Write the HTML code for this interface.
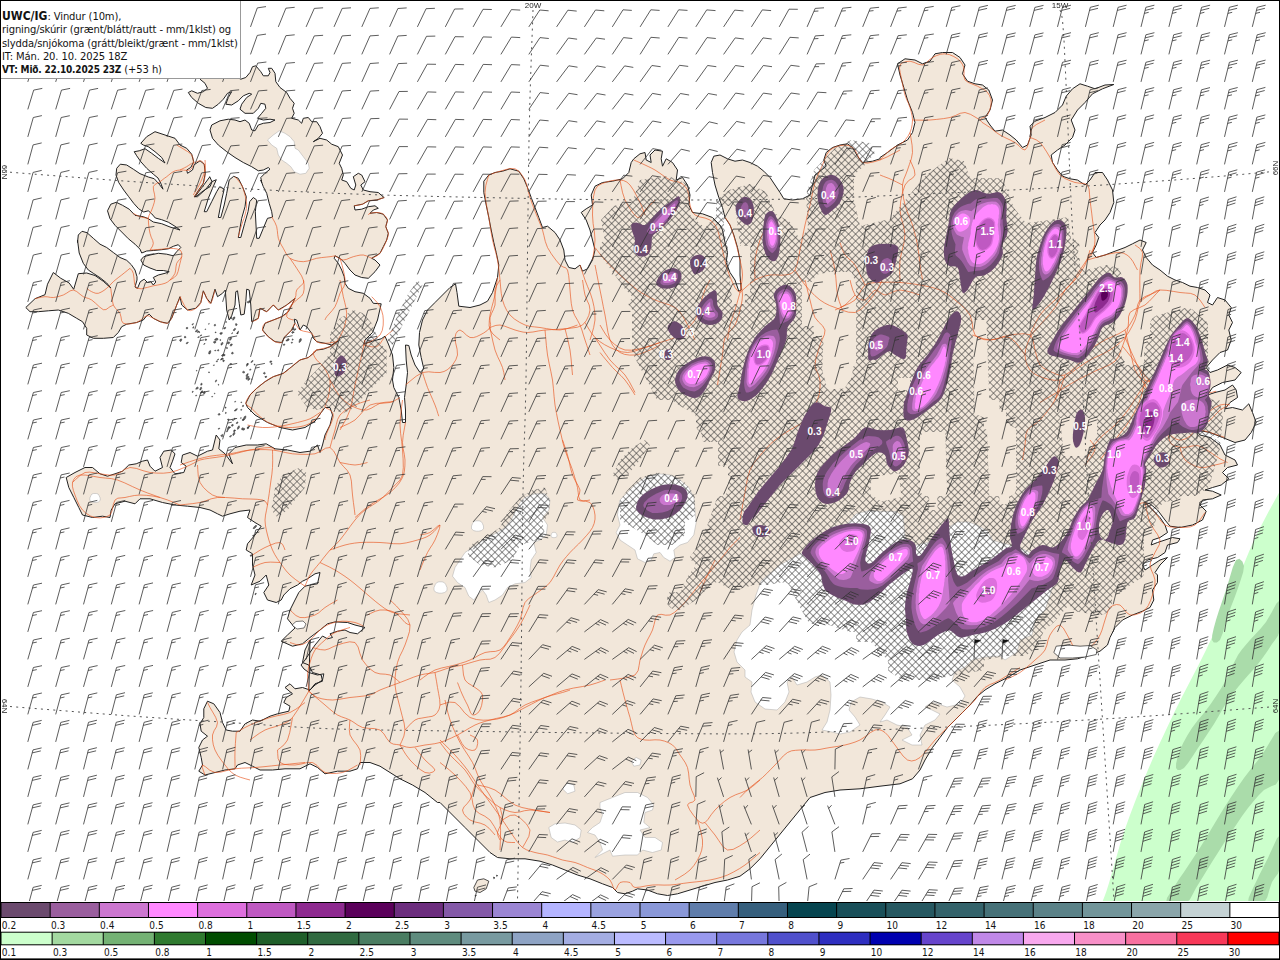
<!DOCTYPE html>
<html><head><meta charset="utf-8"><title>UWC/IG</title>
<style>
html,body{margin:0;padding:0;background:#fff;}
body{width:1280px;height:960px;position:relative;overflow:hidden;font-family:"Liberation Sans","DejaVu Sans",sans-serif;}
#lg{position:absolute;left:1px;top:1px;width:239px;height:77px;background:#fff;border-right:1px solid #999;border-bottom:1px solid #999;font-family:"DejaVu Sans","Liberation Sans",sans-serif;font-size:10px;line-height:13.25px;color:#111;padding:0;box-sizing:content-box;white-space:nowrap;letter-spacing:-0.12px}
#lg div{padding-left:1px;opacity:0.99}
#lg .l1{margin-top:9.1px}
#lg b{font-family:"DejaVu Sans Condensed","DejaVu Sans","Liberation Sans",sans-serif;font-weight:bold;letter-spacing:-0.17px}
#lg .l1 b{font-size:12px;letter-spacing:0}
</style></head><body>
<svg width="1280" height="960" viewBox="0 0 1280 960" style="position:absolute;left:0;top:0"><defs><pattern id="hx" width="5" height="5" patternUnits="userSpaceOnUse" patternTransform="rotate(45)">
<path d="M0,0.4H5M0.4,0V5" stroke="#383838" stroke-width="0.64" fill="none"/></pattern></defs><path d="M1280.0,491.0 1275.4,499.3 1268.9,511.1 1261.7,524.7 1255.0,538.0 1249.3,550.9 1243.8,564.3 1238.3,578.1 1232.5,592.0 1226.3,606.1 1219.8,620.4 1213.1,635.1 1206.0,650.0 1198.3,665.5 1190.0,681.5 1181.7,697.5 1174.0,713.0 1166.9,727.9 1160.2,742.3 1153.7,756.6 1147.5,771.0 1141.4,785.6 1135.6,800.2 1130.1,814.8 1125.0,829.0 1120.3,843.6 1116.0,858.4 1112.2,872.0 1109.0,883.0 1106.5,890.9 1104.5,896.4 1103.0,900.2 1102.0,903.0 1280.0,903.0Z" fill="#ccffcc"/>
<path d="M1280.0,600.0 1276.4,603.6 1271.3,613.0 1266.0,622.0 1260.7,628.4 1255.1,634.4 1250.0,640.0 1245.7,644.9 1241.9,649.4 1238.0,655.0 1234.1,662.6 1230.3,671.3 1226.0,680.0 1221.0,688.4 1215.6,696.8 1210.0,705.0 1203.9,712.9 1197.6,720.5 1192.0,728.0 1187.3,735.6 1183.2,743.0 1180.0,750.0 1177.6,757.0 1176.1,763.5 1176.0,768.0 1177.6,770.1 1180.4,770.1 1184.0,768.0 1188.1,763.0 1193.0,755.7 1198.0,748.0 1203.3,740.3 1208.7,732.1 1214.0,724.0 1218.7,715.9 1223.3,707.7 1228.0,700.0 1233.3,692.9 1238.7,686.2 1244.0,680.0 1248.8,674.5 1253.4,669.5 1258.0,664.0 1262.9,657.4 1267.8,650.4 1272.0,644.0 1275.4,639.5 1278.1,635.6 1280.0,630.0 1281.1,619.3 1281.3,606.7Z" fill="#aadcaa"/>
<path d="M1280.0,730.0 1275.3,733.0 1268.7,744.1 1262.0,755.0 1256.1,762.6 1250.1,769.9 1244.0,778.0 1237.4,787.5 1230.6,797.7 1224.0,808.0 1217.9,818.1 1211.9,828.1 1206.0,838.0 1199.8,847.9 1193.6,857.5 1188.0,866.0 1183.5,872.7 1179.6,878.3 1176.0,884.0 1171.4,891.0 1167.0,898.0 1166.0,903.0 1170.8,905.0 1179.0,904.8 1186.0,903.0 1189.9,899.5 1192.6,894.4 1196.0,888.0 1200.8,880.2 1206.3,871.2 1212.0,862.0 1217.9,852.7 1223.9,843.3 1230.0,834.0 1236.1,824.9 1242.1,816.0 1248.0,808.0 1253.5,801.2 1258.7,795.3 1264.0,790.0 1269.9,786.9 1275.9,784.4 1280.0,778.0 1281.9,762.0 1281.9,741.9Z" fill="#aadcaa"/>
<path d="M1280.0,835.0 1276.9,838.5 1272.4,848.2 1268.0,858.0 1263.9,866.0 1259.7,874.2 1256.0,882.0 1252.1,890.0 1248.7,897.7 1248.0,903.0 1251.9,905.3 1258.4,905.3 1264.0,903.0 1267.3,897.3 1269.6,889.3 1272.0,882.0 1275.0,877.5 1277.9,873.8 1280.0,868.0 1281.0,856.3 1281.2,842.6Z" fill="#aadcaa"/>
<path d="M1236.0,560.0 1232.8,567.3 1229.4,578.7 1226.0,590.0 1222.4,600.4 1218.9,610.7 1216.0,620.0 1213.8,628.1 1212.2,635.2 1212.0,640.0 1213.8,642.4 1216.9,642.6 1220.0,640.0 1222.6,633.6 1225.2,624.4 1228.0,615.0 1231.3,606.0 1234.9,596.7 1238.0,588.0 1240.8,579.7 1243.2,572.0 1244.0,566.0 1242.4,561.5 1239.3,558.7Z" fill="#aadcaa"/>
<path d="M25.8,307.5 35.0,298.7 45.0,294.7 47.5,284.2 53.3,272.5 60.8,278.3 69.2,283.0 73.7,289.3 78.3,273.7 86.7,273.0 95.0,275.5 103.3,281.3 110.8,288.0 106.7,283.0 100.0,277.7 93.3,273.3 88.3,270.0 83.3,263.3 79.2,253.0 77.5,240.0 77.5,242.5 78.3,235.0 82.0,231.3 87.0,232.7 93.3,238.3 100.0,244.2 106.7,247.5 113.3,252.5 120.0,257.5 126.7,260.3 131.3,264.7 135.0,270.0 137.0,276.7 137.0,280.0 135.0,287.0 137.5,288.3 140.3,281.7 144.2,279.2 147.5,282.5 150.8,281.7 153.3,285.0 155.8,282.0 153.3,277.5 158.3,275.0 165.0,273.3 169.2,271.7 163.3,270.5 156.7,270.5 150.0,268.0 143.7,265.0 140.8,260.0 143.7,256.7 150.0,255.0 158.3,253.3 166.7,254.2 173.3,255.8 176.7,251.7 180.8,247.5 178.3,244.7 173.3,246.3 168.3,248.8 161.7,249.7 153.3,250.5 146.7,251.0 141.7,253.0 140.0,249.2 135.0,244.2 128.3,238.7 121.7,232.0 115.0,225.3 110.0,218.7 107.5,210.8 110.8,204.2 116.3,202.3 122.5,205.3 129.2,209.2 135.0,215.3 143.3,216.7 148.3,218.7 153.3,222.0 161.7,223.7 170.0,227.0 180.0,230.0 175.0,226.3 168.3,222.2 161.7,219.7 155.3,218.0 151.7,213.8 148.3,210.8 143.7,212.0 138.7,208.8 133.7,203.3 128.7,196.7 123.7,190.0 118.7,182.5 116.0,175.0 116.7,168.3 120.3,164.2 126.7,165.0 133.3,169.2 140.0,173.7 148.3,177.0 154.2,178.7 159.2,184.2 163.0,189.2 160.8,183.3 158.0,178.0 153.3,174.2 146.7,168.3 140.8,161.7 136.7,155.8 134.2,151.7 139.2,150.8 145.0,148.7 151.7,153.3 158.3,158.3 165.0,163.0 161.7,157.5 155.0,151.7 148.3,146.7 143.3,145.0 140.8,143.3 146.7,136.7 155.0,131.7 165.0,135.0 175.0,138.3 180.0,145.0 186.7,148.3 191.7,154.2 193.7,161.7 190.8,167.5 186.7,170.0 187.5,173.3 192.5,170.0 194.2,164.7 200.0,160.8 204.2,164.2 205.3,173.3 203.3,183.3 198.7,190.0 194.2,197.0 197.0,195.8 203.3,190.8 210.0,186.7 212.0,181.7 209.7,176.7 209.7,177.0 202.5,186.7 195.0,196.7 197.5,196.7 205.8,189.2 211.7,181.7 216.3,179.7 212.5,188.3 208.3,198.3 204.2,211.7 206.7,211.7 211.7,201.7 216.7,191.7 219.7,186.7 224.2,189.2 221.7,200.0 218.3,217.5 220.8,217.5 224.2,205.0 226.7,193.3 229.2,180.0 233.7,176.3 238.3,178.3 242.5,186.7 246.3,196.7 245.0,206.7 241.7,218.3 238.3,237.5 240.8,237.5 244.7,223.3 248.0,211.7 249.7,201.7 253.3,197.5 256.7,200.0 255.3,211.7 256.7,238.3 259.2,238.3 263.3,228.3 267.5,218.3 271.3,217.5 272.5,217.0 271.7,211.7 269.2,203.3 266.7,193.3 263.3,186.7 260.8,180.0 261.7,182.5 260.8,177.5 265.0,173.3 270.0,169.2 268.3,167.5 263.3,170.0 258.3,170.8 251.7,166.7 243.3,162.5 235.0,157.5 226.7,151.7 218.3,145.0 212.5,138.3 210.0,130.0 211.7,125.0 220.0,120.8 228.3,119.2 235.0,120.0 240.0,121.7 245.0,120.0 249.2,123.3 251.7,130.0 255.0,130.8 258.3,125.0 263.3,123.3 270.0,122.5 275.0,120.0 270.0,119.2 263.3,120.0 257.5,118.3 261.7,113.3 265.8,108.3 265.0,104.2 260.8,103.3 258.3,108.3 253.3,113.3 245.0,113.3 240.0,109.2 241.7,104.2 246.7,97.5 251.7,94.2 249.2,93.3 243.3,95.8 238.3,100.8 231.7,105.0 225.8,104.2 228.3,97.5 231.7,91.7 227.5,93.3 223.3,99.2 218.3,104.2 212.5,108.3 205.8,107.5 198.3,103.3 191.7,97.5 188.3,92.5 191.7,90.8 197.5,93.3 203.3,91.7 207.5,88.3 205.0,83.3 200.0,79.2 211.7,73.3 225.0,71.7 240.8,79.2 245.8,77.5 250.0,72.5 252.5,66.7 255.8,65.8 260.8,71.7 263.3,75.8 268.3,75.8 270.0,72.5 268.3,68.3 271.7,68.3 275.0,73.3 275.8,81.7 280.0,87.5 286.7,92.5 290.0,98.3 294.2,103.3 292.5,108.3 294.2,113.3 291.7,118.3 298.3,120.0 301.7,123.3 303.3,118.3 308.3,117.5 311.7,121.7 316.7,121.7 320.0,126.7 322.5,133.3 318.3,138.3 313.3,141.7 320.0,138.3 326.7,140.0 331.7,144.2 338.3,146.7 342.5,155.0 339.2,163.3 341.7,168.3 343.3,175.0 341.7,180.0 346.7,181.7 350.8,188.3 354.2,190.0 355.8,185.0 353.3,176.7 358.3,173.3 361.7,175.0 365.0,181.7 360.8,185.0 363.3,190.0 370.0,191.7 378.3,192.5 383.0,196.7 384.2,197.5 376.7,200.0 368.3,200.8 362.5,204.2 354.2,205.8 355.0,210.0 361.7,209.2 368.3,206.7 375.0,205.8 378.3,208.3 373.3,210.0 370.0,213.3 376.7,212.5 383.3,214.2 387.5,220.0 385.8,226.7 388.3,233.3 386.7,240.0 383.3,246.7 380.0,253.3 371.7,258.3 375.0,260.0 380.0,265.0 375.0,271.7 368.3,278.3 361.7,277.5 355.0,275.0 350.0,270.0 345.0,263.3 340.0,258.3 335.0,255.8 334.2,258.3 338.3,263.3 341.7,270.0 344.2,276.7 345.0,283.3 348.3,288.3 355.0,291.7 363.3,293.3 370.0,298.3 373.3,303.3 381.2,303.8 377.5,320.0 372.5,332.5 365.0,340.0 363.8,343.8 372.5,341.2 381.2,338.8 385.0,336.2 388.8,345.0 392.5,355.0 393.8,367.5 392.5,380.0 393.8,387.5 398.8,397.5 401.2,410.0 402.5,422.5 405.5,422.5 405.5,410.0 404.5,397.5 406.2,385.0 407.5,372.5 406.2,360.0 405.5,345.0 408.8,345.5 411.2,355.0 415.0,365.0 420.0,372.5 423.8,368.8 421.2,357.5 418.8,345.0 419.5,332.5 422.5,320.0 427.5,310.0 435.0,302.5 442.5,295.0 450.0,287.5 455.5,283.8 457.0,292.5 458.8,306.2 470.0,307.5 480.0,305.0 487.5,301.2 492.5,292.5 497.5,277.5 498.8,265.0 496.2,252.5 493.8,242.5 491.2,230.0 488.8,217.5 486.2,205.0 483.8,192.5 483.8,181.2 488.8,175.0 495.0,172.5 502.5,171.2 510.0,168.8 518.8,171.2 523.8,178.8 527.5,187.5 531.2,197.5 535.0,207.5 538.8,217.5 542.5,227.5 547.5,226.2 555.0,232.5 560.0,240.0 563.8,250.0 565.0,260.0 568.8,267.5 575.0,268.8 580.0,265.0 582.5,271.2 587.5,268.8 592.5,260.0 595.0,250.0 592.5,240.0 590.0,230.0 586.2,220.0 581.2,212.5 586.2,208.8 592.5,205.0 591.2,195.0 595.0,186.2 602.5,182.5 612.5,181.2 622.5,178.8 628.8,172.5 631.2,162.5 633.8,158.8 640.0,153.8 645.0,152.5 646.2,160.0 651.2,162.5 650.0,155.0 655.0,150.0 662.5,151.2 661.2,158.8 662.5,166.2 666.2,158.8 672.5,162.5 677.5,170.0 676.2,180.0 682.5,177.5 687.5,185.0 690.0,195.0 688.8,205.0 692.5,212.5 702.5,213.8 712.5,217.5 720.0,225.0 722.5,230.0 725.0,242.5 727.5,252.5 726.2,262.5 730.0,272.5 735.0,280.0 738.8,291.2 741.2,290.0 740.0,275.0 740.0,260.0 737.5,247.5 733.8,235.0 730.0,225.0 725.0,217.5 722.5,207.5 718.8,197.5 715.0,185.0 712.5,172.5 711.2,162.5 713.8,156.2 720.0,155.0 727.5,158.8 735.0,161.2 742.5,160.0 750.0,162.5 757.5,166.2 763.8,171.2 770.0,177.5 775.0,185.0 780.0,192.5 783.8,198.8 792.5,200.0 802.5,198.8 810.0,195.0 812.5,185.0 815.0,175.0 820.0,171.2 826.2,166.2 823.8,160.0 826.2,152.5 832.5,147.5 840.0,145.0 847.5,143.8 852.5,147.5 857.5,156.2 862.5,162.5 872.5,161.2 880.0,158.8 880.0,157.5 887.5,152.5 897.5,145.0 907.5,140.0 912.5,132.5 915.0,122.5 912.5,112.5 907.5,100.0 903.8,87.5 900.0,75.0 897.5,63.8 905.0,58.8 915.0,60.0 922.5,63.8 930.0,61.2 935.0,53.8 942.5,52.5 952.5,52.5 960.0,57.5 965.0,65.0 962.5,73.8 967.5,81.2 975.0,83.8 982.5,85.0 988.8,90.0 992.5,100.0 990.0,110.0 985.0,117.5 990.0,125.0 995.0,131.2 1002.5,130.0 1010.0,135.0 1016.2,140.0 1022.5,147.5 1027.5,145.0 1031.2,135.0 1030.0,126.2 1035.0,121.2 1045.0,117.5 1055.0,112.5 1062.5,105.0 1066.2,96.2 1072.5,88.8 1080.0,83.8 1087.5,86.2 1095.0,88.8 1105.0,85.0 1113.8,84.5 1102.5,88.8 1092.5,93.8 1085.0,102.5 1077.5,110.0 1071.2,120.0 1075.0,130.0 1072.5,137.5 1065.0,145.0 1057.5,150.0 1051.2,155.0 1052.5,162.5 1057.5,170.0 1062.5,176.2 1070.0,178.8 1077.5,180.0 1085.0,185.0 1090.0,180.0 1095.0,172.5 1102.5,172.5 1107.5,180.0 1112.5,190.0 1113.8,202.5 1110.0,212.5 1105.0,220.0 1105.0,220.0 1100.0,225.0 1095.0,232.5 1098.8,237.5 1096.2,245.0 1092.5,252.5 1096.2,257.5 1105.0,255.0 1115.0,251.2 1125.0,247.5 1132.5,243.8 1140.0,240.0 1146.2,242.5 1142.5,250.0 1146.2,257.5 1152.5,265.0 1160.0,270.0 1167.5,276.2 1175.0,280.0 1182.5,282.5 1190.0,286.2 1197.5,287.5 1205.0,290.0 1210.0,295.0 1207.5,302.5 1212.5,305.0 1217.5,297.5 1225.0,300.0 1231.2,307.5 1228.8,315.0 1232.5,322.5 1228.8,330.0 1231.2,340.0 1227.5,350.0 1220.0,352.5 1212.5,360.0 1206.2,367.5 1210.0,372.5 1217.5,370.0 1227.5,365.0 1235.0,367.5 1241.2,372.5 1235.0,380.0 1222.5,382.5 1212.5,387.5 1207.5,395.0 1215.0,392.5 1225.0,390.0 1232.5,385.0 1236.2,390.0 1237.5,397.5 1230.0,402.5 1225.0,408.8 1232.5,407.5 1242.5,410.0 1248.8,403.8 1252.5,412.5 1256.2,422.5 1251.2,432.5 1245.0,440.0 1235.0,442.5 1222.5,437.5 1210.0,432.5 1196.2,430.0 1200.0,435.0 1210.0,437.5 1220.0,445.0 1225.0,455.0 1235.0,460.0 1237.5,465.0 1227.5,467.5 1222.5,472.5 1228.8,478.8 1221.2,485.0 1212.5,487.5 1205.0,490.0 1212.5,491.2 1221.2,495.0 1212.5,498.8 1202.5,500.0 1200.0,505.0 1206.2,511.2 1202.5,520.0 1192.5,525.0 1180.0,527.5 1170.0,526.2 1165.0,520.0 1157.5,510.0 1150.0,503.8 1145.0,502.5 1150.0,507.5 1155.0,512.5 1160.0,517.5 1165.0,525.0 1167.5,532.5 1160.0,537.5 1152.5,540.0 1151.2,545.0 1157.5,542.5 1165.0,540.0 1172.5,537.5 1180.0,538.8 1177.5,542.5 1167.5,545.0 1165.0,552.5 1157.5,557.5 1147.5,560.0 1142.5,565.0 1145.0,570.0 1152.5,565.0 1160.0,560.0 1167.5,557.5 1160.0,565.0 1155.0,572.5 1157.5,575.0 1157.5,582.5 1152.5,590.0 1153.8,600.0 1150.0,607.5 1142.5,611.2 1132.5,615.0 1122.5,620.0 1115.0,627.5 1110.0,637.5 1107.5,645.0 1100.0,651.2 1090.0,655.0 1077.5,658.8 1065.0,660.0 1050.0,660.0 1035.0,665.0 1020.0,670.0 1020.0,670.0 1007.5,677.5 995.0,683.8 985.0,690.0 977.5,696.2 970.0,705.0 962.5,712.5 955.0,720.0 947.5,727.5 940.0,737.5 932.5,747.5 925.0,760.0 920.0,770.0 912.5,778.8 900.0,783.8 880.0,786.2 860.0,788.8 840.0,790.0 825.0,792.5 810.0,797.5 760.0,858.8 750.0,868.8 740.0,876.2 727.5,880.0 715.0,882.5 702.5,886.2 690.0,890.0 677.5,893.8 667.5,895.5 657.5,893.8 647.5,890.0 637.5,888.8 632.5,891.2 625.0,893.8 617.5,892.5 612.5,887.5 602.5,883.8 590.0,878.8 577.5,875.0 565.0,870.0 552.5,865.0 540.0,861.2 525.0,858.8 510.0,858.8 497.5,857.5 490.0,852.5 477.5,840.0 465.0,827.5 452.5,815.0 440.0,802.5 437.5,802.5 425.0,792.5 412.5,785.0 400.0,778.8 390.0,772.5 380.0,766.2 370.0,762.5 360.0,762.5 357.5,768.8 350.0,771.2 337.5,771.2 325.0,773.8 317.5,767.5 310.0,763.8 300.0,768.8 285.0,768.8 272.5,770.0 260.0,770.0 252.5,766.2 245.0,762.5 237.5,765.0 235.0,768.8 225.0,770.0 215.0,772.5 205.0,775.0 198.8,771.2 202.5,765.0 201.2,757.5 198.8,747.5 202.5,740.0 207.5,736.2 201.2,731.2 200.0,723.8 203.8,717.5 203.8,708.8 207.5,701.2 213.8,703.8 220.0,712.5 222.5,722.5 226.2,730.0 232.5,731.2 240.0,731.2 245.0,723.8 252.5,720.0 260.0,721.2 270.0,716.2 277.5,713.8 288.8,711.2 290.0,706.2 283.8,702.5 286.2,697.5 292.5,693.8 285.0,687.5 290.0,683.8 295.0,688.8 302.5,687.5 310.0,690.0 315.0,683.8 322.5,681.2 321.2,675.0 312.5,672.5 308.8,665.0 302.5,662.5 305.0,650.0 310.0,640.0 308.8,691.2 315.0,685.0 322.5,680.0 323.8,673.8 317.5,675.0 308.8,672.5 304.0,669.0 301.0,665.0 305.0,660.0 310.0,652.5 315.0,645.0 322.5,636.0 327.5,638.8 332.5,637.5 330.0,633.8 337.5,631.2 345.0,630.0 350.0,632.5 357.5,633.8 365.0,627.5 355.0,625.0 347.5,622.5 335.0,621.9 327.5,623.8 320.0,630.0 310.0,637.5 302.5,643.8 292.5,646.2 281.2,641.2 287.5,635.0 295.0,628.0 287.5,618.8 290.0,610.0 295.0,600.0 298.8,592.5 305.0,586.2 310.0,585.0 317.5,583.8 320.0,572.5 315.0,573.8 307.5,578.8 302.5,581.2 297.5,585.0 290.0,588.8 283.8,595.0 281.2,600.0 276.2,602.5 267.5,600.0 263.8,592.5 268.8,585.0 266.2,575.0 260.0,581.2 251.2,585.0 255.0,575.0 252.5,565.0 252.5,553.8 246.2,550.0 247.5,543.8 255.0,535.0 261.2,526.2 255.0,522.5 247.5,517.5 250.0,510.0 240.0,511.2 230.0,513.8 222.5,516.2 217.5,513.8 210.0,510.0 200.0,507.5 187.5,506.2 175.0,505.0 162.5,502.5 150.0,498.8 140.0,498.8 135.0,503.8 125.0,501.2 115.0,503.8 111.2,510.0 110.0,517.5 102.5,516.2 92.5,517.5 82.5,515.0 78.8,507.5 73.8,497.5 68.8,487.5 66.2,477.5 75.0,472.5 85.0,467.5 92.5,467.5 100.0,473.8 107.5,476.2 115.0,473.8 122.5,471.2 128.8,465.0 136.2,463.8 142.5,461.2 147.5,460.0 150.0,466.2 155.0,471.2 162.5,467.5 160.0,457.5 163.8,451.2 171.2,450.0 175.0,453.8 172.5,461.2 170.0,467.5 175.0,473.8 183.8,472.5 186.2,466.2 181.2,462.5 182.5,455.0 190.0,452.5 197.5,456.2 207.5,451.2 212.5,450.0 216.2,435.0 220.0,440.0 218.8,448.8 225.0,453.8 232.5,463.8 228.8,453.8 235.0,447.5 246.2,445.0 257.5,445.0 266.2,443.8 275.0,448.8 287.5,450.0 300.0,452.5 310.0,451.2 317.5,445.0 320.0,452.5 322.5,445.0 325.0,435.0 330.0,425.0 332.5,415.0 330.0,407.5 325.0,407.5 321.2,412.5 315.0,421.2 305.0,427.5 292.5,430.0 280.0,427.5 267.5,422.5 255.0,415.0 247.5,407.5 245.8,403.3 250.0,395.0 256.7,388.3 265.0,381.7 273.3,376.7 283.3,373.3 291.7,366.7 300.0,360.0 308.3,357.5 313.3,353.3 316.7,350.0 323.3,349.2 330.0,346.7 338.3,340.8 336.7,341.7 331.7,345.0 325.0,343.3 316.7,341.7 313.3,338.3 311.7,333.3 306.7,326.7 303.3,325.0 300.0,330.0 296.7,320.0 294.2,319.2 295.0,323.3 291.7,330.0 285.0,336.7 281.7,342.5 275.0,341.7 268.3,336.7 262.5,330.0 265.0,323.3 273.3,320.0 281.7,316.7 288.3,311.7 295.0,298.3 286.7,305.0 278.3,310.0 273.3,305.0 266.7,311.7 260.0,308.3 258.3,318.3 251.7,321.7 250.8,305.0 249.2,290.0 246.7,289.2 245.8,301.7 244.2,314.2 240.8,315.0 239.2,303.3 237.5,290.8 235.8,291.7 235.0,305.0 231.7,315.8 229.2,320.0 226.7,310.0 225.3,290.0 222.5,293.3 217.5,296.7 215.0,289.2 210.8,303.3 206.7,298.3 203.3,290.8 200.8,302.5 195.8,308.3 187.5,310.0 181.7,305.0 180.0,296.7 176.7,305.0 174.2,311.7 171.7,318.3 167.5,323.3 160.0,321.7 153.3,318.3 149.2,314.2 146.7,315.8 143.3,320.0 136.7,322.5 126.7,324.2 121.7,326.7 118.3,332.5 113.3,337.5 103.3,338.3 93.3,338.3 86.7,335.0 86.7,328.3 82.5,321.7 76.7,318.3 68.3,313.3 58.3,310.0 48.3,310.8 38.3,311.7 30.0,311.7Z" fill="#f2e7da" stroke="#222" stroke-width="1" stroke-linejoin="round"/>
<path d="M267.5,140.0 273.3,135.0 279.2,130.8 285.0,133.3 290.0,136.7 294.2,141.7 295.0,148.3 298.3,150.0 303.3,156.7 308.3,163.3 309.2,168.3 305.8,173.3 300.0,174.2 294.2,171.7 290.8,166.7 286.7,163.3 281.7,160.0 278.3,155.0 276.7,148.3 271.7,145.0Z" fill="#fff" stroke="#aaa" stroke-width="0.5" stroke-linejoin="round"/>
<path d="M100.2,498.0 100.2,500.4 98.4,502.0 96.0,502.5 94.0,502.5 91.6,502.0 89.8,500.4 89.8,498.0 90.9,495.6 91.9,494.0 93.7,493.5 96.3,493.5 98.1,494.0 99.1,495.6Z" fill="#fff" stroke="#aaa" stroke-width="0.5" stroke-linejoin="round"/>
<path d="M525.0,497.5 535.0,493.8 545.0,493.8 550.0,500.0 548.8,510.0 542.5,517.5 547.5,525.0 546.2,535.0 540.0,540.0 533.8,542.5 536.2,552.5 531.2,560.0 530.0,570.0 531.2,577.5 525.0,582.5 515.0,583.8 507.5,587.5 502.5,595.0 495.0,600.0 488.8,602.5 486.2,595.0 482.5,590.0 477.5,595.0 473.8,600.0 468.8,596.2 465.0,587.5 457.5,582.5 452.5,576.2 455.0,567.5 460.0,560.0 465.0,552.5 472.5,547.5 480.0,542.5 487.5,537.5 497.5,532.5 505.0,527.5 511.2,520.0 516.2,510.0 520.0,502.5Z" fill="#fff" stroke="#aaa" stroke-width="0.5" stroke-linejoin="round"/>
<path d="M620.0,500.0 627.5,492.5 635.0,485.0 645.0,477.5 657.5,473.8 670.0,475.0 680.0,480.0 688.8,487.5 693.8,497.5 695.0,510.0 696.2,522.5 693.8,535.0 687.5,542.5 680.0,545.0 673.8,550.0 675.0,557.5 670.0,561.2 663.8,557.5 660.0,552.5 653.8,553.8 651.2,560.0 645.0,562.5 637.5,558.8 635.0,550.0 627.5,545.0 620.0,540.0 616.2,532.5 620.0,525.0 617.5,515.0 618.8,505.0Z" fill="#fff" stroke="#aaa" stroke-width="0.5" stroke-linejoin="round"/>
<path d="M483.5,526.0 483.5,528.8 481.4,530.6 478.7,531.2 476.3,531.2 473.6,530.6 471.5,528.8 471.5,526.0 472.7,523.2 474.0,521.4 476.0,520.8 479.0,520.8 481.0,521.4 482.3,523.2Z" fill="#fff" stroke="#aaa" stroke-width="0.5" stroke-linejoin="round"/>
<path d="M447.0,587.5 447.0,590.5 444.8,592.4 441.8,593.2 439.2,593.2 436.2,592.4 434.0,590.5 434.0,587.5 435.3,584.5 436.7,582.6 438.9,581.8 442.1,581.8 444.3,582.6 445.7,584.5Z" fill="#fff" stroke="#aaa" stroke-width="0.5" stroke-linejoin="round"/>
<path d="M557.0,535.0 557.0,536.4 556.0,537.3 554.6,537.6 553.4,537.6 552.0,537.3 551.0,536.4 551.0,535.0 551.6,533.6 552.2,532.7 553.3,532.4 554.7,532.4 555.8,532.7 556.4,533.6Z" fill="#fff" stroke="#aaa" stroke-width="0.5" stroke-linejoin="round"/>
<path d="M600.0,802.5 612.5,797.5 625.0,792.5 637.5,792.5 647.5,797.5 653.8,805.0 652.5,810.0 645.0,812.5 643.8,822.5 650.0,827.5 640.0,830.0 645.0,837.5 655.0,837.5 662.5,842.5 661.2,850.0 652.5,852.5 642.5,850.0 637.5,855.0 625.0,855.0 612.5,856.2 610.0,850.0 605.0,852.5 595.0,857.5 602.5,850.0 600.0,842.5 595.0,835.0 587.5,832.5 592.5,827.5 600.0,822.5 602.5,815.0 600.0,807.5Z" fill="#fff" stroke="#aaa" stroke-width="0.5" stroke-linejoin="round"/>
<path d="M548.8,827.5 555.0,823.8 565.0,823.0 575.0,825.0 581.2,830.0 580.0,837.5 572.5,842.5 565.0,840.0 557.5,842.0 551.2,837.5Z" fill="#fff" stroke="#aaa" stroke-width="0.5" stroke-linejoin="round"/>
<path d="M562.5,788.8 567.5,782.5 573.8,785.0 575.0,791.2 567.5,793.8Z" fill="#fff" stroke="#aaa" stroke-width="0.5" stroke-linejoin="round"/>
<path d="M631.2,761.2 636.2,757.5 641.2,760.0 640.0,765.0 633.8,766.2Z" fill="#fff" stroke="#aaa" stroke-width="0.5" stroke-linejoin="round"/>
<path d="M802.5,552.5 820.0,540.0 832.0,527.0 847.0,524.0 856.0,514.0 869.0,510.6 882.5,511.5 895.6,511.5 903.0,516.0 904.0,525.6 905.0,537.0 912.5,546.0 927.5,542.5 938.8,533.0 948.0,527.5 957.5,522.0 968.8,522.0 978.0,525.6 987.5,531.0 993.0,540.6 1010.0,545.0 1025.0,550.0 1042.0,560.0 1055.0,580.0 1050.0,595.0 1045.0,610.0 1035.0,620.0 1032.0,635.0 1020.0,640.0 1017.0,652.0 1005.0,660.0 1000.0,656.0 985.0,657.0 972.0,660.0 965.0,667.0 955.0,672.0 952.0,680.0 960.0,687.0 965.0,696.0 960.0,704.0 947.0,707.0 932.0,702.0 925.0,707.0 932.0,710.0 940.0,714.0 935.0,720.0 925.0,725.0 920.0,735.0 922.0,745.0 912.0,745.0 902.0,740.0 912.0,735.0 907.0,727.0 897.0,725.0 887.0,720.0 880.0,722.0 885.0,715.0 890.0,707.0 882.0,702.0 872.0,699.0 860.0,697.0 851.0,702.0 849.0,710.0 855.0,717.0 860.0,725.0 850.0,732.0 840.0,734.0 832.0,732.0 822.0,730.0 827.0,722.0 830.0,710.0 831.0,695.0 830.0,682.0 822.0,675.0 815.0,677.0 807.0,682.0 797.0,685.0 792.0,677.0 787.0,682.0 789.0,692.0 785.0,702.0 777.0,710.0 765.0,709.0 755.0,702.0 751.0,692.0 752.0,682.0 745.0,677.0 745.0,670.0 737.0,662.0 734.0,652.0 737.0,640.0 742.0,632.0 750.0,625.0 752.0,610.0 756.0,595.0 761.0,581.0 780.0,565.0Z" fill="#fff" stroke="#aaa" stroke-width="0.5" stroke-linejoin="round"/>
<path d="M308.8,691.2 310.8,693.0 313.8,695.5 317.5,697.5 321.9,698.8 327.1,699.7 332.5,700.0 338.1,699.5 343.9,698.5 350.0,697.5 356.9,696.8 364.0,696.0 370.0,695.0 373.7,693.6 376.3,691.9 380.0,690.0 385.9,687.7 393.0,685.1 400.0,682.5 406.9,679.8 413.7,677.1 420.0,675.0 425.4,673.9 430.2,673.3 435.0,672.5 440.1,670.9 445.2,669.1 450.0,667.5 454.2,666.6 458.1,665.9 462.5,665.0 468.1,663.4 474.2,661.6 480.0,660.0 485.3,659.4 490.3,659.2 495.0,657.5 499.4,653.5 503.4,648.1 507.5,642.5 511.8,636.9 516.0,631.1 520.0,625.0 523.9,617.8 527.5,610.3 530.0,605.0M308.8,691.2 313.1,695.0 319.3,700.2 325.0,705.0 329.4,708.8 333.5,712.2 337.5,715.0 341.7,716.9 345.8,718.3 350.0,720.0 354.0,722.5 358.0,725.3 362.5,727.5 368.2,728.3 374.5,728.6 380.0,730.0 383.9,733.8 386.9,738.7 390.0,742.5 393.3,744.1 396.7,744.5 400.0,745.0 403.1,746.0 406.3,747.0 410.0,747.5 414.6,747.0 419.8,746.0 425.0,745.0 429.9,744.4 434.8,743.7 440.0,742.5 445.6,740.5 451.6,737.9 457.5,735.0 463.4,731.7 469.4,728.1 475.0,725.0 480.0,723.0 484.7,721.5 490.0,720.0 496.5,718.4 503.5,716.9 510.0,715.0 515.2,712.8 519.8,710.3 525.0,707.5 531.4,704.2 538.3,700.6 545.0,697.5 551.4,695.4 557.5,693.8 562.5,692.5 566.0,691.4 568.4,690.6 570.0,690.0M350.0,720.0 349.6,723.9 349.3,729.4 350.0,735.0 353.0,740.0 357.0,745.0 360.0,750.0 360.7,755.6 360.4,761.1 360.0,765.0M400.0,745.0 401.7,741.4 403.9,736.1 405.0,730.0 404.1,723.1 402.0,715.3 400.0,707.5 398.1,700.0 396.1,692.5 395.0,685.0 395.1,677.3 396.0,669.6 397.5,662.5 399.7,656.4 402.5,650.8 405.0,645.0 407.4,638.3 409.5,631.4 410.0,625.0 407.8,619.4 403.9,614.4 400.0,610.0 396.3,605.9 392.6,602.4 390.0,600.0M400.0,745.0 402.4,749.0 405.9,754.6 410.0,760.0 414.8,764.9 420.2,769.5 425.0,772.5 429.4,773.1 433.3,771.9 435.0,770.0 433.1,767.3 429.1,763.8 425.0,760.0 421.3,755.6 417.6,750.8 415.0,747.5M440.0,742.5 442.4,745.6 445.9,750.2 450.0,755.0 454.8,759.8 460.2,764.9 465.0,770.0 468.6,775.1 471.7,780.2 475.0,785.0 479.0,789.4 483.2,793.6 487.5,797.5 491.6,801.2 495.6,804.6 500.0,807.5 504.8,809.8 509.9,811.6 515.0,812.5 519.8,812.0 524.6,810.7 530.0,810.0 537.0,810.6 544.6,811.7 550.0,812.5M475.0,785.0 473.8,789.1 472.0,794.8 470.0,800.0 467.1,803.7 464.0,806.9 462.5,810.0 463.6,813.5 466.4,817.0 470.0,820.0 474.6,821.9 480.1,823.1 485.0,825.0 489.1,828.3 492.6,832.2 495.0,835.0M435.0,672.5 435.6,676.3 436.6,681.8 437.5,687.5 438.6,693.4 439.7,699.6 440.0,705.0 439.1,709.2 437.3,712.5 435.0,715.0 432.0,716.4 428.5,716.9 425.0,717.5 421.7,718.1 418.3,718.6 415.0,720.0 411.3,723.1 407.6,727.1 405.0,730.0M462.5,665.0 462.9,669.2 463.5,675.0 465.0,680.0 467.9,683.1 471.6,685.3 475.0,687.5 478.1,689.7 480.8,691.9 482.5,695.0 482.6,699.8 481.6,705.5 480.0,710.0 477.8,713.0 475.0,714.8 472.5,715.0 470.6,712.8 469.1,708.9 467.5,705.0 465.8,701.8 464.2,698.5 462.5,695.0 460.6,690.6 458.8,685.8 457.5,682.5M277.5,750.0 277.7,753.6 278.1,758.6 280.0,762.5 284.0,764.3 289.4,764.9 295.0,765.0 300.8,764.1 306.9,762.6 312.5,762.5 316.9,765.3 320.6,769.4 325.0,772.5 330.6,773.5 336.7,773.4 342.5,772.5 348.2,770.3 353.7,767.2 357.5,765.0M250.0,740.0 253.9,737.2 259.4,733.3 265.0,730.0 270.1,728.1 275.2,726.7 280.0,725.0 284.2,723.4 288.1,721.5 292.5,717.5 298.2,709.2 304.4,698.8 308.8,691.2M292.5,717.5 291.4,723.8 289.7,732.6 287.5,740.0 284.2,744.6 280.3,747.9 277.5,750.0M308.8,691.2 308.3,686.9 307.7,680.7 307.5,675.0 308.0,670.6 308.8,666.5 310.0,662.5 311.3,658.2 312.9,654.0 315.0,650.0 318.0,646.4 321.5,643.1 325.0,640.0 328.1,637.2 331.3,634.7 335.0,632.5 340.2,630.5 345.9,628.7 350.0,627.5M363.8,626.2 361.6,625.2 358.5,623.7 355.0,622.5 351.1,621.8 346.8,621.3 342.5,621.2 338.2,621.7 334.0,622.5 330.0,623.8 326.5,625.4 323.2,627.5 320.0,630.0 316.7,633.2 313.3,636.9 310.0,640.0 306.7,642.3 303.3,644.1 300.0,645.0 296.3,644.6 292.6,643.4 290.0,642.5M312.5,647.5 315.7,648.4 320.4,649.6 325.0,650.0 329.0,648.8 333.0,646.8 337.5,645.0 343.3,643.2 349.7,641.8 355.0,642.5 358.1,647.0 360.0,653.8 362.5,660.0 366.2,664.9 370.5,669.3 375.0,672.5 380.0,673.9 385.3,674.2 390.0,675.0 394.1,677.4 397.6,680.4 400.0,682.5M290.0,610.0 292.4,612.3 295.9,615.5 300.0,617.5 304.8,617.6 310.2,616.6 315.0,615.0 318.6,612.9 321.7,610.2 325.0,607.5 329.4,604.7 334.2,601.9 337.5,600.0M367.5,615.0 370.6,613.4 375.2,611.3 380.0,610.0 385.0,610.0 390.3,610.8 395.0,612.5 398.9,615.6 402.2,619.4 405.0,622.5 407.2,624.0 408.9,624.6 410.0,625.0M500.0,807.5 500.9,810.7 502.1,815.4 502.5,820.0 501.1,824.4 498.9,828.7 497.5,832.5 497.9,835.6 499.1,838.2 500.0,840.0M457.5,735.0 459.4,738.6 462.0,743.6 465.0,747.5 468.4,749.5 472.1,750.5 475.0,750.0 476.8,747.4 477.7,743.4 477.5,740.0 475.5,737.8 472.3,736.1 470.0,735.0M250.0,780.0 245.9,778.9 240.2,777.2 235.0,775.0 231.3,772.2 228.1,768.9 225.0,765.0 221.4,760.4 217.8,755.2 215.0,750.0 213.3,744.9 212.5,739.8 212.5,735.0 214.1,730.7 216.5,726.8 217.5,722.5 215.7,717.3 212.6,711.9 210.0,707.5 208.7,704.9 208.0,703.4 207.5,702.5M235.0,768.8 235.0,763.8 234.9,756.9 235.0,750.0 235.4,743.4 235.9,737.0 236.2,732.5M236.2,732.5 239.6,730.6 244.4,727.8 250.0,725.0 256.2,722.4 263.1,719.8 270.0,717.5 276.9,715.8 283.7,714.4 290.0,712.5 295.9,709.2 301.3,705.3 305.0,702.5M205.0,775.0 203.8,771.8 202.3,767.4 202.5,765.0 205.3,766.6 209.7,770.2 215.0,772.5 221.1,772.0 228.1,770.2 235.0,768.8 241.5,768.2 248.0,767.9 255.0,767.5 263.0,766.8 271.5,765.9 280.0,765.0 289.3,764.1 298.5,763.1 305.0,762.5M305.0,586.2 306.1,583.4 307.8,579.3 310.0,575.0 313.0,570.9 316.5,566.7 320.0,562.5 323.3,558.2 326.7,554.0 330.0,550.0 333.1,546.9 336.3,544.0 340.0,540.0 344.8,533.7 350.2,526.3 355.0,520.0 358.5,515.9 361.5,513.0 365.0,510.0 369.7,506.8 375.0,503.5 380.0,500.0 384.4,496.0 388.6,491.8 392.5,487.5 396.4,483.8 400.0,480.1 402.5,475.0 403.3,467.6 403.1,458.8 402.5,450.0 401.7,441.7 400.6,433.3 400.0,425.0 400.6,415.7 401.7,406.5 402.5,400.0M330.0,550.0 333.9,548.6 339.4,546.7 345.0,545.0 349.8,543.9 354.6,543.1 360.0,542.5 366.3,542.3 373.1,542.3 380.0,542.5 386.8,543.0 393.5,543.7 400.0,543.8 406.2,542.9 412.1,541.5 417.5,540.0 422.1,538.6 426.2,537.1 430.0,535.0 433.9,531.7 437.5,527.8 440.0,525.0M320.0,562.5 323.9,564.4 329.4,567.0 335.0,570.0 340.0,573.1 345.0,576.4 350.0,580.0 355.0,584.0 360.0,588.2 365.0,592.5 370.1,596.9 375.2,601.2 380.0,605.0 384.2,608.1 388.1,610.6 392.5,612.5 398.6,613.8 405.3,614.5 410.0,615.0M305.0,586.2 300.9,583.4 295.2,579.3 290.0,575.0 286.2,570.9 283.0,566.7 280.0,562.5 277.2,558.4 274.7,554.4 272.5,550.0 270.6,545.2 268.9,540.1 267.5,535.0 266.3,530.0 265.4,525.0 265.0,520.0 265.5,515.1 266.5,510.2 267.5,505.0 268.3,499.4 269.2,493.6 270.0,487.5 270.9,480.9 271.9,474.1 272.5,467.5 272.7,460.8 272.6,454.4 272.5,450.0M180.0,465.0 183.9,463.7 189.4,461.8 195.0,460.0 199.8,458.6 204.6,457.4 210.0,456.2 216.3,455.4 223.1,454.6 230.0,453.8 236.6,452.5 243.1,451.0 250.0,450.0 257.4,449.6 265.1,449.6 272.5,450.0 279.3,451.1 285.7,452.6 292.5,453.8 300.1,454.3 308.0,454.4 315.0,453.8 320.7,451.3 325.6,448.2 330.0,447.5 333.7,451.0 336.9,456.9 340.0,462.5 343.6,466.6 347.2,470.4 350.0,475.0 351.4,481.1 351.9,488.1 352.5,495.0 353.4,502.4 354.4,509.8 355.0,515.0M180.0,505.0 185.3,504.4 192.8,503.6 200.0,502.5 205.7,500.8 211.2,498.8 217.5,497.5 225.5,497.5 234.3,498.1 242.5,498.8 250.1,499.0 257.1,499.3 262.5,500.0 265.5,501.6 266.8,503.6 267.5,505.0M330.0,447.5 331.3,442.9 333.1,436.3 335.0,430.0 336.3,424.6 337.6,419.5 340.0,415.0 344.3,411.1 349.6,407.8 355.0,405.0 360.6,402.8 366.1,401.1 370.0,400.0M340.0,462.5 344.0,463.3 349.6,464.4 355.0,465.0 359.8,464.4 364.4,463.3 367.5,462.5M252.5,555.0 255.6,553.0 260.2,550.1 265.0,547.5 270.2,545.2 275.6,543.1 280.0,542.5 282.6,544.4 284.1,547.6 285.0,550.0M252.5,567.5 255.6,566.0 260.2,564.0 265.0,562.5 270.4,562.1 276.0,562.3 280.0,562.5M247.5,425.0 251.3,425.8 256.8,426.9 262.5,427.5 268.1,427.5 274.1,427.0 280.0,426.2 286.0,425.2 292.0,423.8 297.5,422.5 302.1,421.3 306.2,420.2 310.0,418.8 313.9,416.6 317.5,414.2 320.0,412.5M180.0,505.0 174.8,502.9 167.4,499.9 160.0,497.5 153.1,496.1 146.3,495.3 140.0,495.0 134.4,495.5 129.4,496.5 125.0,497.5 121.1,497.9 117.8,498.2 115.0,500.0 113.3,504.5 112.2,510.5 110.0,515.0 105.6,517.1 100.2,517.9 95.0,517.5 90.5,516.0 86.2,513.4 82.5,510.0 79.4,505.5 76.9,500.1 75.0,495.0 73.4,490.5 72.4,486.2 72.5,482.5 73.8,479.3 76.2,476.6 80.0,475.0 85.8,475.1 93.1,476.3 100.0,477.5 105.8,478.1 111.4,478.6 117.5,480.0 124.7,482.9 132.5,486.6 140.0,490.0 147.6,493.0 154.9,495.6 160.0,497.5M72.5,482.5 75.6,479.5 80.2,475.4 85.0,472.5 89.8,472.1 94.9,472.9 100.0,473.8 105.0,474.5 110.0,475.2 115.0,475.0 119.8,472.7 124.6,469.4 130.0,467.5 136.3,468.4 143.1,470.7 150.0,472.5 156.7,473.1 163.3,473.2 170.0,472.5 177.0,470.5 184.1,467.6 190.0,465.0 193.9,463.1 196.7,461.4 200.0,460.0 204.6,459.0 209.8,458.2 215.0,457.5 219.8,456.8 224.6,456.0 230.0,455.0 236.3,453.4 243.1,451.6 250.0,450.0 257.2,448.8 264.4,447.9 270.0,447.5 273.0,448.1 274.3,449.2 275.0,450.0M197.5,465.0 197.8,469.7 198.3,476.4 200.0,482.5 203.4,487.4 208.0,491.8 212.5,495.0 217.1,496.7 221.8,497.2 225.0,497.5M405.5,422.5 404.5,427.8 403.2,435.3 402.5,442.5 403.1,448.5 404.3,454.3 405.0,460.0 404.9,465.9 404.3,471.9 402.5,477.5 399.4,482.8 395.1,487.8 390.0,492.5 383.7,496.9 376.6,500.9 370.0,505.0 364.1,509.6 358.7,514.3 355.0,517.5M405.5,385.0 409.9,381.3 416.2,376.2 422.5,372.5 428.6,371.8 434.7,372.4 440.0,372.5 444.0,371.5 447.1,369.9 450.0,367.5 453.1,364.1 455.8,359.8 457.5,355.0 457.1,349.2 455.6,342.8 455.0,337.5 455.9,333.7 457.7,331.0 460.0,330.0 463.0,331.8 466.5,335.2 470.0,337.5 473.3,337.6 476.7,336.6 480.0,335.0 483.7,333.0 487.4,330.4 490.0,327.5 490.6,324.4 490.0,321.1 490.0,317.5 491.5,313.6 493.5,309.4 495.0,305.0 495.2,300.0 494.8,294.7 495.0,290.0 496.5,285.9 498.5,282.4 500.0,280.0M490.0,327.5 492.4,326.6 495.9,325.4 500.0,325.0 504.7,326.2 510.0,328.2 515.0,330.0 519.2,331.2 523.1,332.1 527.5,332.5 532.9,332.0 538.8,330.9 545.0,330.0 551.6,329.6 558.4,329.3 565.0,328.8 571.4,328.1 577.5,327.2 582.5,325.0 586.2,320.8 588.8,315.4 590.0,310.0 589.2,305.0 586.9,300.0 585.0,295.0 583.9,289.4 583.1,283.9 582.5,280.0M545.0,330.0 545.6,336.5 546.4,345.7 547.5,355.0 549.1,363.3 550.9,371.7 552.5,380.0 553.4,388.3 554.1,396.7 555.0,405.0 556.5,413.5 558.2,422.0 560.0,430.0 561.6,437.0 563.1,443.5 565.0,450.0 567.4,456.8 570.1,463.5 572.5,470.0 574.4,476.2 576.1,482.1 577.5,487.5 578.2,492.5 578.7,496.9 580.0,500.0 583.1,500.9 587.1,500.5 590.0,500.0M490.0,327.5 491.2,333.5 493.0,342.0 495.0,350.0 497.5,356.4 500.3,362.2 502.5,367.5 503.8,372.5 504.5,376.9 505.0,380.0M585.0,322.5 587.4,326.6 590.9,332.3 595.0,337.5 599.5,341.4 604.6,344.7 610.0,347.5 615.6,349.9 621.6,351.8 627.5,352.5 633.4,351.6 639.4,349.5 645.0,347.5 650.7,345.6 656.2,343.8 660.0,342.5M565.0,328.8 566.4,334.1 568.3,341.9 570.0,350.0 571.1,359.0 571.9,368.4 572.5,375.0M595.0,337.5 598.9,343.6 604.4,352.2 610.0,360.0 615.2,365.5 620.4,370.1 625.0,375.0 629.1,381.3 632.6,387.9 635.0,392.5M422.5,372.5 423.7,376.3 425.5,381.8 427.5,387.5 430.0,393.4 432.7,399.5 435.0,405.0 436.7,409.6 437.9,413.6 438.8,416.2M340.0,427.5 343.9,425.8 349.4,423.3 355.0,420.0 359.8,415.1 364.6,409.4 370.0,405.0 376.7,403.3 383.9,403.1 390.0,402.5 394.4,400.8 397.8,398.9 400.0,397.5M365.0,340.0 363.7,345.8 361.9,354.2 360.0,362.5 358.3,369.9 356.7,377.3 355.0,385.0 353.5,393.3 352.0,401.9 350.0,410.0 346.7,417.8 342.8,425.0 340.0,430.0M497.5,277.5 496.9,281.9 496.1,288.3 495.0,295.0 493.3,301.7 491.4,308.6 490.0,315.0 489.3,320.6 489.1,325.6 490.0,330.0 493.0,334.1 497.0,337.6 500.0,340.0M488.8,175.0 491.5,174.0 495.6,172.5 500.0,171.2 504.9,169.8 510.2,168.5 515.0,168.8 518.9,171.2 522.2,175.3 525.0,180.0 526.9,185.3 528.3,191.3 530.0,197.5 532.4,204.3 535.1,211.3 537.5,217.5 539.4,222.0 540.9,225.7 542.5,230.0 543.9,235.5 545.3,241.5 547.5,247.5 551.3,253.8 555.9,260.1 560.0,265.0 563.1,267.0 565.6,267.7 567.5,270.0 568.7,275.6 569.4,282.8 570.0,290.0 570.6,296.9 571.3,303.7 572.5,310.0 574.7,315.4 577.5,320.2 580.0,325.0 581.9,330.0 583.4,335.0 585.0,340.0 586.9,345.6 588.7,351.1 590.0,355.0M488.8,175.0 487.5,179.3 485.8,185.5 485.0,192.5 485.7,200.4 487.2,209.1 488.8,217.5 490.0,225.3 491.2,232.8 492.5,240.0 494.2,246.9 496.0,253.4 497.5,260.0 498.5,266.7 499.3,273.3 500.0,280.0 500.6,286.9 501.3,293.7 502.5,300.0 504.4,305.6 506.8,310.6 510.0,315.0 514.4,319.0 519.7,322.4 525.0,325.0 529.8,326.4 534.6,326.9 540.0,327.5 546.4,328.6 553.3,329.7 560.0,330.0 566.7,328.7 573.1,326.6 577.5,325.0M580.0,265.0 581.2,268.7 583.0,274.1 585.0,280.0 587.5,286.3 590.3,293.1 592.5,300.0 594.0,306.7 594.9,313.3 595.0,320.0 593.7,327.4 591.6,334.8 590.0,340.0M592.5,260.0 593.3,255.0 594.4,247.8 595.0,240.0 594.4,232.0 593.1,223.5 592.5,215.0 592.7,206.0 593.4,197.0 595.0,190.0 597.6,186.0 601.0,184.0 605.0,182.5 609.8,181.0 615.2,180.1 620.0,180.0 623.7,180.6 626.9,182.1 630.0,185.0 633.5,190.1 637.0,196.6 640.0,202.5 642.2,207.5 643.9,211.9 645.0,215.0M595.0,265.0 596.3,271.5 598.1,280.7 600.0,290.0 601.7,298.3 603.3,306.7 605.0,315.0 606.5,323.8 608.0,332.6 610.0,340.0 612.8,345.5 616.1,349.5 620.0,352.5 624.6,354.4 629.8,355.1 635.0,355.0 640.2,353.9 645.4,351.9 650.0,350.0 654.1,348.1 657.6,346.3 660.0,345.0M633.8,160.0 636.7,161.3 640.9,163.1 645.0,165.0 648.2,166.5 651.3,168.0 655.0,170.0 659.8,173.2 665.2,177.0 670.0,180.0 673.8,181.2 677.0,181.6 680.0,182.5 682.9,184.4 685.5,186.8 687.5,190.0 688.6,194.6 689.2,200.1 690.0,205.0 691.1,208.9 692.5,212.2 695.0,215.0 699.5,216.9 705.2,218.1 710.0,220.0 713.1,222.6 715.5,225.7 717.5,230.0 719.4,235.9 720.9,243.0 722.5,250.0 724.1,256.8 725.6,263.5 727.5,270.0 729.9,276.5 732.6,282.7 735.0,287.5 737.0,290.3 738.8,291.7 740.0,292.5M740.0,292.5 740.8,287.9 741.9,281.3 742.5,275.0 742.1,270.0 741.2,265.3 740.0,260.0 738.5,253.5 736.8,246.5 735.0,240.0 733.3,234.4 731.7,229.3 730.0,225.0 728.1,221.7 726.3,219.2 725.0,217.5M740.0,292.5 738.7,297.1 736.9,303.7 735.0,310.0 733.2,315.2 731.5,320.1 730.0,325.0 728.9,330.6 728.1,336.1 727.5,340.0M740.0,292.5 743.9,289.0 749.4,284.1 755.0,280.0 760.0,277.6 765.0,276.0 770.0,275.0 775.2,274.8 780.4,275.2 785.0,275.0 788.9,274.3 792.2,273.0 795.0,270.0 797.0,264.6 798.5,257.6 800.0,250.0 801.7,241.9 803.3,233.1 805.0,225.0 806.7,218.1 808.3,211.7 810.0,205.0 811.6,197.5 813.1,189.7 815.0,182.5 817.3,176.2 819.9,170.5 822.5,165.0 824.7,159.4 826.9,154.2 830.0,150.0 834.6,147.2 840.1,145.6 845.0,145.0 848.8,145.6 852.0,147.4 855.0,150.0 857.3,154.2 859.4,159.2 862.5,162.5 867.5,163.1 873.6,161.9 880.0,160.0 887.2,156.9 894.7,152.9 900.0,150.0M795.0,270.0 797.4,273.9 800.9,279.4 805.0,285.0 809.6,290.3 814.8,295.6 820.0,300.0 824.8,303.1 829.6,305.5 835.0,307.5 841.5,310.0 848.5,312.2 855.0,312.5 860.6,309.7 865.6,305.0 870.0,300.0 873.9,295.2 877.2,290.1 880.0,285.0 882.2,279.4 883.9,273.9 885.0,270.0M755.0,280.0 754.8,274.8 754.6,267.4 755.0,260.0 756.3,253.0 758.1,245.9 760.0,240.0 761.9,235.6 763.7,232.2 765.0,230.0M620.0,180.0 621.0,185.3 622.6,192.8 625.0,200.0 628.8,206.9 633.4,213.6 637.5,217.5 640.3,216.9 642.5,213.6 645.0,210.0 648.5,206.5 652.3,202.7 655.0,200.0M595.0,247.5 597.4,250.6 600.9,255.2 605.0,260.0 609.5,264.8 614.6,269.9 620.0,275.0 625.6,280.2 631.6,285.4 637.5,290.0 643.2,293.8 649.0,297.0 655.0,300.0 661.9,302.5 669.0,304.7 675.0,307.5 679.1,311.0 682.0,315.1 685.0,320.0 688.7,326.9 692.4,334.5 695.0,340.0M830.0,250.0 831.4,255.0 833.3,262.2 835.0,270.0 835.9,278.3 836.6,287.2 837.5,295.0 839.2,301.3 841.1,306.5 842.5,310.0M880.0,160.0 882.5,157.3 886.1,153.5 890.0,150.0 894.2,147.4 898.6,145.1 902.5,142.5 905.6,139.4 908.1,136.1 910.0,132.5 911.4,128.5 912.2,124.3 912.5,120.0 912.1,115.8 911.2,111.7 910.0,107.5 908.5,103.5 906.7,99.5 905.0,95.0 903.6,89.4 902.3,83.1 901.2,77.5 900.2,72.6 899.5,68.3 900.0,65.0 902.4,62.8 906.1,61.6 910.0,61.2 914.1,62.4 918.4,64.3 922.5,65.0 925.9,63.2 929.1,60.1 932.5,57.5 936.5,55.6 940.7,54.2 945.0,53.8 949.4,54.6 953.8,56.5 957.5,58.8 960.2,61.2 962.3,64.2 963.8,67.5 964.1,71.6 963.9,76.2 965.0,80.0 968.4,82.5 973.1,84.4 977.5,86.2 981.2,88.2 984.7,90.1 987.5,92.5 989.5,95.5 990.8,98.8 991.2,102.5 990.7,106.8 989.3,111.3 987.5,115.0 984.6,117.1 981.3,118.4 980.0,120.0 982.0,122.3 986.0,124.9 990.0,127.5 993.1,130.0 996.3,132.5 1000.0,135.0 1004.8,137.5 1010.2,140.0 1015.0,142.5 1018.9,145.7 1022.2,149.0 1025.0,150.0 1027.1,147.2 1028.7,142.2 1030.0,137.5 1030.6,133.9 1031.0,130.6 1032.5,127.5 1036.4,124.5 1041.4,121.9 1045.0,120.0M912.5,120.0 916.9,120.1 923.3,120.2 930.0,120.0 936.7,119.4 943.6,118.6 950.0,117.5 955.4,115.6 960.2,113.3 965.0,112.5 970.6,114.4 976.1,117.6 980.0,120.0M1030.0,137.5 1032.6,138.4 1036.3,139.9 1040.0,142.5 1043.3,146.7 1046.7,151.9 1050.0,157.5 1053.1,163.5 1056.3,169.8 1060.0,175.0 1064.7,178.4 1070.0,180.7 1075.0,182.5 1079.7,183.2 1084.2,183.4 1087.5,185.0 1089.1,188.9 1089.5,194.2 1090.0,200.0 1090.8,206.3 1091.7,213.1 1092.5,220.0 1093.5,226.9 1094.5,233.9 1095.0,240.0 1094.6,244.9 1093.7,249.0 1092.5,252.5 1090.8,255.6 1088.9,258.2 1087.5,260.0M910.0,132.5 910.9,137.8 912.1,145.3 912.5,152.5 911.4,158.6 909.4,164.4 907.5,170.0 905.6,175.0 903.6,179.7 902.5,185.0 902.6,191.3 903.5,198.1 905.0,205.0 907.2,211.7 910.0,218.3 912.5,225.0 914.4,231.7 916.1,238.3 917.5,245.0 918.5,251.9 919.3,258.7 920.0,265.0 920.9,270.9 921.9,276.3 922.5,280.0M880.0,175.0 883.3,176.3 888.1,178.1 892.5,180.0 896.4,181.9 900.0,183.7 902.5,185.0M1087.5,260.0 1092.1,258.6 1098.7,256.7 1105.0,255.0 1110.4,253.7 1115.5,252.7 1120.0,252.5 1123.8,253.3 1127.0,255.0 1130.0,257.5 1133.0,261.6 1135.6,266.5 1137.5,270.0M1090.0,250.0 1088.9,253.9 1087.2,259.4 1085.0,265.0 1082.0,270.2 1078.5,275.4 1075.0,280.0 1071.7,283.4 1068.3,286.3 1065.0,290.0 1061.9,295.3 1058.7,301.4 1055.0,307.5 1050.2,313.5 1044.8,319.5 1040.0,325.0 1036.1,329.4 1032.8,333.1 1030.0,337.5 1027.6,343.1 1025.7,349.2 1025.0,355.0 1025.6,360.5 1027.4,365.6 1030.0,370.0 1033.4,373.2 1037.7,375.6 1042.5,377.5 1048.1,379.2 1054.2,380.3 1060.0,380.0 1065.2,377.6 1070.1,373.8 1075.0,370.0 1079.8,366.7 1084.6,363.3 1090.0,360.0 1096.5,356.8 1103.5,353.5 1110.0,350.0 1115.6,346.2 1120.6,342.1 1125.0,337.5 1128.9,332.0 1132.2,326.0 1135.0,320.0 1136.9,313.8 1138.1,307.6 1140.0,302.5 1143.0,299.2 1146.5,296.9 1150.0,295.0 1153.0,292.9 1155.9,291.0 1160.0,290.0 1166.1,290.3 1173.3,291.4 1180.0,292.5 1185.6,293.0 1190.6,293.4 1195.0,295.0 1199.1,298.9 1202.6,303.9 1205.0,307.5M972.5,335.0 976.9,336.6 983.3,338.7 990.0,340.0 996.7,339.0 1003.6,337.1 1010.0,337.5 1015.9,342.5 1021.3,349.7 1025.0,355.0M1060.0,380.0 1059.1,385.2 1057.6,392.6 1055.0,400.0 1050.6,407.0 1045.2,414.1 1040.0,420.0 1035.3,423.9 1030.8,426.7 1027.5,430.0 1025.9,434.6 1025.5,439.8 1025.0,445.0 1024.1,450.6 1023.1,456.1 1022.5,460.0M1125.0,337.5 1127.6,343.4 1131.3,351.9 1135.0,360.0 1138.3,367.6 1141.7,374.9 1145.0,380.0 1148.1,381.4 1151.3,380.6 1155.0,380.0 1159.6,380.6 1164.8,381.6 1170.0,382.5 1175.2,383.6 1180.4,384.7 1185.0,385.0 1189.1,383.7 1192.6,381.6 1195.0,380.0M1145.0,380.0 1143.9,385.2 1142.2,392.6 1140.0,400.0 1137.2,406.7 1133.9,413.3 1130.0,420.0 1125.4,426.7 1120.2,433.3 1115.0,440.0 1109.4,447.4 1103.9,454.8 1100.0,460.0M1155.0,380.0 1156.1,384.1 1157.8,389.8 1160.0,395.0 1162.8,398.7 1166.1,401.9 1170.0,405.0 1174.8,408.2 1180.2,411.5 1185.0,415.0 1188.5,419.3 1191.5,423.8 1195.0,427.5 1199.6,429.7 1204.8,431.1 1210.0,432.5 1215.6,434.4 1221.1,436.2 1225.0,437.5M1195.0,427.5 1197.4,424.2 1200.9,419.4 1205.0,415.0 1209.8,411.1 1215.2,407.5 1220.0,405.0 1224.1,404.3 1227.6,404.6 1230.0,405.0M1140.0,302.5 1139.9,293.5 1139.8,280.9 1140.0,270.0 1141.0,262.7 1142.3,257.0 1142.5,252.5 1140.5,249.0 1137.3,246.6 1135.0,245.0M1135.0,440.0 1136.3,445.2 1138.1,452.6 1140.0,460.0 1142.2,467.0 1144.4,474.1 1145.0,480.0 1142.4,483.9 1138.1,486.7 1135.0,490.0 1133.9,495.3 1133.9,501.1 1135.0,505.0 1137.6,505.0 1141.3,503.1 1145.0,502.5 1148.3,504.8 1151.7,508.5 1155.0,512.5 1158.1,516.9 1161.3,521.5 1165.0,525.0 1169.6,526.8 1174.8,527.4 1180.0,527.5 1185.2,527.4 1190.4,526.8 1195.0,525.0 1199.1,521.1 1202.6,516.1 1205.0,512.5M1145.0,502.5 1146.1,507.8 1147.8,515.3 1150.0,522.5 1153.5,528.7 1157.6,534.6 1160.0,540.0 1159.4,544.5 1157.2,548.5 1155.0,552.5 1153.0,556.6 1150.9,560.6 1150.0,565.0 1151.2,569.8 1153.5,574.9 1155.0,580.0 1154.9,585.0 1154.0,590.0 1152.5,595.0 1150.6,600.4 1148.2,605.7 1145.0,610.0 1140.4,613.0 1134.9,614.8 1130.0,615.0 1126.3,612.3 1123.1,608.0 1120.0,605.0 1116.5,604.5 1113.0,605.5 1110.0,607.5 1108.0,610.8 1106.5,615.3 1105.0,620.0 1103.5,624.9 1102.0,630.1 1100.0,635.0 1097.1,639.6 1093.7,644.0 1090.0,647.5 1085.8,650.4 1081.4,652.4 1077.5,652.5 1074.7,649.7 1072.5,645.0 1070.0,640.0 1066.9,634.3 1063.4,628.2 1060.0,625.0 1056.5,626.3 1053.0,630.4 1050.0,635.0 1048.1,639.8 1046.9,645.2 1045.0,650.0 1042.2,653.6 1038.9,656.7 1035.0,660.0 1030.4,664.2 1025.2,668.6 1020.0,672.5 1014.4,675.6 1008.9,678.2 1005.0,680.0M1180.0,447.5 1180.9,450.9 1182.4,455.7 1185.0,460.0 1189.3,463.2 1194.6,465.9 1200.0,467.5 1205.2,467.4 1210.4,466.2 1215.0,465.0 1219.1,464.1 1222.6,463.1 1225.0,462.5M1090.0,440.0 1091.9,442.4 1094.3,445.9 1095.0,450.0 1092.4,455.2 1088.1,460.9 1085.0,465.0M1020.0,667.5 1014.6,670.9 1007.0,675.7 1000.0,680.0 994.4,682.7 989.4,684.8 985.0,687.5 981.3,691.4 978.1,695.8 975.0,700.0 971.9,703.3 968.7,706.4 965.0,710.0 960.4,714.6 955.2,719.8 950.0,725.0 945.0,729.9 940.0,734.8 935.0,740.0 929.9,746.2 924.8,752.7 920.0,757.5 915.6,760.1 911.6,761.0 907.5,760.0 903.2,756.2 899.0,750.5 895.0,745.0 891.5,740.3 888.2,735.8 885.0,732.5 881.9,730.5 878.7,729.5 875.0,730.0 870.4,732.6 865.2,736.6 860.0,740.0 855.0,742.1 850.0,743.7 845.0,745.0 840.0,746.0 835.0,746.8 830.0,747.5 825.0,748.4 820.0,749.4 815.0,750.0 809.9,750.1 804.8,749.9 800.0,750.0 795.6,750.3 791.6,750.8 787.5,752.5 783.3,755.9 779.2,760.5 775.0,765.0 770.8,769.3 766.7,773.5 762.5,777.5 758.2,781.0 754.0,784.3 750.0,787.5 746.1,791.2 742.5,794.9 740.0,797.5M700.0,592.5 701.9,587.9 704.7,581.3 707.5,575.0 710.3,569.3 713.1,563.8 715.0,560.0M760.0,852.5 756.2,855.8 750.7,860.6 745.0,865.0 739.4,868.7 733.4,872.1 727.5,875.0 721.8,877.1 716.0,878.7 710.0,880.0 703.5,881.0 696.8,881.8 690.0,882.5 683.2,883.4 676.5,884.4 670.0,885.0 664.0,885.1 658.2,884.9 652.5,885.0 646.2,885.9 639.9,887.1 635.0,887.5 632.6,886.2 631.6,884.1 630.0,882.5 626.9,881.9 623.1,881.8 620.0,882.5 618.0,885.1 616.5,888.5 615.0,890.0 613.5,887.9 612.0,883.8 610.0,880.0 607.1,877.2 603.7,874.7 600.0,872.5 596.0,870.6 591.8,869.1 587.5,867.5 583.3,865.7 579.2,864.0 575.0,862.5 570.9,861.6 566.9,860.9 562.5,860.0 557.6,858.4 552.4,856.6 547.5,855.0 543.1,854.1 539.1,853.4 535.0,852.5 530.7,851.3 526.5,849.8 522.5,847.5 519.0,844.0 515.7,839.6 512.5,835.0 509.3,830.3 506.0,825.3 502.5,820.0 498.5,814.4 494.3,808.4 490.0,802.5 485.7,796.6 481.5,790.6 477.5,785.0 474.1,779.8 470.9,774.9 467.5,770.0 463.6,765.0 459.4,760.0 455.0,755.0 449.6,749.4 444.0,743.9 440.0,740.0M620.0,680.0 621.3,685.3 623.1,692.8 625.0,700.0 626.7,706.0 628.3,711.8 630.0,717.5 631.5,723.8 633.0,730.1 635.0,735.0 637.8,737.8 641.1,739.2 645.0,740.0 649.7,740.2 655.0,739.8 660.0,740.0 664.5,741.1 668.8,742.8 672.5,745.0 675.4,747.9 677.7,751.3 680.0,755.0 682.7,758.8 685.4,762.9 687.5,767.5 688.6,773.1 689.2,779.2 690.0,785.0 691.9,790.6 694.2,795.8 695.0,800.0 692.8,802.0 689.2,803.0 687.5,805.0 689.6,809.7 693.7,815.6 697.5,820.0 700.1,822.3 702.4,823.2 705.0,822.5 708.0,819.4 711.2,814.7 715.0,810.0 719.5,805.6 724.6,801.3 730.0,797.5 735.8,794.7 741.9,792.5 747.5,790.0 752.5,786.5 756.9,782.7 760.0,780.0M697.5,820.0 699.1,825.4 701.2,833.0 702.5,840.0 702.5,845.4 701.7,850.2 700.0,855.0 697.4,860.2 694.0,865.4 690.0,870.0 684.8,874.1 679.1,877.6 675.0,880.0M705.0,822.5 707.5,825.6 711.1,830.2 715.0,835.0 718.8,840.6 722.9,846.6 727.5,850.0 733.1,849.4 739.2,846.2 745.0,842.5 750.7,838.2 756.2,833.4 760.0,830.0M440.0,705.0 443.9,703.7 449.4,702.1 455.0,702.5 459.8,706.7 464.6,712.8 470.0,717.5 476.3,719.5 483.1,720.2 490.0,720.0 496.9,719.1 503.7,717.3 510.0,715.0 515.2,711.9 519.8,708.3 525.0,705.0 531.3,702.3 538.1,699.9 545.0,697.5 551.5,694.9 558.0,692.3 565.0,690.0 573.3,688.1 582.2,686.6 590.0,685.0 596.3,683.1 601.5,681.3 605.0,680.0M477.5,785.0 481.9,785.9 488.3,787.4 495.0,790.0 501.5,794.6 508.2,800.4 515.0,805.0 521.9,807.5 528.7,808.9 535.0,810.0 540.9,811.1 546.3,811.9 550.0,812.5M502.5,820.0 505.6,818.0 510.2,815.4 515.0,815.0 520.6,818.4 526.6,824.1 530.0,830.0 528.9,836.3 525.3,842.9 522.5,847.5M445.0,700.0 446.1,705.1 447.8,712.4 450.0,720.0 452.9,727.4 456.3,735.1 460.0,742.5 464.2,749.4 468.6,756.1 472.5,762.5 475.2,768.4 477.3,774.1 480.0,780.0 484.0,786.5 488.5,793.2 492.5,800.0 495.6,806.3 498.2,812.6 500.0,820.0 500.6,830.4 500.3,841.9 500.0,850.0M440.0,762.5 443.9,765.6 449.4,770.0 455.0,775.0 460.4,780.5 465.7,786.5 470.0,792.5 472.0,798.6 473.0,804.7 475.0,810.0 479.4,813.5 484.8,816.2 490.0,820.0 494.4,826.6 498.4,834.3 502.5,840.0 507.1,842.2 511.8,842.5 515.0,842.5M562.5,440.0 563.8,443.7 565.6,449.1 567.5,455.0 569.1,461.5 570.6,468.5 572.5,475.0 575.2,480.6 578.1,485.6 580.0,490.0 579.4,494.0 577.6,497.4 577.5,500.0 580.8,501.0 585.8,501.2 590.0,502.5 592.5,505.9 594.2,510.5 595.0,515.0 595.0,519.2 594.2,523.3 592.5,527.5 589.8,531.7 586.3,535.8 582.5,540.0 578.4,544.2 574.1,548.3 570.0,552.5 566.5,556.5 563.2,560.5 560.0,565.0 556.8,570.7 553.5,577.0 550.0,582.5 546.0,586.4 541.8,589.4 537.5,592.5 533.1,595.6 528.6,598.6 525.0,602.5 523.0,607.8 521.8,613.9 520.0,620.0 517.0,626.0 513.5,632.0 510.0,637.5 506.9,642.4 503.7,646.8 500.0,650.0 495.4,651.4 490.2,651.7 485.0,652.5 480.0,654.7 475.0,657.5 470.0,660.0 465.2,661.9 460.4,663.4 455.0,665.0 448.5,666.5 441.5,668.0 435.0,670.0 429.1,673.3 423.7,677.2 420.0,680.0M420.0,535.0 422.6,534.5 426.3,533.8 430.0,532.5 433.9,529.5 437.8,526.0 440.0,525.0 439.5,528.4 437.4,534.4 435.0,540.0 432.7,544.2 430.1,548.1 427.5,552.5 424.7,558.6 421.9,565.3 420.0,570.0M740.0,537.5 737.4,540.0 733.7,543.6 730.0,547.5 726.8,551.4 723.5,555.6 720.0,560.0 716.0,564.8 711.8,569.9 707.5,575.0 703.3,580.0 699.2,585.0 695.0,590.0 690.8,595.2 686.7,600.4 682.5,605.0 678.3,609.1 674.2,612.6 670.0,615.0 665.6,615.2 661.1,614.3 657.5,615.0 655.4,618.9 654.1,624.4 652.5,630.0 650.1,635.0 647.4,640.0 645.0,645.0 643.1,650.0 641.6,655.0 640.0,660.0 639.1,665.4 638.1,670.7 635.0,675.0 627.2,677.6 617.2,679.1 610.0,680.0M740.0,280.0 740.8,283.9 741.9,289.4 742.5,295.0 742.1,300.0 741.2,305.0 740.0,310.0 738.7,315.1 737.1,320.2 735.0,325.0 731.8,329.2 728.0,333.1 725.0,337.5 723.6,343.1 723.1,349.2 722.5,355.0 721.7,360.2 720.8,365.1 720.0,370.0 719.1,375.6 718.1,381.1 717.5,385.0M600.0,325.0 602.4,329.1 605.9,334.8 610.0,340.0 614.4,344.2 619.4,347.8 625.0,350.0 631.5,350.2 638.5,349.0 645.0,347.5 650.4,346.0 655.2,344.3 660.0,342.5 665.2,340.9 670.4,339.4 675.0,337.5 678.7,335.3 681.9,332.8 685.0,330.0 688.5,327.0 692.0,323.8 695.0,320.0 697.0,315.4 698.5,310.2 700.0,305.0 701.7,299.8 703.3,294.6 705.0,290.0 706.9,285.9 708.7,282.4 710.0,280.0M600.0,352.5 603.2,356.5 607.9,362.1 612.5,367.5 616.8,371.8 621.0,375.7 625.0,380.0 628.9,385.4 632.5,391.0 635.0,395.0M805.0,280.0 806.3,285.3 808.1,292.8 810.0,300.0 811.5,306.2 813.0,312.1 815.0,317.5 818.5,321.9 822.6,325.8 825.0,330.0 824.4,334.6 822.2,339.5 820.0,345.0 818.0,351.5 815.9,358.5 815.0,365.0 816.2,370.2 818.5,374.8 820.0,380.0 820.1,386.3 819.4,393.1 817.5,400.0 814.2,407.0 809.7,414.1 805.0,420.0 800.2,424.1 795.1,427.0 790.0,430.0 784.9,433.2 779.8,436.5 775.0,440.0 770.6,443.8 766.6,447.9 762.5,452.5 758.1,457.8 753.6,463.6 750.0,470.0 747.8,476.9 746.4,484.4 745.0,492.5 743.1,502.3 741.3,512.7 740.0,520.0M850.0,280.0 851.1,284.3 852.8,290.2 855.0,295.0 858.0,298.0 861.5,299.8 865.0,300.0 868.3,297.2 871.7,292.8 875.0,290.0 878.1,290.9 881.3,293.5 885.0,295.0 889.4,293.7 894.4,291.3 900.0,290.0 907.0,291.1 914.6,293.3 920.0,295.0M835.0,310.0 837.6,308.9 841.3,307.2 845.0,305.0 848.7,301.7 852.4,297.8 855.0,295.0M840.0,307.5 844.1,305.8 849.8,303.3 855.0,300.0 858.5,295.1 861.5,289.4 865.0,285.0 869.4,283.1 874.4,282.7 880.0,282.5 886.3,282.2 893.1,282.2 900.0,282.5 906.7,283.1 913.3,283.9 920.0,285.0 926.9,286.3 933.7,287.9 940.0,290.0 945.4,292.8 950.2,296.1 955.0,300.0 960.4,304.4 965.7,309.4 970.0,315.0 972.0,321.9 973.0,329.3 975.0,335.0 979.1,338.1 984.3,339.6 990.0,340.0 996.3,338.9 1003.1,336.7 1010.0,335.0 1017.2,334.1 1024.4,333.7 1030.0,335.0 1032.8,338.9 1033.9,344.4 1035.0,350.0 1036.4,355.3 1037.8,360.6 1040.0,365.0 1043.6,368.2 1048.1,370.6 1052.5,372.5 1056.6,374.3 1060.6,375.5 1065.0,375.0 1070.0,371.9 1075.3,367.2 1080.0,362.5 1083.5,358.2 1086.5,354.0 1090.0,350.0 1094.4,346.5 1099.4,343.2 1105.0,340.0 1111.7,336.9 1118.9,333.7 1125.0,330.0 1129.3,325.4 1132.4,320.2 1135.0,315.0 1136.7,309.7 1137.8,304.4 1140.0,300.0 1144.6,296.8 1150.4,294.4 1155.0,292.5 1157.6,291.2 1159.1,290.5 1160.0,290.0M900.0,282.5 899.8,276.8 899.6,268.5 900.0,260.0 901.7,251.9 903.9,243.4 905.0,235.0 903.7,226.7 901.3,218.3 900.0,210.0 900.7,201.1 902.6,192.2 905.0,185.0 908.5,180.7 912.6,178.1 915.0,175.0 914.3,169.8 911.9,164.1 910.0,160.0M865.0,285.0 862.4,279.4 858.7,271.7 855.0,265.0 851.5,261.0 848.0,258.1 845.0,255.0 842.8,250.6 841.1,245.8 840.0,242.5M1030.0,335.0 1032.4,329.6 1035.9,322.0 1040.0,315.0 1044.6,309.6 1049.8,304.8 1055.0,300.0 1060.2,295.0 1065.4,290.0 1070.0,285.0 1073.7,280.0 1076.9,275.0 1080.0,270.0 1083.5,264.8 1087.0,259.6 1090.0,255.0 1092.2,250.9 1093.9,247.4 1095.0,245.0M1065.0,375.0 1063.7,379.1 1061.9,384.8 1060.0,390.0 1058.1,394.1 1056.3,397.6 1055.0,400.0M1125.0,330.0 1126.3,335.2 1128.1,342.6 1130.0,350.0 1131.5,356.9 1133.0,363.7 1135.0,370.0 1138.1,375.4 1141.9,380.2 1145.0,385.0 1147.2,390.6 1148.9,396.1 1150.0,400.0M1040.0,402.5 1044.9,399.6 1051.8,395.4 1058.8,391.2 1065.0,387.4 1071.2,383.6 1077.5,380.0 1083.8,376.7 1090.0,373.7 1096.2,370.6 1102.9,367.7 1109.6,364.8 1115.0,361.2 1118.4,356.8 1120.6,351.7 1122.5,346.2 1124.7,340.1 1126.6,333.6 1128.1,327.5 1128.5,321.9 1128.5,316.8 1130.0,312.5 1134.2,309.6 1139.8,307.5 1145.0,305.0 1149.3,301.2 1153.2,297.1 1156.2,293.8 1158.2,291.8 1159.3,290.7 1160.0,290.0M1122.5,346.2 1126.5,351.2 1132.2,358.3 1137.5,365.0 1141.7,371.0 1145.4,376.5 1148.8,380.0 1151.4,379.9 1153.6,377.8 1156.2,376.2 1159.6,376.3 1163.3,377.0 1167.5,378.1 1172.4,380.1 1177.6,382.6 1182.5,383.8 1186.9,382.5 1191.0,380.0 1193.8,378.1M1148.8,380.0 1150.8,384.2 1153.8,390.0 1156.2,395.0 1157.5,398.3 1158.3,400.7 1160.0,402.5 1163.1,403.8 1166.9,404.4 1171.2,404.4 1176.0,403.6 1181.1,402.2 1186.2,400.6 1191.2,398.8 1196.2,396.8 1201.2,395.0 1206.8,393.5 1212.4,392.2 1216.2,391.2M1148.8,380.0 1145.8,383.9 1141.5,389.4 1137.5,395.0 1134.4,400.0 1131.5,405.0 1128.1,410.0 1124.0,415.1 1119.5,420.3 1115.0,425.0 1110.5,429.0 1106.0,432.6 1101.9,436.2 1098.3,440.0 1095.2,443.8 1092.5,447.5 1090.1,451.7 1088.2,455.8 1086.9,458.8M1160.0,402.5 1161.0,407.6 1162.4,414.9 1163.8,421.2 1164.7,425.7 1165.7,429.3 1167.5,432.5 1170.7,435.7 1174.7,438.5 1178.8,440.0 1182.7,439.8 1186.7,438.3 1190.0,436.2 1192.5,433.2 1194.4,429.5 1195.6,426.9M1195.6,426.9 1199.1,425.6 1204.0,423.8 1208.8,421.2 1212.8,417.6 1216.6,413.4 1220.0,410.0 1223.1,408.1 1225.7,406.9 1227.5,406.2M1167.5,432.5 1168.2,435.7 1169.3,440.1 1171.2,443.8 1174.3,445.8 1178.2,446.9 1182.5,447.5 1187.4,447.0 1192.6,445.9 1197.5,445.6 1201.5,446.9 1205.1,449.0 1208.8,451.2 1212.6,453.8 1216.5,456.5 1220.0,458.8 1223.1,460.4 1225.7,461.7 1227.5,462.5M1128.1,440.0 1128.5,442.6 1129.2,446.5 1130.0,451.2 1131.2,457.6 1132.7,464.9 1133.8,470.0M180.0,296.7 181.9,300.7 184.7,306.2 187.5,310.0 190.3,310.7 193.3,309.8 195.8,308.3 197.8,306.9 199.5,305.0 200.8,302.5 201.8,298.6 202.5,294.2 203.3,291.7 204.4,292.7 205.5,295.6 206.7,298.3 208.0,300.8 209.4,303.1 210.8,303.3 212.4,299.8 213.9,294.1 215.0,290.0M251.7,321.7 253.6,321.0 256.2,320.1 258.3,318.3 259.1,315.0 259.3,310.9 260.0,308.3 261.9,308.8 264.3,310.8 266.7,311.7 269.0,309.8 271.2,306.7 273.3,305.0 275.0,306.2 276.5,308.6 278.3,310.0 280.9,309.1 283.8,307.2 286.7,305.0 289.7,303.0 292.7,300.7 295.0,298.3 295.9,295.6 296.0,292.7 296.7,290.0 298.8,287.5 301.4,285.2 303.3,283.3 303.8,281.9 303.6,280.7 303.3,280.0M295.0,298.3 293.3,302.1 290.8,307.3 288.3,311.7 286.2,314.0 284.0,315.4 281.7,316.7 279.0,317.9 276.2,319.0 273.3,320.0 270.3,321.0 267.3,322.0 265.0,323.3 263.4,325.3 262.5,327.7 262.5,330.0 263.8,332.3 266.0,334.6 268.3,336.7 270.5,338.6 272.7,340.4 275.0,341.7 277.3,342.5 279.7,342.9 281.7,342.5 282.9,341.1 283.8,338.9 285.0,336.7 287.1,334.5 289.6,332.3 291.7,330.0 293.0,327.3 293.9,324.6 295.0,323.3 296.3,324.7 297.8,327.5 300.0,330.0 303.6,331.2 308.0,332.0 311.7,333.3 313.7,336.0 315.0,339.2 316.7,341.7 319.1,342.8 321.9,343.3 325.0,343.3 329.1,343.0 333.5,342.2 336.7,341.7M336.7,341.7 335.2,343.0 333.0,344.9 330.0,346.7 325.7,347.9 320.6,349.0 316.7,350.0 314.6,351.0 313.6,352.0 313.3,353.3 313.8,355.3 315.1,357.7 316.7,360.0 318.6,362.0 321.0,364.0 323.3,366.7 325.9,370.5 328.4,375.1 330.0,380.0 330.1,385.6 329.3,391.5 328.3,396.7 327.0,400.7 325.6,404.1 325.0,406.7 326.1,408.1 328.1,408.9 330.0,410.0 331.6,411.6 333.0,413.6 333.3,416.7 331.7,421.9 328.9,428.1 326.7,433.3 325.7,436.5 325.2,438.6 325.0,440.0M316.7,350.0 314.5,352.1 311.4,355.1 308.3,357.5 305.6,358.5 302.8,359.0 300.0,360.0 297.2,361.9 294.4,364.3 291.7,366.7 289.0,369.0 286.2,371.4 283.3,373.3 280.1,374.6 276.6,375.6 273.3,376.7 270.4,378.1 267.7,379.8 265.0,381.7 262.2,383.8 259.3,386.0 256.7,388.3 254.2,390.5 252.0,392.7 250.0,395.0 248.1,397.8 246.4,400.7 245.8,403.3 247.0,405.2 249.3,406.7 251.7,408.3 253.8,410.4 256.0,412.7 258.3,415.0 260.9,417.3 263.7,419.6 266.7,421.7 269.8,423.3 273.1,424.7 276.7,425.8 280.4,426.7 284.4,427.2 288.3,427.5 292.3,427.5 296.2,427.2 300.0,426.7 303.5,425.9 306.9,424.8 310.0,423.3 313.0,421.4 315.9,419.1 318.3,416.7 320.4,413.7 322.2,410.6 323.3,408.3M336.7,341.7 338.5,338.8 341.1,334.7 343.3,330.0 344.9,324.8 346.2,319.1 346.7,313.3 346.0,307.8 344.7,302.2 343.3,296.7 342.1,290.5 340.9,284.3 340.0,280.0M330.0,380.0 332.5,384.6 336.0,391.0 340.0,396.7 344.2,400.7 348.8,404.1 353.3,406.7 357.8,408.6 362.2,409.9 366.7,410.0 371.1,408.3 375.6,405.6 380.0,403.3 384.9,402.3 389.9,401.9 393.3,401.7M393.3,330.0 391.2,331.6 388.1,334.0 385.0,336.7 382.4,340.2 379.8,344.1 376.7,346.7 372.1,346.9 367.0,345.9 363.3,345.0M371.7,296.7 374.0,299.1 377.3,302.7 380.0,306.7 381.7,310.8 382.9,315.3 383.3,320.0 383.2,325.1 382.3,330.3 380.0,335.0 374.8,339.1 368.1,342.6 363.3,345.0M271.7,216.7 273.1,219.2 275.1,222.8 276.7,226.7 277.3,230.5 277.7,234.5 278.3,238.3 279.7,241.8 281.4,245.1 283.3,248.3 285.2,251.9 287.2,255.5 290.0,258.3 294.0,260.2 298.6,261.3 303.3,261.7 307.8,261.0 312.2,259.6 316.7,258.3 321.4,257.6 326.2,257.1 330.0,256.7 332.5,256.3 334.0,256.0 335.0,255.8M290.0,258.3 291.7,260.9 294.2,264.5 296.7,268.3 299.1,272.0 301.6,275.9 303.3,280.0 304.1,284.6 304.1,289.3 303.3,293.3 301.6,296.0 299.1,298.0 296.7,300.0 294.3,302.1 292.0,304.2 290.0,306.7 288.3,310.0 286.9,313.7 286.7,316.7 288.4,318.4 291.2,319.4 293.3,320.0M335.0,255.8 337.1,257.2 340.1,259.0 343.3,260.0 346.5,259.4 349.9,257.9 353.3,256.7 356.7,255.8 360.1,255.1 363.3,255.0 366.5,255.9 369.6,257.3 371.7,258.3M340.0,258.3 340.9,261.3 342.2,265.6 343.3,270.0 344.3,274.4 345.0,279.1 345.0,283.3 343.8,286.8 341.9,289.9 340.0,293.3 338.5,297.7 336.9,302.3 335.0,306.7 332.2,310.5 329.1,314.0 326.7,316.7 325.6,318.4 325.2,319.4 325.0,320.0M371.7,258.3 373.9,257.3 377.0,255.8 380.0,253.3 382.5,249.3 384.9,244.3 386.7,240.0 387.7,237.3 388.3,235.3 388.3,233.3 387.7,231.1 386.5,228.9 385.8,226.7 386.3,224.4 387.2,222.2 387.5,220.0 386.6,217.8 385.1,215.8 383.3,214.2 381.3,213.2 379.0,212.7 376.7,212.5 374.3,212.6 371.9,212.9 370.0,213.3 369.0,213.9 368.6,214.5 368.3,215.0M384.2,197.5 382.3,198.2 379.5,199.2 376.7,200.0 373.9,200.3 371.0,200.4 368.3,200.8 366.3,201.8 364.5,203.1 362.5,204.2 359.6,204.9 356.4,205.5 354.2,205.8M235.0,176.7 236.9,178.8 239.4,181.8 241.7,185.0 243.1,188.2 244.1,191.6 245.0,195.0 245.8,198.3 246.4,201.7 246.7,205.0 246.4,208.3 245.8,211.7 245.0,215.0 244.0,218.3 242.8,221.5 241.7,225.0 240.4,229.2 239.2,233.6 238.3,236.7M205.0,160.0 205.2,162.5 205.4,166.0 205.0,170.0 203.8,174.3 202.0,178.9 200.0,183.3 197.7,187.8 195.1,192.0 193.3,195.0M180.0,170.0 181.8,169.1 184.3,167.9 186.7,166.7 188.6,165.4 190.4,164.2 191.7,163.3M176.7,145.0 178.9,146.3 182.0,148.1 185.0,150.0 187.5,151.5 189.9,153.1 191.7,155.0 192.8,157.6 193.3,160.6 193.3,163.3 192.8,165.9 191.8,168.3 190.0,170.0 187.0,170.4 183.3,170.1 180.0,170.0 177.5,170.3 175.4,170.8 173.3,171.7 171.1,173.1 168.9,174.9 166.7,176.7 164.4,178.3 162.2,180.0 160.0,181.7 157.5,183.1 154.9,184.5 153.3,186.7 153.5,190.1 154.5,194.2 155.0,198.3 154.3,202.3 153.0,206.4 151.7,210.0 150.4,212.8 149.1,215.2 148.3,218.3 148.5,223.0 149.1,228.5 150.0,233.3 151.2,237.2 152.7,240.4 153.3,243.3 152.6,246.0 151.1,248.4 150.0,250.0M193.3,163.3 195.2,162.5 197.7,161.3 200.0,160.8 201.7,161.3 203.1,162.4 204.2,164.2 204.8,166.8 205.0,170.0 205.0,173.3 204.9,176.5 204.5,179.7 203.3,183.3 200.5,188.0 196.8,193.1 194.2,196.7M148.3,218.3 146.1,218.0 143.0,217.4 140.0,216.7 137.4,215.6 135.0,214.3 133.3,213.3M150.0,250.0 153.1,249.8 157.6,249.5 161.7,249.2 164.6,248.8 167.2,248.4 170.0,248.3 173.5,248.5 177.2,249.0 180.0,250.0 181.4,251.9 181.9,254.3 181.7,256.7 180.4,258.8 178.3,260.9 176.7,263.3 176.0,266.5 175.7,270.1 175.0,273.3 173.4,276.0 171.4,278.4 170.0,280.0M170.0,280.0 171.9,279.0 174.4,277.3 176.7,275.0 178.1,271.4 179.1,267.1 180.0,263.3 180.7,260.5 181.3,258.2 181.7,256.7M170.0,280.0 169.0,280.9 167.3,282.2 165.0,283.3 161.8,284.2 157.8,285.0 153.3,285.8 147.7,287.3 141.4,288.8 136.7,288.3 134.6,284.3 134.0,278.2 133.3,273.3 132.1,270.7 130.9,269.3 130.0,268.3M130.0,268.3 127.8,270.1 124.8,272.5 121.7,275.0 118.8,277.2 116.0,279.4 113.3,281.7 111.0,284.0 109.0,286.2 106.7,288.3 104.0,290.4 101.0,292.2 98.3,293.3 95.9,293.3 93.7,292.6 91.7,291.7 89.7,290.6 87.9,289.3 86.7,288.3M110.8,288.3 111.3,293.0 112.1,299.4 113.3,305.0 115.4,308.3 117.9,310.7 120.0,313.3 121.0,316.9 121.6,320.7 123.3,323.3 127.2,324.1 132.1,323.6 136.7,322.5 140.4,320.4 143.7,317.6 146.7,315.8 148.9,315.9 150.7,317.0 153.3,318.3 157.8,320.4 163.1,322.8 167.5,323.3 170.4,320.5 172.5,315.8 174.2,311.7 175.2,309.1 175.9,307.2 176.7,305.0 178.1,302.0 179.7,298.9 180.8,296.7M35.0,298.7 37.7,298.0 41.4,297.2 45.0,296.7 47.8,296.9 50.5,297.4 53.3,297.5 56.5,297.0 59.9,296.1 63.3,295.0 66.7,293.1 70.0,290.9 73.3,290.0 76.7,291.5 80.1,294.3 83.3,296.7 86.1,297.8 88.7,298.5 91.7,300.0 95.5,303.2 99.7,307.1 103.3,309.7 106.0,309.6 108.2,308.0 110.0,306.7 111.5,306.0 112.6,305.4 113.3,305.0" fill="none" stroke="#e8541e" stroke-width="0.65" stroke-linejoin="round"/>
<path d="M218.8,349.9 218.9,350.5 218.2,351.1 217.7,350.9 217.4,350.3 218.0,349.6ZM238.5,331.1 238.4,332.3 238.1,333.5 237.3,333.8 237.1,333.2 237.7,331.8ZM232.1,343.9 232.3,345.0 231.3,345.9 230.5,346.1 230.2,345.1 230.9,344.0ZM233.1,352.6 233.5,353.3 232.5,354.0 231.6,353.9 231.6,353.0 232.3,352.0ZM205.1,343.4 204.8,344.0 204.1,344.4 203.7,344.4 203.9,343.9 204.5,343.5ZM223.0,358.0 223.3,359.0 222.4,359.6 221.5,359.5 221.3,358.8 222.0,357.9ZM224.0,359.9 224.5,360.6 224.0,361.5 223.2,361.8 222.7,360.9 223.1,359.9ZM226.5,321.7 226.6,322.2 226.1,322.6 225.7,322.4 225.6,321.8 225.9,321.4ZM216.0,331.9 216.2,332.3 215.6,332.9 215.2,332.9 215.0,332.3 215.6,332.0ZM237.5,332.7 237.8,333.1 237.4,333.8 237.0,334.0 236.7,333.6 237.1,332.9ZM234.9,316.9 234.8,318.2 234.0,319.5 232.8,320.2 232.6,318.7 233.7,317.0ZM215.5,350.0 215.7,350.5 215.4,351.1 214.9,351.0 214.6,350.7 215.0,350.1ZM231.6,363.6 231.4,364.3 230.1,364.5 229.6,364.3 229.7,363.9 231.0,363.2ZM215.2,324.2 215.7,325.1 215.4,325.8 214.5,326.1 214.2,325.3 214.4,324.6ZM221.8,358.7 221.8,359.2 221.1,360.1 220.5,360.1 220.7,359.4 221.2,358.9ZM225.7,327.3 225.7,328.2 224.8,328.9 223.9,328.9 223.8,328.2 224.9,327.2ZM235.6,328.6 235.4,329.6 234.4,330.7 233.3,330.6 233.6,329.4 234.6,328.4ZM227.3,347.5 227.8,348.0 227.4,348.5 226.6,348.6 226.2,347.9 226.6,347.3ZM210.7,350.6 210.8,352.0 210.0,353.9 208.8,354.0 208.6,353.1 209.3,351.1ZM218.1,338.9 217.5,340.1 215.8,340.4 214.5,340.1 215.0,339.1 216.9,338.1ZM205.7,329.0 205.8,329.4 205.3,329.6 204.9,329.5 205.0,329.1 205.3,328.8ZM232.5,332.6 232.6,333.0 232.3,333.6 231.7,333.8 231.7,333.2 232.2,332.7ZM222.8,342.4 223.0,343.6 222.2,344.7 221.1,345.2 220.9,343.9 221.9,342.6ZM231.7,317.3 232.0,318.2 231.2,318.8 230.5,318.8 230.1,318.2 231.0,317.3ZM218.5,358.9 218.5,359.5 218.0,360.2 217.6,360.1 217.5,359.7 218.0,359.1ZM220.7,339.6 220.9,340.0 220.6,340.5 220.0,340.4 219.8,339.8 220.3,339.5ZM231.2,337.1 231.6,338.4 230.6,340.0 229.8,340.4 229.3,339.4 230.1,337.7ZM236.6,323.7 237.2,324.5 236.7,325.4 235.8,325.6 235.5,324.8 235.7,323.6ZM206.6,339.2 206.6,340.1 206.0,340.5 205.0,340.2 205.2,339.2 205.9,338.7ZM209.2,323.4 209.3,323.8 209.1,324.2 208.6,324.3 208.5,323.9 208.8,323.5ZM216.0,341.7 215.5,342.9 214.1,343.2 213.6,342.5 213.6,341.7 215.0,341.3ZM201.6,334.8 201.4,335.7 200.6,336.1 200.3,336.0 200.2,335.6 200.8,335.1ZM214.4,364.9 214.4,365.3 213.7,365.5 213.3,365.4 213.4,365.1 214.1,364.8ZM229.8,342.5 229.5,343.3 228.5,344.0 227.2,343.4 227.7,342.2 229.2,341.8ZM222.4,332.7 222.0,334.0 220.9,334.4 220.0,334.1 219.9,333.0 221.2,332.5ZM217.2,360.7 217.4,361.2 217.2,362.0 216.5,361.9 216.3,361.3 216.7,360.8ZM224.1,354.4 223.8,355.3 222.4,356.0 221.5,355.9 221.9,355.0 223.1,354.1ZM225.1,354.6 225.0,355.2 224.6,355.8 223.8,356.0 223.9,355.3 224.3,354.6ZM241.2,417.7 241.3,418.2 240.9,418.5 240.5,418.4 240.4,418.1 240.8,417.6ZM230.5,427.0 230.5,427.5 229.7,428.0 229.0,428.0 229.3,427.3 230.1,426.7ZM241.9,409.6 241.6,410.2 241.0,410.4 240.7,410.1 240.7,409.7 241.4,409.4ZM219.8,428.2 219.7,428.7 218.6,429.3 218.2,429.1 218.3,428.5 219.2,428.2ZM234.8,432.5 235.0,433.3 234.1,434.9 233.1,435.6 232.7,434.6 233.8,432.6ZM229.2,426.3 229.4,427.8 228.6,429.4 227.6,430.0 227.2,429.2 228.1,426.9ZM222.5,434.3 222.8,435.1 222.5,436.6 221.4,436.6 220.7,436.0 221.5,434.9ZM248.8,427.7 248.7,428.3 247.7,428.7 247.1,428.4 247.4,427.8 248.4,427.4ZM235.6,418.5 235.1,419.1 234.4,419.4 234.0,419.0 234.0,418.5 234.9,418.2ZM227.7,430.0 227.8,430.7 227.5,431.6 226.7,432.0 226.3,431.4 227.1,430.3ZM243.2,427.8 243.5,428.7 242.7,430.0 241.8,429.8 241.5,428.9 242.1,427.9ZM235.4,430.1 235.3,430.8 234.7,430.9 234.2,430.7 234.3,430.2 234.9,429.8ZM241.5,401.9 241.7,402.2 241.5,402.7 241.0,402.7 240.8,402.4 241.1,401.9ZM226.2,412.4 226.4,412.9 226.1,413.4 225.5,413.6 225.3,413.0 225.6,412.3ZM238.0,422.2 238.1,422.8 237.2,423.4 236.2,423.5 236.5,422.6 237.3,421.9ZM243.2,419.1 243.5,419.6 243.0,420.4 242.4,420.5 242.3,419.8 242.7,419.0ZM244.5,428.4 244.7,428.9 244.3,429.9 243.4,430.3 243.3,429.3 243.9,428.4ZM249.7,426.0 249.3,426.9 248.2,427.9 247.1,427.9 247.6,426.9 248.6,426.2ZM239.2,425.8 239.5,427.3 238.8,428.6 237.6,429.4 237.4,428.1 238.2,426.4ZM226.0,407.2 226.2,407.9 225.5,408.2 225.0,408.0 224.9,407.4 225.4,407.1ZM229.2,419.2 229.0,420.1 228.5,420.6 227.8,420.1 227.5,419.3 228.5,419.0ZM245.9,415.9 245.7,417.9 244.5,419.7 243.2,420.7 243.3,419.0 244.2,416.7ZM234.7,430.1 235.2,430.6 234.6,431.6 233.9,432.0 233.6,431.1 233.9,430.2ZM220.2,414.0 219.9,414.8 218.7,415.3 218.1,414.6 218.4,413.8 219.5,413.5ZM237.4,408.7 236.7,409.9 235.7,411.0 234.4,411.1 234.6,410.2 236.0,408.9ZM233.3,419.7 233.5,420.2 233.1,420.8 232.6,420.6 232.4,420.1 232.7,419.6ZM243.3,405.1 243.7,405.8 243.4,406.6 242.6,406.8 242.4,406.3 242.7,405.3ZM233.2,424.6 233.2,425.7 232.5,426.2 231.5,426.0 231.6,425.0 232.0,424.4ZM235.8,401.4 235.6,401.8 235.0,402.2 234.7,402.1 234.6,401.7 235.3,401.3ZM231.5,435.5 231.6,436.1 230.3,437.1 229.8,437.1 229.6,436.3 230.9,435.4ZM296.0,328.8 295.8,329.4 294.8,330.3 293.9,330.3 294.2,329.5 295.2,328.9ZM294.2,332.0 294.1,332.3 293.8,332.6 293.4,332.3 293.6,331.9 293.9,331.8ZM301.1,338.5 301.5,339.9 300.4,341.8 299.0,342.6 299.2,340.9 299.8,339.0ZM292.2,342.1 292.5,342.6 292.1,343.2 291.5,343.2 291.3,342.5 291.6,342.0ZM284.9,344.3 284.8,344.9 284.2,345.5 283.2,345.1 283.6,344.3 284.5,344.0ZM293.8,327.5 294.1,328.8 293.6,329.8 292.2,330.1 291.9,329.0 292.7,327.8ZM293.2,331.6 293.6,332.4 293.0,333.3 292.2,333.2 291.6,332.4 292.4,331.5ZM289.1,339.1 289.1,340.1 287.6,340.9 285.9,341.0 286.8,339.6 288.2,338.6ZM293.1,339.2 293.3,339.8 292.6,340.1 292.0,340.2 292.0,339.4 292.7,338.9ZM185.6,336.4 186.0,337.2 185.4,337.9 184.6,337.9 184.3,337.0 184.7,336.3ZM197.5,329.7 197.7,330.5 196.6,331.8 195.5,331.9 195.7,330.8 196.8,329.8ZM181.6,338.9 181.8,339.8 181.0,341.4 180.0,341.2 179.6,340.5 180.4,339.0ZM199.5,336.8 199.2,337.3 198.2,337.6 197.6,337.4 198.0,336.9 199.0,336.6ZM187.9,327.8 187.6,328.7 186.8,328.9 186.1,328.4 186.3,327.6 187.1,327.2ZM198.7,331.1 198.9,331.7 198.0,332.5 197.4,332.6 197.4,332.0 198.1,331.0ZM193.8,326.5 193.9,327.2 193.5,328.1 192.9,328.3 192.7,327.6 193.2,326.9ZM188.3,342.2 188.2,342.8 187.1,343.8 186.2,343.7 186.4,342.8 187.5,342.3ZM199.5,331.7 199.7,332.0 199.6,332.7 199.0,332.5 198.7,332.1 199.0,331.6ZM193.4,323.6 193.3,324.3 192.5,324.9 192.0,324.8 192.1,324.3 192.6,323.8ZM244.5,371.7 244.5,372.8 243.6,373.0 242.6,372.6 242.8,371.5 243.6,371.2ZM253.1,360.5 252.8,361.5 251.9,362.3 250.9,362.5 251.3,361.5 252.4,360.6ZM248.2,373.6 248.0,374.8 247.2,376.2 246.1,376.5 246.2,375.3 247.0,374.1ZM248.0,363.7 247.7,364.1 247.2,364.5 246.6,364.3 246.8,363.9 247.6,363.6ZM248.3,363.5 248.3,364.4 247.5,365.6 246.5,366.3 246.5,365.2 247.2,363.7ZM250.8,369.0 250.9,369.5 250.3,370.3 249.8,370.2 249.5,369.7 250.2,369.1ZM249.0,376.4 248.8,377.6 247.2,379.2 246.1,379.2 246.0,377.9 247.3,376.6ZM265.1,372.7 265.3,373.5 264.1,374.2 263.5,373.6 263.4,372.9 264.6,372.3ZM283.0,369.5 283.0,369.9 282.7,370.1 282.4,369.9 282.3,369.6 282.6,369.4ZM249.8,378.2 249.9,379.2 248.9,380.1 247.9,380.5 247.9,379.4 248.7,378.2ZM272.2,363.6 272.1,364.2 271.2,364.5 270.9,364.1 270.9,363.6 271.7,363.2ZM271.9,361.2 271.6,361.9 270.7,362.4 269.7,362.2 270.0,361.2 270.9,360.9ZM255.2,364.3 255.0,364.9 254.4,365.1 253.9,365.0 254.0,364.5 254.6,364.1ZM266.7,376.2 266.6,376.7 266.3,377.5 265.5,377.5 265.4,377.0 266.0,376.3ZM252.3,379.0 252.1,379.3 251.8,379.5 251.5,379.3 251.6,378.9 252.0,378.9ZM265.6,376.5 265.7,377.0 265.3,377.2 264.9,377.1 264.8,376.8 265.2,376.4ZM216.6,379.9 216.6,380.8 216.2,381.6 215.4,382.1 215.4,381.3 215.8,380.2ZM197.1,370.5 196.9,371.0 196.5,371.1 196.2,371.0 196.3,370.6 196.6,370.4ZM212.4,396.2 212.6,396.5 212.3,397.1 211.9,397.1 211.7,396.6 212.1,396.1ZM198.2,387.4 198.2,388.5 197.0,389.1 195.7,389.2 196.2,388.0 197.2,386.9ZM202.8,391.1 202.7,391.9 201.8,392.0 201.2,391.7 201.5,391.1 202.2,390.5ZM218.9,384.6 218.9,385.1 218.4,385.2 218.0,385.0 218.1,384.5 218.6,384.4ZM193.1,391.2 193.3,391.5 192.9,392.3 192.3,392.6 192.2,392.0 192.5,391.2ZM209.5,372.0 209.5,372.6 209.1,372.8 208.5,372.6 208.6,371.9 209.0,371.7ZM205.0,391.6 205.3,392.7 204.7,393.7 203.8,393.7 203.1,393.0 203.9,391.7ZM196.9,395.3 196.6,395.8 195.9,396.1 195.4,395.8 195.7,395.4 196.5,395.2ZM215.0,393.3 215.0,393.7 214.7,394.1 214.3,393.8 214.2,393.4 214.6,393.2ZM201.5,387.2 201.7,388.5 200.7,389.9 199.9,390.1 199.8,389.2 200.5,387.5ZM202.4,392.2 202.1,392.9 201.2,393.1 200.3,392.8 200.8,392.2 201.7,391.9ZM201.7,383.3 202.3,383.8 201.8,384.9 200.9,385.3 200.7,384.2 201.0,383.4ZM254.4,535.2 254.3,536.0 253.4,536.5 252.8,536.2 252.7,535.4 253.5,535.0ZM256.1,593.0 256.3,593.5 255.8,594.5 255.1,594.9 255.0,593.9 255.7,593.1ZM256.6,525.5 256.3,526.8 254.6,528.4 253.0,528.6 253.6,527.4 255.2,525.6ZM252.3,554.9 251.9,555.8 250.9,556.4 250.2,556.0 250.3,555.3 251.2,554.6ZM250.1,301.6 249.6,302.5 248.1,303.1 247.2,302.5 247.5,301.6 248.9,301.2ZM250.3,300.7 250.0,301.3 249.4,301.5 248.8,301.2 249.2,300.8 249.7,300.5Z" fill="#666" stroke="#222" stroke-width="0.45"/>
<path d="M1053.8,652.5 1056.2,646.2 1067.5,645.0 1080.0,646.2 1090.0,645.5 1097.0,650.0 1096.2,654.5 1085.0,657.0 1072.5,658.0 1060.0,658.0Z" fill="#fff" stroke="#222" stroke-width="0.7"/>
<path d="M292.0,625.0 296.0,621.5 303.0,621.0 306.0,624.0 304.0,628.0 297.0,629.0Z" fill="#fff" stroke="#222" stroke-width="0.6"/>
<path d="M473.8,887.5 477.5,880.0 483.8,878.8 488.8,881.2 486.2,888.8 480.0,892.5 475.0,891.2Z" fill="#f2e7da" stroke="#222" stroke-width="0.8"/>
<path d="M493.5,877l1.5,0.8l-1.2,1zM496.5,875l1.2,0.6l-1,0.9zM475,895l1.4,0.5l-1,1z" fill="#333" stroke="#222" stroke-width="0.5"/>
<path d="M387.5,340.0 392.5,345.0 405.0,320.0 415.0,300.0 422.5,285.0 417.5,280.0 407.5,295.0 397.5,315.0ZM326.7,406.7 328.3,406.7 332.5,407.5 340.0,412.5 341.6,411.6 343.3,413.3 356.7,406.7 363.3,396.7 371.7,388.3 386.7,373.3 386.7,350.0 380.0,343.3 371.7,323.3 363.3,313.3 353.3,310.0 340.0,318.3 330.0,333.3 330.0,353.3 320.0,366.7 306.7,380.0 296.7,393.3 306.7,406.7 316.7,410.0ZM1014.0,208.0 1002.0,178.0 970.0,178.0 964.0,161.0 949.0,158.0 925.0,176.0 890.0,219.0 860.0,226.0 854.0,200.0 854.0,175.0 864.0,166.0 875.0,153.0 870.0,143.0 851.0,140.0 835.0,148.0 814.0,170.0 806.0,195.0 808.0,228.0 800.0,240.0 790.0,222.0 776.0,214.0 766.0,192.0 750.0,184.0 729.0,190.0 716.0,200.0 716.0,215.0 705.0,228.0 690.0,215.0 690.0,185.0 668.0,176.0 640.0,180.0 633.0,200.0 614.0,206.0 601.0,220.0 604.8,240.0 604.9,240.3 604.3,240.5 603.7,240.8 603.1,241.2 602.6,241.6 602.1,242.1 601.6,242.6 601.2,243.1 600.8,243.7 600.5,244.3 600.3,245.0 600.1,245.6 600.0,246.3 600.0,247.0 600.0,254.7 611.9,270.9 624.9,288.9 625.4,289.5 625.9,290.1 632.1,296.2 628.3,304.8 628.3,304.8 628.9,305.2 629.4,305.6 629.9,306.1 630.4,306.6 630.8,307.1 631.2,307.7 631.5,308.3 631.7,309.0 631.9,309.6 632.0,310.3 632.0,311.2 632.0,351.2 632.3,352.4 632.7,353.6 633.2,354.7 649.1,384.6 656.8,400.0 671.6,400.0 680.0,406.0 695.0,414.0 696.0,417.2 696.0,425.0 696.0,425.7 696.1,426.4 696.3,427.0 696.5,427.7 696.8,428.3 697.2,428.9 697.6,429.4 698.1,429.9 698.6,430.4 699.1,430.8 699.7,431.2 700.3,431.5 700.5,431.5 701.0,433.0 703.1,442.0 718.0,442.0 718.0,466.0 725.0,465.0 728.0,465.3 728.0,475.4 730.4,475.7 728.8,481.8 728.0,482.9 728.0,488.8 728.0,489.7 727.9,490.4 727.7,491.0 727.5,491.7 727.2,492.3 726.8,492.9 726.4,493.4 725.9,493.9 725.4,494.4 724.9,494.8 724.3,495.2 723.7,495.5 723.0,495.7 722.4,495.9 721.7,496.0 720.8,496.0 719.0,496.0 716.7,499.4 716.3,500.1 715.9,500.9 715.6,501.7 707.7,524.3 697.4,546.9 687.5,560.0 688.8,560.0 689.7,560.0 690.4,560.1 691.0,560.3 691.7,560.5 692.3,560.8 692.9,561.2 693.4,561.6 693.9,562.1 694.4,562.6 694.8,563.1 695.2,563.7 695.5,564.3 695.7,565.0 695.8,565.6 688.0,576.0 686.0,580.4 686.0,582.0 685.2,582.0 680.7,592.0 671.0,592.0 670.3,592.0 669.6,592.1 669.6,592.1 667.9,595.8 667.5,596.7 667.3,597.7 667.1,598.7 667.0,599.6 667.0,600.6 667.1,601.6 667.3,602.5 667.6,603.5 668.0,604.4 668.5,605.2 669.0,606.1 669.7,606.8 670.4,607.5 671.1,608.1 672.0,608.6 672.8,609.1 673.7,609.5 674.7,609.7 675.6,609.9 676.6,610.0 677.6,610.0 678.6,609.9 679.5,609.7 680.5,609.4 681.4,609.0 682.2,608.5 695.2,600.5 696.2,599.8 697.1,599.1 711.8,584.4 716.8,582.1 730.5,588.9 731.4,589.3 732.3,589.6 733.2,589.8 734.1,590.0 735.0,590.0 736.0,590.0 736.9,589.8 737.8,589.6 753.4,585.0 767.0,585.0 768.0,585.0 769.0,584.8 781.8,582.2 788.2,583.7 801.1,609.5 801.4,610.1 809.6,624.0 826.0,624.0 835.0,627.0 850.0,632.0 856.0,632.0 856.0,642.0 870.9,642.0 876.1,647.2 878.5,656.0 880.8,656.0 881.7,656.0 882.4,656.1 883.0,656.3 883.7,656.5 884.3,656.8 884.9,657.2 885.4,657.6 885.9,658.1 886.4,658.6 886.8,659.1 887.2,659.7 887.5,660.3 887.7,661.0 887.9,661.6 888.0,662.3 888.0,663.2 888.0,670.7 899.5,678.3 900.3,678.8 901.2,679.2 902.1,679.6 903.1,679.8 904.0,680.0 905.0,680.0 925.0,680.0 925.7,680.0 926.5,679.9 946.5,676.9 947.0,676.8 961.8,673.8 984.0,670.3 984.0,663.2 984.0,662.3 984.1,661.6 984.3,661.0 984.5,660.3 984.7,660.1 985.0,660.0 1005.0,656.0 1025.3,656.0 1036.0,648.0 1036.8,647.4 1037.5,646.6 1038.1,645.8 1038.7,645.0 1039.1,644.1 1039.5,643.2 1043.6,630.9 1053.4,622.7 1054.0,622.1 1054.6,621.5 1067.3,606.8 1069.3,604.8 1072.3,608.4 1073.0,609.2 1073.8,609.8 1074.7,610.4 1075.6,611.0 1076.5,611.4 1077.5,611.7 1078.5,611.9 1098.5,614.9 1099.4,615.0 1100.4,615.0 1101.3,614.9 1102.2,614.7 1103.1,614.5 1104.0,614.2 1104.8,613.8 1105.6,613.3 1106.4,612.7 1107.1,612.1 1112.0,607.1 1112.0,599.2 1112.0,598.3 1112.1,597.6 1112.3,597.0 1112.5,596.3 1112.8,595.7 1113.2,595.1 1113.6,594.6 1114.1,594.1 1114.6,593.6 1115.1,593.2 1115.7,592.8 1116.3,592.5 1117.0,592.3 1117.6,592.1 1118.3,592.0 1119.2,592.0 1124.0,592.0 1127.2,587.2 1140.5,578.3 1141.4,577.7 1142.2,576.9 1142.9,576.1 1144.0,574.7 1144.0,558.3 1145.0,557.0 1144.0,553.6 1144.0,535.2 1144.0,534.3 1144.1,533.6 1144.3,533.0 1144.5,532.3 1144.8,531.7 1145.2,531.1 1145.6,530.6 1146.1,530.1 1146.6,529.6 1147.1,529.2 1147.7,528.8 1148.3,528.5 1149.0,528.3 1149.6,528.1 1150.3,528.0 1151.2,528.0 1153.7,528.0 1154.6,524.7 1154.7,524.4 1159.0,507.1 1164.5,501.7 1176.4,500.7 1176.5,500.3 1176.8,499.7 1177.2,499.1 1177.6,498.6 1178.1,498.1 1178.6,497.6 1179.1,497.2 1179.7,496.8 1180.3,496.5 1181.0,496.3 1181.6,496.1 1182.3,496.0 1183.2,496.0 1195.0,496.0 1204.7,490.8 1205.6,490.3 1206.4,489.7 1207.1,489.1 1207.8,488.3 1208.3,487.5 1208.8,486.7 1209.3,485.8 1209.6,484.8 1214.6,467.8 1214.6,467.7 1219.6,449.7 1219.8,448.8 1220.0,448.0 1220.4,442.8 1211.2,435.9 1211.1,435.8 1211.2,435.1 1220.8,439.0 1223.0,417.0 1223.0,415.8 1222.9,414.7 1222.7,413.6 1219.3,400.0 1215.2,400.0 1214.3,400.0 1213.6,399.9 1213.0,399.7 1212.3,399.5 1211.7,399.2 1211.1,398.8 1210.6,398.4 1210.1,397.9 1209.6,397.4 1209.2,396.9 1208.8,396.3 1208.5,395.7 1208.3,395.0 1208.1,394.4 1208.0,393.7 1208.0,392.8 1208.0,385.3 1210.0,372.0 1208.0,356.0 1208.0,322.9 1207.5,322.4 1193.5,310.4 1192.8,309.8 1192.0,309.3 1191.1,308.9 1190.2,308.5 1189.3,308.3 1188.4,308.1 1187.4,308.0 1186.5,308.0 1185.5,308.1 1184.6,308.3 1160.6,314.3 1159.8,314.5 1156.8,315.5 1155.9,315.9 1155.1,316.3 1154.3,316.8 1153.5,317.4 1152.8,318.0 1152.2,318.8 1151.6,319.5 1151.1,320.4 1150.7,321.3 1150.4,322.2 1150.2,323.1 1150.0,324.0 1150.0,325.0 1150.0,333.4 1144.0,351.4 1144.0,360.8 1144.0,361.7 1143.9,362.4 1143.7,363.0 1143.5,363.7 1143.2,364.3 1142.8,364.9 1142.7,365.0 1125.0,365.0 1123.0,358.0 1122.0,358.0 1122.0,354.5 1115.0,330.0 1118.0,290.0 1122.0,290.0 1122.0,279.0 1122.0,278.5 1122.0,277.8 1121.9,276.8 1121.8,276.2 1121.6,275.2 1121.4,274.5 1121.1,273.6 1120.9,273.0 1120.5,272.0 1120.2,271.4 1119.8,270.6 1119.4,270.0 1118.9,269.2 1118.4,268.6 1117.8,267.8 1117.8,267.8 1106.0,265.0 1086.0,270.0 1081.2,268.8 1080.8,268.3 1080.5,267.7 1080.3,267.0 1080.1,266.4 1080.0,265.7 1080.0,264.8 1080.0,258.3 1076.9,257.6 1079.7,245.0 1079.5,244.3 1079.2,243.7 1078.8,243.1 1078.4,242.6 1077.9,242.1 1077.4,241.6 1076.9,241.2 1076.3,240.8 1075.7,240.5 1075.0,240.3 1074.4,240.1 1073.7,240.0 1073.0,240.0 1070.6,240.0 1071.0,238.0 1068.0,217.0 1050.0,220.0 1026.0,223.0ZM740.2,246.0 750.0,246.0 750.0,246.5 750.0,247.0 750.0,294.0 744.5,294.0 745.0,300.0 744.7,304.0 735.2,304.0 734.3,304.0 733.6,303.9 733.0,303.7 732.3,303.5 731.8,303.2 732.0,300.0 728.0,260.0 728.0,247.0 728.0,246.3 727.9,245.8 727.6,244.8 727.5,244.3 727.2,243.7 726.8,243.1 726.4,242.6 726.0,242.1 726.0,242.1 725.9,241.4 725.8,240.0 722.0,206.0 735.0,206.0ZM695.2,588.3 694.8,588.9 694.4,589.4 693.9,589.9 693.4,590.4 692.9,590.8 692.3,591.2 691.7,591.5 691.0,591.7 690.4,591.9 690.1,591.9 695.9,586.1 695.9,586.4 695.7,587.0 695.5,587.7ZM815.0,275.0 830.0,272.0 848.8,272.0 849.7,272.0 850.4,272.1 851.0,272.3 851.7,272.5 851.7,272.6 856.0,284.0 856.0,360.8 856.0,361.7 855.9,362.4 855.7,363.0 855.5,363.7 855.2,364.3 854.8,364.9 854.4,365.4 853.9,365.9 853.4,366.4 853.0,366.8 852.2,376.6 844.4,388.4 827.5,389.5 822.1,368.9 823.5,340.4 823.5,340.3 823.2,339.7 822.8,339.1 822.4,338.6 821.9,338.1 821.4,337.6 820.9,337.2 820.3,336.8 819.7,336.5 819.0,336.3 818.4,336.1 817.7,336.0 817.0,336.0 813.7,336.0 814.0,330.0 813.5,326.0 802.0,326.0 802.0,282.0 813.6,282.0ZM1016.0,488.8 1016.0,489.7 1015.9,490.4 1015.7,491.0 1015.5,491.7 1015.2,492.3 1014.8,492.9 1014.4,493.4 1013.9,493.9 1013.4,494.4 1012.9,494.8 1012.3,495.2 1011.7,495.5 1011.0,495.7 1010.4,495.9 1009.7,496.0 1009.0,496.0 1009.0,504.0 999.6,504.0 999.4,496.0 991.2,496.0 990.3,496.0 989.6,495.9 989.3,495.8 987.0,430.0 984.0,428.6 984.0,417.7 974.8,413.5 972.3,320.0 986.4,320.0 989.3,400.2 989.6,400.1 990.3,400.0 991.2,400.0 999.3,400.0 999.6,410.0 1006.0,410.0 1006.0,423.2 1016.0,428.4ZM944.8,496.0 937.2,496.0 937.7,510.0 929.6,510.0 929.0,496.0 927.2,496.0 926.3,496.0 925.6,495.9 925.0,495.7 924.3,495.5 923.7,495.2 923.1,494.8 922.6,494.4 922.1,493.9 921.6,493.4 921.2,492.9 920.8,492.3 920.5,491.7 920.3,491.0 920.1,490.4 920.0,489.7 920.0,488.8 920.0,439.2 920.0,438.3 920.1,437.6 920.3,437.0 920.5,436.3 920.8,435.7 921.2,435.1 921.6,434.6 922.1,434.1 922.6,433.6 923.1,433.2 923.7,432.8 924.3,432.5 925.0,432.3 925.6,432.1 926.3,432.0 927.2,432.0 944.8,432.0 945.2,432.0 947.2,495.6 947.0,495.7 946.4,495.9 945.7,496.0ZM910.0,390.0 898.0,390.0 898.0,378.0 910.0,378.0ZM1060.1,418.0 1097.0,418.0 1097.0,437.0 1084.6,456.0 1064.0,456.0ZM881.7,501.4 870.4,494.6 871.5,476.8 899.0,473.3 901.2,497.1ZM640.0,460.0 650.0,445.0 645.0,440.0 632.5,447.5 620.0,460.0 612.5,475.0 617.5,480.0 627.5,475.0ZM295.0,500.0 305.0,487.5 306.2,472.5 300.0,467.5 282.5,475.0 275.0,487.5 271.2,510.0 277.5,517.5 287.5,510.0ZM645.0,535.0 657.5,545.0 672.5,545.0 685.0,535.0 685.0,522.5 695.0,515.0 695.0,495.0 685.0,482.5 672.5,475.0 657.5,472.5 640.0,477.5 627.5,490.0 620.0,500.0 620.0,520.0 632.5,527.5ZM470.0,545.0 467.5,555.0 480.0,565.0 495.0,567.5 512.5,560.0 520.0,545.0 537.5,540.0 545.0,535.0 542.5,522.5 548.8,515.0 550.0,500.0 545.0,487.5 532.5,490.0 520.0,497.5 507.5,512.5 500.0,527.5 485.0,537.5Z" fill="url(#hx)" fill-rule="evenodd"/>
<path d="M700.0,302.5 702.1,299.8 704.8,297.0 710.0,292.5 713.7,290.4 715.1,290.3 716.2,291.2 716.8,293.8 717.0,301.7 717.5,305.0 718.7,307.3 721.7,310.7 722.5,312.5 722.6,314.7 722.2,317.1 721.3,319.4 720.0,321.2 718.0,322.7 715.5,323.9 712.7,324.7 710.0,325.0 707.4,324.7 704.6,323.9 702.1,322.7 700.0,321.2 698.4,319.4 697.3,317.3 696.5,314.9 696.2,312.5 696.5,310.1 697.3,307.6 698.4,305.0Z" fill="#6b4a6e" fill-rule="evenodd"/>
<path d="M712.0,320.5 715.0,319.5 716.9,318.1 717.9,316.6 718.2,314.1 717.7,312.6 715.5,310.1 713.7,306.6 713.1,304.6 713.0,301.6 712.5,300.0 711.5,298.6 710.5,298.5 709.5,298.7 708.0,299.7 705.7,302.1 703.5,304.8 701.6,308.1 700.5,311.6 700.4,313.1 701.5,316.3 702.5,317.6 704.2,319.1 705.5,319.7 708.0,320.5Z" fill="#9a5e9e" fill-rule="evenodd"/>
<path d="M711.0,317.8 713.0,317.3 714.5,316.4 715.2,315.6 715.3,314.6 715.0,313.7 713.0,311.6 711.0,307.6 710.3,305.6 710.3,302.6 710.0,302.0 708.2,303.6 705.8,306.6 704.3,309.1 703.2,312.6 704.0,314.9 706.0,316.8 709.0,317.8Z" fill="#cc77d0" fill-rule="evenodd"/>
<path d="M667.5,327.5 668.2,325.5 669.8,323.6 671.8,322.1 673.8,321.2 675.6,321.4 677.6,322.2 679.5,323.5 681.2,325.0 684.6,329.2 685.8,331.6 686.2,333.8 685.5,335.7 683.9,337.7 681.9,339.2 680.0,340.0 678.2,339.9 676.2,339.1 674.2,337.8 670.8,334.4 669.1,332.0 667.9,329.6Z" fill="#6b4a6e" fill-rule="evenodd"/>
<path d="M663.8,354.5 664.0,353.2 665.4,350.8 666.2,350.0 667.2,349.6 668.4,349.4 669.6,349.5 670.5,350.0 671.3,350.9 672.4,353.7 672.5,355.0 672.2,356.3 670.9,358.7 670.0,359.5 669.0,359.9 667.7,360.1 666.5,360.0 665.5,359.5 664.8,358.6 663.8,355.8Z" fill="#6b4a6e" fill-rule="evenodd"/>
<path d="M675.0,380.0 675.5,377.2 676.5,374.3 678.0,371.4 680.0,368.8 682.6,366.3 685.8,363.9 692.5,360.0 699.0,357.3 702.1,356.5 705.0,356.2 707.6,356.5 710.1,357.3 712.2,358.4 713.8,360.0 714.7,362.1 715.2,364.6 715.3,367.4 715.0,370.0 714.2,372.5 710.0,380.0 706.4,387.7 705.0,390.0 701.6,394.5 699.6,396.3 697.5,397.5 695.1,397.9 692.6,397.7 690.0,397.1 685.1,395.1 682.7,393.7 680.6,391.9 678.8,390.0 677.3,387.8 676.0,385.3 675.2,382.7Z" fill="#6b4a6e" fill-rule="evenodd"/>
<path d="M695.2,391.3 698.2,389.7 701.2,387.3 704.2,384.0 708.1,378.5 710.1,375.0 711.5,372.0 712.3,369.0 712.5,366.5 712.1,364.5 711.7,363.5 710.8,362.0 709.7,361.0 708.8,360.4 705.8,359.4 703.8,359.5 697.8,360.9 691.8,363.6 688.8,365.5 684.7,369.0 682.0,372.0 680.3,375.0 679.6,378.0 679.4,380.0 679.6,381.0 681.2,384.8 683.2,387.4 685.8,389.1 687.8,390.1 689.8,390.8 694.2,391.4Z" fill="#9a5e9e" fill-rule="evenodd"/>
<path d="M693.8,387.2 697.8,385.8 700.2,384.3 702.8,382.2 706.8,377.6 708.6,374.5 710.3,370.0 710.5,366.5 709.8,364.4 707.8,362.3 705.8,361.6 704.8,361.5 700.8,362.2 698.2,362.8 692.8,365.3 690.2,367.0 685.4,371.5 683.9,373.5 682.8,375.5 682.3,378.5 682.6,380.5 683.8,383.0 684.8,384.2 686.8,385.7 689.2,386.8Z" fill="#cc77d0" fill-rule="evenodd"/>
<path d="M695.2,383.4 696.8,383.2 699.2,382.1 701.8,380.5 705.3,377.0 706.8,374.8 708.8,369.9 708.8,367.5 708.8,366.5 708.3,365.5 706.8,364.0 704.8,363.4 702.8,363.8 701.2,363.9 698.8,364.5 695.2,366.0 693.2,367.0 691.2,368.4 687.1,372.5 685.7,374.5 684.7,376.5 684.5,378.0 685.1,380.0 686.4,382.0 688.2,383.2 690.2,383.9 693.8,383.9Z" fill="#ff88ff" fill-rule="evenodd"/>
<path d="M773.8,295.0 774.4,292.8 775.5,290.8 777.1,289.0 778.8,287.5 780.7,286.3 783.0,285.3 785.3,284.8 787.5,285.0 789.6,286.1 791.7,287.8 793.6,290.0 795.0,292.5 795.8,295.3 796.2,298.4 796.2,311.4 795.8,314.6 795.0,317.5 793.4,320.1 789.1,324.9 787.5,327.5 786.9,330.4 786.8,336.6 786.2,340.0 785.1,343.5 772.5,372.5 768.9,379.1 767.1,382.1 762.7,388.0 760.2,391.1 757.6,393.9 755.0,396.2 752.4,398.1 749.8,399.7 747.3,400.8 745.0,401.2 742.7,401.1 740.5,400.5 738.6,399.3 737.5,397.5 737.4,395.0 740.0,385.0 741.7,374.0 743.5,365.7 746.0,356.8 749.1,348.5 752.9,340.9 755.0,337.5 757.3,334.4 765.0,326.2 773.1,319.9 775.0,317.5 776.0,314.6 776.4,311.3 776.2,305.0 775.7,302.3 773.9,297.3Z" fill="#6b4a6e" fill-rule="evenodd"/>
<path d="M748.2,392.5 751.7,391.2 753.7,389.9 755.7,388.2 759.9,383.6 764.0,378.6 768.1,372.6 771.7,365.6 774.2,359.6 776.4,353.6 778.1,348.1 779.7,341.1 779.8,338.1 779.2,334.6 777.7,330.6 776.9,329.6 772.2,330.1 769.2,331.0 765.7,332.6 761.2,335.6 757.5,339.1 755.1,342.1 752.5,346.1 750.0,351.1 748.3,355.6 746.4,363.1 745.2,370.6 744.1,382.6 744.3,386.1 744.7,388.6 745.7,391.7 746.2,392.6ZM780.7,324.0 787.7,321.1 791.2,318.2 793.5,314.1 794.4,309.1 794.4,305.1 794.1,300.1 793.4,296.6 792.6,294.6 791.9,293.1 790.2,290.8 788.2,289.4 786.2,288.8 785.2,288.8 782.7,289.6 779.7,291.3 777.6,293.6 776.7,296.1 776.7,298.1 777.9,304.6 779.4,316.6 779.9,323.1 780.2,323.9Z" fill="#9a5e9e" fill-rule="evenodd"/>
<path d="M750.7,387.3 754.7,384.4 762.7,375.6 766.2,370.7 770.5,362.6 773.9,353.1 775.3,347.6 775.8,343.1 775.8,341.6 775.4,339.1 774.2,336.8 773.2,335.9 769.2,335.4 766.7,335.8 763.7,337.0 760.7,338.9 758.7,340.6 755.3,344.6 753.6,347.1 751.2,351.6 749.5,356.1 747.9,363.6 747.6,367.1 747.1,369.1 746.5,382.1 747.0,384.6 748.2,386.6 749.7,387.5ZM787.1,318.6 788.7,317.8 789.7,317.0 792.0,313.1 793.0,308.6 793.0,305.1 792.6,303.6 792.5,300.6 791.6,297.1 790.7,294.8 788.7,292.4 787.2,291.5 785.7,291.3 782.7,292.2 780.0,294.1 778.9,295.6 778.3,297.6 778.3,298.6 778.6,302.1 779.6,308.1 780.7,312.6 781.8,315.6 782.9,317.6 783.7,318.3 784.7,318.6Z" fill="#cc77d0" fill-rule="evenodd"/>
<path d="M749.7,384.1 752.7,382.4 760.7,374.3 764.3,369.6 766.5,365.6 767.3,364.6 768.7,361.6 770.2,357.6 771.0,354.6 771.8,352.6 771.9,351.1 772.4,349.6 772.4,348.1 772.9,346.6 773.0,343.1 772.4,341.1 771.2,339.6 770.3,339.1 768.2,338.4 766.7,338.4 764.7,339.0 760.2,341.5 756.3,345.6 754.7,347.8 752.7,351.4 751.2,355.0 750.2,358.5 750.1,360.1 749.7,361.1 749.5,363.1 749.1,364.1 749.1,367.6 748.6,369.1 748.5,381.6 749.2,383.7ZM788.2,316.1 790.7,312.3 791.2,310.7 791.3,309.1 791.7,308.1 791.7,305.6 791.2,304.1 791.2,301.3 790.1,297.6 788.7,295.0 787.7,294.0 786.2,293.4 783.7,294.0 780.7,296.0 779.7,298.4 779.7,301.6 780.1,302.6 780.7,307.1 782.7,313.1 783.7,314.6 784.7,315.7 785.7,316.2 787.2,316.4Z" fill="#ff88ff" fill-rule="evenodd"/>
<path d="M753.5,357.2 753.6,360.1 754.2,362.5 755.5,364.8 757.3,365.6 759.3,365.4 761.4,364.7 763.3,363.5 765.1,361.9 766.8,359.9 768.2,357.7 769.2,355.4 769.8,352.8 769.9,350.0 769.5,347.5 768.5,345.5 768.1,345.1 766.2,344.4 763.9,344.6 761.4,345.3 759.3,346.4 757.4,348.1 755.9,350.1 754.6,352.2 753.7,354.7Z" fill="#dd6fdd" fill-rule="evenodd"/>
<path d="M754.8,357.3 754.9,359.9 755.4,362.2 756.2,363.8 757.5,364.3 759.1,364.1 760.9,363.5 762.5,362.5 764.1,361.1 765.7,359.2 767.1,357.1 768.0,355.0 768.5,352.7 768.6,350.1 768.3,347.8 767.5,346.2 766.1,345.7 764.0,345.9 761.9,346.5 760.0,347.5 758.4,348.9 757.0,350.8 755.8,352.9 755.0,355.0Z" fill="#bf59c2" fill-rule="evenodd"/>
<path d="M815.0,402.5 817.6,402.3 820.2,403.4 825.0,406.2 829.0,406.9 830.5,407.4 831.2,408.8 831.0,411.4 830.1,414.8 824.0,433.9 822.5,437.5 819.1,444.1 815.0,450.0 812.7,452.6 805.0,460.0 780.0,485.0 760.0,510.0 752.5,520.0 752.1,520.0 752.7,517.7 752.5,517.5 748.9,523.6 747.5,525.0 746.1,525.3 744.6,524.8 743.3,523.9 742.5,522.5 742.3,520.4 743.1,514.8 744.4,511.1 747.5,507.5 757.5,492.5 763.6,485.0 779.6,466.2 785.3,458.8 790.4,451.2 792.5,447.5 794.0,443.8 797.5,432.5 802.9,419.1 805.0,415.0 809.8,407.4 812.4,404.4Z" fill="#6b4a6e" fill-rule="evenodd"/>
<path d="M752.5,527.5 753.6,526.4 755.5,525.6 757.8,525.2 760.0,525.0 764.8,525.7 767.1,526.5 768.8,527.5 769.8,528.9 770.4,530.6 770.5,532.3 770.0,533.8 768.7,534.9 766.8,535.9 764.6,536.6 762.5,537.0 760.5,537.0 758.4,536.7 756.5,536.0 755.0,535.0 753.8,533.4 752.8,531.3 752.3,529.2Z" fill="#6b4a6e" fill-rule="evenodd"/>
<path d="M868.8,342.5 869.7,339.8 871.1,337.2 872.9,334.8 875.0,332.5 877.7,330.2 881.0,328.0 884.4,326.1 887.5,325.0 890.2,324.8 892.7,325.3 897.5,327.5 902.5,330.6 904.7,332.7 906.2,335.0 906.9,337.8 906.9,341.1 906.2,347.5 906.1,353.4 905.8,355.9 905.0,357.5 903.6,357.8 901.6,357.1 897.5,355.0 891.9,351.7 890.0,351.2 888.1,351.6 886.2,352.6 882.5,355.0 876.8,359.4 875.0,360.0 873.2,359.6 871.4,358.6 869.8,357.0 868.8,355.0 868.2,352.3 868.0,349.1 868.2,345.6Z" fill="#6b4a6e" fill-rule="evenodd"/>
<path d="M875.7,354.4 878.7,353.3 881.1,351.6 884.2,348.1 887.6,341.6 888.2,339.6 888.1,338.6 886.2,337.6 883.2,336.9 877.2,337.0 874.8,338.1 872.7,340.3 871.1,343.6 870.6,345.1 870.1,348.1 870.6,351.1 871.7,352.9 873.2,353.9Z" fill="#9a5e9e" fill-rule="evenodd"/>
<path d="M878.7,349.8 880.2,348.3 881.0,347.1 881.2,343.6 880.4,342.1 879.2,341.2 876.2,341.4 875.0,342.1 874.2,342.9 873.2,345.1 873.2,346.1 873.6,347.6 875.4,350.1 876.2,350.4 877.7,350.3Z" fill="#cc77d0" fill-rule="evenodd"/>
<path d="M865.0,427.5 867.9,427.3 874.3,429.3 877.5,430.0 883.8,430.3 890.0,430.0 893.3,429.3 900.0,427.3 902.5,427.5 904.1,429.0 905.0,431.4 908.0,444.8 908.7,448.8 908.8,452.5 908.1,455.9 907.0,459.3 905.4,462.4 903.8,465.0 901.8,467.3 899.5,469.3 897.2,470.7 895.0,471.2 892.9,470.7 890.9,469.1 889.0,467.1 887.5,465.0 886.6,462.6 885.9,457.1 885.0,455.0 883.5,453.7 881.6,452.8 879.5,452.4 877.5,452.5 875.6,453.2 873.8,454.4 868.1,459.2 862.5,465.0 856.7,470.4 855.0,472.5 852.2,477.3 850.0,482.5 849.4,485.0 848.6,490.1 847.5,492.5 845.6,494.9 843.1,497.3 840.4,499.5 837.5,501.2 834.4,502.5 831.1,503.4 827.8,503.9 825.0,503.8 822.7,502.9 820.6,501.6 818.9,499.7 817.5,497.5 816.4,494.8 815.6,491.6 815.2,488.3 815.0,485.0 815.2,481.8 815.6,478.6 816.4,475.4 817.5,472.5 819.0,469.8 820.8,467.3 825.0,462.5 832.4,454.8 837.5,450.4 850.0,441.4 855.0,437.5 862.3,429.2Z" fill="#6b4a6e" fill-rule="evenodd"/>
<path d="M831.8,498.0 835.2,496.8 837.2,495.6 841.2,491.2 842.9,488.6 845.0,483.1 848.3,476.6 851.8,470.6 855.8,465.1 866.2,454.8 873.2,449.7 879.2,446.4 882.0,444.1 882.4,442.1 881.8,440.3 878.8,437.6 877.2,436.9 875.2,436.4 868.2,436.1 865.2,436.8 862.8,437.9 858.8,440.4 851.8,445.9 849.0,448.6 847.8,449.4 839.3,457.1 833.3,463.1 827.0,471.6 824.8,475.6 823.4,479.1 822.7,484.1 823.0,490.1 823.8,493.1 824.6,494.6 825.8,496.1 827.9,497.6 829.2,498.1ZM897.4,466.1 900.2,464.0 903.0,460.1 904.5,457.1 905.5,453.6 905.6,452.6 905.5,449.6 905.0,446.6 904.0,443.1 903.1,441.1 902.2,439.1 900.8,437.3 898.8,436.0 897.8,435.7 895.8,435.8 893.2,437.0 887.5,440.6 886.2,441.6 886.0,442.1 886.5,444.6 889.0,451.1 890.2,456.6 890.4,458.1 891.8,462.6 893.3,465.1 894.2,466.0 895.8,466.5Z" fill="#9a5e9e" fill-rule="evenodd"/>
<path d="M834.8,493.4 837.1,490.6 839.6,486.6 841.3,482.6 844.8,475.6 846.7,472.1 850.7,466.1 853.2,463.1 868.8,447.5 870.3,444.6 869.9,443.6 869.4,443.1 868.2,442.5 866.2,442.0 863.8,442.7 860.8,444.2 853.8,449.1 851.7,451.1 850.2,452.1 840.8,461.4 840.0,462.6 836.1,467.1 833.2,471.0 831.2,474.1 828.2,480.1 828.1,481.6 827.6,483.1 827.6,488.6 828.2,491.1 829.8,493.2 831.8,494.0 833.8,493.8ZM897.8,460.4 899.5,459.6 900.8,458.3 902.3,455.6 902.9,453.6 902.9,450.6 902.4,448.1 900.9,444.1 899.6,442.1 898.2,441.2 897.2,441.1 896.8,441.1 894.8,442.3 893.1,444.6 892.7,446.6 892.9,452.1 893.3,453.6 893.4,455.1 894.0,457.6 894.8,459.5 895.8,460.4 896.2,460.5Z" fill="#cc77d0" fill-rule="evenodd"/>
<path d="M636.2,506.2 637.4,502.0 638.5,499.7 640.0,497.5 642.0,495.5 644.5,493.5 650.0,490.0 656.1,487.1 659.3,485.9 662.5,485.0 665.7,484.4 672.1,484.2 675.0,484.5 677.9,485.2 680.6,486.1 683.1,487.3 685.0,488.8 686.3,490.4 687.1,492.2 687.5,494.2 687.5,496.2 687.1,498.4 685.0,502.9 681.0,509.0 679.4,510.8 675.3,514.1 670.3,517.0 667.5,518.0 661.3,519.3 658.1,519.6 655.0,519.5 652.0,519.1 646.2,517.3 641.7,515.1 638.6,512.5 636.7,510.1 636.2,509.0 636.1,507.8Z" fill="#6b4a6e" fill-rule="evenodd"/>
<path d="M657.3,513.1 662.3,512.6 667.7,510.9 675.8,506.6 678.8,504.0 681.0,501.4 682.1,498.4 682.0,495.4 681.5,493.9 680.8,492.9 677.8,491.0 674.8,490.1 668.8,489.8 664.8,490.1 656.6,493.4 652.1,495.9 648.3,498.6 644.3,502.6 643.3,504.9 643.6,506.4 644.2,507.4 647.4,510.4 649.3,511.6 652.3,513.0Z" fill="#9a5e9e" fill-rule="evenodd"/>
<path d="M669.8,504.9 671.8,504.3 675.3,502.7 677.2,501.4 678.3,500.2 679.0,498.4 678.6,496.9 677.8,495.4 675.8,494.1 673.3,493.5 666.3,493.5 663.8,494.5 661.8,495.8 660.7,496.9 659.8,498.4 659.7,500.4 660.5,502.4 661.3,503.5 663.8,505.0Z" fill="#cc77d0" fill-rule="evenodd"/>
<path d="M866.2,260.0 867.3,253.0 868.3,250.0 870.0,247.5 872.5,245.8 875.5,244.7 879.0,244.0 886.5,243.7 890.9,243.9 894.8,244.7 897.5,246.2 898.4,248.9 898.0,252.5 894.9,266.6 893.9,269.8 892.5,272.5 890.4,274.8 887.7,276.9 878.6,282.2 876.8,282.7 875.0,282.5 873.0,281.5 870.9,279.8 868.9,277.6 867.5,275.0 866.6,271.7 866.2,267.8Z" fill="#6b4a6e" fill-rule="evenodd"/>
<path d="M886.8,273.4 889.8,271.6 890.9,270.4 892.4,266.9 892.6,262.9 891.9,260.9 890.8,259.7 887.8,258.0 886.8,257.9 884.0,258.9 882.3,260.4 880.4,263.9 879.9,266.4 880.3,269.9 881.2,271.9 883.8,273.8 885.8,273.8Z" fill="#9a5e9e" fill-rule="evenodd"/>
<path d="M951.2,210.0 953.4,206.8 956.2,203.4 962.5,197.5 968.7,192.7 971.8,191.0 975.0,190.0 978.1,190.3 984.4,192.9 987.5,193.8 990.8,193.5 997.3,192.1 1000.0,192.5 1002.1,194.1 1003.9,196.5 1005.3,199.4 1006.2,202.5 1006.7,205.9 1006.2,217.5 1007.6,228.9 1007.5,232.5 1006.6,235.9 1003.5,242.1 1002.5,245.0 1002.3,247.6 1002.9,252.4 1002.5,255.0 1001.2,258.1 999.4,261.4 997.2,264.7 995.0,267.5 992.7,269.8 990.2,271.9 985.0,275.0 982.4,275.7 977.3,276.3 975.0,277.5 972.9,280.2 969.1,287.3 967.5,290.0 964.7,292.8 963.5,293.2 962.5,292.5 961.7,290.4 958.7,269.9 957.5,267.5 955.4,266.4 949.7,266.1 947.5,265.0 946.0,262.7 944.8,259.7 944.1,256.2 943.8,252.5 943.9,248.4 944.6,243.8 948.8,222.5 950.0,213.1Z" fill="#6b4a6e" fill-rule="evenodd"/>
<path d="M968.5,271.9 976.5,270.7 980.0,270.6 981.5,270.3 984.0,269.4 986.5,268.0 990.7,264.8 993.4,261.8 996.5,257.8 999.0,253.2 1000.5,244.8 1001.9,240.2 1003.3,234.2 1003.6,230.8 1002.8,224.8 1002.7,220.2 1003.2,208.8 1002.9,206.2 1001.8,203.2 999.6,199.8 997.5,198.1 993.5,198.1 988.0,198.7 978.0,199.0 976.0,199.3 973.5,201.0 970.5,203.5 967.5,204.1 963.0,205.7 961.0,206.7 958.5,208.5 954.8,212.2 952.3,217.2 951.3,221.8 951.0,225.2 951.1,227.8 951.6,232.8 952.3,235.8 953.4,239.2 955.5,244.2 954.9,251.2 955.5,255.0 956.0,255.7 959.0,258.2 961.5,261.0 963.5,263.9 968.0,271.8Z" fill="#9a5e9e" fill-rule="evenodd"/>
<path d="M981.5,266.6 985.0,264.9 988.6,262.2 994.5,255.8 996.9,251.8 998.7,246.2 1000.3,240.2 1000.9,235.2 1000.9,231.8 1000.4,226.8 1000.0,224.8 1000.3,222.8 1000.3,219.8 1001.0,214.2 1000.9,209.8 1000.5,207.2 999.9,205.8 998.0,203.2 996.0,201.7 992.0,201.4 987.5,201.9 981.0,204.0 976.5,206.5 971.5,211.3 967.5,210.2 965.5,209.9 961.0,210.9 958.5,212.6 956.3,214.8 954.1,218.2 953.1,220.8 952.9,224.8 953.2,226.8 954.4,230.8 956.0,233.4 957.0,234.7 958.0,235.3 961.5,236.7 963.5,237.0 963.8,237.2 963.7,238.8 962.3,245.8 962.2,249.8 963.9,254.2 967.5,261.9 970.0,265.4 971.3,266.2 975.0,267.1 980.0,267.0Z" fill="#cc77d0" fill-rule="evenodd"/>
<path d="M981.5,263.5 983.5,262.5 987.3,259.8 992.5,254.5 995.1,250.8 997.4,245.8 998.5,242.3 998.6,240.8 999.0,239.8 999.1,235.8 998.7,234.2 998.6,231.8 998.3,230.8 998.2,227.8 997.8,226.2 997.7,224.2 998.2,222.2 998.2,219.2 998.7,217.8 998.7,215.2 999.1,213.8 999.1,210.8 998.6,208.2 998.0,207.1 996.3,205.2 995.0,204.5 993.5,204.4 992.0,204.0 990.5,204.4 988.0,204.6 985.0,206.0 983.0,207.2 977.5,212.4 975.5,214.9 973.8,217.8 972.8,220.2 972.7,221.2 971.8,223.8 971.7,225.2 971.3,226.2 971.2,228.8 970.8,229.8 970.7,233.8 968.3,243.2 968.2,245.8 967.8,246.8 967.8,248.8 968.3,250.2 968.5,253.2 970.1,258.8 971.9,261.8 973.0,262.8 976.0,264.1 979.5,264.1ZM962.5,231.2 964.5,230.2 966.5,229.0 968.3,227.2 969.6,224.2 969.7,222.8 970.2,221.2 970.1,219.8 969.6,217.8 968.2,215.8 965.5,213.9 964.0,213.4 962.0,213.5 960.0,214.6 958.0,216.2 957.3,217.2 955.5,219.2 954.4,221.8 954.5,224.7 955.0,226.3 956.8,229.8 958.5,231.5 960.5,231.7Z" fill="#ff88ff" fill-rule="evenodd"/>
<path d="M974.8,237.6 975.1,240.6 975.5,243.1 976.3,245.5 977.3,247.5 978.6,249.2 980.3,250.7 982.4,251.3 984.7,250.8 987.1,249.5 989.3,247.8 991.1,245.7 992.3,243.2 992.9,240.7 995.0,228.6 995.3,225.1 995.0,222.2 993.7,219.8 991.6,218.2 989.6,217.5 987.5,217.5 985.0,218.4 982.7,220.1 980.7,222.0 979.0,224.2 977.5,226.7 976.3,229.4 975.5,232.2 975.0,234.8Z" fill="#dd6fdd" fill-rule="evenodd"/>
<path d="M976.1,237.6 976.3,240.3 976.8,242.9 977.5,245.0 978.4,246.8 979.6,248.4 981.0,249.6 982.5,250.0 984.3,249.6 986.4,248.4 988.4,246.8 990.0,245.0 991.0,242.9 991.6,240.5 993.7,228.4 994.0,225.1 993.8,222.5 992.7,220.7 991.2,219.5 989.3,218.8 987.5,218.8 985.6,219.5 983.6,221.0 981.6,222.9 980.0,225.0 978.7,227.2 977.6,229.8 976.7,232.4 976.2,235.0Z" fill="#bf59c2" fill-rule="evenodd"/>
<path d="M1052.5,222.5 1054.4,221.1 1056.3,220.2 1058.2,219.7 1060.0,220.0 1061.8,220.9 1063.7,222.5 1065.2,224.7 1066.2,227.5 1066.5,231.2 1065.7,240.6 1064.3,248.9 1062.4,256.3 1059.9,263.8 1055.0,275.0 1049.4,286.4 1043.8,296.7 1040.0,302.5 1035.7,308.0 1033.8,309.8 1032.5,310.0 1032.2,307.9 1033.8,295.0 1035.8,264.2 1037.0,256.0 1040.0,245.0 1043.5,235.4 1045.0,232.5 1048.6,226.9 1050.6,224.4Z" fill="#6b4a6e" fill-rule="evenodd"/>
<path d="M1043.9,280.3 1048.4,277.3 1050.4,275.3 1052.1,273.0 1054.7,268.5 1057.4,263.0 1061.6,251.5 1062.6,247.0 1062.8,245.0 1063.2,243.5 1063.7,236.5 1063.6,231.5 1062.9,228.5 1062.1,227.0 1060.4,225.0 1058.9,224.1 1056.9,224.0 1054.4,224.8 1050.9,227.5 1049.7,229.0 1047.6,232.0 1045.2,236.5 1042.9,243.0 1041.0,249.5 1040.2,253.0 1039.1,260.5 1038.9,265.0 1039.4,271.0 1040.3,275.0 1042.4,279.9 1042.9,280.6Z" fill="#9a5e9e" fill-rule="evenodd"/>
<path d="M1047.9,273.8 1049.4,272.6 1050.9,270.7 1053.3,267.0 1055.7,262.5 1059.7,252.5 1061.2,246.5 1061.3,244.5 1061.7,243.0 1062.0,236.0 1062.0,234.0 1061.6,231.5 1060.9,229.8 1059.9,228.4 1058.9,227.2 1057.9,226.7 1055.4,226.7 1053.4,227.6 1050.9,229.7 1047.9,234.0 1046.4,237.0 1044.3,243.0 1042.0,252.5 1041.8,255.5 1041.3,257.5 1041.0,264.5 1041.9,269.5 1042.9,272.5 1044.4,274.2 1045.9,274.4Z" fill="#cc77d0" fill-rule="evenodd"/>
<path d="M1047.4,271.3 1049.1,270.0 1050.9,267.5 1053.1,263.5 1053.9,262.4 1055.9,257.8 1056.6,255.5 1058.4,251.7 1059.4,248.6 1059.6,247.0 1059.9,246.1 1060.1,243.5 1060.5,242.5 1060.5,240.5 1060.2,239.5 1060.5,238.5 1060.4,234.1 1060.1,233.5 1060.0,232.0 1059.4,231.0 1057.6,229.0 1055.9,228.5 1054.9,228.5 1052.0,230.5 1048.9,234.8 1047.4,237.9 1045.4,243.9 1045.3,245.0 1044.4,247.8 1044.3,249.5 1043.9,250.2 1043.8,252.0 1043.4,252.7 1043.3,256.0 1042.9,257.5 1042.8,261.0 1042.8,264.0 1043.3,265.5 1043.4,267.0 1044.9,270.7 1046.4,271.6Z" fill="#ff88ff" fill-rule="evenodd"/>
<path d="M1047.7,244.6 1047.3,250.4 1047.5,252.7 1048.0,254.8 1048.9,256.7 1050.1,258.2 1051.7,258.8 1052.4,258.7 1054.1,257.7 1055.6,256.2 1057.0,254.2 1058.2,251.7 1059.1,248.9 1060.1,242.6 1060.0,239.8 1059.3,237.5 1058.0,235.4 1056.4,234.1 1054.6,233.7 1053.8,233.9 1052.3,235.0 1050.7,237.0 1049.3,239.7 1048.3,242.1Z" fill="#dd6fdd" fill-rule="evenodd"/>
<path d="M1048.9,244.9 1048.6,247.7 1048.8,252.5 1049.2,254.4 1050.0,256.0 1051.0,257.2 1052.0,257.5 1053.2,256.8 1054.6,255.4 1055.9,253.4 1057.0,251.2 1058.5,245.5 1058.8,242.5 1058.8,240.0 1058.1,238.0 1057.0,236.3 1055.8,235.2 1054.5,235.0 1053.2,235.9 1051.8,237.8 1050.5,240.2 1049.5,242.5Z" fill="#bf59c2" fill-rule="evenodd"/>
<path d="M1100.0,277.5 1102.3,275.5 1104.6,273.9 1106.8,272.9 1108.8,272.5 1110.5,273.2 1113.4,276.4 1115.0,277.5 1116.8,277.7 1120.8,277.1 1122.5,277.5 1124.1,278.7 1125.5,280.3 1126.7,282.4 1127.5,285.0 1127.7,288.2 1127.6,292.0 1127.1,296.1 1126.2,300.0 1125.1,303.9 1123.5,308.0 1120.0,315.0 1118.3,317.5 1116.5,319.4 1112.5,322.5 1110.1,323.8 1104.7,325.8 1102.5,327.5 1101.0,330.1 1097.5,340.0 1094.1,346.4 1092.1,349.6 1090.0,352.5 1085.2,358.4 1082.6,360.9 1080.0,362.5 1077.5,362.8 1075.0,362.0 1070.0,360.0 1060.0,357.5 1052.0,355.8 1050.0,355.0 1048.7,354.0 1047.8,353.0 1047.4,351.7 1047.5,350.0 1048.2,347.9 1057.9,330.7 1062.3,324.4 1090.0,290.0 1097.6,280.1Z" fill="#6b4a6e" fill-rule="evenodd"/>
<path d="M1078.7,358.1 1081.7,356.2 1084.7,353.2 1087.2,350.5 1090.3,346.2 1095.5,337.2 1099.2,328.4 1100.5,326.2 1102.1,324.2 1104.9,322.2 1109.2,320.4 1113.2,318.1 1116.1,315.2 1118.5,312.2 1120.0,309.8 1122.1,305.2 1123.9,299.2 1124.5,296.2 1124.9,288.8 1124.2,285.8 1123.7,284.6 1122.2,282.4 1120.7,281.3 1114.2,279.5 1110.7,277.6 1108.2,276.6 1106.2,277.1 1103.2,279.0 1100.2,282.0 1094.3,288.8 1090.2,294.7 1079.3,308.2 1066.7,324.5 1062.2,330.8 1058.4,337.2 1056.0,341.8 1054.5,345.8 1053.5,349.8 1054.1,350.8 1055.7,351.9 1058.2,353.1 1062.7,354.7 1067.7,356.1 1077.7,358.2Z" fill="#9a5e9e" fill-rule="evenodd"/>
<path d="M1077.7,355.2 1079.7,354.3 1082.3,352.2 1085.6,348.8 1088.3,345.2 1093.7,336.6 1098.8,325.8 1101.7,321.9 1104.2,320.2 1108.2,318.5 1112.2,316.3 1117.0,311.2 1118.6,308.8 1120.5,304.8 1121.5,301.8 1122.7,296.2 1122.8,288.2 1122.0,286.2 1120.7,284.6 1119.7,283.8 1111.2,279.8 1108.2,279.2 1107.1,279.2 1104.2,281.0 1095.5,290.2 1091.7,296.1 1079.1,311.8 1067.2,327.8 1062.8,334.2 1058.6,342.2 1057.8,344.2 1057.3,348.2 1057.7,349.2 1058.7,350.2 1060.3,351.2 1063.2,352.5 1068.2,354.1 1071.2,354.7Z" fill="#cc77d0" fill-rule="evenodd"/>
<path d="M1076.7,353.0 1079.2,351.9 1081.2,350.4 1083.8,347.8 1084.8,346.2 1086.7,344.3 1092.2,335.8 1093.8,332.2 1094.6,331.2 1094.8,330.2 1097.8,324.2 1100.3,320.8 1103.2,318.5 1106.2,317.0 1107.2,316.8 1111.2,314.8 1115.7,310.2 1117.2,308.1 1119.2,304.1 1120.7,299.1 1120.8,297.2 1121.2,296.2 1121.3,289.2 1120.7,287.7 1119.2,286.1 1114.0,282.8 1110.5,281.2 1107.7,281.2 1105.2,282.6 1097.1,290.8 1095.7,292.8 1093.5,296.8 1091.7,298.7 1091.1,299.8 1089.7,301.2 1089.1,302.2 1087.7,303.7 1087.2,304.6 1085.7,306.2 1085.2,307.1 1083.7,308.7 1080.7,312.7 1079.4,314.8 1076.7,318.2 1072.9,323.8 1068.7,329.1 1064.6,335.2 1060.6,343.2 1060.1,344.8 1059.9,347.8 1060.2,348.4 1061.2,349.3 1064.2,350.8 1068.7,352.3 1070.7,352.5 1071.7,352.9Z" fill="#ff88ff" fill-rule="evenodd"/>
<path d="M1096.0,293.0 1085.1,314.4 1079.8,323.2 1078.8,325.8 1078.6,328.5 1079.3,330.9 1080.5,332.7 1082.1,333.7 1082.7,333.8 1084.5,333.3 1086.3,332.0 1088.1,330.2 1089.8,328.2 1091.3,326.0 1094.4,320.6 1096.0,318.3 1097.9,316.5 1104.6,311.0 1108.9,306.8 1110.9,304.4 1112.5,301.7 1113.5,298.7 1114.0,295.5 1114.1,292.1 1113.6,289.3 1112.5,287.5 1110.5,285.9 1108.4,285.1 1106.4,285.0 1103.8,285.6 1101.8,286.7 1099.6,288.5 1097.7,290.4Z" fill="#dd6fdd" fill-rule="evenodd"/>
<path d="M1097.1,293.6 1086.2,315.0 1080.9,323.8 1080.0,326.2 1079.9,328.4 1080.5,330.4 1081.4,331.8 1082.5,332.5 1083.8,332.2 1085.4,331.0 1088.8,327.5 1090.3,325.3 1093.3,319.9 1095.0,317.5 1097.0,315.5 1103.8,310.0 1108.0,305.9 1109.8,303.6 1111.2,301.2 1112.2,298.4 1112.7,295.3 1112.9,292.3 1112.5,290.0 1111.5,288.3 1109.9,287.1 1108.1,286.4 1106.2,286.2 1104.4,286.7 1102.5,287.8 1100.6,289.4 1098.8,291.2Z" fill="#bf59c2" fill-rule="evenodd"/>
<path d="M1103.6,289.2 1100.8,291.8 1098.1,296.2 1095.4,302.3 1094.5,305.0 1094.1,307.4 1094.0,309.7 1094.3,311.5 1095.0,312.5 1096.1,312.4 1097.7,311.6 1103.0,307.2 1106.6,303.3 1108.0,301.2 1109.0,299.0 1109.7,296.6 1110.1,294.4 1110.0,292.5 1109.3,291.0 1108.0,289.8 1106.4,289.0 1105.0,288.8Z" fill="#8e2a90" fill-rule="evenodd"/>
<path d="M1101.0,295.4 1101.5,299.3 1102.0,300.5 1102.9,300.7 1104.1,300.4 1106.2,298.8 1107.6,296.3 1108.0,293.8 1107.6,292.7 1106.8,291.6 1105.9,290.8 1105.0,290.5 1104.0,290.8 1102.9,291.5 1101.9,292.5 1101.2,293.8Z" fill="#5a005a" fill-rule="evenodd"/>
<path d="M868.8,350.0 868.9,343.7 869.2,340.4 870.0,337.5 871.3,334.9 873.0,332.6 875.1,330.5 877.5,328.8 880.3,327.3 883.6,326.0 886.9,325.2 890.0,325.0 892.7,325.6 895.3,327.0 900.0,330.0 904.5,332.0 906.3,333.2 907.5,335.0 907.8,337.6 906.2,347.5 905.9,357.0 905.0,358.8 903.1,358.9 900.4,357.9 895.0,355.0 893.0,353.5 889.5,350.4 887.5,350.0 885.1,351.1 880.0,355.7 877.5,357.5 872.5,359.8 870.3,360.4 868.8,360.0 868.1,358.4 868.1,355.9Z" fill="#6b4a6e" fill-rule="evenodd"/>
<path d="M872.4,356.5 874.9,355.9 877.9,354.3 880.9,352.3 882.9,350.8 886.6,347.2 887.9,344.8 888.2,342.8 888.7,341.8 888.6,340.8 889.6,338.2 889.4,337.8 888.6,336.8 885.4,335.4 881.9,334.5 879.9,334.6 876.4,336.3 873.9,338.3 872.2,341.2 871.3,343.8 870.7,346.2 870.7,348.2 870.3,349.2 870.3,350.8 870.3,353.8 871.2,356.2Z" fill="#9a5e9e" fill-rule="evenodd"/>
<path d="M877.4,350.5 879.0,349.8 881.4,347.4 882.1,345.8 882.3,341.8 881.9,340.7 881.4,340.2 880.4,339.8 878.9,339.9 876.1,341.2 874.4,343.6 873.3,345.8 873.3,347.2 873.9,348.4 874.6,349.2 876.4,350.4Z" fill="#cc77d0" fill-rule="evenodd"/>
<path d="M951.2,315.0 954.5,312.0 956.1,311.2 957.5,311.2 958.8,312.1 960.0,313.8 960.9,316.0 961.2,318.8 960.9,322.1 959.9,326.1 954.9,344.9 952.5,355.0 950.7,368.2 948.9,377.1 946.3,386.2 943.1,395.3 942.0,397.5 940.0,400.0 936.9,403.0 928.8,409.2 918.1,416.9 914.9,418.8 912.0,420.0 909.5,420.5 907.2,420.5 905.3,419.7 904.0,418.0 903.4,414.7 903.4,410.0 904.1,400.8 904.4,401.1 905.0,400.0 910.0,385.0 915.4,371.6 917.5,367.5 919.8,364.1 927.5,355.0 935.2,343.8 939.6,336.1 943.3,328.4 946.7,322.0 949.7,316.9Z" fill="#6b4a6e" fill-rule="evenodd"/>
<path d="M915.2,413.9 919.7,412.3 924.2,409.5 926.2,408.0 933.2,401.8 935.9,400.0 938.7,397.6 940.8,394.5 941.7,392.5 944.3,383.5 944.5,382.0 946.4,375.0 946.6,373.0 947.9,367.5 949.4,358.5 950.0,352.5 950.5,351.0 950.5,349.0 951.0,347.5 951.1,345.0 951.5,343.5 951.6,340.5 951.2,337.4 949.7,334.0 947.9,332.5 946.2,332.6 944.9,333.5 943.9,335.0 941.7,339.5 938.2,345.0 935.2,348.8 930.8,355.0 928.0,358.5 921.9,367.5 917.4,375.0 912.6,385.5 910.1,392.5 908.0,400.5 907.8,402.5 907.3,404.0 907.3,410.5 907.8,412.0 908.2,412.5 909.2,412.9 910.2,414.1 912.7,414.3Z" fill="#9a5e9e" fill-rule="evenodd"/>
<path d="M915.2,411.2 918.7,410.6 923.2,408.1 925.3,406.5 929.6,402.5 933.7,397.5 936.4,393.5 940.1,385.5 942.2,380.0 944.9,371.0 946.3,365.5 947.7,357.5 948.1,349.5 947.2,346.0 946.2,344.2 945.7,343.8 944.7,343.7 943.7,343.9 942.7,344.4 942.0,345.0 936.8,355.0 931.9,361.5 928.5,365.5 926.3,368.5 924.5,371.5 921.7,377.0 916.7,388.0 914.4,394.0 913.1,398.5 912.3,403.5 912.1,408.0 912.4,409.5 913.7,410.7Z" fill="#cc77d0" fill-rule="evenodd"/>
<path d="M917.7,409.1 922.1,407.0 923.7,405.9 928.2,401.5 931.8,396.5 934.3,392.5 938.2,384.5 939.5,381.0 940.2,379.5 943.2,370.5 943.4,369.0 944.7,365.0 944.9,363.0 945.7,360.4 945.8,358.0 946.2,357.0 946.2,350.0 945.5,348.5 945.3,347.5 944.2,346.4 943.6,346.5 943.1,347.5 942.1,349.5 940.8,353.0 939.2,356.0 937.9,358.0 936.2,359.8 933.9,363.0 932.2,364.8 930.7,366.8 927.0,372.5 922.0,382.5 921.7,383.5 917.5,392.5 916.5,395.0 915.4,399.5 915.4,402.0 914.9,403.5 914.9,407.5 915.7,409.0Z" fill="#ff88ff" fill-rule="evenodd"/>
<path d="M631.2,225.0 632.0,223.9 633.1,223.1 634.6,222.7 636.2,222.5 638.2,223.0 642.8,225.0 645.0,225.0 646.9,223.9 652.5,217.5 657.3,212.5 662.5,207.5 665.1,205.4 677.6,196.4 678.8,196.2 679.6,197.0 680.1,198.5 680.2,200.4 680.0,202.5 679.2,204.7 676.6,209.9 673.3,215.1 669.4,220.2 665.6,224.6 660.0,230.0 653.9,234.4 652.5,236.2 651.8,238.8 651.6,244.8 651.2,247.5 649.8,251.9 648.8,253.7 647.5,255.0 645.6,255.9 643.2,256.5 640.8,256.6 638.8,256.2 637.1,255.3 635.6,253.8 634.5,252.0 633.8,250.0 633.7,247.7 634.8,242.4 635.0,240.0 634.6,237.9 632.5,232.5 631.4,228.4 631.1,226.5Z" fill="#6b4a6e" fill-rule="evenodd"/>
<path d="M651.8,234.1 656.3,231.3 659.4,228.5 660.5,227.0 665.2,222.5 671.5,215.0 674.6,210.5 677.3,205.0 677.9,203.0 678.0,201.5 677.8,200.9 677.3,200.3 676.3,200.3 674.8,201.0 671.6,203.5 666.8,207.9 665.2,209.0 660.8,213.2 659.4,215.0 656.4,218.0 650.3,225.5 647.2,230.5 647.1,232.0 648.0,233.0 649.3,233.8Z" fill="#9a5e9e" fill-rule="evenodd"/>
<path d="M653.3,228.1 655.8,227.5 658.8,226.0 660.3,224.9 664.2,221.5 664.8,220.5 668.3,216.9 673.3,210.1 674.8,207.1 675.0,206.0 675.4,205.0 675.3,203.7 674.8,203.5 673.8,204.0 667.8,209.8 666.3,210.9 662.7,214.5 661.6,216.0 658.3,219.4 657.6,220.5 655.8,222.3 654.3,224.3 652.7,227.0 652.7,227.5Z" fill="#cc77d0" fill-rule="evenodd"/>
<path d="M690.0,262.5 690.3,260.5 691.2,258.8 692.4,257.3 693.8,256.2 695.4,255.4 697.4,254.9 699.5,254.8 701.2,255.0 702.8,255.8 704.3,257.0 705.5,258.4 706.2,260.0 706.5,261.8 706.2,263.8 705.7,265.7 705.0,267.5 704.0,269.0 702.8,270.4 700.0,272.5 696.8,274.1 695.2,274.4 693.8,273.8 692.5,271.7 691.2,268.6 690.4,265.3Z" fill="#6b4a6e" fill-rule="evenodd"/>
<path d="M656.2,282.5 657.0,280.2 658.5,277.5 660.4,274.7 662.5,272.5 664.8,270.8 667.4,269.4 670.1,268.5 672.5,268.0 674.7,268.2 676.8,268.9 678.6,270.0 680.0,271.2 680.9,272.8 681.4,274.7 681.5,276.8 681.2,278.8 680.5,280.7 679.4,282.8 677.9,284.7 676.2,286.2 674.3,287.3 672.0,288.0 667.5,288.8 663.4,288.6 661.6,288.2 658.6,286.6 657.3,285.5 656.4,284.2Z" fill="#6b4a6e" fill-rule="evenodd"/>
<path d="M668.5,285.2 671.5,284.5 674.0,283.6 675.0,282.8 676.3,281.2 677.9,277.8 678.0,275.2 677.5,273.8 676.0,272.4 674.5,271.8 673.0,271.6 671.0,271.8 668.0,272.9 666.5,273.8 664.0,275.8 661.2,279.8 660.5,281.2 660.3,282.8 660.9,283.8 661.5,284.2 663.5,285.2Z" fill="#9a5e9e" fill-rule="evenodd"/>
<path d="M668.0,282.9 672.0,281.9 673.2,281.2 674.0,280.4 675.6,277.2 675.7,275.8 675.2,274.8 674.0,274.1 672.0,274.0 670.0,274.6 668.0,275.6 665.5,277.6 662.9,281.8 663.0,282.3 664.5,282.9Z" fill="#cc77d0" fill-rule="evenodd"/>
<path d="M736.2,205.0 737.3,202.9 738.9,200.7 740.7,198.8 742.5,197.5 744.4,197.0 746.4,197.1 748.4,197.7 750.0,198.8 751.3,200.3 752.4,202.4 753.3,204.9 753.8,207.5 753.9,210.5 753.7,214.0 753.2,217.3 752.5,220.0 751.6,222.0 750.4,223.6 749.0,224.6 747.5,225.0 745.7,224.5 743.7,223.3 740.0,220.0 738.7,218.3 736.8,214.4 735.8,210.6 735.6,208.8 735.7,206.9Z" fill="#6b4a6e" fill-rule="evenodd"/>
<path d="M747.4,218.8 747.8,217.8 748.4,214.8 748.4,206.4 747.9,204.8 747.0,203.3 745.9,202.3 745.0,202.3 743.4,203.1 741.9,205.3 740.9,207.3 740.9,210.1 741.9,213.3 744.2,217.3 746.4,218.9 746.9,219.1Z" fill="#9a5e9e" fill-rule="evenodd"/>
<path d="M763.8,222.5 764.7,217.2 765.3,215.3 766.2,213.8 767.6,212.4 769.2,211.4 770.9,210.9 772.5,211.2 773.9,212.6 775.2,214.7 777.5,220.0 779.1,225.9 779.6,229.1 780.3,236.1 780.3,243.9 779.4,251.1 778.5,254.7 777.5,257.8 776.2,260.0 774.8,261.1 773.2,261.2 771.5,260.8 770.0,260.0 768.6,258.8 767.3,257.0 766.0,254.9 764.1,249.8 762.8,243.6 762.5,240.0 762.8,231.0Z" fill="#6b4a6e" fill-rule="evenodd"/>
<path d="M773.2,252.6 775.6,249.7 776.8,247.5 778.1,242.7 778.5,238.7 778.2,231.7 777.2,225.7 775.7,221.7 773.8,218.3 772.2,216.8 770.8,215.9 769.2,216.6 768.1,218.2 766.9,220.7 766.0,223.7 765.5,228.2 765.4,231.7 765.2,233.7 765.4,239.7 766.2,244.7 767.9,248.7 768.9,250.2 771.2,252.6 772.2,253.1Z" fill="#9a5e9e" fill-rule="evenodd"/>
<path d="M772.8,248.2 773.8,247.6 774.9,246.2 776.6,241.7 777.1,238.7 776.9,231.7 775.9,226.2 774.5,222.7 772.8,220.0 771.8,219.3 770.8,219.2 770.0,219.7 768.8,221.2 767.7,224.2 767.2,228.2 767.1,235.7 767.9,241.7 768.4,244.2 769.0,245.7 769.8,246.8 771.2,248.1 771.8,248.3Z" fill="#cc77d0" fill-rule="evenodd"/>
<path d="M772.8,245.7 773.8,244.7 774.8,242.6 775.8,238.8 775.7,231.2 775.3,230.2 775.3,228.7 774.8,227.7 774.8,226.7 774.2,225.5 773.1,223.2 771.8,221.4 771.2,221.2 770.2,222.2 769.2,224.3 769.1,225.7 768.8,226.4 768.7,235.2 769.0,236.2 769.1,238.7 770.2,243.8 771.1,245.2 772.1,245.7Z" fill="#ff88ff" fill-rule="evenodd"/>
<path d="M818.8,185.0 819.6,182.7 820.8,180.6 822.1,178.9 823.8,177.5 825.7,176.3 828.0,175.5 830.3,175.0 832.5,175.0 834.6,175.6 836.6,176.7 838.4,178.2 840.0,180.0 841.4,182.1 842.6,184.5 843.4,187.2 843.8,190.0 843.4,193.1 842.6,196.4 841.4,199.7 840.0,202.5 838.4,204.8 836.5,206.7 828.6,213.4 826.7,214.7 825.0,215.0 823.5,214.1 822.2,212.2 820.0,207.5 818.4,202.8 817.5,197.5 817.5,194.4 818.1,187.8Z" fill="#6b4a6e" fill-rule="evenodd"/>
<path d="M828.2,207.2 829.9,206.2 833.2,203.5 834.9,201.7 837.2,197.7 838.6,193.2 838.6,187.7 838.4,186.7 837.2,184.2 835.4,181.7 833.2,180.2 831.7,179.8 829.7,179.9 827.7,180.5 826.5,181.2 825.2,182.5 824.1,184.2 823.1,186.7 822.4,190.7 822.2,192.7 822.2,197.7 822.9,201.7 823.5,203.7 824.4,205.7 825.7,207.2 826.7,207.7Z" fill="#9a5e9e" fill-rule="evenodd"/>
<path d="M827.7,204.0 829.7,202.1 831.2,201.1 832.5,199.7 834.5,196.2 835.5,192.7 835.5,187.7 833.4,184.2 831.7,183.0 831.2,182.9 828.7,183.5 827.4,184.7 826.0,188.2 825.8,190.2 825.4,191.7 825.4,198.2 825.8,199.7 826.0,201.2 827.0,203.7Z" fill="#cc77d0" fill-rule="evenodd"/>
<path d="M335.0,363.3 335.6,361.4 337.4,358.5 339.3,356.6 340.4,355.9 341.4,355.6 342.5,355.8 343.7,356.7 344.9,358.1 346.0,359.9 346.7,361.7 346.9,363.6 346.9,365.8 346.5,368.0 345.8,370.0 344.7,371.8 343.2,373.5 341.5,374.9 340.0,375.8 338.6,376.3 337.1,376.5 335.9,376.1 335.0,375.0 334.6,372.7 334.5,369.5Z" fill="#6b4a6e" fill-rule="evenodd"/>
<path d="M1074.7,421.2 1075.9,415.6 1076.6,413.5 1077.5,411.9 1078.6,410.7 1079.8,409.9 1081.1,409.6 1082.2,410.0 1083.1,411.1 1083.9,412.8 1084.6,415.0 1085.0,417.5 1085.1,420.4 1084.6,427.2 1083.3,434.1 1081.4,441.1 1080.3,443.8 1079.2,445.7 1077.9,447.0 1076.7,447.7 1075.6,447.5 1074.7,446.3 1073.8,444.1 1073.1,441.3 1072.8,438.1 1072.9,434.3 1073.4,429.7Z" fill="#6b4a6e" fill-rule="evenodd"/>
<path d="M1153.8,458.8 1154.2,457.3 1155.0,455.9 1156.2,454.7 1157.5,453.8 1161.2,452.5 1163.2,452.3 1165.0,452.5 1166.6,453.3 1168.0,454.5 1169.2,456.0 1170.0,457.5 1170.2,459.0 1170.1,460.7 1169.6,462.3 1168.8,463.8 1167.5,465.0 1165.9,466.2 1164.2,467.1 1162.5,467.5 1160.8,467.4 1159.1,466.9 1157.5,466.0 1156.2,465.0 1155.2,463.7 1154.4,462.0 1153.8,460.3Z" fill="#6b4a6e" fill-rule="evenodd"/>
<path d="M802.1,554.2 811.2,562.9 817.2,569.6 819.1,572.0 820.6,574.4 821.4,576.8 822.0,581.5 823.2,585.8 824.9,589.6 826.2,591.2 828.2,592.8 830.6,594.3 838.0,597.9 845.0,600.6 852.0,603.7 854.4,604.4 856.8,604.7 861.5,604.7 863.8,604.4 865.7,603.8 869.3,601.9 873.5,599.0 878.4,595.1 882.6,591.2 888.1,585.6 901.4,575.1 909.3,569.6 911.3,568.6 912.5,568.8 912.7,570.5 912.3,573.3 909.8,583.1 907.7,589.8 906.2,596.4 905.2,603.0 905.0,609.5 905.9,619.4 906.3,629.4 906.9,632.5 909.2,638.8 910.7,641.6 912.5,643.8 914.6,645.1 917.0,645.7 919.4,645.9 921.9,645.6 924.2,644.8 926.6,643.3 938.3,634.8 943.0,632.2 945.3,631.2 947.6,630.6 950.0,630.6 952.4,631.9 957.3,636.2 960.0,637.5 962.9,637.5 972.5,635.0 981.9,633.3 988.1,631.5 994.4,629.0 1003.8,624.1 1010.0,620.0 1013.1,617.7 1047.5,590.0 1055.6,584.7 1057.5,582.5 1058.6,579.7 1059.4,573.1 1060.0,570.0 1062.2,563.8 1063.5,561.2 1065.0,560.0 1066.7,560.7 1072.5,567.5 1076.4,570.9 1078.3,572.2 1080.0,572.5 1081.4,571.7 1082.5,570.0 1090.6,553.6 1096.1,543.9 1097.9,541.5 1100.0,540.0 1102.3,539.7 1104.8,540.5 1110.0,542.5 1117.9,544.9 1120.0,545.0 1121.7,544.6 1123.0,543.8 1124.0,542.3 1125.0,540.0 1125.7,536.2 1126.6,526.3 1127.5,522.5 1129.1,520.6 1133.2,519.2 1135.0,517.5 1136.4,514.5 1137.7,510.8 1144.0,489.4 1145.0,485.0 1145.6,480.3 1146.2,470.9 1146.2,467.5 1146.0,465.9 1144.9,465.3 1145.0,464.4 1145.9,462.5 1150.6,455.0 1154.7,447.8 1156.2,445.6 1159.9,441.5 1163.8,438.1 1167.4,435.8 1169.2,435.0 1173.5,433.9 1187.7,432.7 1190.0,432.5 1197.2,433.0 1199.4,432.5 1201.5,431.2 1203.5,429.5 1205.4,427.3 1206.9,425.0 1207.9,422.5 1208.6,419.6 1211.4,405.0 1211.6,402.5 1211.1,400.4 1209.2,397.1 1208.8,395.0 1209.0,392.5 1210.3,386.7 1210.6,383.8 1210.5,380.8 1210.0,377.7 1208.8,372.5 1207.8,371.1 1205.5,369.8 1205.0,368.8 1205.4,367.2 1207.4,363.3 1207.8,361.2 1207.5,359.1 1205.0,351.9 1202.3,342.1 1200.0,335.3 1197.3,328.5 1195.6,325.6 1191.6,320.6 1189.4,318.8 1187.2,318.1 1185.1,318.9 1182.9,320.8 1176.8,327.8 1173.0,332.5 1171.2,335.0 1168.3,340.4 1165.6,346.2 1154.4,372.5 1148.8,383.8 1143.1,396.9 1137.5,408.1 1129.3,427.3 1127.9,430.1 1126.2,432.5 1124.1,434.4 1121.6,435.9 1116.9,438.1 1114.9,438.5 1111.5,438.7 1110.0,440.0 1108.6,442.8 1107.2,446.7 1105.0,455.0 1104.3,458.8 1103.4,466.2 1102.5,470.0 1101.0,473.8 1095.0,485.0 1089.4,496.8 1087.5,500.0 1085.6,502.3 1081.9,505.4 1080.0,507.5 1076.1,513.4 1072.5,520.0 1068.9,529.6 1067.5,532.5 1065.8,535.3 1063.9,538.0 1060.0,542.5 1056.4,545.8 1054.6,546.9 1052.5,547.5 1050.2,547.2 1045.1,545.3 1042.5,545.0 1039.9,545.7 1037.2,547.0 1032.5,550.0 1031.0,551.5 1028.8,554.6 1027.5,555.0 1025.5,554.1 1023.1,552.3 1021.1,550.0 1020.0,547.5 1020.3,544.8 1021.6,541.7 1030.4,523.8 1032.5,520.0 1040.1,508.8 1044.6,501.2 1050.0,490.0 1053.9,480.7 1057.4,469.6 1058.4,465.7 1058.8,462.5 1058.4,460.1 1057.4,458.2 1056.2,456.9 1055.0,456.2 1053.8,456.4 1052.6,457.3 1050.0,460.0 1045.0,467.5 1037.6,476.9 1035.0,480.0 1027.3,487.4 1025.0,490.0 1020.9,495.9 1017.5,502.5 1016.0,506.0 1013.5,513.5 1011.6,521.8 1010.8,526.5 1010.0,535.0 1010.3,538.5 1011.8,544.2 1011.9,546.2 1011.0,547.3 1008.0,547.6 1006.2,548.1 991.2,559.4 972.5,570.6 965.2,575.4 963.1,576.2 961.4,576.5 959.9,576.2 958.6,575.5 957.5,574.4 956.6,572.6 955.9,570.4 953.2,558.7 951.3,548.5 949.7,535.8 948.7,519.4 948.1,518.1 947.0,518.4 945.6,519.9 941.1,525.5 931.2,538.8 927.0,545.9 922.7,552.6 921.3,554.5 920.0,555.6 918.9,556.0 917.8,555.7 916.9,555.0 916.2,553.8 915.9,551.8 915.9,546.6 915.3,544.4 914.1,542.7 912.6,541.4 910.7,540.4 908.8,539.7 906.6,539.4 904.2,539.5 899.4,540.6 894.7,543.0 887.7,547.9 883.0,551.7 878.2,556.2 873.3,561.5 871.2,563.1 869.4,563.6 867.8,563.4 866.5,562.5 865.6,561.2 865.3,559.5 865.5,557.3 866.6,551.9 869.1,542.0 870.3,535.6 870.8,532.5 870.9,529.7 870.3,527.5 869.0,525.9 867.1,524.9 864.7,524.2 858.6,523.4 854.8,523.3 846.9,523.8 839.3,525.2 831.9,527.5 825.1,530.9 815.7,537.2 809.9,542.1 807.5,544.4 803.8,548.9 802.5,551.0 801.9,552.8ZM1100.7,517.9 1102.7,514.0 1103.8,512.5 1106.0,510.5 1107.1,510.0 1108.1,510.0 1109.0,510.7 1110.6,513.4 1112.2,518.6 1112.5,522.5 1112.1,524.4 1110.0,530.0 1108.2,536.0 1107.5,537.5 1106.7,538.6 1105.7,539.5 1104.7,539.9 1103.8,540.0 1102.8,539.6 1100.8,537.6 1100.0,536.2 1099.1,532.8 1098.8,528.8 1099.1,524.4 1100.0,520.0Z" fill="#6b4a6e" fill-rule="evenodd"/>
<path d="M1079.1,563.4 1081.6,560.7 1084.3,556.9 1094.7,537.4 1094.9,533.4 1096.0,523.9 1097.2,516.9 1099.1,509.1 1101.1,503.4 1102.5,500.4 1103.6,500.4 1106.1,501.4 1110.1,503.9 1112.1,505.7 1115.0,509.9 1119.4,520.4 1120.1,521.2 1126.4,518.4 1131.6,516.5 1133.1,515.1 1134.4,513.4 1136.0,509.9 1140.4,496.9 1142.7,488.4 1143.7,483.4 1144.5,477.9 1144.6,472.9 1144.8,470.9 1144.8,468.4 1143.8,464.9 1144.1,461.9 1154.1,443.8 1158.1,437.9 1161.5,433.9 1169.6,426.4 1175.6,421.9 1176.1,421.8 1176.6,422.1 1183.1,426.9 1188.1,429.2 1191.1,430.0 1193.6,430.1 1196.6,429.6 1200.6,428.1 1202.3,426.9 1204.8,424.4 1206.6,421.4 1207.6,417.6 1207.8,414.9 1208.2,413.9 1208.3,410.4 1207.9,408.9 1207.9,406.4 1207.5,404.9 1206.7,402.4 1205.0,399.9 1205.0,399.4 1206.6,397.7 1207.8,395.9 1207.7,393.9 1209.3,387.9 1209.7,384.9 1209.6,381.4 1209.3,380.4 1209.1,377.9 1208.5,376.4 1206.6,374.2 1199.9,370.9 1199.4,370.4 1200.1,367.9 1202.8,362.4 1203.2,360.9 1203.3,359.4 1201.6,350.4 1197.4,335.9 1195.3,330.4 1193.4,326.9 1192.1,325.0 1190.1,322.7 1188.1,321.5 1187.1,321.3 1186.1,321.5 1183.6,323.3 1180.5,326.9 1176.4,330.4 1174.1,332.7 1171.8,335.9 1170.4,338.4 1169.1,341.4 1166.9,347.4 1166.2,350.4 1163.6,356.7 1156.1,374.4 1150.2,386.9 1145.6,397.9 1140.7,404.4 1138.3,408.4 1137.4,410.4 1135.9,414.9 1134.2,421.4 1133.9,423.9 1130.6,431.4 1129.2,433.9 1127.6,435.8 1126.6,436.4 1122.1,438.1 1120.1,438.5 1113.1,441.2 1111.8,442.4 1110.2,444.9 1107.3,451.9 1105.7,458.9 1104.9,465.9 1104.6,470.9 1102.0,488.4 1101.4,496.9 1101.1,497.8 1093.1,500.4 1090.6,501.6 1086.6,503.8 1083.1,507.0 1082.0,508.4 1078.7,513.4 1074.8,520.9 1069.6,534.5 1063.1,548.4 1061.9,551.9 1062.1,552.6 1067.1,555.5 1072.6,561.0 1074.6,562.5 1077.6,563.9 1078.1,564.0ZM920.6,632.6 926.1,630.9 929.1,629.6 944.1,620.1 948.1,618.2 949.1,618.4 951.6,620.0 961.6,628.7 963.1,629.2 967.1,629.4 971.1,629.2 979.1,628.3 984.1,626.8 987.1,625.6 993.1,622.5 995.6,621.0 1001.6,616.7 1007.6,611.7 1017.9,602.4 1031.6,588.5 1038.1,586.6 1043.6,584.4 1049.6,581.2 1052.1,579.4 1053.4,577.4 1054.8,573.9 1057.3,565.9 1058.4,560.9 1059.2,554.4 1059.0,553.9 1053.1,552.9 1045.1,550.7 1043.1,550.4 1039.6,551.3 1036.1,553.1 1034.1,554.6 1031.1,557.7 1030.1,558.3 1029.6,558.3 1027.1,557.3 1021.6,553.2 1016.1,549.5 1015.6,549.3 1015.1,549.5 1011.1,551.9 1008.1,552.8 1005.6,554.4 1002.7,556.9 998.9,560.9 988.1,566.8 982.6,570.3 975.6,575.4 967.2,582.4 962.1,585.3 959.1,586.4 957.1,586.8 955.6,585.0 953.6,581.5 951.8,575.9 949.0,554.9 948.1,550.9 947.9,548.9 946.9,545.4 945.3,541.9 942.6,538.0 942.1,537.6 941.6,537.7 940.1,538.4 937.1,540.6 934.6,543.1 931.1,547.6 922.8,559.4 920.6,561.4 917.6,563.3 917.4,563.9 917.8,566.4 917.8,569.4 914.5,583.4 912.6,592.4 911.5,601.9 911.4,607.9 912.2,613.4 913.8,620.9 914.5,623.4 916.4,627.9 918.1,630.6 919.6,632.3ZM872.6,589.2 877.1,588.2 882.6,585.5 890.6,578.9 900.6,570.1 906.1,565.7 909.6,563.1 913.2,561.4 912.6,556.9 912.1,548.4 911.5,546.9 910.4,545.4 909.1,544.5 907.6,544.0 903.6,544.0 900.1,545.0 895.6,547.3 889.1,551.6 882.6,556.7 874.6,564.8 871.6,567.2 867.1,569.7 862.1,571.6 861.6,571.5 861.3,570.9 860.6,567.9 860.2,562.4 861.4,556.4 866.1,540.4 866.7,537.4 867.0,534.9 867.0,531.4 866.5,529.9 865.1,528.7 863.1,527.7 860.6,527.0 856.1,526.5 853.1,526.5 847.6,527.1 844.6,527.7 836.6,530.1 832.1,532.0 828.6,533.9 823.1,537.6 816.1,543.2 812.7,546.9 811.8,548.4 810.5,551.9 810.6,552.9 811.9,555.4 816.1,561.4 825.1,571.5 827.1,574.4 830.2,579.9 832.6,583.1 833.6,584.1 835.1,585.0 838.6,586.3 844.1,587.6 850.1,588.0 857.1,587.9 860.1,589.3 862.6,589.6 867.6,589.7ZM1019.1,533.3 1022.6,531.4 1024.8,529.4 1029.1,522.4 1037.1,507.9 1040.3,500.4 1042.1,493.4 1042.5,489.4 1042.4,486.4 1042.1,485.5 1041.6,485.4 1038.6,485.8 1033.6,486.9 1031.1,488.1 1028.6,490.0 1027.3,491.4 1023.6,496.1 1021.4,499.9 1019.8,503.4 1017.5,509.9 1016.1,514.9 1015.4,520.4 1015.3,523.4 1015.5,526.4 1016.1,530.5 1017.3,533.4 1017.6,533.7Z" fill="#9a5e9e" fill-rule="evenodd"/>
<path d="M1129.1,515.5 1130.6,514.8 1132.1,513.5 1133.1,512.4 1134.2,510.4 1138.0,500.9 1139.5,496.4 1141.6,488.4 1142.5,483.9 1143.6,476.9 1143.7,468.9 1143.2,467.4 1142.7,463.4 1143.0,460.9 1156.6,435.4 1162.2,427.9 1164.9,423.4 1168.2,417.4 1170.1,412.4 1178.0,401.9 1179.5,396.4 1181.5,387.4 1182.4,384.9 1187.6,378.1 1191.7,372.4 1197.6,365.8 1200.2,360.9 1200.5,358.9 1199.8,351.4 1195.6,336.4 1193.8,331.4 1192.0,327.9 1190.7,325.9 1189.3,324.4 1187.6,323.3 1186.6,323.3 1185.1,324.1 1180.6,328.9 1177.1,331.1 1175.1,332.9 1172.6,336.1 1170.9,339.4 1169.4,343.4 1169.1,344.9 1168.1,347.9 1167.8,350.4 1167.1,352.4 1157.6,374.9 1151.7,387.9 1146.8,399.4 1143.7,402.4 1141.6,404.7 1139.1,408.6 1138.0,410.9 1136.9,414.4 1136.5,418.4 1135.9,420.4 1135.8,424.4 1132.6,431.9 1130.7,435.4 1129.1,437.5 1128.1,438.4 1120.6,439.7 1117.1,441.0 1113.9,442.9 1111.6,445.5 1110.6,447.4 1108.3,452.4 1106.7,459.4 1106.0,468.9 1106.2,470.4 1106.1,472.9 1106.2,475.9 1106.8,483.4 1108.4,493.9 1112.1,498.9 1115.1,503.4 1117.8,507.9 1120.2,512.9 1121.5,514.9 1124.1,516.1ZM977.1,625.1 983.1,623.3 986.1,622.0 989.6,619.9 993.1,617.4 1002.1,609.9 1009.5,602.9 1016.1,595.9 1021.3,589.9 1029.6,579.4 1034.1,580.8 1038.1,580.9 1042.6,580.1 1047.6,577.7 1049.1,576.6 1051.9,572.9 1053.7,568.9 1054.8,565.4 1055.1,561.6 1054.1,557.9 1052.1,556.4 1048.6,554.8 1045.6,554.0 1043.1,553.9 1039.6,554.8 1036.1,556.6 1031.6,560.9 1029.6,563.2 1029.1,563.0 1025.9,558.4 1023.6,556.1 1021.1,554.4 1019.1,553.5 1016.1,552.9 1015.1,553.0 1013.6,553.8 1011.6,555.3 1009.6,555.7 1007.1,557.1 1004.7,559.4 1001.3,563.9 995.6,566.4 987.1,571.0 982.1,574.7 979.1,577.3 972.2,583.9 970.9,585.4 957.5,597.4 954.0,601.4 953.3,602.4 953.0,603.4 956.0,612.4 959.3,618.4 961.6,621.4 963.1,622.8 965.6,624.2 968.1,624.9 971.1,625.3ZM926.1,624.0 928.1,623.2 931.1,621.3 934.0,619.4 938.1,615.9 941.1,613.0 945.9,607.9 949.3,603.4 949.8,602.4 948.1,579.9 948.2,578.4 947.9,574.9 948.0,572.4 947.3,560.4 946.9,558.9 946.7,555.4 945.6,549.9 944.4,546.4 943.6,545.3 942.1,544.0 940.6,543.4 939.6,543.8 937.8,544.9 936.1,546.4 933.0,549.9 927.7,557.4 925.1,561.6 922.1,565.9 918.6,578.9 916.8,587.4 916.5,591.4 916.0,593.4 915.5,602.9 915.8,604.9 915.8,608.4 916.7,612.9 918.2,617.9 919.3,620.4 920.7,622.4 921.6,623.3 923.1,624.3 924.1,624.3ZM846.6,579.4 850.1,578.0 851.3,575.9 855.0,566.4 860.5,550.9 864.0,539.9 864.6,536.9 864.7,534.4 864.2,531.9 864.0,531.4 862.8,530.4 860.6,529.4 858.1,528.9 855.1,528.8 851.6,528.9 848.1,529.4 842.6,530.7 837.1,532.7 833.1,534.6 830.1,536.3 824.9,539.9 821.6,542.5 817.6,546.2 816.4,547.9 815.8,549.4 815.3,551.9 815.8,554.4 816.9,556.9 818.8,559.9 823.2,564.9 833.2,574.9 837.6,578.6 839.1,579.4 843.6,579.9ZM1079.4,558.4 1081.7,555.9 1083.1,553.7 1087.8,544.9 1091.3,536.9 1092.8,530.4 1094.5,521.4 1095.3,512.4 1095.2,508.9 1095.0,506.9 1094.7,506.4 1092.6,504.9 1091.1,504.2 1090.1,504.2 1088.1,504.6 1087.1,505.2 1083.6,508.6 1079.9,514.4 1077.8,518.4 1075.2,524.4 1070.3,537.9 1068.6,543.4 1067.6,549.4 1068.5,551.4 1071.6,556.2 1073.6,558.2 1075.1,559.0 1077.6,559.5ZM877.1,583.9 881.1,583.2 882.6,582.4 888.1,577.9 908.0,559.4 909.3,556.4 909.9,553.9 909.8,549.9 909.4,548.9 908.3,547.4 906.6,546.8 903.1,546.9 901.1,547.6 896.6,549.8 894.1,551.3 887.6,555.8 883.6,558.9 872.8,569.9 871.0,572.4 869.5,576.4 869.2,578.4 869.5,580.4 871.1,581.8 874.6,583.4ZM1196.1,426.5 1200.6,424.1 1202.6,422.0 1204.6,418.4 1205.2,415.9 1205.3,413.4 1205.7,412.4 1205.7,410.9 1205.3,409.9 1205.2,406.9 1203.6,403.5 1202.1,401.9 1200.6,401.0 1197.6,399.8 1191.1,399.5 1187.6,400.5 1185.6,401.3 1182.6,403.5 1181.3,406.4 1181.6,412.4 1182.9,416.9 1184.0,419.9 1186.7,424.4 1188.3,425.9 1190.1,427.0 1194.1,427.1ZM1023.1,528.4 1025.4,525.9 1027.6,522.4 1032.1,513.9 1034.7,508.4 1036.7,502.9 1037.6,499.4 1038.3,492.9 1038.1,491.9 1037.6,491.1 1035.6,490.1 1033.1,489.8 1031.6,490.3 1029.6,491.6 1026.6,494.9 1024.8,497.4 1022.8,500.9 1021.2,504.4 1019.2,510.4 1017.9,515.9 1017.7,518.9 1017.9,522.9 1018.3,524.9 1019.1,527.3 1019.6,527.9 1021.1,528.6 1022.1,528.7ZM1199.6,397.3 1202.1,396.6 1204.1,395.4 1206.1,393.3 1207.9,389.4 1208.4,387.4 1208.5,384.4 1207.6,380.3 1206.6,378.0 1205.6,376.9 1204.1,375.8 1201.6,374.7 1196.6,374.5 1193.6,375.5 1191.6,377.3 1191.3,377.9 1190.8,379.4 1190.6,381.9 1190.1,383.9 1190.2,385.4 1190.6,386.9 1190.7,389.9 1192.0,393.4 1193.7,395.4 1195.3,396.4 1197.6,397.4Z" fill="#cc77d0" fill-rule="evenodd"/>
<path d="M1128.6,513.9 1131.1,512.3 1132.0,511.4 1133.1,509.6 1135.1,505.4 1138.5,495.9 1141.0,485.9 1142.5,476.4 1142.6,469.4 1142.2,468.4 1142.0,464.9 1141.6,463.4 1141.7,460.4 1142.6,459.1 1150.6,443.4 1150.8,442.4 1152.7,438.9 1152.9,437.9 1154.2,435.4 1154.5,434.4 1156.3,431.9 1157.6,429.4 1158.3,428.4 1160.5,423.9 1162.7,416.4 1163.0,411.4 1165.1,405.5 1170.4,392.9 1173.6,381.9 1174.6,379.9 1177.6,376.9 1181.1,374.9 1184.1,372.8 1189.1,368.6 1193.6,365.6 1195.6,364.0 1197.3,361.4 1198.2,358.9 1198.1,351.4 1196.8,347.4 1196.6,345.9 1195.3,342.4 1194.1,336.9 1192.6,332.5 1190.6,328.5 1189.1,326.4 1188.1,325.4 1187.1,324.9 1186.6,325.0 1185.2,325.9 1183.6,327.9 1181.6,329.9 1178.0,331.9 1175.5,333.9 1173.5,336.4 1171.6,340.0 1170.3,343.9 1170.1,345.4 1169.1,348.4 1169.1,350.9 1168.5,352.9 1165.1,360.6 1165.0,361.4 1163.6,364.1 1163.5,364.9 1162.1,367.6 1162.0,368.4 1160.6,371.1 1160.5,371.9 1159.1,374.6 1159.0,375.4 1153.1,388.5 1152.9,389.4 1151.6,392.0 1151.4,392.9 1150.1,395.5 1149.9,396.4 1148.6,399.0 1148.4,399.9 1147.6,400.8 1144.6,403.1 1142.6,405.1 1140.0,408.9 1139.1,410.6 1137.8,414.9 1137.6,418.9 1137.1,420.4 1137.5,422.4 1137.4,425.4 1134.6,431.4 1134.4,432.4 1132.4,436.4 1129.6,440.1 1128.6,440.5 1127.6,440.3 1124.6,440.3 1123.6,440.7 1121.1,440.9 1117.6,442.1 1115.7,443.4 1112.8,446.4 1111.6,448.2 1109.2,453.4 1107.7,459.9 1107.6,463.4 1107.2,465.4 1107.2,468.4 1107.5,469.4 1107.6,472.4 1107.9,473.4 1108.5,477.4 1111.2,486.9 1111.9,488.4 1112.6,490.9 1116.3,498.9 1119.4,504.9 1120.1,505.9 1122.9,511.4 1124.1,513.1 1125.1,513.9 1127.6,514.0ZM976.6,622.2 981.6,620.6 983.6,619.7 987.6,617.2 990.6,614.9 994.3,611.4 995.7,610.4 1006.1,600.1 1007.1,598.7 1009.9,595.9 1017.0,586.9 1021.1,580.9 1026.2,572.4 1026.6,571.4 1027.1,568.9 1026.9,565.4 1025.1,560.0 1023.4,557.4 1021.3,555.9 1018.6,554.8 1016.6,554.9 1015.0,555.9 1012.6,557.9 1010.6,558.2 1008.6,559.2 1006.9,560.9 1003.6,566.3 996.1,569.2 991.1,571.7 986.3,574.9 983.6,577.0 980.7,579.9 979.7,581.4 975.1,585.8 974.1,587.3 971.5,589.9 967.9,594.4 963.6,600.4 962.5,602.4 961.8,604.4 961.9,610.4 963.5,615.9 965.4,618.9 967.6,620.8 969.6,621.7 971.6,622.2ZM925.8,618.9 930.6,615.7 934.0,612.4 934.6,611.4 936.1,609.9 938.7,605.9 941.1,600.4 942.8,592.4 943.3,588.4 944.1,584.7 944.2,582.4 944.5,581.4 944.6,578.9 945.0,577.4 945.0,573.9 945.4,572.4 945.3,560.9 944.8,559.4 944.8,555.9 943.8,551.9 943.7,550.4 942.6,547.7 942.1,547.2 941.1,546.8 939.6,547.2 938.1,548.2 935.1,551.1 929.5,558.9 925.1,567.3 922.9,572.9 921.5,577.4 920.3,583.4 920.0,584.4 919.8,586.9 919.3,588.4 919.3,592.4 918.8,593.9 918.8,597.4 918.7,602.4 919.2,603.9 919.2,607.4 919.6,608.9 919.8,610.4 921.2,614.9 923.1,618.1 924.1,618.9 925.1,619.0ZM844.1,573.3 845.6,572.3 846.5,571.4 852.0,563.9 857.1,553.6 857.5,552.4 858.7,549.9 862.2,539.4 862.4,537.4 862.8,536.4 862.8,534.4 862.2,532.9 861.2,531.9 860.1,531.3 857.6,530.7 852.1,530.7 850.6,531.2 848.6,531.3 844.6,532.3 841.6,533.5 839.1,534.3 834.1,536.7 831.6,538.2 826.4,541.9 824.6,543.6 823.1,544.6 819.8,547.9 818.9,549.4 818.8,553.4 819.4,555.4 820.9,558.4 822.6,560.6 826.1,564.2 827.6,565.2 829.6,567.2 832.2,569.4 835.6,571.8 838.6,573.4 839.6,573.9 842.1,574.1ZM1078.6,555.6 1080.1,554.1 1082.2,550.9 1085.7,543.9 1088.8,535.9 1091.7,526.4 1091.9,524.4 1092.1,523.9 1092.4,521.9 1092.7,520.9 1092.8,512.9 1091.7,507.9 1090.6,506.3 1090.0,505.9 1088.6,505.8 1088.1,506.1 1085.1,509.0 1081.1,515.1 1079.2,518.9 1079.0,519.9 1076.6,525.0 1072.1,538.4 1071.9,539.9 1070.9,543.9 1070.8,547.9 1071.9,551.9 1073.5,554.9 1075.1,556.5 1077.1,556.6ZM881.8,580.4 887.3,575.9 903.0,560.4 904.0,558.9 906.1,556.7 907.3,554.9 907.8,553.4 907.7,550.4 906.8,549.4 906.1,549.1 903.6,549.2 897.6,551.8 895.1,553.3 889.0,557.4 885.0,560.4 876.1,569.3 875.0,570.9 873.8,573.4 873.8,576.4 874.6,578.2 876.7,580.4 878.1,581.1 880.1,581.1ZM1038.1,576.8 1041.6,576.7 1043.1,576.2 1046.1,574.7 1048.0,573.4 1049.6,571.6 1051.7,567.9 1052.8,564.4 1052.8,562.4 1051.8,560.4 1051.1,559.5 1050.5,558.9 1047.6,557.2 1045.1,556.6 1044.1,556.6 1042.6,557.0 1040.6,557.2 1039.1,557.7 1036.6,559.2 1033.6,562.2 1032.4,564.4 1031.9,565.9 1031.7,567.4 1032.1,568.9 1032.2,570.4 1033.3,573.4 1034.3,574.9 1035.5,575.9ZM1022.6,526.6 1024.5,524.9 1026.6,521.6 1031.0,512.9 1033.6,506.4 1035.4,498.9 1035.4,494.4 1034.8,492.9 1034.1,492.3 1032.6,492.0 1030.6,492.9 1028.1,495.4 1026.2,497.9 1024.6,500.5 1022.6,505.0 1020.6,511.0 1020.0,513.4 1019.9,515.4 1019.5,516.4 1019.5,518.9 1019.9,520.4 1020.0,521.9 1020.5,523.9 1021.6,525.9Z" fill="#ff88ff" fill-rule="evenodd"/>
<path d="M1169.3,359.2 1170.1,362.5 1171.2,365.0 1172.9,366.6 1175.0,367.6 1177.3,367.9 1179.7,367.8 1182.3,367.2 1185.1,365.9 1187.8,364.3 1190.0,362.2 1191.8,359.6 1193.2,356.6 1194.2,353.3 1194.7,350.0 1194.5,346.6 1193.6,343.1 1192.4,339.7 1190.9,336.9 1189.2,334.5 1187.1,332.4 1184.8,330.9 1182.5,330.3 1180.1,330.8 1177.5,332.2 1175.1,334.3 1173.1,336.9 1171.6,340.1 1170.3,344.0 1169.5,348.1 1169.0,351.9 1169.0,355.5ZM1138.7,431.5 1139.8,434.4 1141.2,436.8 1143.0,438.8 1145.0,440.3 1146.9,440.9 1148.6,440.5 1150.2,439.3 1153.4,435.3 1157.0,429.7 1158.7,426.4 1160.0,423.1 1161.8,416.4 1162.1,413.1 1161.9,410.0 1160.9,406.9 1159.2,403.9 1157.3,401.3 1155.3,399.7 1153.3,399.1 1151.2,399.5 1149.0,400.3 1146.9,401.6 1144.8,403.1 1142.7,405.2 1140.8,407.5 1139.5,409.8 1138.4,412.6 1137.8,415.3 1137.5,418.2 1137.7,424.6 1138.1,428.1ZM1129.9,495.9 1131.2,497.5 1132.7,498.0 1134.4,497.7 1136.1,496.6 1137.5,495.0 1138.7,492.6 1139.8,489.5 1140.7,486.0 1141.2,482.5 1141.4,478.6 1141.3,474.4 1140.9,470.4 1140.0,467.5 1138.5,465.7 1136.5,464.7 1134.3,464.5 1132.5,465.0 1131.0,466.6 1129.6,469.1 1127.5,475.0 1126.9,478.0 1126.7,481.2 1126.7,484.5 1127.0,487.5 1127.7,490.5 1128.7,493.4ZM1085.2,537.3 1087.5,532.5 1089.3,526.1 1089.9,522.7 1090.0,520.0 1089.5,517.9 1088.6,516.2 1087.4,515.2 1086.2,515.0 1085.1,515.9 1083.8,517.7 1081.2,522.5 1078.8,528.9 1077.8,532.3 1077.5,535.0 1078.1,537.1 1079.5,538.8 1081.0,539.8 1082.5,540.0 1083.8,539.1ZM846.9,551.9 850.7,551.6 852.7,551.0 854.4,550.0 855.7,548.3 856.8,546.1 857.7,543.7 858.1,541.6 858.2,539.6 858.0,537.8 857.4,536.1 856.2,535.0 854.4,534.4 851.9,534.1 849.3,534.3 846.9,535.0 844.6,536.4 842.4,538.3 840.5,540.5 839.4,542.5 839.1,544.3 839.5,546.1 841.2,549.1 842.3,550.1 843.7,551.0 845.2,551.6ZM985.6,602.5 989.6,601.3 991.5,600.2 993.1,598.8 994.4,596.8 995.5,594.4 996.4,591.9 997.1,586.9 997.1,584.2 996.7,581.8 995.9,580.0 994.7,578.8 993.1,578.1 991.2,577.9 989.4,578.1 987.5,578.9 985.6,580.1 983.6,581.8 981.9,583.8 980.1,586.3 978.4,589.3 977.0,592.4 976.2,595.0 976.3,597.1 976.9,598.9 977.9,600.4 979.1,601.6 980.4,602.3 982.1,602.7Z" fill="#dd6fdd" fill-rule="evenodd"/>
<path d="M1171.2,350.0 1171.2,353.0 1171.6,356.1 1172.3,359.0 1173.1,361.2 1174.2,362.9 1175.5,364.2 1177.0,364.9 1178.8,365.0 1180.9,364.3 1183.5,363.0 1186.0,361.3 1188.1,359.4 1189.8,357.3 1191.2,355.0 1192.3,352.6 1192.8,350.0 1192.7,347.2 1192.2,344.1 1191.2,341.2 1190.0,338.8 1188.5,336.7 1186.5,334.9 1184.5,333.6 1182.5,333.1 1180.5,333.6 1178.5,334.9 1176.6,336.7 1175.0,338.8 1173.7,341.2 1172.5,344.0 1171.7,347.1ZM1139.5,424.1 1140.4,430.0 1141.2,432.5 1142.4,434.6 1143.8,436.4 1145.4,437.6 1146.9,438.1 1148.3,437.6 1149.7,436.4 1151.1,434.6 1154.0,430.1 1155.5,427.2 1158.1,421.2 1159.8,415.4 1160.1,412.5 1160.0,410.0 1159.2,407.6 1157.8,405.4 1156.1,403.6 1154.4,402.5 1152.6,402.2 1150.6,402.5 1148.7,403.3 1146.9,404.4 1145.2,405.8 1143.7,407.7 1142.3,409.7 1140.4,414.0 1139.5,418.7ZM1131.6,490.5 1132.7,491.8 1133.9,492.5 1135.0,492.5 1136.1,491.5 1137.1,489.7 1138.1,487.4 1138.8,485.0 1139.3,479.1 1139.2,476.0 1138.8,473.8 1137.8,472.3 1136.5,471.4 1135.0,471.1 1133.8,471.2 1132.6,472.1 1131.5,473.5 1130.6,475.4 1130.0,477.5 1129.8,480.1 1130.2,486.3 1130.8,488.8Z" fill="#bf59c2" fill-rule="evenodd"/>
<path d="M1144.6,421.7 1144.6,426.8 1145.0,428.8 1145.7,430.3 1146.6,431.7 1147.7,432.5 1148.8,432.5 1149.9,431.5 1151.3,429.7 1152.5,427.4 1153.4,425.0 1154.1,422.2 1154.6,419.0 1154.7,416.0 1154.4,413.8 1153.4,412.4 1151.9,411.6 1150.2,411.5 1148.8,411.9 1147.6,413.0 1146.5,414.9 1145.6,417.1Z" fill="#8e2a90" fill-rule="evenodd"/>
<path d="M10.0,172.2 36.2,174.3 73.8,177.2 116.9,180.5 160.0,183.5 202.7,186.2 247.5,188.9 293.6,191.4 340.0,193.5 388.2,195.2 438.1,196.5 486.5,197.6 530.0,198.5 566.5,199.2 598.1,199.6 628.2,199.9 660.0,200.0 695.7,200.0 733.1,199.8 769.0,199.4 800.0,199.0 821.6,198.5 836.9,198.0 853.7,197.2 880.0,196.0 921.2,194.2 971.9,191.9 1024.1,189.4 1070.0,187.0 1108.1,184.7 1142.5,182.3 1173.1,180.1 1200.0,178.0 1223.4,176.1 1243.1,174.3 1258.8,172.8 1270.0,171.8" fill="none" stroke="#555" stroke-width="1" stroke-dasharray="2,4.2"/>
<path d="M10.0,706.5 32.0,708.3 63.8,710.8 98.6,713.6 130.0,716.0 156.4,717.8 181.2,719.5 205.5,721.0 230.0,722.5 254.5,724.2 278.8,725.9 303.6,727.5 330.0,728.8 357.9,729.6 386.9,730.1 417.4,730.5 450.0,731.0 485.2,731.5 522.5,732.1 561.1,732.6 600.0,733.0 640.4,733.4 682.2,733.7 722.9,733.9 760.0,733.8 791.2,733.2 818.4,732.3 845.2,731.2 875.0,730.0 909.5,728.6 946.6,727.1 984.1,725.5 1020.0,723.8 1053.8,721.9 1086.6,720.0 1118.6,718.1 1150.0,716.0 1183.5,713.6 1218.1,711.0 1248.7,708.6 1270.0,707.0" fill="none" stroke="#555" stroke-width="1" stroke-dasharray="2,4.2"/>
<path d="M533.0,10.0 532.3,30.8 531.2,60.0 530.0,96.7 529.0,140.0 528.2,195.3 527.4,261.1 526.7,326.4 526.0,380.0 525.2,415.2 524.4,439.2 523.7,461.7 523.0,492.0 522.5,532.9 522.0,579.2 521.6,628.9 521.0,680.0 520.1,738.1 519.1,802.2 518.2,860.5 517.5,901.0" fill="none" stroke="#555" stroke-width="1" stroke-dasharray="2,4.2"/>
<path d="M1060.0,10.0 1060.6,11.9 1061.5,13.8 1062.6,21.2 1064.0,40.0 1065.7,76.0 1067.8,124.7 1069.9,176.1 1072.0,220.0 1074.0,253.2 1076.1,281.2 1078.1,307.4 1080.0,335.0 1081.5,362.2 1082.6,388.1 1084.0,417.5 1086.0,455.0 1088.9,504.0 1092.5,561.2 1096.3,621.6 1100.0,680.0 1103.8,740.7 1107.9,804.6 1111.5,861.4 1114.0,901.0" fill="none" stroke="#555" stroke-width="1" stroke-dasharray="2,4.2"/>
<path d="M27.8,26.9L33.7,7.6M33.7,7.6l8.6,-1.7M27.8,54.4L33.7,35.1M33.7,35.1l8.6,-1.7M27.8,81.9L33.7,62.6M33.7,62.6l8.6,-1.7M27.8,109.4L33.7,90.1M33.7,90.1l8.6,-1.7M27.8,136.9L33.3,117.5M33.3,117.5l8.6,-1.9M27.8,164.4L33.1,144.9M33.1,144.9l8.6,-2.0M27.8,191.9L33.1,172.4M33.1,172.4l8.6,-2.0M27.8,219.4L33.1,199.9M33.1,199.9l8.6,-2.0M27.8,246.9L33.1,227.4M33.1,227.4l8.6,-1.9M27.8,274.4L33.3,255.0M33.3,255.0l8.6,-1.9M27.8,301.9L33.4,282.5M33.4,282.5l8.6,-1.8M32.6,285.5l4.3,-0.9M27.8,329.4L33.4,310.0M33.4,310.0l8.6,-1.8M32.6,313.0l4.3,-0.9M27.8,356.9L33.4,337.5M33.4,337.5l8.6,-1.8M32.5,340.5l4.3,-0.9M27.8,384.4L33.4,365.0M33.4,365.0l8.6,-1.8M32.5,368.0l4.3,-0.9M27.8,411.9L33.4,392.5M33.4,392.5l8.6,-1.8M32.5,395.5l4.3,-0.9M27.8,439.4L33.4,420.0M33.4,420.0l8.6,-1.8M32.5,423.0l4.3,-0.9M27.8,466.9L33.4,447.5M33.4,447.5l8.6,-1.8M32.5,450.5l4.3,-0.9M27.8,494.4L33.3,475.0M33.3,475.0l8.6,-1.9M32.4,478.0l4.3,-0.9M27.8,521.9L33.2,502.4M33.2,502.4l8.6,-1.9M32.4,505.5l4.3,-1.0M27.8,549.4L33.2,529.9M33.2,529.9l8.6,-1.9M32.3,533.0l4.3,-1.0M27.8,576.9L33.2,557.4M33.2,557.4l8.6,-1.9M32.4,560.5l4.3,-1.0M27.8,604.4L33.4,585.0M33.4,585.0l8.6,-1.8M32.5,588.0l4.3,-0.9M27.8,631.9L33.4,612.5M33.4,612.5l8.6,-1.8M32.5,615.5l4.3,-0.9M27.8,659.4L33.4,640.0M33.4,640.0l8.6,-1.8M32.5,643.0l4.3,-0.9M27.8,686.9L33.4,667.5M33.4,667.5l8.6,-1.8M32.5,670.5l4.3,-0.9M27.8,714.4L33.3,694.9M33.3,694.9l8.6,-1.9M32.4,698.0l4.3,-0.9M27.8,741.9L33.1,722.4M33.1,722.4l8.6,-2.0M32.3,725.4l8.6,-2.0M27.8,769.4L33.0,749.9M33.0,749.9l8.6,-2.0M32.2,752.9l8.6,-2.0M27.8,796.9L33.0,777.4M33.0,777.4l8.6,-2.0M32.2,780.4l8.6,-2.0M27.8,824.4L33.1,804.9M33.1,804.9l8.6,-2.0M32.2,807.9l8.6,-2.0M27.8,851.9L33.1,832.4M33.1,832.4l8.6,-2.0M32.2,835.4l8.6,-2.0M27.8,879.4L33.1,859.9M33.1,859.9l8.6,-2.0M32.2,862.9l8.6,-2.0M27.8,906.9L33.1,887.4M33.1,887.4l8.6,-2.0M32.2,890.4l8.6,-2.0M55.7,26.9L61.6,7.6M61.6,7.6l8.6,-1.7M55.7,54.4L61.6,35.1M61.6,35.1l8.6,-1.7M55.7,81.9L61.6,62.6M61.6,62.6l8.6,-1.7M55.7,109.4L61.5,90.1M61.5,90.1l8.6,-1.7M55.7,136.9L61.2,117.5M61.2,117.5l8.6,-1.8M55.7,164.4L60.9,144.9M60.9,144.9l8.6,-2.0M55.7,191.9L60.9,172.4M60.9,172.4l8.6,-2.0M55.7,219.4L60.9,199.9M60.9,199.9l8.6,-2.0M55.7,246.9L61.0,227.4M61.0,227.4l8.6,-1.9M55.7,274.4L61.2,255.0M61.2,255.0l8.6,-1.8M55.7,301.9L61.3,282.5M61.3,282.5l8.6,-1.8M60.4,285.5l4.3,-0.9M55.7,329.4L61.3,310.0M61.3,310.0l8.6,-1.8M60.4,313.0l4.3,-0.9M55.7,356.9L61.2,337.5M61.2,337.5l8.6,-1.8M60.4,340.5l4.3,-0.9M55.7,384.4L61.2,365.0M61.2,365.0l8.6,-1.8M60.4,368.0l4.3,-0.9M55.7,411.9L61.2,392.5M61.2,392.5l8.6,-1.8M60.4,395.5l4.3,-0.9M55.7,439.4L61.2,420.0M61.2,420.0l8.6,-1.8M60.4,423.0l4.3,-0.9M55.7,466.9L61.2,447.5M61.2,447.5l8.6,-1.8M60.3,450.5l4.3,-0.9M55.7,494.4L61.1,474.9M61.1,474.9l8.6,-1.9M60.2,478.0l4.3,-1.0M55.7,521.9L60.9,502.4M60.9,502.4l8.6,-2.0M60.1,505.4l4.3,-1.0M55.7,549.4L60.9,529.9M60.9,529.9l8.6,-2.0M60.1,532.9l4.3,-1.0M55.7,576.9L61.0,557.4M61.0,557.4l8.6,-1.9M60.1,560.4l4.3,-1.0M55.7,604.4L61.1,585.0M61.1,585.0l8.6,-1.9M60.3,588.0l4.3,-0.9M55.7,631.9L61.2,612.5M61.2,612.5l8.6,-1.8M60.4,615.5l4.3,-0.9M55.7,659.4L61.2,640.0M61.2,640.0l8.6,-1.8M60.4,643.0l4.3,-0.9M55.7,686.9L61.2,667.5M61.2,667.5l8.6,-1.8M60.3,670.5l4.3,-0.9M55.7,714.4L61.0,694.9M61.0,694.9l8.6,-1.9M60.2,698.0l4.3,-1.0M55.7,741.9L60.8,722.4M60.8,722.4l8.6,-2.0M60.0,725.4l8.6,-2.0M55.7,769.4L60.7,749.8M60.7,749.8l8.6,-2.1M59.9,752.9l8.6,-2.1M55.7,796.9L60.8,777.4M60.8,777.4l8.6,-2.0M60.0,780.4l8.6,-2.0M55.7,824.4L60.9,804.9M60.9,804.9l8.6,-2.0M60.1,807.9l8.6,-2.0M55.7,851.9L60.9,832.4M60.9,832.4l8.6,-2.0M60.1,835.4l8.6,-2.0M55.7,879.4L60.9,859.9M60.9,859.9l8.6,-2.0M60.1,862.9l8.6,-2.0M55.7,906.9L60.9,887.4M60.9,887.4l8.6,-2.0M60.1,890.4l8.6,-2.0M83.5,26.9L89.4,7.6M89.4,7.6l8.6,-1.7M83.5,54.4L89.4,35.1M89.4,35.1l8.6,-1.7M83.5,81.9L89.4,62.6M89.4,62.6l8.6,-1.7M83.5,109.4L89.5,90.1M89.5,90.1l8.6,-1.7M83.5,136.9L89.3,117.5M89.3,117.5l8.6,-1.7M83.5,164.4L89.0,145.0M89.0,145.0l8.6,-1.8M83.5,191.9L88.9,172.4M88.9,172.4l8.6,-1.9M83.5,219.4L88.9,199.9M88.9,199.9l8.6,-1.9M83.5,246.9L89.1,227.5M89.1,227.5l8.6,-1.8M83.5,274.4L89.3,255.0M89.3,255.0l8.6,-1.7M83.5,301.9L89.3,282.6M89.3,282.6l8.6,-1.7M88.4,285.6l4.3,-0.9M83.5,329.4L89.2,310.0M89.2,310.0l8.6,-1.8M88.3,313.0l4.3,-0.9M83.5,356.9L89.1,337.5M89.1,337.5l8.6,-1.8M88.2,340.5l4.3,-0.9M83.5,384.4L89.1,365.0M89.1,365.0l8.6,-1.8M88.2,368.0l4.3,-0.9M83.5,411.9L89.1,392.5M89.1,392.5l8.6,-1.8M88.2,395.5l4.3,-0.9M83.5,439.4L89.1,420.0M89.1,420.0l8.6,-1.8M88.2,423.0l4.3,-0.9M83.5,466.9L89.0,447.5M89.0,447.5l8.6,-1.9M88.1,450.5l4.3,-0.9M83.5,494.4L88.8,474.9M88.8,474.9l8.6,-1.9M88.0,478.0l4.3,-1.0M83.5,521.9L88.7,502.4M88.7,502.4l8.6,-2.0M87.9,505.4l4.3,-1.0M83.5,549.4L88.7,529.9M88.7,529.9l8.6,-2.0M87.9,532.9l4.3,-1.0M83.5,576.9L88.7,557.4M88.7,557.4l8.6,-2.0M87.9,560.4l4.3,-1.0M83.5,604.4L88.8,584.9M88.8,584.9l8.6,-1.9M88.0,588.0l4.3,-1.0M83.5,631.9L89.0,612.5M89.0,612.5l8.6,-1.8M88.2,615.5l4.3,-0.9M83.5,659.4L89.0,640.0M89.0,640.0l8.6,-1.8M88.2,643.0l4.3,-0.9M83.5,686.9L89.0,667.5M89.0,667.5l8.6,-1.9M88.1,670.5l4.3,-0.9M83.5,714.4L88.7,694.9M88.7,694.9l8.6,-2.0M87.9,697.9l4.3,-1.0M83.5,741.9L88.5,722.3M88.5,722.3l8.5,-2.1M87.7,725.4l8.5,-2.1M83.5,769.4L88.4,749.8M88.4,749.8l8.5,-2.1M87.6,752.9l8.5,-2.1M83.5,796.9L88.4,777.3M88.4,777.3l8.5,-2.1M87.7,780.4l8.5,-2.1M83.5,824.4L88.6,804.9M88.6,804.9l8.6,-2.0M87.8,807.9l8.6,-2.0M83.5,851.9L88.7,832.4M88.7,832.4l8.6,-2.0M87.9,835.4l8.6,-2.0M83.5,879.4L88.7,859.9M88.7,859.9l8.6,-2.0M87.9,862.9l8.6,-2.0M83.5,906.9L88.7,887.4M88.7,887.4l8.6,-2.0M87.9,890.4l8.6,-2.0M111.3,26.9L117.4,7.6M117.4,7.6l8.7,-1.6M111.3,54.4L117.4,35.1M117.4,35.1l8.7,-1.6M111.3,81.9L117.5,62.7M117.5,62.7l8.7,-1.6M111.3,109.4L117.6,90.2M117.6,90.2l8.7,-1.5M111.3,136.9L117.6,117.7M117.6,117.7l8.7,-1.5M111.3,164.4L117.6,145.2M117.6,145.2l8.7,-1.5M111.3,191.9L117.7,172.7M117.7,172.7l8.7,-1.5M111.3,219.4L117.7,200.2M117.7,200.2l8.7,-1.5M111.3,246.9L117.6,227.7M117.6,227.7l8.7,-1.5M111.3,274.4L117.5,255.2M117.5,255.2l8.7,-1.6M111.3,301.9L117.3,282.6M117.3,282.6l8.6,-1.6M111.3,329.4L117.1,310.1M117.1,310.1l8.6,-1.7M116.2,313.1l4.3,-0.9M111.3,356.9L117.0,337.5M117.0,337.5l8.6,-1.8M116.1,340.5l4.3,-0.9M111.3,384.4L116.9,365.0M116.9,365.0l8.6,-1.8M116.1,368.0l4.3,-0.9M111.3,411.9L116.9,392.5M116.9,392.5l8.6,-1.8M116.1,395.5l4.3,-0.9M111.3,439.4L116.9,420.0M116.9,420.0l8.6,-1.8M116.0,423.0l4.3,-0.9M111.3,466.9L116.8,447.5M116.8,447.5l8.6,-1.9M116.0,450.5l4.3,-0.9M111.3,494.4L116.7,474.9M116.7,474.9l8.6,-1.9M115.8,478.0l4.3,-1.0M111.3,521.9L116.6,502.4M116.6,502.4l8.6,-2.0M115.7,505.4l4.3,-1.0M111.3,549.4L116.6,529.9M116.6,529.9l8.6,-2.0M115.7,532.9l4.3,-1.0M111.3,576.9L116.6,557.4M116.6,557.4l8.6,-2.0M115.7,560.4l4.3,-1.0M111.3,604.4L116.6,584.9M116.6,584.9l8.6,-2.0M115.8,587.9l4.3,-1.0M111.3,631.9L116.7,612.4M116.7,612.4l8.6,-1.9M115.9,615.5l4.3,-0.9M111.3,659.4L116.8,639.9M116.8,639.9l8.6,-1.9M115.9,643.0l4.3,-0.9M111.3,686.9L116.6,667.4M116.6,667.4l8.6,-1.9M115.8,670.5l4.3,-1.0M111.3,714.4L116.4,694.8M116.4,694.8l8.6,-2.1M115.6,697.9l8.6,-2.1M111.3,741.9L116.2,722.3M116.2,722.3l8.5,-2.1M115.5,725.4l8.5,-2.1M111.3,769.4L116.2,749.8M116.2,749.8l8.5,-2.1M115.4,752.9l8.5,-2.1M111.3,796.9L116.2,777.3M116.2,777.3l8.5,-2.1M115.4,780.4l8.5,-2.1M111.3,824.4L116.3,804.8M116.3,804.8l8.5,-2.1M115.5,807.9l8.5,-2.1M111.3,851.9L116.4,832.4M116.4,832.4l8.6,-2.0M115.6,835.4l8.6,-2.0M111.3,879.4L116.4,859.9M116.4,859.9l8.6,-2.0M115.6,862.9l8.6,-2.0M111.3,906.9L116.4,887.4M116.4,887.4l8.6,-2.0M115.6,890.4l8.6,-2.0M139.1,26.9L145.6,7.8M145.6,7.8l8.7,-1.4M139.1,54.4L145.7,35.3M145.7,35.3l8.7,-1.4M139.1,81.9L145.7,62.8M145.7,62.8l8.7,-1.4M139.1,109.4L145.7,90.3M145.7,90.3l8.7,-1.4M139.1,136.9L145.7,117.8M145.7,117.8l8.7,-1.4M139.1,164.4L145.7,145.3M145.7,145.3l8.7,-1.4M139.1,191.9L145.7,172.8M145.7,172.8l8.7,-1.4M139.1,219.4L145.7,200.3M145.7,200.3l8.7,-1.4M139.1,246.9L145.7,227.8M145.7,227.8l8.7,-1.4M139.1,274.4L145.6,255.2M145.6,255.2l8.7,-1.5M139.1,301.9L145.4,282.7M145.4,282.7l8.7,-1.5M139.1,329.4L145.2,310.1M145.2,310.1l8.6,-1.6M144.2,313.1l4.3,-0.8M139.1,356.9L145.0,337.6M145.0,337.6l8.6,-1.7M144.1,340.6l4.3,-0.9M139.1,384.4L144.9,365.0M144.9,365.0l8.6,-1.7M144.0,368.1l4.3,-0.9M139.1,411.9L144.9,392.5M144.9,392.5l8.6,-1.8M144.0,395.5l4.3,-0.9M139.1,439.4L144.8,420.0M144.8,420.0l8.6,-1.8M143.9,423.0l4.3,-0.9M139.1,466.9L144.7,447.5M144.7,447.5l8.6,-1.8M143.8,450.5l4.3,-0.9M139.1,494.4L144.5,474.9M144.5,474.9l8.6,-1.9M143.7,478.0l4.3,-1.0M139.1,521.9L144.4,502.4M144.4,502.4l8.6,-2.0M143.6,505.4l4.3,-1.0M139.1,549.4L144.4,529.9M144.4,529.9l8.6,-2.0M143.6,532.9l4.3,-1.0M139.1,576.9L144.4,557.4M144.4,557.4l8.6,-2.0M143.6,560.4l4.3,-1.0M139.1,604.4L144.4,584.9M144.4,584.9l8.6,-2.0M143.6,587.9l4.3,-1.0M139.1,631.9L144.5,612.4M144.5,612.4l8.6,-1.9M143.7,615.5l4.3,-1.0M139.1,659.4L144.4,639.9M144.4,639.9l8.6,-2.0M143.6,642.9l4.3,-1.0M139.1,686.9L144.4,667.4M144.4,667.4l8.6,-2.0M143.5,670.4l4.3,-1.0M139.1,714.4L144.2,694.8M144.2,694.8l8.6,-2.0M143.4,697.9l8.6,-2.0M139.1,741.9L144.1,722.3M144.1,722.3l8.5,-2.1M143.3,725.4l8.5,-2.1M139.1,769.4L144.0,749.8M144.0,749.8l8.5,-2.1M143.3,752.9l8.5,-2.1M139.1,796.9L144.0,777.3M144.0,777.3l8.5,-2.1M143.3,780.4l8.5,-2.1M139.1,824.4L144.0,804.8M144.0,804.8l8.5,-2.1M143.3,807.9l8.5,-2.1M139.1,851.9L144.1,832.3M144.1,832.3l8.5,-2.1M143.3,835.4l8.5,-2.1M139.1,879.4L144.1,859.8M144.1,859.8l8.5,-2.1M143.3,862.9l8.5,-2.1M139.1,906.9L144.1,887.3M144.1,887.3l8.5,-2.1M143.3,890.4l8.5,-2.1M167.0,26.9L173.6,7.8M173.6,7.8l8.7,-1.4M167.0,54.4L173.6,35.3M173.6,35.3l8.7,-1.4M167.0,81.9L173.6,62.8M173.6,62.8l8.7,-1.4M167.0,109.4L173.8,90.4M173.8,90.4l8.7,-1.3M167.0,136.9L173.8,117.9M173.8,117.9l8.7,-1.2M167.0,164.4L173.6,145.3M173.6,145.3l8.7,-1.3M167.0,191.9L173.6,172.8M173.6,172.8l8.7,-1.4M167.0,219.4L173.6,200.3M173.6,200.3l8.7,-1.4M167.0,246.9L173.6,227.8M173.6,227.8l8.7,-1.4M167.0,274.4L173.5,255.3M173.5,255.3l8.7,-1.4M167.0,301.9L173.3,282.7M173.3,282.7l8.7,-1.5M167.0,329.4L173.2,310.2M173.2,310.2l8.7,-1.6M172.2,313.2l4.3,-0.8M167.0,356.9L173.0,337.6M173.0,337.6l8.6,-1.6M172.1,340.6l4.3,-0.8M167.0,384.4L172.9,365.1M172.9,365.1l8.6,-1.7M172.0,368.1l4.3,-0.8M167.0,411.9L172.9,392.6M172.9,392.6l8.6,-1.7M171.9,395.6l4.3,-0.8M167.0,439.4L172.8,420.0M172.8,420.0l8.6,-1.7M171.9,423.1l4.3,-0.9M167.0,466.9L172.6,447.5M172.6,447.5l8.6,-1.8M171.8,450.5l4.3,-0.9M167.0,494.4L172.5,475.0M172.5,475.0l8.6,-1.9M171.6,478.0l4.3,-0.9M167.0,521.9L172.4,502.4M172.4,502.4l8.6,-1.9M171.5,505.5l4.3,-1.0M167.0,549.4L172.3,529.9M172.3,529.9l8.6,-1.9M171.5,533.0l4.3,-1.0M167.0,576.9L172.3,557.4M172.3,557.4l8.6,-1.9M171.5,560.5l4.3,-1.0M167.0,604.4L172.3,584.9M172.3,584.9l8.6,-1.9M171.5,588.0l4.3,-1.0M167.0,631.9L172.3,612.4M172.3,612.4l8.6,-2.0M171.4,615.4l4.3,-1.0M167.0,659.4L172.2,639.9M172.2,639.9l8.6,-2.0M171.4,642.9l4.3,-1.0M167.0,686.9L172.2,667.4M172.2,667.4l8.6,-2.0M171.4,670.4l4.3,-1.0M167.0,714.4L172.2,694.9M172.2,694.9l8.6,-2.0M171.4,697.9l4.3,-1.0M167.0,741.9L172.0,722.3M172.0,722.3l8.6,-2.1M171.2,725.4l8.6,-2.1M167.0,769.4L171.8,749.8M171.8,749.8l8.5,-2.1M171.1,752.9l8.5,-2.1M167.0,796.9L171.8,777.3M171.8,777.3l8.5,-2.2M171.0,780.3l8.5,-2.2M167.0,824.4L171.7,804.8M171.7,804.8l8.5,-2.2M171.0,807.8l8.5,-2.2M167.0,851.9L171.6,832.2M171.6,832.2l8.5,-2.2M170.9,835.3l8.5,-2.2M167.0,879.4L171.6,859.7M171.6,859.7l8.5,-2.2M170.9,862.8l8.5,-2.2M167.0,906.9L171.7,887.2M171.7,887.2l8.5,-2.2M170.9,890.3l8.5,-2.2M194.8,26.9L201.4,7.8M201.4,7.8l8.7,-1.4M194.8,54.4L201.4,35.3M201.4,35.3l8.7,-1.4M194.8,81.9L201.4,62.8M201.4,62.8l8.7,-1.4M194.8,109.4L201.9,90.5M201.9,90.5l8.7,-1.1M194.8,136.9L202.4,118.2M202.4,118.2l8.8,-0.9M194.8,164.4L202.1,145.6M202.1,145.6l8.7,-1.1M194.8,191.9L201.6,172.9M201.6,172.9l8.7,-1.3M194.8,219.4L201.5,200.3M201.5,200.3l8.7,-1.3M194.8,246.9L201.5,227.8M201.5,227.8l8.7,-1.3M194.8,274.4L201.3,255.3M201.3,255.3l8.7,-1.4M194.8,301.9L201.1,282.7M201.1,282.7l8.7,-1.5M194.8,329.4L200.9,310.2M200.9,310.2l8.7,-1.6M200.0,313.2l4.3,-0.8M194.8,356.9L200.9,337.6M200.9,337.6l8.7,-1.6M199.9,340.6l4.3,-0.8M194.8,384.4L200.8,365.1M200.8,365.1l8.6,-1.6M199.9,368.1l4.3,-0.8M194.8,411.9L200.8,392.6M200.8,392.6l8.6,-1.6M199.9,395.6l4.3,-0.8M194.8,439.4L200.7,420.1M200.7,420.1l8.6,-1.7M199.8,423.1l4.3,-0.8M194.8,466.9L200.5,447.5M200.5,447.5l8.6,-1.8M199.6,450.6l4.3,-0.9M194.8,494.4L200.4,475.0M200.4,475.0l8.6,-1.8M199.5,478.0l4.3,-0.9M194.8,521.9L200.3,502.5M200.3,502.5l8.6,-1.8M199.5,505.5l4.3,-0.9M194.8,549.4L200.3,530.0M200.3,530.0l8.6,-1.9M199.4,533.0l4.3,-0.9M194.8,576.9L200.2,557.4M200.2,557.4l8.6,-1.9M199.4,560.5l4.3,-1.0M194.8,604.4L200.1,584.9M200.1,584.9l8.6,-1.9M199.3,588.0l4.3,-1.0M194.8,631.9L200.1,612.4M200.1,612.4l8.6,-2.0M199.2,615.4l4.3,-1.0M194.8,659.4L200.0,639.9M200.0,639.9l8.6,-2.0M199.2,642.9l4.3,-1.0M194.8,686.9L200.0,667.4M200.0,667.4l8.6,-2.0M199.2,670.4l4.3,-1.0M194.8,714.4L200.0,694.9M200.0,694.9l8.6,-2.0M199.2,697.9l4.3,-1.0M194.8,741.9L199.8,722.3M199.8,722.3l8.6,-2.1M199.0,725.4l4.3,-1.0M194.8,769.4L199.4,749.7M199.4,749.7l8.5,-2.3M198.7,752.8l8.5,-2.3M194.8,796.9L199.3,777.2M199.3,777.2l8.5,-2.3M198.6,780.3l8.5,-2.3M194.8,824.4L199.2,804.7M199.2,804.7l8.5,-2.3M198.5,807.8l8.5,-2.3M194.8,851.9L199.1,832.2M199.1,832.2l8.5,-2.4M198.5,835.2l8.5,-2.4M194.8,879.4L199.2,859.7M199.2,859.7l8.5,-2.4M198.5,862.7l8.5,-2.4M194.8,906.9L199.2,887.2M199.2,887.2l8.5,-2.3M198.6,890.3l8.5,-2.3M222.6,26.9L229.2,7.8M229.2,7.8l8.7,-1.4M222.6,54.4L229.2,35.3M229.2,35.3l8.7,-1.4M222.6,81.9L229.4,62.9M229.4,62.9l8.7,-1.3M222.6,109.4L230.3,90.7M230.3,90.7l8.8,-0.9M222.6,136.9L230.8,118.4M230.8,118.4l8.8,-0.7M222.6,164.4L230.8,145.9M230.8,145.9l8.8,-0.7M222.6,191.9L230.4,173.3M230.4,173.3l8.8,-0.8M222.6,219.4L229.9,200.5M229.9,200.5l8.7,-1.1M222.6,246.9L229.5,227.9M229.5,227.9l8.7,-1.3M222.6,274.4L229.0,255.2M229.0,255.2l8.7,-1.5M222.6,301.9L228.7,282.6M228.7,282.6l8.6,-1.6M222.6,329.4L228.5,310.1M228.5,310.1l8.6,-1.7M222.6,356.9L228.5,337.6M228.5,337.6l8.6,-1.7M222.6,384.4L228.6,365.1M228.6,365.1l8.6,-1.7M227.7,368.1l4.3,-0.8M222.6,411.9L228.6,392.6M228.6,392.6l8.6,-1.7M227.7,395.6l4.3,-0.8M222.6,439.4L228.5,420.1M228.5,420.1l8.6,-1.7M227.5,423.1l4.3,-0.9M222.6,466.9L228.3,447.5M228.3,447.5l8.6,-1.8M227.4,450.5l4.3,-0.9M222.6,494.4L228.2,475.0M228.2,475.0l8.6,-1.8M227.3,478.0l4.3,-0.9M222.6,521.9L228.1,502.5M228.1,502.5l8.6,-1.9M227.3,505.5l4.3,-0.9M222.6,549.4L228.1,530.0M228.1,530.0l8.6,-1.9M227.3,533.0l4.3,-0.9M222.6,576.9L228.0,557.4M228.0,557.4l8.6,-1.9M227.2,560.5l4.3,-1.0M222.6,604.4L227.9,584.9M227.9,584.9l8.6,-2.0M227.1,587.9l4.3,-1.0M222.6,631.9L227.8,612.4M227.8,612.4l8.6,-2.0M227.0,615.4l4.3,-1.0M222.6,659.4L227.8,639.9M227.8,639.9l8.6,-2.0M227.0,642.9l4.3,-1.0M222.6,686.9L227.9,667.4M227.9,667.4l8.6,-2.0M227.0,670.4l4.3,-1.0M222.6,714.4L227.8,694.9M227.8,694.9l8.6,-2.0M227.0,697.9l4.3,-1.0M222.6,741.9L227.3,722.2M227.3,722.2l8.5,-2.2M226.6,725.3l8.5,-2.2M222.6,769.4L226.9,749.7M226.9,749.7l8.5,-2.4M226.2,752.7l8.5,-2.4M222.6,796.9L226.9,777.1M226.9,777.1l8.5,-2.4M226.2,780.2l8.5,-2.4M222.6,824.4L226.9,804.6M226.9,804.6l8.5,-2.4M226.2,807.7l8.5,-2.4M222.6,851.9L226.9,832.1M226.9,832.1l8.5,-2.4M226.2,835.2l8.5,-2.4M222.6,879.4L226.9,859.6M226.9,859.6l8.5,-2.4M226.2,862.7l8.5,-2.4M222.6,906.9L227.0,887.2M227.0,887.2l8.5,-2.4M226.3,890.2l8.5,-2.4M250.5,26.9L257.3,7.9M257.3,7.9l8.7,-1.3M250.5,54.4L257.3,35.4M257.3,35.4l8.7,-1.3M250.5,81.9L257.7,63.1M257.7,63.1l8.7,-1.1M250.5,109.4L258.5,90.9M258.5,90.9l8.8,-0.7M250.5,136.9L258.7,118.4M258.7,118.4l8.8,-0.6M250.5,164.4L258.7,145.9M258.7,145.9l8.8,-0.6M250.5,191.9L258.6,173.4M258.6,173.4l8.8,-0.7M250.5,219.4L258.1,200.7M258.1,200.7l8.8,-0.9M250.5,246.9L257.3,227.9M257.3,227.9l8.7,-1.3M250.5,274.4L256.6,255.1M256.6,255.1l8.7,-1.6M250.5,301.9L256.2,282.5M256.2,282.5l8.6,-1.8M250.5,329.4L256.1,310.0M256.1,310.0l8.6,-1.8M250.5,356.9L256.2,337.5M256.2,337.5l8.6,-1.8M250.5,384.4L256.3,365.1M256.3,365.1l8.6,-1.7M255.4,368.1l4.3,-0.9M250.5,411.9L256.4,392.6M256.4,392.6l8.6,-1.7M255.5,395.6l4.3,-0.8M250.5,439.4L256.2,420.0M256.2,420.0l8.6,-1.8M255.3,423.0l4.3,-0.9M250.5,466.9L255.9,447.4M255.9,447.4l8.6,-1.9M255.1,450.5l4.3,-0.9M250.5,494.4L255.8,474.9M255.8,474.9l8.6,-1.9M255.0,478.0l4.3,-1.0M250.5,521.9L255.8,502.4M255.8,502.4l8.6,-1.9M255.0,505.5l4.3,-1.0M250.5,549.4L255.8,529.9M255.8,529.9l8.6,-1.9M255.0,533.0l4.3,-1.0M250.5,576.9L255.7,557.4M255.7,557.4l8.6,-2.0M254.9,560.4l4.3,-1.0M250.5,604.4L255.5,584.8M255.5,584.8l8.6,-2.1M254.7,587.9l4.3,-1.0M250.5,631.9L255.5,612.3M255.5,612.3l8.6,-2.1M254.7,615.4l4.3,-1.0M250.5,659.4L255.6,639.8M255.6,639.8l8.6,-2.0M254.8,642.9l4.3,-1.0M250.5,686.9L255.6,667.4M255.6,667.4l8.6,-2.0M254.8,670.4l4.3,-1.0M250.5,714.4L255.4,694.8M255.4,694.8l8.5,-2.1M254.6,697.9l4.3,-1.1M250.5,741.9L254.8,722.2M254.8,722.2l8.5,-2.4M254.1,725.3l8.5,-2.4M250.5,769.4L254.7,749.6M254.7,749.6l8.5,-2.4M254.0,752.7l8.5,-2.4M250.5,796.9L254.7,777.1M254.7,777.1l8.5,-2.4M254.0,780.2l8.5,-2.4M250.5,824.4L254.7,804.6M254.7,804.6l8.5,-2.4M254.0,807.7l8.5,-2.4M250.5,851.9L254.7,832.1M254.7,832.1l8.5,-2.4M254.0,835.2l8.5,-2.4M250.5,879.4L254.7,859.6M254.7,859.6l8.5,-2.4M254.0,862.7l8.5,-2.4M250.5,906.9L254.8,887.2M254.8,887.2l8.5,-2.4M254.1,890.2l8.5,-2.4M278.3,26.9L285.9,8.2M285.9,8.2l8.8,-0.9M278.3,54.4L285.9,35.7M285.9,35.7l8.8,-0.9M278.3,81.9L286.1,63.3M286.1,63.3l8.8,-0.8M278.3,109.4L286.4,90.9M286.4,90.9l8.8,-0.7M278.3,136.9L286.5,118.4M286.5,118.4l8.8,-0.6M278.3,164.4L286.5,145.9M286.5,145.9l8.8,-0.6M278.3,191.9L286.4,173.4M286.4,173.4l8.8,-0.7M278.3,219.4L285.9,200.7M285.9,200.7l8.8,-0.9M278.3,246.9L284.9,227.8M284.9,227.8l8.7,-1.4M278.3,274.4L284.1,255.1M284.1,255.1l8.6,-1.7M278.3,301.9L283.9,282.5M283.9,282.5l8.6,-1.8M278.3,329.4L283.9,310.0M283.9,310.0l8.6,-1.8M278.3,356.9L283.9,337.5M283.9,337.5l8.6,-1.8M278.3,384.4L284.1,365.0M284.1,365.0l8.6,-1.7M278.3,411.9L284.2,392.6M284.2,392.6l8.6,-1.7M283.3,395.6l4.3,-0.8M278.3,439.4L283.9,420.0M283.9,420.0l8.6,-1.8M283.1,423.0l4.3,-0.9M278.3,466.9L283.6,447.4M283.6,447.4l8.6,-1.9M282.8,450.5l4.3,-1.0M278.3,494.4L283.5,474.9M283.5,474.9l8.6,-2.0M282.7,477.9l4.3,-1.0M278.3,521.9L283.6,502.4M283.6,502.4l8.6,-2.0M282.7,505.4l4.3,-1.0M278.3,549.4L283.6,529.9M283.6,529.9l8.6,-1.9M282.8,532.9l4.3,-1.0M278.3,576.9L283.3,557.3M283.3,557.3l8.5,-2.1M282.5,560.4l4.3,-1.0M278.3,604.4L282.9,584.7M282.9,584.7l8.5,-2.3M282.2,587.8l4.3,-1.1M278.3,631.9L282.9,612.2M282.9,612.2l8.5,-2.3M282.2,615.3l4.3,-1.1M278.3,659.4L283.1,639.8M283.1,639.8l8.5,-2.2M282.3,642.8l4.3,-1.1M278.3,686.9L283.2,667.3M283.2,667.3l8.5,-2.1M282.4,670.4l4.3,-1.1M278.3,714.4L283.1,694.8M283.1,694.8l8.5,-2.2M282.3,697.8l4.3,-1.1M278.3,741.9L282.7,722.2M282.7,722.2l8.5,-2.3M282.0,725.3l8.5,-2.3M278.3,769.4L282.5,749.7M282.5,749.7l8.5,-2.4M281.9,752.7l8.5,-2.4M278.3,796.9L282.5,777.1M282.5,777.1l8.5,-2.4M281.9,780.2l8.5,-2.4M278.3,824.4L282.5,804.6M282.5,804.6l8.5,-2.4M281.9,807.7l8.5,-2.4M278.3,851.9L282.5,832.1M282.5,832.1l8.5,-2.4M281.9,835.2l8.5,-2.4M278.3,879.4L282.5,859.6M282.5,859.6l8.5,-2.4M281.9,862.7l8.5,-2.4M278.3,906.9L282.6,887.2M282.6,887.2l8.5,-2.4M282.0,890.2l8.5,-2.4M306.1,26.9L314.3,8.4M314.3,8.4l8.8,-0.6M306.1,54.4L314.3,35.9M314.3,35.9l8.8,-0.6M306.1,81.9L314.3,63.4M314.3,63.4l8.8,-0.6M306.1,109.4L314.3,90.9M314.3,90.9l8.8,-0.7M306.1,136.9L314.3,118.4M314.3,118.4l8.8,-0.6M306.1,164.4L314.3,145.9M314.3,145.9l8.8,-0.7M306.1,191.9L314.1,173.3M314.1,173.3l8.8,-0.7M306.1,219.4L313.6,200.6M313.6,200.6l8.7,-1.0M306.1,246.9L312.6,227.8M312.6,227.8l8.7,-1.4M306.1,274.4L311.9,255.1M311.9,255.1l8.6,-1.7M306.1,301.9L311.7,282.5M311.7,282.5l8.6,-1.8M306.1,329.4L311.7,310.0M311.7,310.0l8.6,-1.8M306.1,356.9L311.7,337.5M311.7,337.5l8.6,-1.8M306.1,384.4L312.0,365.1M312.0,365.1l8.6,-1.7M306.1,411.9L312.3,392.7M312.3,392.7l8.7,-1.6M311.3,395.7l4.3,-0.8M306.1,439.4L311.9,420.0M311.9,420.0l8.6,-1.7M311.0,423.1l4.3,-0.9M306.1,466.9L311.5,447.4M311.5,447.4l8.6,-1.9M310.6,450.5l4.3,-1.0M306.1,494.4L311.4,474.9M311.4,474.9l8.6,-2.0M310.6,477.9l4.3,-1.0M306.1,521.9L311.4,502.4M311.4,502.4l8.6,-2.0M310.6,505.4l4.3,-1.0M306.1,549.4L311.4,529.9M311.4,529.9l8.6,-1.9M310.6,532.9l4.3,-1.0M306.1,576.9L310.8,557.3M310.8,557.3l8.5,-2.2M310.1,560.3l4.3,-1.1M306.1,604.4L310.4,584.7M310.4,584.7l8.5,-2.4M309.8,587.7l4.2,-1.2M306.1,631.9L310.4,612.2M310.4,612.2l8.5,-2.4M309.7,615.2l4.2,-1.2M306.1,659.4L310.7,639.7M310.7,639.7l8.5,-2.3M310.0,642.8l4.3,-1.1M306.1,686.9L311.0,667.3M311.0,667.3l8.5,-2.1M310.2,670.4l4.3,-1.1M306.1,714.4L311.0,694.8M311.0,694.8l8.5,-2.1M310.2,697.9l4.3,-1.1M306.1,741.9L310.9,722.3M310.9,722.3l8.5,-2.2M310.1,725.3l8.5,-2.2M306.1,769.4L310.6,749.7M310.6,749.7l8.5,-2.3M309.9,752.8l8.5,-2.3M306.1,796.9L310.5,777.2M310.5,777.2l8.5,-2.3M309.8,780.3l8.5,-2.3M306.1,824.4L310.5,804.7M310.5,804.7l8.5,-2.4M309.8,807.8l8.5,-2.4M306.1,851.9L310.5,832.2M310.5,832.2l8.5,-2.4M309.8,835.2l8.5,-2.4M306.1,879.4L310.5,859.7M310.5,859.7l8.5,-2.4M309.8,862.8l8.5,-2.4M306.1,906.9L310.6,887.2M310.6,887.2l8.5,-2.3M309.9,890.3l8.5,-2.3M334.0,26.9L342.2,8.4M342.2,8.4l8.8,-0.6M334.0,54.4L342.2,35.9M342.2,35.9l8.8,-0.6M334.0,81.9L342.2,63.4M342.2,63.4l8.8,-0.6M334.0,109.4L342.2,91.0M342.2,91.0l8.8,-0.6M334.0,136.9L342.3,118.5M342.3,118.5l8.8,-0.6M334.0,164.4L342.2,146.0M342.2,146.0l8.8,-0.6M334.0,191.9L342.0,173.4M342.0,173.4l8.8,-0.7M334.0,219.4L341.4,200.6M341.4,200.6l8.7,-1.0M334.0,246.9L340.6,227.8M340.6,227.8l8.7,-1.3M334.0,274.4L339.9,255.1M339.9,255.1l8.6,-1.6M334.0,301.9L339.7,282.5M339.7,282.5l8.6,-1.8M334.0,329.4L339.6,310.0M339.6,310.0l8.6,-1.8M334.0,356.9L339.8,337.6M339.8,337.6l8.6,-1.7M334.0,384.4L340.3,365.2M340.3,365.2l8.7,-1.5M339.3,368.2l4.3,-0.7M334.0,411.9L340.6,392.8M340.6,392.8l8.7,-1.4M339.5,395.8l4.3,-0.7M334.0,439.4L340.3,420.2M340.3,420.2l8.7,-1.5M339.3,423.2l4.3,-0.7M334.0,466.9L339.8,447.5M339.8,447.5l8.6,-1.7M338.9,450.6l4.3,-0.9M334.0,494.4L339.5,475.0M339.5,475.0l8.6,-1.9M338.6,478.0l4.3,-0.9M334.0,521.9L339.5,502.5M339.5,502.5l8.6,-1.8M338.7,505.5l4.3,-0.9M334.0,549.4L339.5,530.0M339.5,530.0l8.6,-1.9M338.6,533.0l4.3,-0.9M334.0,576.9L338.7,557.3M338.7,557.3l8.5,-2.2M338.0,560.3l4.3,-1.1M334.0,604.4L338.2,584.7M338.2,584.7l8.5,-2.4M337.5,587.7l4.2,-1.2M334.0,631.9L338.2,612.1M338.2,612.1l8.5,-2.4M337.5,615.2l4.2,-1.2M334.0,659.4L338.6,639.7M338.6,639.7l8.5,-2.3M337.8,642.8l4.3,-1.1M334.0,686.9L338.8,667.3M338.8,667.3l8.5,-2.1M338.1,670.4l4.3,-1.1M334.0,714.4L338.9,694.8M338.9,694.8l8.5,-2.1M338.1,697.9l4.3,-1.1M334.0,741.9L338.9,722.3M338.9,722.3l8.5,-2.1M338.1,725.4l4.3,-1.1M334.0,769.4L338.8,749.8M338.8,749.8l8.5,-2.1M338.1,752.8l8.5,-2.1M334.0,796.9L338.7,777.3M338.7,777.3l8.5,-2.2M338.0,780.3l8.5,-2.2M334.0,824.4L338.6,804.7M338.6,804.7l8.5,-2.2M337.9,807.8l8.5,-2.2M334.0,851.9L338.5,832.2M338.5,832.2l8.5,-2.3M337.8,835.3l8.5,-2.3M334.0,879.4L338.5,859.7M338.5,859.7l8.5,-2.3M337.8,862.8l8.5,-2.3M334.0,906.9L338.7,887.3M338.7,887.3l8.5,-2.2M337.9,890.3l8.5,-2.2M361.8,26.9L370.0,8.4M370.0,8.4l8.8,-0.6M361.8,54.4L370.0,35.9M370.0,35.9l8.8,-0.6M361.8,81.9L370.1,63.5M370.1,63.5l8.8,-0.6M361.8,109.4L370.3,91.1M370.3,91.1l8.8,-0.5M361.8,136.9L370.6,118.7M370.6,118.7l8.8,-0.3M361.8,164.4L370.6,146.2M370.6,146.2l8.8,-0.4M361.8,191.9L370.2,173.5M370.2,173.5l8.8,-0.5M361.8,219.4L369.6,200.8M369.6,200.8l8.8,-0.8M361.8,246.9L368.9,228.0M368.9,228.0l8.7,-1.1M361.8,274.4L368.3,255.3M368.3,255.3l8.7,-1.4M361.8,301.9L368.0,282.7M368.0,282.7l8.7,-1.6M361.8,329.4L368.0,310.2M368.0,310.2l8.7,-1.5M361.8,356.9L368.4,337.8M368.4,337.8l8.7,-1.4M367.4,340.8l4.3,-0.7M361.8,384.4L368.6,365.4M368.6,365.4l8.7,-1.2M367.6,368.4l4.4,-0.6M361.8,411.9L368.7,392.9M368.7,392.9l8.7,-1.2M367.6,395.9l4.4,-0.6M361.8,439.4L368.7,420.4M368.7,420.4l8.7,-1.2M367.6,423.4l4.4,-0.6M361.8,466.9L368.6,447.9M368.6,447.9l8.7,-1.3M367.5,450.8l4.4,-0.6M361.8,494.4L368.5,475.3M368.5,475.3l8.7,-1.3M367.4,478.3l4.3,-0.7M361.8,521.9L368.2,502.7M368.2,502.7l8.7,-1.5M367.2,505.7l4.3,-0.7M361.8,549.4L367.4,530.0M367.4,530.0l8.6,-1.8M366.6,533.0l4.3,-0.9M361.8,576.9L367.1,557.4M367.1,557.4l8.6,-2.0M366.2,560.4l4.3,-1.0M361.8,604.4L366.4,584.7M366.4,584.7l8.5,-2.2M365.7,587.8l4.3,-1.1M361.8,631.9L366.3,612.2M366.3,612.2l8.5,-2.3M365.6,615.3l4.2,-1.2M361.8,659.4L366.6,639.8M366.6,639.8l8.5,-2.2M365.8,642.8l4.3,-1.1M361.8,686.9L366.7,667.3M366.7,667.3l8.5,-2.1M365.9,670.4l4.3,-1.1M361.8,714.4L366.7,694.8M366.7,694.8l8.5,-2.1M365.9,697.9l4.3,-1.1M361.8,741.9L366.7,722.3M366.7,722.3l8.5,-2.1M365.9,725.4l4.3,-1.1M361.8,769.4L366.8,749.8M366.8,749.8l8.6,-2.1M366.0,752.9l4.3,-1.0M361.8,796.9L366.7,777.3M366.7,777.3l8.5,-2.1M366.0,780.4l8.5,-2.1M361.8,824.4L366.5,804.8M366.5,804.8l8.5,-2.2M365.8,807.8l8.5,-2.2M361.8,851.9L366.3,832.2M366.3,832.2l8.5,-2.3M365.6,835.3l8.5,-2.3M361.8,879.4L366.3,859.7M366.3,859.7l8.5,-2.3M365.6,862.8l8.5,-2.3M361.8,906.9L366.4,887.2M366.4,887.2l8.5,-2.2M365.7,890.3l8.5,-2.2M389.6,26.9L397.9,8.5M397.9,8.5l8.8,-0.6M389.6,54.4L397.9,36.0M397.9,36.0l8.8,-0.6M389.6,81.9L398.3,63.6M398.3,63.6l8.8,-0.4M389.6,109.4L399.0,91.5M399.0,91.5l8.8,-0.1M389.6,136.9L399.2,119.1M399.2,119.1l8.8,0.1M389.6,164.4L399.1,146.6M399.1,146.6l8.8,-0.0M389.6,191.9L398.6,173.8M398.6,173.8l8.8,-0.2M389.6,219.4L398.0,201.0M398.0,201.0l8.8,-0.6M389.6,246.9L397.3,228.2M397.3,228.2l8.8,-0.8M389.6,274.4L396.9,255.6M396.9,255.6l8.7,-1.1M389.6,301.9L396.6,283.0M396.6,283.0l8.7,-1.2M395.5,285.9l4.4,-0.6M389.6,329.4L396.5,310.4M396.5,310.4l8.7,-1.2M395.5,313.4l4.4,-0.6M389.6,356.9L396.5,337.9M396.5,337.9l8.7,-1.2M395.5,340.9l4.4,-0.6M389.6,384.4L396.5,365.4M396.5,365.4l8.7,-1.2M395.5,368.4l4.4,-0.6M389.6,411.9L396.5,392.9M396.5,392.9l8.7,-1.2M395.5,395.9l4.4,-0.6M389.6,439.4L396.7,420.5M396.7,420.5l8.7,-1.1M395.6,423.4l4.4,-0.6M389.6,466.9L396.7,448.0M396.7,448.0l8.7,-1.2M395.6,450.9l4.4,-0.6M389.6,494.4L396.5,475.4M396.5,475.4l8.7,-1.2M395.5,478.4l4.4,-0.6M389.6,521.9L396.3,502.8M396.3,502.8l8.7,-1.3M395.2,505.8l4.3,-0.7M389.6,549.4L395.0,529.9M395.0,529.9l8.6,-1.9M394.2,533.0l4.3,-1.0M389.6,576.9L395.0,557.4M395.0,557.4l8.6,-1.9M394.1,560.5l4.3,-1.0M389.6,604.4L395.2,585.0M395.2,585.0l8.6,-1.8M394.3,588.0l4.3,-0.9M389.6,631.9L395.0,612.4M395.0,612.4l8.6,-1.9M394.2,615.5l4.3,-1.0M389.6,659.4L394.5,639.8M394.5,639.8l8.5,-2.1M393.8,642.9l4.3,-1.1M389.6,686.9L394.2,667.2M394.2,667.2l8.5,-2.3M393.5,670.3l4.3,-1.1M389.6,714.4L394.2,694.7M394.2,694.7l8.5,-2.3M393.5,697.8l4.3,-1.1M389.6,741.9L394.4,722.3M394.4,722.3l8.5,-2.2M393.7,725.3l4.3,-1.1M389.6,769.4L394.7,749.9M394.7,749.9l8.6,-2.0M393.9,752.9l4.3,-1.0M389.6,796.9L394.4,777.3M394.4,777.3l8.5,-2.2M393.7,780.3l8.5,-2.2M389.6,824.4L393.9,804.7M393.9,804.7l8.5,-2.4M393.2,807.7l8.5,-2.4M389.6,851.9L393.6,832.1M393.6,832.1l8.4,-2.5M393.0,835.2l8.4,-2.5M389.6,879.4L393.6,859.6M393.6,859.6l8.4,-2.5M393.0,862.7l8.4,-2.5M389.6,906.9L393.9,887.2M393.9,887.2l8.5,-2.4M393.2,890.2l8.5,-2.4M417.4,26.9L426.1,8.7M426.1,8.7l8.8,-0.4M417.4,54.4L426.5,36.3M426.5,36.3l8.8,-0.2M417.4,81.9L427.2,64.2M427.2,64.2l8.8,0.1M417.4,109.4L427.5,91.9M427.5,91.9l8.8,0.3M417.4,136.9L427.5,119.4M427.5,119.4l8.8,0.3M417.4,164.4L427.4,146.8M427.4,146.8l8.8,0.2M417.4,191.9L426.9,174.1M426.9,174.1l8.8,-0.0M417.4,219.4L426.2,201.2M426.2,201.2l8.8,-0.4M417.4,246.9L425.6,228.4M425.6,228.4l8.8,-0.6M417.4,274.4L425.4,255.8M425.4,255.8l8.8,-0.8M417.4,301.9L425.1,283.2M425.1,283.2l8.8,-0.9M423.9,286.1l4.4,-0.4M417.4,329.4L424.8,310.6M424.8,310.6l8.7,-1.0M423.7,313.5l4.4,-0.5M417.4,356.9L424.5,338.0M424.5,338.0l8.7,-1.2M423.4,340.9l4.4,-0.6M417.4,384.4L424.4,365.4M424.4,365.4l8.7,-1.2M423.3,368.4l4.4,-0.6M417.4,411.9L424.4,392.9M424.4,392.9l8.7,-1.2M423.3,395.9l4.4,-0.6M417.4,439.4L424.8,420.6M424.8,420.6l8.7,-1.0M423.6,423.5l4.4,-0.5M417.4,466.9L424.9,448.1M424.9,448.1l8.7,-1.0M423.7,451.1l4.4,-0.5M417.4,494.4L424.5,475.5M424.5,475.5l8.7,-1.1M423.4,478.4l4.4,-0.6M417.4,521.9L424.4,502.9M424.4,502.9l8.7,-1.2M423.3,505.9l4.4,-0.6M417.4,549.4L423.1,530.0M423.1,530.0l8.6,-1.8M422.2,533.0l4.3,-0.9M417.4,576.9L423.1,557.5M423.1,557.5l8.6,-1.8M422.2,560.5l4.3,-0.9M417.4,604.4L424.1,585.3M424.1,585.3l8.7,-1.4M423.0,588.3l4.3,-0.7M417.4,631.9L423.9,612.8M423.9,612.8l8.7,-1.4M422.9,615.8l4.3,-0.7M417.4,659.4L422.4,639.8M422.4,639.8l8.5,-2.1M421.6,642.9l4.3,-1.1M417.4,686.9L421.7,667.2M421.7,667.2l8.5,-2.4M421.0,670.2l4.2,-1.2M417.4,714.4L421.7,694.7M421.7,694.7l8.5,-2.4M421.0,697.7l4.2,-1.2M417.4,741.9L422.2,722.3M422.2,722.3l8.5,-2.2M421.5,725.3l4.3,-1.1M417.4,769.4L422.7,749.9M422.7,749.9l8.6,-2.0M421.9,752.9l8.6,-2.0M417.4,796.9L421.9,777.2M421.9,777.2l8.5,-2.3M421.2,780.3l8.5,-2.3M417.4,824.4L421.3,804.6M421.3,804.6l8.4,-2.6M420.7,807.7l8.4,-2.6M417.4,851.9L421.1,832.0M421.1,832.0l8.4,-2.7M420.5,835.1l8.4,-2.7M417.4,879.4L421.1,859.5M421.1,859.5l8.4,-2.7M420.5,862.6l8.4,-2.7M417.4,906.9L421.4,887.1M421.4,887.1l8.4,-2.5M420.8,890.2l8.4,-2.5M445.3,26.9L454.6,9.0M454.6,9.0l8.8,-0.1M445.3,54.4L455.0,36.7M455.0,36.7l8.8,0.1M445.3,81.9L455.3,64.4M455.3,64.4l8.8,0.3M445.3,109.4L455.4,91.9M455.4,91.9l8.8,0.3M445.3,136.9L455.4,119.4M455.4,119.4l8.8,0.3M445.3,164.4L455.3,146.9M455.3,146.9l8.8,0.3M445.3,191.9L454.9,174.2M454.9,174.2l8.8,0.1M445.3,219.4L454.1,201.3M454.1,201.3l8.8,-0.3M445.3,246.9L453.6,228.5M453.6,228.5l8.8,-0.6M445.3,274.4L453.5,255.9M453.5,255.9l8.8,-0.6M445.3,301.9L453.4,283.4M453.4,283.4l8.8,-0.7M445.3,329.4L453.2,310.8M453.2,310.8l8.8,-0.8M451.9,313.7l4.4,-0.4M445.3,356.9L452.7,338.1M452.7,338.1l8.7,-1.0M451.5,341.0l4.4,-0.5M445.3,384.4L452.5,365.5M452.5,365.5l8.7,-1.1M451.3,368.5l4.4,-0.6M445.3,411.9L452.6,393.1M452.6,393.1l8.7,-1.0M451.4,396.0l4.4,-0.5M445.3,439.4L452.9,420.7M452.9,420.7l8.8,-0.9M451.7,423.6l4.4,-0.5M445.3,466.9L452.9,448.2M452.9,448.2l8.8,-0.9M451.7,451.1l4.4,-0.5M445.3,494.4L453.1,475.8M453.1,475.8l8.8,-0.8M451.8,478.7l4.4,-0.4M445.3,521.9L454.8,504.1M454.8,504.1l8.8,0.0M453.3,506.9l4.4,0.0M445.3,549.4L455.7,532.1M455.7,532.1l8.8,0.5M454.1,534.8l8.8,0.5M445.3,576.9L454.9,559.1M454.9,559.1l8.8,0.0M453.4,561.9l8.8,0.0M445.3,604.4L454.2,586.3M454.2,586.3l8.8,-0.3M452.8,589.1l8.8,-0.3M445.3,631.9L453.4,613.4M453.4,613.4l8.8,-0.6M452.2,616.3l8.8,-0.6M445.3,659.4L451.3,640.1M451.3,640.1l8.6,-1.6M450.3,643.1l4.3,-0.8M445.3,686.9L449.9,667.2M449.9,667.2l8.5,-2.2M449.2,670.3l4.3,-1.1M445.3,714.4L449.9,694.7M449.9,694.7l8.5,-2.2M449.2,697.8l4.3,-1.1M445.3,741.9L451.0,722.5M451.0,722.5l8.6,-1.7M450.1,725.6l4.3,-0.9M445.3,769.4L451.2,750.1M451.2,750.1l8.6,-1.7M450.3,753.1l8.6,-1.7M445.3,796.9L449.5,777.1M449.5,777.1l8.5,-2.4M448.8,780.2l8.5,-2.4M445.3,824.4L448.9,804.5M448.9,804.5l8.4,-2.7M448.3,807.6l8.4,-2.7M445.3,851.9L448.8,832.0M448.8,832.0l8.4,-2.7M448.3,835.1l8.4,-2.7M445.3,879.4L448.8,859.5M448.8,859.5l8.4,-2.7M448.3,862.6l8.4,-2.7M445.3,906.9L449.2,887.1M449.2,887.1l8.4,-2.6M448.6,890.2l8.4,-2.6M473.1,26.9L483.0,9.3M483.0,9.3l8.8,0.2M473.1,54.4L483.1,36.9M483.1,36.9l8.8,0.3M473.1,81.9L483.2,64.4M483.2,64.4l8.8,0.3M473.1,109.4L483.2,91.9M483.2,91.9l8.8,0.3M473.1,136.9L483.2,119.4M483.2,119.4l8.8,0.3M473.1,164.4L483.1,146.9M483.1,146.9l8.8,0.3M473.1,191.9L482.8,174.2M482.8,174.2l8.8,0.1M473.1,219.4L481.9,201.2M481.9,201.2l8.8,-0.3M473.1,246.9L481.4,228.5M481.4,228.5l8.8,-0.6M473.1,274.4L481.3,256.0M481.3,256.0l8.8,-0.6M473.1,301.9L481.3,283.4M481.3,283.4l8.8,-0.6M473.1,329.4L481.3,310.9M481.3,310.9l8.8,-0.6M473.1,356.9L481.1,338.3M481.1,338.3l8.8,-0.7M479.8,341.2l4.4,-0.4M473.1,384.4L480.8,365.7M480.8,365.7l8.8,-0.8M479.6,368.6l4.4,-0.4M473.1,411.9L480.9,393.3M480.9,393.3l8.8,-0.8M479.7,396.2l4.4,-0.4M473.1,439.4L481.0,420.8M481.0,420.8l8.8,-0.8M479.7,423.7l4.4,-0.4M473.1,466.9L481.1,448.3M481.1,448.3l8.8,-0.7M479.8,451.2l4.4,-0.4M473.1,494.4L482.7,476.6M482.7,476.6l8.8,0.1M481.2,479.4l4.4,0.0M473.1,521.9L486.4,506.7M486.4,506.7l8.6,2.0M484.3,509.1l8.6,2.0M482.3,511.4l4.3,1.0M473.1,549.4L487.1,534.8M487.1,534.8l8.5,2.4M484.9,537.1l8.5,2.4M482.7,539.3l4.2,1.2M473.1,576.9L484.9,560.5M484.9,560.5l8.7,1.2M483.0,563.0l8.7,1.2M473.1,604.4L482.2,586.4M482.2,586.4l8.8,-0.2M480.8,589.2l8.8,-0.2M473.1,631.9L482.1,613.8M482.1,613.8l8.8,-0.2M480.7,616.6l8.8,-0.2M473.1,659.4L481.9,641.2M481.9,641.2l8.8,-0.3M480.5,644.0l8.8,-0.3M473.1,686.9L481.0,668.3M481.0,668.3l8.8,-0.8M479.8,671.2l8.8,-0.8M473.1,714.4L481.3,695.9M481.3,695.9l8.8,-0.6M480.0,698.8l8.8,-0.6M473.1,741.9L482.4,724.0M482.4,724.0l8.8,-0.1M480.9,726.7l8.8,-0.1M473.1,769.4L481.2,750.9M481.2,750.9l8.8,-0.7M480.0,753.8l8.8,-0.7M473.1,796.9L477.5,777.2M477.5,777.2l8.5,-2.3M476.8,780.3l8.5,-2.3M473.1,824.4L476.7,804.5M476.7,804.5l8.4,-2.7M476.1,807.6l8.4,-2.7M473.1,851.9L476.7,832.0M476.7,832.0l8.4,-2.7M476.1,835.1l8.4,-2.7M473.1,879.4L476.8,859.5M476.8,859.5l8.4,-2.6M476.3,862.6l8.4,-2.6M473.1,906.9L477.5,887.2M477.5,887.2l8.5,-2.3M476.8,890.3l8.5,-2.3M500.9,26.9L511.4,9.6M511.4,9.6l8.8,0.5M500.9,54.4L511.4,37.1M511.4,37.1l8.8,0.5M500.9,81.9L511.3,64.6M511.3,64.6l8.8,0.4M500.9,109.4L511.2,92.0M511.2,92.0l8.8,0.4M500.9,136.9L511.1,119.5M511.1,119.5l8.8,0.4M500.9,164.4L511.0,146.9M511.0,146.9l8.8,0.3M500.9,191.9L510.6,174.1M510.6,174.1l8.8,0.1M500.9,219.4L509.8,201.2M509.8,201.2l8.8,-0.3M500.9,246.9L509.3,228.5M509.3,228.5l8.8,-0.6M500.9,274.4L509.2,256.0M509.2,256.0l8.8,-0.6M500.9,301.9L509.2,283.4M509.2,283.4l8.8,-0.6M500.9,329.4L509.2,310.9M509.2,310.9l8.8,-0.6M500.9,356.9L509.1,338.4M509.1,338.4l8.8,-0.6M507.9,341.3l4.4,-0.3M500.9,384.4L509.1,365.9M509.1,365.9l8.8,-0.6M507.8,368.8l4.4,-0.3M500.9,411.9L509.2,393.5M509.2,393.5l8.8,-0.6M507.9,396.3l4.4,-0.3M500.9,439.4L509.4,421.1M509.4,421.1l8.8,-0.5M508.1,423.9l4.4,-0.3M500.9,466.9L510.0,448.8M510.0,448.8l8.8,-0.2M508.6,451.7l4.4,-0.1M500.9,494.4L512.0,477.5M512.0,477.5l8.8,0.8M510.3,480.2l8.8,0.8M500.9,521.9L514.7,507.1M514.7,507.1l8.5,2.2M512.5,509.4l8.5,2.2M510.4,511.7l4.3,1.1M500.9,549.4L515.1,535.0M515.1,535.0l8.4,2.5M512.9,537.2l8.4,2.5M510.7,539.5l4.2,1.2M500.9,576.9L511.8,559.9M511.8,559.9l8.8,0.7M510.1,562.5l8.8,0.7M500.9,604.4L509.6,586.1M509.6,586.1l8.8,-0.4M508.2,589.0l8.8,-0.4M500.9,631.9L510.0,613.9M510.0,613.9l8.8,-0.2M508.6,616.7l8.8,-0.2M500.9,659.4L512.1,642.6M512.1,642.6l8.8,0.8M510.4,645.2l8.8,0.8M500.9,686.9L513.6,671.1M513.6,671.1l8.6,1.6M511.6,673.6l8.6,1.6M500.9,714.4L513.2,698.4M513.2,698.4l8.7,1.5M511.3,700.9l8.7,1.5M500.9,741.9L512.5,725.3M512.5,725.3l8.7,1.1M510.7,727.9l8.7,1.1M500.9,769.4L512.1,752.5M512.1,752.5l8.8,0.8M510.3,755.2l8.8,0.8M500.9,796.9L508.6,778.2M508.6,778.2l8.8,-0.9M507.4,781.1l8.8,-0.9M500.9,824.4L505.3,804.7M505.3,804.7l8.5,-2.3M504.6,807.8l8.5,-2.3M500.9,851.9L505.4,832.2M505.4,832.2l8.5,-2.3M504.7,835.3l8.5,-2.3M500.9,879.4L506.4,860.0M506.4,860.0l8.6,-1.9M505.6,863.0l8.6,-1.9M500.9,906.9L508.1,888.0M508.1,888.0l8.7,-1.1M506.9,890.9l8.7,-1.1M528.8,26.9L539.8,10.0M539.8,10.0l8.8,0.8M528.8,54.4L540.0,37.6M540.0,37.6l8.8,0.9M528.8,81.9L540.2,65.2M540.2,65.2l8.7,1.0M528.8,109.4L540.1,92.6M540.1,92.6l8.8,0.9M528.8,136.9L539.8,120.0M539.8,120.0l8.8,0.8M528.8,164.4L539.4,147.2M539.4,147.2l8.8,0.6M528.8,191.9L538.7,174.3M538.7,174.3l8.8,0.2M528.8,219.4L537.8,201.3M537.8,201.3l8.8,-0.2M528.8,246.9L537.2,228.6M537.2,228.6l8.8,-0.5M528.8,274.4L537.0,256.0M537.0,256.0l8.8,-0.6M528.8,301.9L537.0,283.5M537.0,283.5l8.8,-0.6M528.8,329.4L537.0,311.0M537.0,311.0l8.8,-0.6M528.8,356.9L537.1,338.5M537.1,338.5l8.8,-0.6M535.8,341.4l4.4,-0.3M528.8,384.4L537.2,366.0M537.2,366.0l8.8,-0.5M535.9,368.9l4.4,-0.3M528.8,411.9L537.2,393.6M537.2,393.6l8.8,-0.5M535.9,396.4l4.4,-0.2M528.8,439.4L537.2,421.1M537.2,421.1l8.8,-0.5M535.9,423.9l4.4,-0.2M528.8,466.9L537.1,448.5M537.1,448.5l8.8,-0.6M535.8,451.4l4.4,-0.3M528.8,494.4L537.2,476.0M537.2,476.0l8.8,-0.5M535.9,478.9l8.8,-0.5M528.8,521.9L539.4,504.8M539.4,504.8l8.8,0.6M537.8,507.4l8.8,0.6M528.8,549.4L541.6,533.8M541.6,533.8l8.6,1.7M539.6,536.2l8.6,1.7M537.6,538.7l4.3,0.9M528.8,576.9L539.5,559.8M539.5,559.8l8.8,0.6M537.8,562.5l8.8,0.6M528.8,604.4L538.0,586.4M538.0,586.4l8.8,-0.1M536.6,589.2l8.8,-0.1M528.8,631.9L539.4,614.7M539.4,614.7l8.8,0.6M537.7,617.4l8.8,0.6M528.8,659.4L542.6,644.7M542.6,644.7l8.5,2.3M540.5,647.0l8.5,2.3M528.8,686.9L543.7,673.3M543.7,673.3l8.3,3.0M541.4,675.4l8.3,3.0M528.8,714.4L543.1,700.2M543.1,700.2l8.4,2.6M540.9,702.4l8.4,2.6M528.8,741.9L540.6,725.5M540.6,725.5l8.7,1.2M538.7,728.1l8.7,1.2M528.8,769.4L540.4,752.9M540.4,752.9l8.7,1.1M538.6,755.4l8.7,1.1M528.8,796.9L539.7,779.9M539.7,779.9l8.8,0.8M538.0,782.6l8.8,0.8M528.8,824.4L537.6,806.3M537.6,806.3l8.8,-0.3M536.3,809.1l8.8,-0.3M528.8,851.9L539.0,834.5M539.0,834.5l8.8,0.4M537.4,837.2l8.8,0.4M528.8,879.4L541.7,863.9M541.7,863.9l8.6,1.8M539.7,866.3l8.6,1.8M528.8,906.9L542.1,891.7M542.1,891.7l8.6,2.0M540.0,894.1l8.6,2.0M556.6,26.9L567.9,10.2M567.9,10.2l8.8,0.9M556.6,54.4L568.4,38.0M568.4,38.0l8.7,1.2M556.6,81.9L568.8,65.8M568.8,65.8l8.7,1.4M556.6,109.4L568.8,93.3M568.8,93.3l8.7,1.4M556.6,136.9L568.6,120.7M568.6,120.7l8.7,1.3M556.6,164.4L568.0,147.7M568.0,147.7l8.7,1.0M556.6,191.9L567.1,174.6M567.1,174.6l8.8,0.5M556.6,219.4L566.1,201.6M566.1,201.6l8.8,0.0M556.6,246.9L565.5,228.7M565.5,228.7l8.8,-0.3M556.6,274.4L565.2,256.1M565.2,256.1l8.8,-0.5M556.6,301.9L565.1,283.6M565.1,283.6l8.8,-0.5M556.6,329.4L565.1,311.1M565.1,311.1l8.8,-0.5M556.6,356.9L565.1,338.6M565.1,338.6l8.8,-0.5M563.8,341.4l4.4,-0.2M556.6,384.4L565.1,366.1M565.1,366.1l8.8,-0.5M563.8,368.9l4.4,-0.2M556.6,411.9L565.1,393.6M565.1,393.6l8.8,-0.5M563.7,396.4l4.4,-0.3M556.6,439.4L564.8,420.9M564.8,420.9l8.8,-0.6M563.5,423.8l4.4,-0.3M556.6,466.9L564.4,448.3M564.4,448.3l8.8,-0.8M563.2,451.2l4.4,-0.4M556.6,494.4L564.2,475.7M564.2,475.7l8.8,-0.9M563.0,478.6l4.4,-0.4M556.6,521.9L564.5,503.3M564.5,503.3l8.8,-0.8M563.3,506.2l4.4,-0.4M556.6,549.4L566.6,531.8M566.6,531.8l8.8,0.2M565.0,534.6l8.8,0.2M556.6,576.9L567.5,559.9M567.5,559.9l8.8,0.7M565.8,562.6l8.8,0.7M556.6,604.4L568.4,588.0M568.4,588.0l8.7,1.2M566.6,590.6l8.7,1.2M556.6,631.9L571.0,617.7M571.0,617.7l8.4,2.6M568.7,619.9l8.4,2.6M566.5,622.1l4.2,1.3M556.6,659.4L572.1,646.4M572.1,646.4l8.2,3.3M569.7,648.4l8.2,3.3M567.2,650.5l4.1,1.6M556.6,686.9L572.0,673.9M572.0,673.9l8.2,3.3M569.6,675.9l8.2,3.3M556.6,714.4L571.9,701.2M571.9,701.2l8.2,3.2M569.5,703.3l8.2,3.2M556.6,741.9L569.7,726.5M569.7,726.5l8.6,1.9M567.6,728.9l8.6,1.9M556.6,769.4L568.6,753.2M568.6,753.2l8.7,1.3M566.8,755.7l8.7,1.3M556.6,796.9L568.6,780.6M568.6,780.6l8.7,1.3M566.7,783.2l8.7,1.3M556.6,824.4L569.2,808.6M569.2,808.6l8.7,1.6M567.2,811.1l8.7,1.6M556.6,851.9L572.0,838.8M572.0,838.8l8.2,3.3M569.6,840.9l8.2,3.3M556.6,879.4L572.9,867.4M572.9,867.4l7.9,3.8M570.3,869.3l7.9,3.8M556.6,906.9L572.6,894.6M572.6,894.6l8.0,3.6M570.1,896.5l8.0,3.6M584.4,26.9L595.5,10.0M595.5,10.0l8.8,0.8M584.4,54.4L596.3,38.0M596.3,38.0l8.7,1.2M584.4,81.9L596.8,65.9M596.8,65.9l8.7,1.5M584.4,109.4L596.8,93.5M596.8,93.5l8.7,1.5M584.4,136.9L596.7,120.9M596.7,120.9l8.7,1.5M584.4,164.4L596.3,148.1M596.3,148.1l8.7,1.2M584.4,191.9L595.4,175.0M595.4,175.0l8.8,0.8M584.4,219.4L594.5,201.9M594.5,201.9l8.8,0.3M584.4,246.9L593.8,229.0M593.8,229.0l8.8,-0.0M584.4,274.4L593.6,256.4M593.6,256.4l8.8,-0.1M584.4,301.9L593.6,283.9M593.6,283.9l8.8,-0.2M584.4,329.4L593.4,311.3M593.4,311.3l8.8,-0.2M592.0,314.1l4.4,-0.1M584.4,356.9L593.2,338.7M593.2,338.7l8.8,-0.3M591.8,341.5l4.4,-0.2M584.4,384.4L593.0,366.1M593.0,366.1l8.8,-0.5M591.6,368.9l4.4,-0.2M584.4,411.9L592.8,393.5M592.8,393.5l8.8,-0.5M591.5,396.4l4.4,-0.3M584.4,439.4L592.6,420.9M592.6,420.9l8.8,-0.6M591.3,423.8l4.4,-0.3M584.4,466.9L592.3,448.3M592.3,448.3l8.8,-0.8M591.1,451.2l4.4,-0.4M584.4,494.4L592.1,475.7M592.1,475.7l8.8,-0.9M590.9,478.6l4.4,-0.4M584.4,521.9L592.3,503.3M592.3,503.3l8.8,-0.8M591.1,506.2l4.4,-0.4M584.4,549.4L593.4,531.3M593.4,531.3l8.8,-0.2M592.0,534.1l8.8,-0.2M584.4,576.9L595.3,559.9M595.3,559.9l8.8,0.7M593.6,562.5l8.8,0.7M584.4,604.4L598.2,589.6M598.2,589.6l8.5,2.3M596.1,591.9l8.5,2.3M593.9,594.2l4.2,1.1M584.4,631.9L600.5,619.6M600.5,619.6l8.0,3.6M598.0,621.5l8.0,3.6M595.5,623.4l4.0,1.8M584.4,659.4L600.8,647.6M600.8,647.6l7.9,3.9M598.3,649.5l7.9,3.9M595.7,651.3l3.9,2.0M584.4,686.9L600.2,674.3M600.2,674.3l8.1,3.5M597.7,676.3l8.1,3.5M595.3,678.2l4.0,1.7M584.4,714.4L599.7,701.2M599.7,701.2l8.2,3.2M597.3,703.2l8.2,3.2M584.4,741.9L599.4,728.3M599.4,728.3l8.3,3.0M597.0,730.4l8.3,3.0M584.4,769.4L599.3,755.7M599.3,755.7l8.3,2.9M596.9,757.8l8.3,2.9M584.4,796.9L597.9,781.8M597.9,781.8l8.5,2.1M595.8,784.2l8.5,2.1M584.4,824.4L597.5,809.0M597.5,809.0l8.6,1.9M595.4,811.4l8.6,1.9M584.4,851.9L600.2,839.3M600.2,839.3l8.1,3.5M597.8,841.3l8.1,3.5M584.4,879.4L600.9,867.7M600.9,867.7l7.9,3.9M598.3,869.5l7.9,3.9M584.4,906.9L600.6,894.9M600.6,894.9l8.0,3.8M598.1,896.7l8.0,3.8M612.3,26.9L623.0,9.8M623.0,9.8l8.8,0.6M612.3,54.4L623.5,37.6M623.5,37.6l8.8,0.9M612.3,81.9L624.6,65.9M624.6,65.9l8.7,1.5M612.3,109.4L624.7,93.5M624.7,93.5l8.7,1.5M612.3,136.9L624.6,120.9M624.6,120.9l8.7,1.5M612.3,164.4L624.4,148.2M624.4,148.2l8.7,1.3M612.3,191.9L623.7,175.2M623.7,175.2l8.7,1.0M612.3,219.4L622.6,202.1M622.6,202.1l8.8,0.4M612.3,246.9L621.9,229.2M621.9,229.2l8.8,0.1M612.3,274.4L621.7,256.6M621.7,256.6l8.8,-0.0M612.3,301.9L621.7,284.0M621.7,284.0l8.8,-0.0M612.3,329.4L621.6,311.5M621.6,311.5l8.8,-0.1M612.3,356.9L621.2,338.8M621.2,338.8l8.8,-0.3M619.8,341.6l4.4,-0.1M612.3,384.4L620.7,366.0M620.7,366.0l8.8,-0.5M619.4,368.9l4.4,-0.3M612.3,411.9L620.5,393.5M620.5,393.5l8.8,-0.6M612.3,439.4L620.5,421.0M620.5,421.0l8.8,-0.6M619.2,423.8l4.4,-0.3M612.3,466.9L620.3,448.4M620.3,448.4l8.8,-0.7M619.0,451.3l4.4,-0.3M612.3,494.4L620.1,475.8M620.1,475.8l8.8,-0.8M618.9,478.7l8.8,-0.8M612.3,521.9L620.1,503.3M620.1,503.3l8.8,-0.8M618.9,506.2l8.8,-0.8M612.3,549.4L620.5,531.0M620.5,531.0l8.8,-0.6M619.2,533.8l8.8,-0.6M612.3,576.9L621.9,559.2M621.9,559.2l8.8,0.1M620.4,561.9l8.8,0.1M612.3,604.4L625.1,588.8M625.1,588.8l8.6,1.7M623.1,591.2l8.6,1.7M621.1,593.6l4.3,0.9M612.3,631.9L628.2,619.4M628.2,619.4l8.0,3.6M625.7,621.4l8.0,3.6M623.2,623.3l4.0,1.8M612.3,659.4L628.7,647.7M628.7,647.7l7.9,3.9M626.1,649.5l7.9,3.9M623.6,651.3l3.9,2.0M612.3,686.9L628.1,674.4M628.1,674.4l8.0,3.6M625.7,676.4l8.0,3.6M623.2,678.3l4.0,1.8M612.3,714.4L627.0,700.6M627.0,700.6l8.3,2.8M624.7,702.7l8.3,2.8M622.4,704.9l4.2,1.4M612.3,741.9L628.0,729.3M628.0,729.3l8.1,3.5M625.6,731.3l8.1,3.5M612.3,769.4L628.3,757.1M628.3,757.1l8.0,3.6M625.8,759.0l8.0,3.6M612.3,796.9L625.4,781.5M625.4,781.5l8.6,1.9M623.3,783.9l8.6,1.9M612.3,824.4L622.2,806.8M622.2,806.8l8.8,0.2M620.7,809.6l8.8,0.2M612.3,851.9L623.3,835.0M623.3,835.0l8.8,0.8M621.6,837.6l8.8,0.8M612.3,879.4L626.4,865.0M626.4,865.0l8.4,2.5M624.2,867.2l8.4,2.5M612.3,906.9L626.5,892.6M626.5,892.6l8.4,2.6M624.3,894.8l8.4,2.6M640.1,26.9L650.8,9.8M650.8,9.8l8.8,0.6M640.1,54.4L650.9,37.3M650.9,37.3l8.8,0.7M640.1,81.9L651.9,65.5M651.9,65.5l8.7,1.2M640.1,109.4L652.4,93.4M652.4,93.4l8.7,1.5M640.1,136.9L652.6,121.0M652.6,121.0l8.7,1.6M640.1,164.4L652.7,148.6M652.7,148.6l8.6,1.6M640.1,191.9L652.2,175.7M652.2,175.7l8.7,1.4M640.1,219.4L650.9,202.3M650.9,202.3l8.8,0.7M640.1,246.9L649.8,229.2M649.8,229.2l8.8,0.1M640.1,274.4L649.6,256.6M649.6,256.6l8.8,0.0M640.1,301.9L649.6,284.1M649.6,284.1l8.8,-0.0M640.1,329.4L649.5,311.5M649.5,311.5l8.8,-0.0M640.1,356.9L649.0,338.8M649.0,338.8l8.8,-0.3M640.1,384.4L648.4,366.0M648.4,366.0l8.8,-0.6M640.1,411.9L648.3,393.4M648.3,393.4l8.8,-0.6M640.1,439.4L648.3,420.9M648.3,420.9l8.8,-0.6M640.1,466.9L648.1,448.4M648.1,448.4l8.8,-0.7M646.9,451.3l4.4,-0.4M640.1,494.4L647.7,475.7M647.7,475.7l8.8,-0.9M646.5,478.6l8.8,-0.9M640.1,521.9L647.7,503.2M647.7,503.2l8.8,-0.9M646.5,506.1l8.8,-0.9M640.1,549.4L647.8,530.7M647.8,530.7l8.8,-0.9M646.6,533.6l8.8,-0.9M640.1,576.9L648.0,558.3M648.0,558.3l8.8,-0.8M646.8,561.2l8.8,-0.8M640.1,604.4L648.7,586.1M648.7,586.1l8.8,-0.4M647.4,589.0l8.8,-0.4M640.1,631.9L652.4,615.9M652.4,615.9l8.7,1.4M650.5,618.4l8.7,1.4M648.5,620.9l4.3,0.7M640.1,659.4L654.4,645.2M654.4,645.2l8.4,2.6M652.2,647.4l8.4,2.6M649.9,649.6l4.2,1.3M640.1,686.9L652.7,671.1M652.7,671.1l8.7,1.6M650.7,673.6l8.7,1.6M648.7,676.0l4.3,0.8M640.1,714.4L653.1,698.9M653.1,698.9l8.6,1.8M651.0,701.3l8.6,1.8M649.0,703.7l4.3,0.9M640.1,741.9L654.3,727.5M654.3,727.5l8.4,2.5M652.1,729.8l8.4,2.5M649.9,732.0l4.2,1.3M640.1,769.4L652.1,753.1M652.1,753.1l8.7,1.3M650.2,755.7l8.7,1.3M648.3,758.2l4.4,0.6M640.1,796.9L647.2,778.0M647.2,778.0l8.7,-1.1M646.1,780.9l8.7,-1.1M645.0,783.9l4.4,-0.6M640.1,824.4L645.7,805.0M645.7,805.0l8.6,-1.8M644.9,808.0l8.6,-1.8M640.1,851.9L643.5,832.0M643.5,832.0l8.4,-2.8M643.0,835.1l8.4,-2.8M640.1,879.4L644.0,859.6M644.0,859.6l8.4,-2.5M643.4,862.7l8.4,-2.5M640.1,906.9L646.8,887.8M646.8,887.8l8.7,-1.3M645.7,890.8l8.7,-1.3M667.9,26.9L678.7,9.8M678.7,9.8l8.8,0.6M667.9,54.4L678.8,37.4M678.8,37.4l8.8,0.7M667.9,81.9L679.5,65.3M679.5,65.3l8.7,1.1M667.9,109.4L680.4,93.5M680.4,93.5l8.7,1.5M667.9,136.9L681.1,121.6M681.1,121.6l8.6,1.9M667.9,164.4L681.2,149.2M681.2,149.2l8.6,2.0M667.9,191.9L680.8,176.4M680.8,176.4l8.6,1.8M667.9,219.4L679.2,202.7M679.2,202.7l8.8,0.9M667.9,246.9L677.7,229.3M677.7,229.3l8.8,0.2M667.9,274.4L677.4,256.6M677.4,256.6l8.8,0.0M667.9,301.9L677.4,284.1M677.4,284.1l8.8,-0.0M667.9,329.4L677.3,311.5M677.3,311.5l8.8,-0.0M667.9,356.9L676.8,338.8M676.8,338.8l8.8,-0.3M667.9,384.4L676.3,366.0M676.3,366.0l8.8,-0.6M667.9,411.9L676.1,393.5M676.1,393.5l8.8,-0.6M667.9,439.4L676.1,421.0M676.1,421.0l8.8,-0.6M667.9,466.9L676.0,448.4M676.0,448.4l8.8,-0.7M674.7,451.3l4.4,-0.3M667.9,494.4L675.6,475.7M675.6,475.7l8.8,-0.9M674.4,478.6l8.8,-0.9M667.9,521.9L675.5,503.2M675.5,503.2l8.8,-0.9M674.3,506.1l8.8,-0.9M667.9,549.4L675.3,530.6M675.3,530.6l8.7,-1.0M674.1,533.5l8.7,-1.0M667.9,576.9L675.0,558.0M675.0,558.0l8.7,-1.1M673.9,560.9l8.7,-1.1M667.9,604.4L674.9,585.5M674.9,585.5l8.7,-1.2M673.8,588.4l8.7,-1.2M667.9,631.9L675.9,613.3M675.9,613.3l8.8,-0.7M674.6,616.2l8.8,-0.7M667.9,659.4L676.5,641.1M676.5,641.1l8.8,-0.4M675.2,644.0l8.8,-0.4M673.8,646.8l4.4,-0.2M667.9,686.9L674.3,667.7M674.3,667.7l8.7,-1.5M673.3,670.7l8.7,-1.5M672.3,673.7l4.3,-0.7M667.9,714.4L675.8,695.8M675.8,695.8l8.8,-0.8M674.6,698.7l8.8,-0.8M673.4,701.6l4.4,-0.4M667.9,741.9L680.6,726.2M680.6,726.2l8.6,1.7M678.6,728.6l8.6,1.7M676.6,731.1l4.3,0.8M667.9,769.4L674.2,750.2M674.2,750.2l8.7,-1.5M673.2,753.2l8.7,-1.5M672.3,756.2l4.3,-0.8M667.9,796.9L672.4,777.2M672.4,777.2l8.5,-2.3M671.7,780.3l8.5,-2.3M671.0,783.3l4.2,-1.2M667.9,824.4L672.0,804.6M672.0,804.6l8.4,-2.5M671.3,807.7l8.4,-2.5M667.9,851.9L670.8,831.9M670.8,831.9l8.3,-3.0M670.4,835.0l8.3,-3.0M667.9,879.4L670.9,859.4M670.9,859.4l8.3,-2.9M670.4,862.5l8.3,-2.9M667.9,906.9L672.0,887.1M672.0,887.1l8.4,-2.5M671.3,890.2l8.4,-2.5M695.8,26.9L706.7,9.9M706.7,9.9l8.8,0.7M695.8,54.4L707.0,37.6M707.0,37.6l8.8,0.9M695.8,81.9L707.6,65.5M707.6,65.5l8.7,1.2M695.8,109.4L708.3,93.5M708.3,93.5l8.7,1.6M695.8,136.9L709.1,121.8M709.1,121.8l8.6,2.0M695.8,164.4L709.2,149.4M709.2,149.4l8.5,2.1M695.8,191.9L708.9,176.6M708.9,176.6l8.6,1.9M695.8,219.4L707.0,202.6M707.0,202.6l8.8,0.9M695.8,246.9L705.6,229.3M705.6,229.3l8.8,0.2M695.8,274.4L705.3,256.6M705.3,256.6l8.8,0.0M695.8,301.9L705.1,284.0M705.1,284.0l8.8,-0.1M695.8,329.4L704.9,311.4M704.9,311.4l8.8,-0.2M695.8,356.9L704.6,338.7M704.6,338.7l8.8,-0.3M695.8,384.4L704.3,366.1M704.3,366.1l8.8,-0.5M703.0,368.9l4.4,-0.2M695.8,411.9L704.1,393.5M704.1,393.5l8.8,-0.6M702.8,396.4l4.4,-0.3M695.8,439.4L704.0,421.0M704.0,421.0l8.8,-0.6M702.7,423.8l4.4,-0.3M695.8,466.9L703.9,448.4M703.9,448.4l8.8,-0.6M702.7,451.3l4.4,-0.3M695.8,494.4L703.6,475.8M703.6,475.8l8.8,-0.8M702.4,478.7l8.8,-0.8M695.8,521.9L703.1,503.1M703.1,503.1l8.7,-1.0M702.0,506.0l8.7,-1.0M695.8,549.4L702.7,530.4M702.7,530.4l8.7,-1.2M701.6,533.4l8.7,-1.2M695.8,576.9L702.8,558.0M702.8,558.0l8.7,-1.2M701.7,560.9l8.7,-1.2M695.8,604.4L702.8,585.5M702.8,585.5l8.7,-1.1M701.7,588.4l8.7,-1.1M695.8,631.9L703.7,613.3M703.7,613.3l8.8,-0.7M702.5,616.2l8.8,-0.7M701.2,619.1l4.4,-0.4M695.8,659.4L703.3,640.7M703.3,640.7l8.7,-0.9M702.1,643.6l8.7,-0.9M700.9,646.5l4.4,-0.5M695.8,686.9L701.3,667.5M701.3,667.5l8.6,-1.9M700.4,670.5l8.6,-1.9M699.5,673.5l4.3,-0.9M695.8,714.4L701.4,695.0M701.4,695.0l8.6,-1.8M700.5,698.0l8.6,-1.8M699.6,701.1l4.3,-0.9M695.8,741.9L703.7,723.3M703.7,723.3l8.8,-0.7M702.5,726.2l8.8,-0.7M695.8,769.4L700.1,749.7M700.1,749.7l8.5,-2.4M699.4,752.7l4.2,-1.2M695.8,796.9L696.2,776.7M696.2,776.7l7.9,-4.0M695.8,824.4L697.4,804.3M697.4,804.3l8.1,-3.5M695.8,851.9L698.5,831.9M698.5,831.9l8.3,-3.0M698.1,835.0l8.3,-3.0M695.8,879.4L698.8,859.4M698.8,859.4l8.3,-2.9M698.3,862.5l8.3,-2.9M695.8,906.9L699.4,887.0M699.4,887.0l8.4,-2.7M698.8,890.1l8.4,-2.7M723.6,26.9L734.7,10.1M734.7,10.1l8.8,0.8M723.6,54.4L735.2,37.9M735.2,37.9l8.7,1.1M723.6,81.9L735.4,65.5M735.4,65.5l8.7,1.2M723.6,109.4L735.6,93.1M735.6,93.1l8.7,1.3M723.6,136.9L736.5,121.4M736.5,121.4l8.6,1.8M723.6,164.4L736.9,149.2M736.9,149.2l8.6,2.0M723.6,191.9L736.2,176.1M736.2,176.1l8.7,1.6M723.6,219.4L733.7,201.9M733.7,201.9l8.8,0.3M723.6,246.9L733.1,229.1M733.1,229.1l8.8,0.0M723.6,274.4L733.0,256.6M733.0,256.6l8.8,-0.0M723.6,301.9L732.7,283.9M732.7,283.9l8.8,-0.2M723.6,329.4L732.5,311.3M732.5,311.3l8.8,-0.3M723.6,356.9L732.4,338.7M732.4,338.7l8.8,-0.3M723.6,384.4L732.3,366.2M732.3,366.2l8.8,-0.4M730.9,369.0l4.4,-0.2M723.6,411.9L731.9,393.5M731.9,393.5l8.8,-0.6M730.6,396.4l4.4,-0.3M723.6,439.4L731.8,421.0M731.8,421.0l8.8,-0.6M730.5,423.8l4.4,-0.3M723.6,466.9L731.8,448.5M731.8,448.5l8.8,-0.6M730.5,451.3l4.4,-0.3M723.6,494.4L731.8,476.0M731.8,476.0l8.8,-0.6M730.5,478.8l4.4,-0.3M723.6,521.9L731.3,503.2M731.3,503.2l8.8,-0.9M730.1,506.1l8.8,-0.9M723.6,549.4L730.8,530.5M730.8,530.5l8.7,-1.1M729.7,533.5l8.7,-1.1M723.6,576.9L731.2,558.2M731.2,558.2l8.8,-0.9M730.0,561.1l8.8,-0.9M723.6,604.4L732.9,586.5M732.9,586.5l8.8,-0.1M731.4,589.3l8.8,-0.1M730.0,592.1l4.4,-0.0M723.6,631.9L734.8,615.1M734.8,615.1l8.8,0.9M733.1,617.7l8.8,0.9M731.3,620.4l4.4,0.5M723.6,659.4L734.7,642.6M734.7,642.6l8.8,0.8M733.0,645.2l8.8,0.8M731.3,647.8l4.4,0.4M723.6,686.9L731.4,668.3M731.4,668.3l8.8,-0.8M730.2,671.2l8.8,-0.8M729.0,674.1l4.4,-0.4M723.6,714.4L730.4,695.4M730.4,695.4l8.7,-1.3M729.3,698.3l8.7,-1.3M728.2,701.3l4.4,-0.6M723.6,741.9L728.9,722.4M728.9,722.4l8.6,-1.9M728.1,725.5l4.3,-1.0M723.6,769.4L719.9,749.5M720.5,752.6l3.4,-2.7M723.6,796.9L717.4,777.7M718.4,780.7l3.1,-3.2M723.6,824.4L719.0,804.7M719.7,807.8l3.3,-2.9M723.6,851.9L721.9,831.8M721.9,831.8l7.4,-4.8M723.6,879.4L724.7,859.2M724.7,859.2l8.0,-3.7M723.6,906.9L726.2,886.9M726.2,886.9l8.2,-3.1M725.8,890.0l4.1,-1.5M751.4,26.9L762.3,9.9M762.3,9.9l8.8,0.7M751.4,54.4L763.0,37.9M763.0,37.9l8.7,1.1M751.4,81.9L763.3,65.5M763.3,65.5l8.7,1.2M751.4,109.4L763.3,93.1M763.3,93.1l8.7,1.2M751.4,136.9L763.5,120.7M763.5,120.7l8.7,1.3M751.4,164.4L763.8,148.4M763.8,148.4l8.7,1.5M751.4,191.9L763.0,175.4M763.0,175.4l8.7,1.1M751.4,219.4L761.2,201.7M761.2,201.7l8.8,0.2M751.4,246.9L760.9,229.1M760.9,229.1l8.8,0.0M751.4,274.4L760.9,256.6M760.9,256.6l8.8,-0.0M751.4,301.9L760.4,283.8M760.4,283.8l8.8,-0.2M751.4,329.4L760.2,311.2M760.2,311.2l8.8,-0.3M751.4,356.9L760.3,338.7M760.3,338.7l8.8,-0.3M751.4,384.4L760.1,366.2M760.1,366.2l8.8,-0.4M751.4,411.9L759.7,393.5M759.7,393.5l8.8,-0.6M758.4,396.4l4.4,-0.3M751.4,439.4L759.6,420.9M759.6,420.9l8.8,-0.6M758.3,423.8l4.4,-0.3M751.4,466.9L759.6,448.5M759.6,448.5l8.8,-0.6M758.4,451.3l4.4,-0.3M751.4,494.4L759.9,476.1M759.9,476.1l8.8,-0.5M758.6,478.9l4.4,-0.2M751.4,521.9L760.4,503.8M760.4,503.8l8.8,-0.2M759.0,506.6l8.8,-0.2M751.4,549.4L760.8,531.5M760.8,531.5l8.8,-0.0M759.4,534.3l8.8,-0.0M751.4,576.9L762.6,560.1M762.6,560.1l8.8,0.9M760.9,562.7l8.8,0.9M759.1,565.3l4.4,0.4M751.4,604.4L764.2,588.8M764.2,588.8l8.6,1.7M762.2,591.2l8.6,1.7M760.2,593.7l8.6,1.7M751.4,631.9L765.1,617.0M765.1,617.0l8.5,2.2M762.9,619.3l8.5,2.2M760.8,621.7l8.5,2.2M751.4,659.4L766.2,645.7M766.2,645.7l8.3,2.9M763.9,647.8l8.3,2.9M761.6,650.0l8.3,2.9M759.3,652.1l4.2,1.4M751.4,686.9L765.5,672.4M765.5,672.4l8.4,2.5M763.3,674.7l8.4,2.5M761.1,676.9l8.4,2.5M751.4,714.4L762.5,697.5M762.5,697.5l8.8,0.8M760.7,700.1l8.8,0.8M751.4,741.9L756.6,722.4M756.6,722.4l8.6,-2.0M751.4,769.4L748.1,749.5M748.6,752.6l3.5,-2.7M751.4,796.9L745.1,777.7M746.1,780.7l3.0,-3.2M751.4,824.4L743.8,805.7M745.0,808.6l2.8,-3.4M751.4,851.9L744.9,832.8M745.9,835.8l3.0,-3.2M751.4,879.4L748.8,859.4M748.8,859.4l7.2,-5.1M751.4,906.9L752.0,886.7M752.0,886.7l7.9,-3.9M779.2,26.9L789.0,9.2M789.0,9.2l8.8,0.1M779.2,54.4L789.9,37.3M789.9,37.3l8.8,0.6M779.2,81.9L790.8,65.3M790.8,65.3l8.7,1.1M779.2,109.4L791.0,93.0M791.0,93.0l8.7,1.2M779.2,136.9L791.2,120.6M791.2,120.6l8.7,1.3M779.2,164.4L791.6,148.4M791.6,148.4l8.7,1.5M779.2,191.9L791.5,175.8M791.5,175.8l8.7,1.4M779.2,219.4L789.9,202.3M789.9,202.3l8.8,0.6M779.2,246.9L788.8,229.1M788.8,229.1l8.8,0.0M779.2,274.4L788.6,256.5M788.6,256.5l8.8,-0.1M779.2,301.9L787.9,283.6M787.9,283.6l8.8,-0.4M779.2,329.4L787.8,311.1M787.8,311.1l8.8,-0.4M779.2,356.9L787.9,338.6M787.9,338.6l8.8,-0.4M779.2,384.4L787.6,366.0M787.6,366.0l8.8,-0.6M786.3,368.9l4.4,-0.3M779.2,411.9L787.4,393.4M787.4,393.4l8.8,-0.7M786.1,396.3l4.4,-0.3M779.2,439.4L787.4,420.9M787.4,420.9l8.8,-0.6M786.2,423.8l4.4,-0.3M779.2,466.9L787.5,448.5M787.5,448.5l8.8,-0.6M786.2,451.3l4.4,-0.3M779.2,494.4L788.1,476.3M788.1,476.3l8.8,-0.3M786.7,479.1l4.4,-0.1M779.2,521.9L789.7,504.6M789.7,504.6l8.8,0.5M788.1,507.3l8.8,0.5M779.2,549.4L791.2,533.2M791.2,533.2l8.7,1.3M789.4,535.7l8.7,1.3M787.5,538.2l4.4,0.6M779.2,576.9L792.3,561.5M792.3,561.5l8.6,1.8M790.2,563.9l8.6,1.8M788.2,566.3l8.6,1.8M779.2,604.4L792.3,589.0M792.3,589.0l8.6,1.9M790.3,591.4l8.6,1.9M788.3,593.8l8.6,1.9M779.2,631.9L792.8,616.9M792.8,616.9l8.5,2.1M790.7,619.2l8.5,2.1M788.5,621.6l8.5,2.1M779.2,659.4L794.6,646.3M794.6,646.3l8.2,3.2M792.2,648.3l8.2,3.2M789.8,650.4l8.2,3.2M787.4,652.4l4.1,1.6M779.2,686.9L794.4,673.6M794.4,673.6l8.2,3.1M792.1,675.7l8.2,3.1M789.7,677.7l8.2,3.1M787.3,679.8l4.1,1.6M779.2,714.4L792.6,699.2M792.6,699.2l8.6,2.0M790.5,701.6l8.6,2.0M788.4,704.0l4.3,1.0M779.2,741.9L784.1,722.3M784.1,722.3l8.5,-2.2M779.2,769.4L774.7,749.7M775.4,752.8l3.3,-2.9M779.2,796.9L773.7,777.5M774.6,780.5l3.2,-3.1M779.2,824.4L772.4,805.4M773.5,808.4l3.0,-3.3M779.2,851.9L773.8,832.4M774.7,835.5l3.2,-3.0M779.2,879.4L775.1,859.6M775.1,859.6l6.8,-5.6M779.2,906.9L778.7,886.7M778.7,886.7l7.7,-4.3M807.1,26.9L815.2,8.4M815.2,8.4l8.8,-0.6M814.0,11.3l4.4,-0.3M807.1,54.4L815.3,35.9M815.3,35.9l8.8,-0.6M814.0,38.8l4.4,-0.3M807.1,81.9L816.1,63.9M816.1,63.9l8.8,-0.2M814.7,66.7l4.4,-0.1M807.1,109.4L817.6,92.2M817.6,92.2l8.8,0.5M807.1,136.9L818.9,120.5M818.9,120.5l8.7,1.2M807.1,164.4L819.4,148.4M819.4,148.4l8.7,1.5M807.1,191.9L819.4,175.9M819.4,175.9l8.7,1.5M807.1,219.4L818.5,202.8M818.5,202.8l8.7,1.0M807.1,246.9L816.5,229.0M816.5,229.0l8.8,-0.0M807.1,274.4L815.3,256.0M815.3,256.0l8.8,-0.6M814.0,258.8l4.4,-0.3M807.1,301.9L814.2,283.0M814.2,283.0l8.7,-1.1M813.1,285.9l4.4,-0.6M807.1,329.4L813.4,310.2M813.4,310.2l8.7,-1.5M812.4,313.2l4.3,-0.7M807.1,356.9L813.3,337.7M813.3,337.7l8.7,-1.5M812.3,340.7l4.3,-0.8M807.1,384.4L813.8,365.4M813.8,365.4l8.7,-1.3M812.7,368.3l4.4,-0.7M807.1,411.9L814.4,393.1M814.4,393.1l8.7,-1.0M813.3,396.0l4.4,-0.5M807.1,439.4L814.5,420.6M814.5,420.6l8.7,-1.0M813.4,423.6l4.4,-0.5M807.1,466.9L814.8,448.2M814.8,448.2l8.8,-0.9M813.6,451.1l4.4,-0.4M807.1,494.4L816.0,476.3M816.0,476.3l8.8,-0.3M814.6,479.1l8.8,-0.3M807.1,521.9L818.5,505.2M818.5,505.2l8.7,1.0M816.7,507.8l8.7,1.0M814.9,510.4l4.4,0.5M807.1,549.4L820.4,534.2M820.4,534.2l8.6,2.0M818.3,536.6l8.6,2.0M816.2,538.9l8.6,2.0M807.1,576.9L821.0,562.3M821.0,562.3l8.5,2.4M818.9,564.6l8.5,2.4M816.7,566.9l8.5,2.4M807.1,604.4L821.0,589.7M821.0,589.7l8.5,2.3M818.8,592.0l8.5,2.3M816.6,594.3l8.5,2.3M807.1,631.9L821.5,617.8M821.5,617.8l8.4,2.7M819.3,620.0l8.4,2.7M817.0,622.2l8.4,2.7M814.8,624.4l4.2,1.3M807.1,659.4L822.4,646.3M822.4,646.3l8.2,3.2M820.0,648.3l8.2,3.2M817.6,650.4l8.2,3.2M815.2,652.4l4.1,1.6M807.1,686.9L822.3,673.7M822.3,673.7l8.2,3.2M820.0,675.7l8.2,3.2M817.6,677.8l8.2,3.2M815.2,679.9l4.1,1.6M807.1,714.4L820.8,699.6M820.8,699.6l8.5,2.3M818.7,701.9l8.5,2.3M816.5,704.2l4.3,1.1M807.1,741.9L811.4,722.2M811.4,722.2l8.5,-2.4M807.1,769.4L801.3,750.1M802.2,753.1l3.1,-3.1M807.1,796.9L801.3,777.6M802.2,780.6l3.1,-3.1M807.1,824.4L800.8,805.2M801.8,808.2l3.1,-3.2M807.1,851.9L802.0,832.3M802.0,832.3l6.5,-5.9M807.1,879.4L803.2,859.6M803.2,859.6l6.8,-5.5M807.1,906.9L809.1,886.8M809.1,886.8l8.1,-3.3M834.9,26.9L842.6,8.2M842.6,8.2l8.8,-0.9M841.4,11.1l4.4,-0.4M834.9,54.4L842.5,35.7M842.5,35.7l8.8,-0.9M841.3,38.6l4.4,-0.5M834.9,81.9L842.6,63.2M842.6,63.2l8.8,-0.9M841.4,66.1l4.4,-0.4M834.9,109.4L843.6,91.2M843.6,91.2l8.8,-0.4M842.2,94.0l4.4,-0.2M834.9,136.9L845.8,119.9M845.8,119.9l8.8,0.7M834.9,164.4L846.8,148.1M846.8,148.1l8.7,1.2M834.9,191.9L846.6,175.4M846.6,175.4l8.7,1.1M834.9,219.4L844.4,201.6M844.4,201.6l8.8,0.0M834.9,246.9L841.5,227.8M841.5,227.8l8.7,-1.4M840.5,230.8l4.3,-0.7M834.9,274.4L840.7,255.0M840.7,255.0l8.6,-1.7M839.8,258.1l4.3,-0.9M834.9,301.9L840.4,282.4M840.4,282.4l8.6,-1.9M839.5,285.5l4.3,-0.9M834.9,329.4L839.9,309.8M839.9,309.8l8.6,-2.1M839.1,312.9l4.3,-1.0M834.9,356.9L839.9,337.3M839.9,337.3l8.5,-2.1M839.1,340.4l4.3,-1.0M834.9,384.4L840.4,365.0M840.4,365.0l8.6,-1.9M839.5,368.0l4.3,-0.9M834.9,411.9L841.7,392.9M841.7,392.9l8.7,-1.3M840.7,395.9l4.4,-0.6M834.9,439.4L841.8,420.4M841.8,420.4l8.7,-1.2M840.8,423.4l4.4,-0.6M834.9,466.9L841.9,448.0M841.9,448.0l8.7,-1.2M840.8,450.9l4.4,-0.6M834.9,494.4L843.2,476.0M843.2,476.0l8.8,-0.6M841.9,478.8l8.8,-0.6M834.9,521.9L846.6,505.4M846.6,505.4l8.7,1.1M844.8,508.0l8.7,1.1M843.0,510.6l4.4,0.6M834.9,549.4L849.0,535.0M849.0,535.0l8.4,2.5M846.8,537.2l8.4,2.5M844.6,539.5l8.4,2.5M834.9,576.9L850.1,563.5M850.1,563.5l8.2,3.1M847.7,565.6l8.2,3.1M845.3,567.7l8.2,3.1M843.0,569.8l4.1,1.6M834.9,604.4L850.6,591.7M850.6,591.7l8.1,3.4M848.2,593.7l8.1,3.4M845.7,595.7l8.1,3.4M843.3,597.6l4.0,1.7M834.9,631.9L851.0,619.7M851.0,619.7l8.0,3.7M848.5,621.6l8.0,3.7M846.0,623.5l8.0,3.7M843.5,625.4l4.0,1.9M834.9,659.4L851.3,647.6M851.3,647.6l7.9,3.9M848.7,649.4l7.9,3.9M846.2,651.3l7.9,3.9M843.6,653.1l3.9,1.9M834.9,686.9L850.8,674.4M850.8,674.4l8.0,3.6M848.3,676.4l8.0,3.6M845.8,678.3l8.0,3.6M843.4,680.3l4.0,1.8M834.9,714.4L849.2,700.1M849.2,700.1l8.4,2.6M846.9,702.3l8.4,2.6M844.7,704.6l4.2,1.3M834.9,741.9L843.6,723.7M843.6,723.7l8.8,-0.4M842.2,726.5l4.4,-0.2M834.9,769.4L835.3,749.2M835.3,749.2l7.8,-4.0M834.9,796.9L831.8,776.9M831.8,776.9l7.1,-5.3M834.9,824.4L827.6,805.6M828.7,808.5l2.9,-3.3M834.9,851.9L831.9,831.9M831.9,831.9l7.1,-5.2M834.9,879.4L840.9,860.1M840.9,860.1l8.6,-1.6M840.0,863.1l4.3,-0.8M834.9,906.9L843.8,888.8M843.8,888.8l8.8,-0.3M842.4,891.6l8.8,-0.3M862.7,26.9L870.3,8.2M870.3,8.2l8.8,-0.9M869.1,11.1l4.4,-0.5M862.7,54.4L870.3,35.7M870.3,35.7l8.8,-0.9M869.1,38.6l4.4,-0.5M862.7,81.9L870.3,63.2M870.3,63.2l8.8,-0.9M869.1,66.1l4.4,-0.5M862.7,109.4L870.7,90.9M870.7,90.9l8.8,-0.7M869.5,93.7l4.4,-0.4M862.7,136.9L871.9,118.9M871.9,118.9l8.8,-0.1M870.5,121.7l4.4,-0.1M862.7,164.4L872.4,146.7M872.4,146.7l8.8,0.1M862.7,191.9L870.6,173.3M870.6,173.3l8.8,-0.8M869.4,176.2l4.4,-0.4M862.7,219.4L867.3,199.7M867.3,199.7l8.5,-2.3M866.6,202.8l4.2,-1.1M862.7,246.9L866.1,227.0M866.1,227.0l8.4,-2.8M865.6,230.1l4.2,-1.4M862.7,274.4L866.3,254.5M866.3,254.5l8.4,-2.7M865.8,257.6l4.2,-1.3M862.7,301.9L867.4,282.3M867.4,282.3l8.5,-2.2M866.7,285.3l4.3,-1.1M862.7,329.4L867.7,309.8M867.7,309.8l8.5,-2.1M866.9,312.9l4.3,-1.1M862.7,356.9L867.6,337.3M867.6,337.3l8.5,-2.1M866.9,340.4l4.3,-1.1M862.7,384.4L868.0,364.9M868.0,364.9l8.6,-1.9M867.2,367.9l4.3,-1.0M862.7,411.9L869.4,392.8M869.4,392.8l8.7,-1.3M868.4,395.8l4.3,-0.7M862.7,439.4L869.7,420.4M869.7,420.4l8.7,-1.2M868.6,423.4l4.4,-0.6M862.7,466.9L869.7,448.0M869.7,448.0l8.7,-1.2M868.6,450.9l4.4,-0.6M862.7,494.4L871.0,476.0M871.0,476.0l8.8,-0.6M869.7,478.8l8.8,-0.6M862.7,521.9L874.6,505.5M874.6,505.5l8.7,1.2M872.7,508.1l8.7,1.2M870.9,510.6l4.4,0.6M862.7,549.4L877.1,535.2M877.1,535.2l8.4,2.6M874.9,537.4l8.4,2.6M872.6,539.6l8.4,2.6M862.7,576.9L878.0,563.7M878.0,563.7l8.2,3.2M875.7,565.8l8.2,3.2M873.3,567.8l8.2,3.2M870.9,569.9l4.1,1.6M862.7,604.4L878.5,591.8M878.5,591.8l8.1,3.5M876.1,593.8l8.1,3.5M873.6,595.8l8.1,3.5M871.1,597.7l8.1,3.5M862.7,631.9L878.8,619.6M878.8,619.6l8.0,3.7M876.3,621.5l8.0,3.7M873.8,623.5l8.0,3.7M871.3,625.4l8.0,3.7M862.7,659.4L879.1,647.6M879.1,647.6l7.9,3.9M876.6,649.5l7.9,3.9M874.0,651.3l7.9,3.9M871.5,653.1l7.9,3.9M862.7,686.9L878.7,674.5M878.7,674.5l8.0,3.6M876.2,676.4l8.0,3.6M873.7,678.4l8.0,3.6M871.2,680.3l4.0,1.8M862.7,714.4L877.2,700.3M877.2,700.3l8.4,2.7M874.9,702.5l8.4,2.7M872.7,704.7l8.4,2.7M862.7,741.9L873.6,724.9M873.6,724.9l8.8,0.7M871.9,727.5l8.8,0.7M862.7,769.4L868.6,750.1M868.6,750.1l8.6,-1.7M867.7,753.1l4.3,-0.8M862.7,796.9L866.8,777.1M866.8,777.1l8.4,-2.5M866.2,780.2l4.2,-1.2M862.7,824.4L867.3,804.7M867.3,804.7l8.5,-2.3M866.6,807.8l4.3,-1.1M862.7,851.9L871.7,833.8M871.7,833.8l8.8,-0.2M870.3,836.6l8.8,-0.2M862.7,879.4L874.0,862.6M874.0,862.6l8.8,0.9M872.2,865.2l8.8,0.9M870.5,867.9l8.8,0.9M862.7,906.9L874.0,890.1M874.0,890.1l8.8,0.9M872.2,892.7l8.8,0.9M870.5,895.4l8.8,0.9M890.6,26.9L898.0,8.1M898.0,8.1l8.7,-1.0M896.9,11.1l4.4,-0.5M890.6,54.4L898.1,35.7M898.1,35.7l8.7,-0.9M896.9,38.6l4.4,-0.5M890.6,81.9L898.1,63.2M898.1,63.2l8.8,-0.9M896.9,66.1l4.4,-0.5M890.6,109.4L898.2,90.7M898.2,90.7l8.8,-0.9M897.0,93.6l4.4,-0.5M890.6,136.9L898.2,118.2M898.2,118.2l8.8,-0.9M897.0,121.1l4.4,-0.4M890.6,164.4L897.4,145.4M897.4,145.4l8.7,-1.3M896.3,148.3l4.4,-0.6M890.6,191.9L895.1,172.2M895.1,172.2l8.5,-2.3M894.4,175.3l4.2,-1.1M890.6,219.4L893.6,199.4M893.6,199.4l8.3,-2.9M893.1,202.5l4.2,-1.5M890.6,246.9L893.4,226.9M893.4,226.9l8.3,-3.0M893.0,230.0l4.1,-1.5M890.6,274.4L893.5,254.4M893.5,254.4l8.3,-3.0M893.0,257.5l4.1,-1.5M890.6,301.9L894.4,282.1M894.4,282.1l8.4,-2.6M893.8,285.2l4.2,-1.3M890.6,329.4L895.4,309.8M895.4,309.8l8.5,-2.2M894.6,312.8l4.3,-1.1M890.6,356.9L895.5,337.3M895.5,337.3l8.5,-2.1M894.7,340.4l4.3,-1.1M890.6,384.4L895.6,364.8M895.6,364.8l8.6,-2.0M894.8,367.9l4.3,-1.0M890.6,411.9L896.4,392.6M896.4,392.6l8.6,-1.7M895.5,395.6l4.3,-0.9M890.6,439.4L897.3,420.4M897.3,420.4l8.7,-1.3M896.3,423.3l4.4,-0.6M890.6,466.9L897.9,448.1M897.9,448.1l8.7,-1.0M896.8,451.0l8.7,-1.0M890.6,494.4L899.1,476.1M899.1,476.1l8.8,-0.4M897.8,479.0l8.8,-0.4M890.6,521.9L901.6,505.0M901.6,505.0l8.8,0.8M899.9,507.6l8.8,0.8M898.2,510.3l4.4,0.4M890.6,549.4L904.6,534.9M904.6,534.9l8.4,2.5M902.5,537.2l8.4,2.5M900.3,539.4l8.4,2.5M898.1,541.7l4.2,1.2M890.6,576.9L905.6,563.4M905.6,563.4l8.3,3.0M903.2,565.5l8.3,3.0M900.9,567.6l8.3,3.0M898.5,569.7l4.1,1.5M890.6,604.4L905.7,591.0M905.7,591.0l8.2,3.1M903.3,593.1l8.2,3.1M900.9,595.2l8.2,3.1M898.6,597.3l4.1,1.5M890.6,631.9L906.1,619.0M906.1,619.0l8.1,3.3M903.7,621.0l8.1,3.3M901.3,623.0l8.1,3.3M898.8,625.0l4.1,1.7M890.6,659.4L906.2,646.7M906.2,646.7l8.1,3.4M903.8,648.7l8.1,3.4M901.3,650.6l8.1,3.4M898.9,652.6l4.1,1.7M890.6,686.9L905.9,673.7M905.9,673.7l8.2,3.2M903.5,675.8l8.2,3.2M901.1,677.8l8.2,3.2M898.7,679.9l4.1,1.6M890.6,714.4L905.2,700.5M905.2,700.5l8.4,2.8M902.9,702.6l8.4,2.8M900.6,704.8l8.4,2.8M898.3,707.0l4.2,1.4M890.6,741.9L902.0,725.2M902.0,725.2l8.7,1.0M900.2,727.8l8.7,1.0M898.4,730.4l4.4,0.5M890.6,769.4L896.3,750.0M896.3,750.0l8.6,-1.8M895.4,753.0l4.3,-0.9M890.6,796.9L894.6,777.1M894.6,777.1l8.4,-2.5M894.0,780.2l4.2,-1.2M890.6,824.4L898.7,805.9M898.7,805.9l8.8,-0.6M897.4,808.8l8.8,-0.6M890.6,851.9L900.7,834.4M900.7,834.4l8.8,0.3M899.1,837.1l8.8,0.3M897.5,839.9l8.8,0.3M890.6,879.4L901.9,862.7M901.9,862.7l8.8,0.9M900.1,865.3l8.8,0.9M898.3,867.9l8.8,0.9M890.6,906.9L901.9,890.2M901.9,890.2l8.7,0.9M900.1,892.8l8.7,0.9M898.4,895.4l8.7,0.9M918.4,26.9L925.0,7.8M925.0,7.8l8.7,-1.4M924.0,10.8l4.3,-0.7M918.4,54.4L925.1,35.3M925.1,35.3l8.7,-1.3M924.0,38.3l4.3,-0.7M918.4,81.9L925.1,62.8M925.1,62.8l8.7,-1.3M924.0,65.8l4.3,-0.7M918.4,109.4L925.0,90.3M925.0,90.3l8.7,-1.3M924.0,93.3l4.3,-0.7M918.4,136.9L924.8,117.7M924.8,117.7l8.7,-1.5M923.8,120.7l4.3,-0.7M918.4,164.4L923.8,144.9M923.8,144.9l8.6,-1.9M923.0,148.0l4.3,-0.9M918.4,191.9L922.3,172.1M922.3,172.1l8.4,-2.6M921.6,175.2l4.2,-1.3M918.4,219.4L921.4,199.4M921.4,199.4l8.3,-2.9M920.9,202.5l4.1,-1.5M918.4,246.9L921.2,226.9M921.2,226.9l8.3,-3.0M920.8,230.0l4.1,-1.5M918.4,274.4L921.3,254.4M921.3,254.4l8.3,-3.0M920.9,257.5l4.1,-1.5M918.4,301.9L921.9,282.0M921.9,282.0l8.4,-2.7M921.3,285.1l4.2,-1.4M918.4,329.4L922.6,309.6M922.6,309.6l8.5,-2.4M921.9,312.7l4.2,-1.2M918.4,356.9L922.6,337.1M922.6,337.1l8.5,-2.4M921.9,340.2l4.2,-1.2M918.4,384.4L922.3,364.6M922.3,364.6l8.4,-2.6M921.7,367.7l4.2,-1.3M918.4,411.9L922.4,392.1M922.4,392.1l8.4,-2.5M921.8,395.2l4.2,-1.3M918.4,439.4L924.0,420.0M924.0,420.0l8.6,-1.8M923.1,423.0l8.6,-1.8M918.4,466.9L925.8,448.1M925.8,448.1l8.7,-1.0M924.6,451.0l8.7,-1.0M918.4,494.4L926.2,475.8M926.2,475.8l8.8,-0.8M925.0,478.7l8.8,-0.8M918.4,521.9L927.1,503.7M927.1,503.7l8.8,-0.4M925.7,506.5l8.8,-0.4M924.4,509.4l4.4,-0.2M918.4,549.4L931.0,533.6M931.0,533.6l8.6,1.6M929.0,536.1l8.6,1.6M927.1,538.5l8.6,1.6M918.4,576.9L933.1,563.1M933.1,563.1l8.3,2.8M930.8,565.2l8.3,2.8M928.5,567.4l8.3,2.8M926.2,569.5l4.2,1.4M918.4,604.4L933.3,590.8M933.3,590.8l8.3,3.0M931.0,592.9l8.3,3.0M928.7,595.0l8.3,3.0M926.3,597.2l4.1,1.5M918.4,631.9L933.1,618.1M933.1,618.1l8.3,2.8M930.8,620.2l8.3,2.8M928.5,622.4l8.3,2.8M926.2,624.5l4.2,1.4M918.4,659.4L933.3,645.8M933.3,645.8l8.3,2.9M931.0,647.9l8.3,2.9M928.6,650.0l8.3,2.9M926.3,652.1l4.1,1.5M918.4,686.9L933.8,673.8M933.8,673.8l8.2,3.2M931.4,675.9l8.2,3.2M929.0,677.9l8.2,3.2M926.6,679.9l4.1,1.6M918.4,714.4L933.5,701.0M933.5,701.0l8.3,3.1M931.1,703.1l8.3,3.1M928.8,705.2l8.3,3.1M926.4,707.2l4.1,1.5M918.4,741.9L930.3,725.6M930.3,725.6l8.7,1.3M928.5,728.1l8.7,1.3M926.6,730.7l8.7,1.3M918.4,769.4L925.2,750.4M925.2,750.4l8.7,-1.3M924.1,753.4l8.7,-1.3M918.4,796.9L923.7,777.4M923.7,777.4l8.6,-1.9M922.9,780.4l4.3,-1.0M918.4,824.4L926.7,806.0M926.7,806.0l8.8,-0.6M925.4,808.8l8.8,-0.6M924.1,811.7l4.4,-0.3M918.4,851.9L928.3,834.3M928.3,834.3l8.8,0.2M926.8,837.1l8.8,0.2M925.2,839.8l8.8,0.2M918.4,879.4L928.7,862.0M928.7,862.0l8.8,0.4M927.1,864.7l8.8,0.4M925.5,867.4l8.8,0.4M918.4,906.9L928.9,889.7M928.9,889.7l8.8,0.5M927.3,892.4l8.8,0.5M925.7,895.0l8.8,0.5M946.2,26.9L951.8,7.5M951.8,7.5l8.6,-1.8M950.9,10.5l4.3,-0.9M946.2,54.4L951.7,35.0M951.7,35.0l8.6,-1.9M950.8,38.0l8.6,-1.9M946.2,81.9L951.7,62.5M951.7,62.5l8.6,-1.9M950.9,65.5l4.3,-0.9M946.2,109.4L951.8,90.0M951.8,90.0l8.6,-1.8M951.0,93.0l4.3,-0.9M946.2,136.9L951.8,117.5M951.8,117.5l8.6,-1.8M950.9,120.5l4.3,-0.9M946.2,164.4L951.2,144.8M951.2,144.8l8.5,-2.1M950.4,147.9l4.3,-1.0M946.2,191.9L950.2,172.1M950.2,172.1l8.4,-2.5M949.6,175.2l4.2,-1.3M946.2,219.4L949.5,199.5M949.5,199.5l8.3,-2.8M949.0,202.6l4.2,-1.4M946.2,246.9L949.2,226.9M949.2,226.9l8.3,-2.9M948.8,230.0l4.2,-1.5M946.2,274.4L949.2,254.4M949.2,254.4l8.3,-2.9M948.7,257.5l4.1,-1.5M946.2,301.9L949.3,281.9M949.3,281.9l8.3,-2.9M948.8,285.0l4.2,-1.5M946.2,329.4L949.7,309.5M949.7,309.5l8.4,-2.7M949.1,312.6l4.2,-1.4M946.2,356.9L949.9,337.0M949.9,337.0l8.4,-2.6M949.4,340.1l4.2,-1.3M946.2,384.4L949.8,364.5M949.8,364.5l8.4,-2.7M949.2,367.6l4.2,-1.4M946.2,411.9L949.8,392.0M949.8,392.0l8.4,-2.7M949.2,395.1l4.2,-1.3M946.2,439.4L951.0,419.8M951.0,419.8l8.5,-2.2M950.3,422.8l8.5,-2.2M946.2,466.9L953.6,448.1M953.6,448.1l8.7,-1.0M952.4,451.0l8.7,-1.0M946.2,494.4L953.8,475.7M953.8,475.7l8.8,-0.9M952.6,478.6l8.8,-0.9M946.2,521.9L954.0,503.2M954.0,503.2l8.8,-0.8M952.7,506.1l8.8,-0.8M946.2,549.4L955.7,531.6M955.7,531.6l8.8,0.0M954.2,534.4l8.8,0.0M952.8,537.1l4.4,0.0M946.2,576.9L958.5,560.9M958.5,560.9l8.7,1.5M956.6,563.4l8.7,1.5M954.7,565.9l8.7,1.5M946.2,604.4L960.0,589.6M960.0,589.6l8.5,2.3M957.8,591.9l8.5,2.3M955.7,594.2l8.5,2.3M953.5,596.5l4.3,1.1M946.2,631.9L959.9,617.0M959.9,617.0l8.5,2.2M957.7,619.3l8.5,2.2M955.6,621.6l8.5,2.2M953.5,624.0l4.3,1.1M946.2,659.4L960.0,644.7M960.0,644.7l8.5,2.3M957.9,647.0l8.5,2.3M955.7,649.3l8.5,2.3M953.6,651.6l4.2,1.1M946.2,686.9L961.4,673.6M961.4,673.6l8.2,3.1M959.0,675.6l8.2,3.1M956.7,677.7l8.2,3.1M954.3,679.8l4.1,1.6M946.2,714.4L960.7,700.3M960.7,700.3l8.4,2.7M958.5,702.5l8.4,2.7M956.2,704.7l8.4,2.7M953.9,706.9l4.2,1.4M946.2,741.9L955.9,724.2M955.9,724.2l8.8,0.1M954.4,727.0l8.8,0.1M952.9,729.7l8.8,0.1M951.4,732.5l4.4,0.1M946.2,769.4L953.9,750.7M953.9,750.7l8.8,-0.9M952.7,753.6l8.8,-0.9M951.5,756.5l8.8,-0.9M946.2,796.9L954.6,778.5M954.6,778.5l8.8,-0.6M953.3,781.4l8.8,-0.6M952.0,784.2l8.8,-0.6M950.7,787.1l4.4,-0.3M946.2,824.4L954.6,806.0M954.6,806.0l8.8,-0.5M953.3,808.9l8.8,-0.5M952.0,811.8l8.8,-0.5M950.7,814.6l4.4,-0.3M946.2,851.9L954.4,833.4M954.4,833.4l8.8,-0.6M953.1,836.3l8.8,-0.6M951.9,839.2l8.8,-0.6M946.2,879.4L954.3,860.9M954.3,860.9l8.8,-0.7M953.1,863.8l8.8,-0.7M951.8,866.7l8.8,-0.7M946.2,906.9L954.6,888.5M954.6,888.5l8.8,-0.6M953.3,891.4l8.8,-0.6M952.0,894.2l8.8,-0.6M974.0,26.9L979.3,7.4M979.3,7.4l8.6,-2.0M978.5,10.4l8.6,-2.0M974.0,54.4L979.3,34.9M979.3,34.9l8.6,-2.0M978.5,37.9l8.6,-2.0M974.0,81.9L979.3,62.4M979.3,62.4l8.6,-2.0M978.5,65.4l8.6,-2.0M974.0,109.4L979.3,89.9M979.3,89.9l8.6,-2.0M978.5,92.9l8.6,-2.0M974.0,136.9L979.3,117.4M979.3,117.4l8.6,-2.0M978.4,120.4l8.6,-2.0M974.0,164.4L978.9,144.8M978.9,144.8l8.5,-2.2M978.1,147.8l4.3,-1.1M974.0,191.9L978.2,172.1M978.2,172.1l8.5,-2.4M977.6,175.2l4.2,-1.2M974.0,219.4L977.5,199.5M977.5,199.5l8.4,-2.7M977.0,202.6l4.2,-1.4M974.0,246.9L977.0,226.9M977.0,226.9l8.3,-2.9M976.6,230.0l4.1,-1.5M974.0,274.4L976.7,254.4M976.7,254.4l8.2,-3.1M976.3,257.5l4.1,-1.5M974.0,301.9L976.6,281.9M976.6,281.9l8.2,-3.1M976.2,285.0l4.1,-1.6M974.0,329.4L976.8,309.4M976.8,309.4l8.3,-3.0M976.4,312.5l4.1,-1.5M974.0,356.9L977.6,337.0M977.6,337.0l8.4,-2.7M977.0,340.1l4.2,-1.4M974.0,384.4L977.7,364.5M977.7,364.5l8.4,-2.7M977.1,367.6l4.2,-1.3M974.0,411.9L977.7,392.0M977.7,392.0l8.4,-2.6M977.2,395.1l4.2,-1.3M974.0,439.4L979.0,419.8M979.0,419.8l8.5,-2.1M978.2,422.9l8.5,-2.1M974.0,466.9L981.1,448.0M981.1,448.0l8.7,-1.2M980.0,450.9l8.7,-1.2M974.0,494.4L981.6,475.6M981.6,475.6l8.7,-1.0M980.4,478.6l8.7,-1.0M974.0,521.9L981.6,503.2M981.6,503.2l8.7,-0.9M980.4,506.1l8.7,-0.9M979.2,509.0l4.4,-0.5M974.0,549.4L981.3,530.6M981.3,530.6l8.7,-1.0M980.2,533.5l8.7,-1.0M979.1,536.4l8.7,-1.0M974.0,576.9L981.9,558.3M981.9,558.3l8.8,-0.8M980.7,561.2l8.8,-0.8M979.5,564.1l8.8,-0.8M974.0,604.4L985.7,587.9M985.7,587.9l8.7,1.1M983.8,590.4l8.7,1.1M982.0,593.0l8.7,1.1M980.2,595.6l4.4,0.5M974.0,631.9L987.5,616.8M987.5,616.8l8.6,2.1M985.4,619.2l8.6,2.1M983.3,621.5l8.6,2.1M981.2,623.9l4.3,1.0M974.0,659.4L974.8,639.2M974.0,686.9L987.3,671.6M987.3,671.6l8.6,2.0M985.2,674.0l8.6,2.0M983.2,676.4l8.6,2.0M981.1,678.8l4.3,1.0M974.0,714.4L983.1,696.4M983.1,696.4l8.8,-0.2M981.7,699.2l8.8,-0.2M980.3,702.0l8.8,-0.2M978.9,704.8l4.4,-0.1M974.0,741.9L978.9,722.3M978.9,722.3l8.5,-2.2M978.1,725.3l8.5,-2.2M977.4,728.4l8.5,-2.2M976.6,731.5l4.3,-1.1M974.0,769.4L979.6,750.0M979.6,750.0l8.6,-1.9M978.7,753.0l8.6,-1.9M977.8,756.0l8.6,-1.9M977.0,759.1l4.3,-0.9M974.0,796.9L982.3,778.4M982.3,778.4l8.8,-0.6M981.0,781.3l8.8,-0.6M979.7,784.2l8.8,-0.6M978.4,787.1l4.4,-0.3M974.0,824.4L982.1,805.9M982.1,805.9l8.8,-0.7M980.9,808.8l8.8,-0.7M979.6,811.7l8.8,-0.7M978.4,814.5l4.4,-0.3M974.0,851.9L979.7,832.5M979.7,832.5l8.6,-1.8M978.9,835.5l8.6,-1.8M978.0,838.6l8.6,-1.8M977.1,841.6l4.3,-0.9M974.0,879.4L979.4,859.9M979.4,859.9l8.6,-1.9M978.6,863.0l8.6,-1.9M977.8,866.0l8.6,-1.9M976.9,869.0l4.3,-1.0M974.0,906.9L980.0,887.6M980.0,887.6l8.6,-1.6M979.1,890.6l8.6,-1.6M978.2,893.6l8.6,-1.6M977.2,896.6l4.3,-0.8M1001.9,26.9L1007.1,7.4M1007.1,7.4l8.6,-2.0M1006.3,10.4l8.6,-2.0M1001.9,54.4L1007.1,34.9M1007.1,34.9l8.6,-2.0M1006.3,37.9l8.6,-2.0M1001.9,81.9L1007.1,62.4M1007.1,62.4l8.6,-2.0M1006.3,65.4l8.6,-2.0M1001.9,109.4L1007.1,89.9M1007.1,89.9l8.6,-2.0M1006.3,92.9l8.6,-2.0M1001.9,136.9L1006.9,117.3M1006.9,117.3l8.6,-2.1M1006.1,120.4l8.6,-2.1M1001.9,164.4L1006.6,144.8M1006.6,144.8l8.5,-2.2M1005.9,147.8l8.5,-2.2M1001.9,191.9L1006.1,172.1M1006.1,172.1l8.5,-2.4M1005.4,175.2l8.5,-2.4M1001.9,219.4L1005.4,199.5M1005.4,199.5l8.4,-2.7M1004.9,202.6l4.2,-1.4M1001.9,246.9L1004.7,226.9M1004.7,226.9l8.3,-3.0M1004.3,230.0l4.1,-1.5M1001.9,274.4L1004.4,254.4M1004.4,254.4l8.2,-3.1M1004.0,257.5l4.1,-1.6M1001.9,301.9L1004.4,281.9M1004.4,281.9l8.2,-3.1M1004.0,285.0l4.1,-1.6M1001.9,329.4L1004.5,309.4M1004.5,309.4l8.2,-3.1M1004.1,312.5l4.1,-1.6M1001.9,356.9L1005.2,337.0M1005.2,337.0l8.3,-2.8M1004.7,340.1l4.2,-1.4M1001.9,384.4L1005.7,364.6M1005.7,364.6l8.4,-2.6M1005.1,367.7l8.4,-2.6M1001.9,411.9L1006.1,392.1M1006.1,392.1l8.5,-2.4M1005.4,395.2l8.5,-2.4M1001.9,439.4L1006.8,419.8M1006.8,419.8l8.5,-2.1M1006.0,422.9l8.5,-2.1M1001.9,466.9L1007.3,447.4M1007.3,447.4l8.6,-1.9M1006.5,450.5l8.6,-1.9M1005.6,453.5l4.3,-0.9M1001.9,494.4L1008.0,475.1M1008.0,475.1l8.7,-1.6M1007.0,478.2l8.7,-1.6M1006.1,481.2l4.3,-0.8M1001.9,521.9L1008.8,502.9M1008.8,502.9l8.7,-1.2M1007.7,505.9l8.7,-1.2M1006.6,508.8l8.7,-1.2M1001.9,549.4L1008.8,530.4M1008.8,530.4l8.7,-1.2M1007.7,533.4l8.7,-1.2M1006.7,536.3l8.7,-1.2M1001.9,576.9L1008.9,558.0M1008.9,558.0l8.7,-1.2M1007.8,560.9l8.7,-1.2M1006.7,563.9l8.7,-1.2M1001.9,604.4L1011.0,586.4M1011.0,586.4l8.8,-0.2M1009.6,589.2l8.8,-0.2M1008.2,592.0l8.8,-0.2M1001.9,631.9L1014.2,615.9M1014.2,615.9l8.7,1.5M1012.3,618.4l8.7,1.5M1010.3,620.9l8.7,1.5M1008.4,623.4l4.3,0.7M1001.9,659.4L1002.9,639.2M1001.9,686.9L1011.1,668.9M1011.1,668.9l8.8,-0.2M1009.6,671.7l8.8,-0.2M1008.2,674.5l8.8,-0.2M1006.8,677.3l4.4,-0.1M1001.9,714.4L1007.0,694.9M1007.0,694.9l8.6,-2.0M1006.2,697.9l8.6,-2.0M1005.4,701.0l8.6,-2.0M1004.6,704.0l4.3,-1.0M1001.9,741.9L1005.8,722.1M1005.8,722.1l8.4,-2.5M1005.2,725.2l8.4,-2.5M1004.6,728.3l8.4,-2.5M1004.0,731.4l4.2,-1.3M1001.9,769.4L1006.0,749.6M1006.0,749.6l8.5,-2.5M1005.4,752.7l8.5,-2.5M1004.7,755.8l8.5,-2.5M1004.1,758.9l4.2,-1.2M1001.9,796.9L1008.1,777.7M1008.1,777.7l8.7,-1.5M1007.2,780.7l8.7,-1.5M1006.2,783.7l8.7,-1.5M1005.2,786.7l4.3,-0.8M1001.9,824.4L1007.9,805.1M1007.9,805.1l8.6,-1.6M1006.9,808.1l8.6,-1.6M1006.0,811.1l8.6,-1.6M1005.1,814.1l4.3,-0.8M1001.9,851.9L1006.8,832.3M1006.8,832.3l8.5,-2.1M1006.1,835.4l8.5,-2.1M1005.3,838.4l8.5,-2.1M1004.5,841.5l8.5,-2.1M1001.9,879.4L1006.8,859.8M1006.8,859.8l8.5,-2.1M1006.1,862.9l8.5,-2.1M1005.3,865.9l8.5,-2.1M1004.5,869.0l8.5,-2.1M1001.9,906.9L1007.1,887.4M1007.1,887.4l8.6,-2.0M1006.3,890.4l8.6,-2.0M1005.5,893.5l8.6,-2.0M1004.7,896.5l4.3,-1.0M1029.7,26.9L1034.9,7.4M1034.9,7.4l8.6,-2.0M1034.1,10.4l8.6,-2.0M1029.7,54.4L1034.9,34.9M1034.9,34.9l8.6,-2.0M1034.1,37.9l8.6,-2.0M1029.7,81.9L1034.9,62.4M1034.9,62.4l8.6,-2.0M1034.1,65.4l8.6,-2.0M1029.7,109.4L1034.7,89.8M1034.7,89.8l8.6,-2.1M1034.0,92.9l8.6,-2.1M1029.7,136.9L1034.5,117.3M1034.5,117.3l8.5,-2.2M1033.7,120.3l8.5,-2.2M1029.7,164.4L1034.3,144.7M1034.3,144.7l8.5,-2.3M1033.6,147.8l8.5,-2.3M1029.7,191.9L1034.0,172.2M1034.0,172.2l8.5,-2.4M1033.3,175.2l8.5,-2.4M1029.7,219.4L1033.4,199.5M1033.4,199.5l8.4,-2.6M1032.8,202.6l8.4,-2.6M1029.7,246.9L1032.8,226.9M1032.8,226.9l8.3,-2.9M1032.3,230.0l4.2,-1.5M1029.7,274.4L1032.4,254.4M1032.4,254.4l8.2,-3.1M1032.0,257.5l4.1,-1.5M1029.7,301.9L1032.3,281.9M1032.3,281.9l8.2,-3.1M1031.9,285.0l4.1,-1.6M1029.7,329.4L1032.5,309.4M1032.5,309.4l8.3,-3.0M1032.0,312.5l4.1,-1.5M1029.7,356.9L1033.0,337.0M1033.0,337.0l8.3,-2.8M1032.5,340.1l8.3,-2.8M1029.7,384.4L1033.5,364.6M1033.5,364.6l8.4,-2.6M1032.9,367.7l8.4,-2.6M1029.7,411.9L1033.8,392.1M1033.8,392.1l8.4,-2.5M1033.2,395.2l8.4,-2.5M1029.7,439.4L1034.1,419.7M1034.1,419.7l8.5,-2.3M1033.4,422.8l8.5,-2.3M1032.7,425.8l4.2,-1.2M1029.7,466.9L1034.0,447.2M1034.0,447.2l8.5,-2.4M1033.3,450.2l8.5,-2.4M1032.7,453.3l4.2,-1.2M1029.7,494.4L1034.1,474.7M1034.1,474.7l8.5,-2.3M1033.4,477.8l8.5,-2.3M1032.7,480.8l4.2,-1.2M1029.7,521.9L1035.6,502.6M1035.6,502.6l8.6,-1.7M1034.7,505.6l8.6,-1.7M1033.8,508.6l4.3,-0.8M1029.7,549.4L1036.6,530.4M1036.6,530.4l8.7,-1.2M1035.5,533.4l8.7,-1.2M1034.5,536.3l8.7,-1.2M1029.7,576.9L1036.9,558.0M1036.9,558.0l8.7,-1.1M1035.7,561.0l8.7,-1.1M1034.6,563.9l8.7,-1.1M1029.7,604.4L1038.0,586.0M1038.0,586.0l8.8,-0.6M1036.7,588.9l8.8,-0.6M1035.4,591.7l8.8,-0.6M1029.7,631.9L1039.5,614.2M1039.5,614.2l8.8,0.1M1037.9,617.0l8.8,0.1M1036.4,619.7l8.8,0.1M1034.9,622.5l4.4,0.1M1029.7,659.4L1038.0,641.0M1038.0,641.0l8.8,-0.6M1036.7,643.9l8.8,-0.6M1035.4,646.7l8.8,-0.6M1034.1,649.6l4.4,-0.3M1029.7,686.9L1035.0,667.4M1035.0,667.4l8.6,-2.0M1034.1,670.4l8.6,-2.0M1033.3,673.5l8.6,-2.0M1032.5,676.5l4.3,-1.0M1029.7,714.4L1034.0,694.7M1034.0,694.7l8.5,-2.4M1033.4,697.7l8.5,-2.4M1032.7,700.8l8.5,-2.4M1032.0,703.9l4.2,-1.2M1029.7,741.9L1033.9,722.1M1033.9,722.1l8.5,-2.4M1033.3,725.2l8.5,-2.4M1032.6,728.3l8.5,-2.4M1031.9,731.4l4.2,-1.2M1029.7,769.4L1034.0,749.7M1034.0,749.7l8.5,-2.4M1033.3,752.7l8.5,-2.4M1032.7,755.8l8.5,-2.4M1032.0,758.9l4.2,-1.2M1029.7,796.9L1034.8,777.3M1034.8,777.3l8.6,-2.1M1034.0,780.4l8.6,-2.1M1033.2,783.4l8.6,-2.1M1032.4,786.5l4.3,-1.0M1029.7,824.4L1034.9,804.9M1034.9,804.9l8.6,-2.0M1034.1,807.9l8.6,-2.0M1033.3,811.0l8.6,-2.0M1032.5,814.0l4.3,-1.0M1029.7,851.9L1034.7,832.3M1034.7,832.3l8.5,-2.1M1033.9,835.4l8.5,-2.1M1033.1,838.4l8.5,-2.1M1032.3,841.5l8.5,-2.1M1029.7,879.4L1034.7,859.8M1034.7,859.8l8.5,-2.1M1033.9,862.9l8.5,-2.1M1033.1,865.9l8.5,-2.1M1032.3,869.0l8.5,-2.1M1029.7,906.9L1034.8,887.3M1034.8,887.3l8.6,-2.1M1034.0,890.4l8.6,-2.1M1033.2,893.4l8.6,-2.1M1032.4,896.5l4.3,-1.0M1057.5,26.9L1062.5,7.3M1062.5,7.3l8.5,-2.1M1061.7,10.4l8.5,-2.1M1057.5,54.4L1062.5,34.8M1062.5,34.8l8.5,-2.1M1061.7,37.9l8.5,-2.1M1057.5,81.9L1062.5,62.3M1062.5,62.3l8.5,-2.1M1061.7,65.4l8.5,-2.1M1057.5,109.4L1062.3,89.8M1062.3,89.8l8.5,-2.2M1061.6,92.8l8.5,-2.2M1057.5,136.9L1062.1,117.2M1062.1,117.2l8.5,-2.3M1061.4,120.3l8.5,-2.3M1057.5,164.4L1062.1,144.7M1062.1,144.7l8.5,-2.3M1061.4,147.8l8.5,-2.3M1057.5,191.9L1061.9,172.2M1061.9,172.2l8.5,-2.3M1061.3,175.3l8.5,-2.3M1057.5,219.4L1061.4,199.6M1061.4,199.6l8.4,-2.6M1060.8,202.7l8.4,-2.6M1057.5,246.9L1060.8,227.0M1060.8,227.0l8.3,-2.8M1060.3,230.1l4.2,-1.4M1057.5,274.4L1060.7,254.4M1060.7,254.4l8.3,-2.9M1060.2,257.6l4.2,-1.4M1057.5,301.9L1060.6,281.9M1060.6,281.9l8.3,-2.9M1060.1,285.0l4.2,-1.5M1057.5,329.4L1060.7,309.4M1060.7,309.4l8.3,-2.9M1060.2,312.6l8.3,-2.9M1057.5,356.9L1060.9,337.0M1060.9,337.0l8.3,-2.8M1060.4,340.1l8.3,-2.8M1057.5,384.4L1060.9,364.5M1060.9,364.5l8.3,-2.8M1060.4,367.6l8.3,-2.8M1059.8,370.7l4.2,-1.4M1057.5,411.9L1061.0,392.0M1061.0,392.0l8.4,-2.7M1060.5,395.1l8.4,-2.7M1059.9,398.2l4.2,-1.4M1057.5,439.4L1061.6,419.6M1061.6,419.6l8.4,-2.5M1061.0,422.7l8.4,-2.5M1060.3,425.8l4.2,-1.2M1057.5,466.9L1061.8,447.1M1061.8,447.1l8.5,-2.4M1061.1,450.2l8.5,-2.4M1060.4,453.3l4.2,-1.2M1057.5,494.4L1061.8,474.6M1061.8,474.6l8.5,-2.4M1061.1,477.7l8.5,-2.4M1060.5,480.8l4.2,-1.2M1057.5,521.9L1062.4,502.3M1062.4,502.3l8.5,-2.1M1061.6,505.4l8.5,-2.1M1060.9,508.4l4.3,-1.1M1057.5,549.4L1063.9,530.2M1063.9,530.2l8.7,-1.5M1062.9,533.2l8.7,-1.5M1061.9,536.2l8.7,-1.5M1057.5,576.9L1064.6,558.0M1064.6,558.0l8.7,-1.2M1063.5,560.9l8.7,-1.2M1062.4,563.9l8.7,-1.2M1057.5,604.4L1065.2,585.7M1065.2,585.7l8.8,-0.9M1064.0,588.6l8.8,-0.9M1062.8,591.5l8.8,-0.9M1057.5,631.9L1065.2,613.2M1065.2,613.2l8.8,-0.9M1064.0,616.1l8.8,-0.9M1062.8,619.0l8.8,-0.9M1061.6,621.9l4.4,-0.4M1057.5,659.4L1063.5,640.1M1063.5,640.1l8.6,-1.6M1062.6,643.1l8.6,-1.6M1061.7,646.1l8.6,-1.6M1060.7,649.1l4.3,-0.8M1057.5,686.9L1062.1,667.2M1062.1,667.2l8.5,-2.3M1061.3,670.3l8.5,-2.3M1060.6,673.4l8.5,-2.3M1059.9,676.4l4.2,-1.1M1057.5,714.4L1061.8,694.6M1061.8,694.6l8.5,-2.4M1061.1,697.7l8.5,-2.4M1060.4,700.8l8.5,-2.4M1059.8,703.9l4.2,-1.2M1057.5,741.9L1061.8,722.1M1061.8,722.1l8.5,-2.4M1061.1,725.2l8.5,-2.4M1060.4,728.3l8.5,-2.4M1059.8,731.4l4.2,-1.2M1057.5,769.4L1061.7,749.6M1061.7,749.6l8.5,-2.4M1061.1,752.7l8.5,-2.4M1060.4,755.8l8.5,-2.4M1059.8,758.9l4.2,-1.2M1057.5,796.9L1061.9,777.2M1061.9,777.2l8.5,-2.4M1061.2,780.2l8.5,-2.4M1060.5,783.3l8.5,-2.4M1059.9,786.4l4.2,-1.2M1057.5,824.4L1061.7,804.6M1061.7,804.6l8.5,-2.4M1061.1,807.7l8.5,-2.4M1060.4,810.8l8.5,-2.4M1059.8,813.9l4.2,-1.2M1057.5,851.9L1061.6,832.1M1061.6,832.1l8.4,-2.5M1061.0,835.2l8.4,-2.5M1060.3,838.3l8.4,-2.5M1059.7,841.4l8.4,-2.5M1057.5,879.4L1061.8,859.6M1061.8,859.6l8.5,-2.4M1061.1,862.7l8.5,-2.4M1060.4,865.8l8.5,-2.4M1059.8,868.9l4.2,-1.2M1057.5,906.9L1062.0,887.2M1062.0,887.2l8.5,-2.3M1061.3,890.3l8.5,-2.3M1060.6,893.3l8.5,-2.3M1059.9,896.4l4.2,-1.2M1085.4,26.9L1090.3,7.3M1090.3,7.3l8.5,-2.1M1089.5,10.4l8.5,-2.1M1085.4,54.4L1090.3,34.8M1090.3,34.8l8.5,-2.1M1089.5,37.9l8.5,-2.1M1085.4,81.9L1090.2,62.3M1090.2,62.3l8.5,-2.1M1089.5,65.4l8.5,-2.1M1085.4,109.4L1090.1,89.8M1090.1,89.8l8.5,-2.2M1089.3,92.8l8.5,-2.2M1085.4,136.9L1089.9,117.2M1089.9,117.2l8.5,-2.3M1089.2,120.3l8.5,-2.3M1085.4,164.4L1089.9,144.7M1089.9,144.7l8.5,-2.3M1089.2,147.8l8.5,-2.3M1085.4,191.9L1089.8,172.2M1089.8,172.2l8.5,-2.3M1089.1,175.3l8.5,-2.3M1085.4,219.4L1089.2,199.6M1089.2,199.6l8.4,-2.6M1088.6,202.7l8.4,-2.6M1085.4,246.9L1088.6,227.0M1088.6,227.0l8.3,-2.8M1088.1,230.1l4.2,-1.4M1085.4,274.4L1088.5,254.4M1088.5,254.4l8.3,-2.9M1088.0,257.6l4.2,-1.4M1085.4,301.9L1088.5,282.0M1088.5,282.0l8.3,-2.9M1088.0,285.1l4.2,-1.4M1085.4,329.4L1088.6,309.5M1088.6,309.5l8.3,-2.8M1088.1,312.6l8.3,-2.8M1085.4,356.9L1088.6,337.0M1088.6,337.0l8.3,-2.8M1088.1,340.1l8.3,-2.8M1087.6,343.2l4.2,-1.4M1085.4,384.4L1088.6,364.5M1088.6,364.5l8.3,-2.9M1088.1,367.6l8.3,-2.9M1087.6,370.7l4.2,-1.4M1085.4,411.9L1088.6,392.0M1088.6,392.0l8.3,-2.9M1088.1,395.1l8.3,-2.9M1087.6,398.2l4.2,-1.4M1085.4,439.4L1088.9,419.5M1088.9,419.5l8.4,-2.7M1088.4,422.6l8.4,-2.7M1087.8,425.7l4.2,-1.3M1085.4,466.9L1089.5,447.1M1089.5,447.1l8.4,-2.5M1088.8,450.2l8.4,-2.5M1088.2,453.3l4.2,-1.2M1085.4,494.4L1089.6,474.6M1089.6,474.6l8.5,-2.4M1088.9,477.7l8.5,-2.4M1088.2,480.8l4.2,-1.2M1085.4,521.9L1089.8,502.2M1089.8,502.2l8.5,-2.3M1089.1,505.3l8.5,-2.3M1088.4,508.3l4.2,-1.2M1085.4,549.4L1090.5,529.9M1090.5,529.9l8.6,-2.0M1089.7,532.9l8.6,-2.0M1088.9,536.0l8.6,-2.0M1085.4,576.9L1091.3,557.6M1091.3,557.6l8.6,-1.7M1090.4,560.6l8.6,-1.7M1089.5,563.6l8.6,-1.7M1085.4,604.4L1091.7,585.2M1091.7,585.2l8.7,-1.5M1090.8,588.2l8.7,-1.5M1089.8,591.2l8.7,-1.5M1085.4,631.9L1091.6,612.7M1091.6,612.7l8.7,-1.5M1090.6,615.7l8.7,-1.5M1089.6,618.7l8.7,-1.5M1088.7,621.7l4.3,-0.8M1085.4,659.4L1090.7,639.9M1090.7,639.9l8.6,-1.9M1089.9,643.0l8.6,-1.9M1089.0,646.0l8.6,-1.9M1088.2,649.0l4.3,-1.0M1085.4,686.9L1089.9,667.2M1089.9,667.2l8.5,-2.3M1089.2,670.3l8.5,-2.3M1088.5,673.4l8.5,-2.3M1087.8,676.4l4.2,-1.1M1085.4,714.4L1089.6,694.6M1089.6,694.6l8.5,-2.4M1088.9,697.7l8.5,-2.4M1088.3,700.8l8.5,-2.4M1087.6,703.9l4.2,-1.2M1085.4,741.9L1089.3,722.1M1089.3,722.1l8.4,-2.5M1088.7,725.2l8.4,-2.5M1088.1,728.3l8.4,-2.5M1087.5,731.4l8.4,-2.5M1085.4,769.4L1089.3,749.6M1089.3,749.6l8.4,-2.6M1088.6,752.7l8.4,-2.6M1088.0,755.8l8.4,-2.6M1087.4,758.9l8.4,-2.6M1085.4,796.9L1089.3,777.1M1089.3,777.1l8.4,-2.5M1088.7,780.2l8.4,-2.5M1088.1,783.3l8.4,-2.5M1087.5,786.4l8.4,-2.5M1085.4,824.4L1089.0,804.5M1089.0,804.5l8.4,-2.7M1088.4,807.6l8.4,-2.7M1087.9,810.7l8.4,-2.7M1087.3,813.8l8.4,-2.7M1085.4,851.9L1088.9,832.0M1088.9,832.0l8.4,-2.7M1088.4,835.1l8.4,-2.7M1087.8,838.2l8.4,-2.7M1087.2,841.3l8.4,-2.7M1085.4,879.4L1089.0,859.5M1089.0,859.5l8.4,-2.7M1088.4,862.6l8.4,-2.7M1087.9,865.7l8.4,-2.7M1087.3,868.8l8.4,-2.7M1085.4,906.9L1089.3,887.1M1089.3,887.1l8.4,-2.6M1088.7,890.2l8.4,-2.6M1088.0,893.3l8.4,-2.6M1087.4,896.4l8.4,-2.6M1113.2,26.9L1118.1,7.3M1118.1,7.3l8.5,-2.1M1117.3,10.4l8.5,-2.1M1113.2,54.4L1118.1,34.8M1118.1,34.8l8.5,-2.1M1117.3,37.9l8.5,-2.1M1113.2,81.9L1118.1,62.3M1118.1,62.3l8.5,-2.1M1117.3,65.4l8.5,-2.1M1113.2,109.4L1117.9,89.7M1117.9,89.7l8.5,-2.2M1117.1,92.8l8.5,-2.2M1113.2,136.9L1117.7,117.2M1117.7,117.2l8.5,-2.3M1117.0,120.3l8.5,-2.3M1113.2,164.4L1117.7,144.7M1117.7,144.7l8.5,-2.3M1117.0,147.8l8.5,-2.3M1113.2,191.9L1117.7,172.2M1117.7,172.2l8.5,-2.3M1117.0,175.3l8.5,-2.3M1113.2,219.4L1117.0,199.6M1117.0,199.6l8.4,-2.6M1116.4,202.7l8.4,-2.6M1113.2,246.9L1116.4,227.0M1116.4,227.0l8.3,-2.8M1115.9,230.1l4.2,-1.4M1113.2,274.4L1116.4,254.4M1116.4,254.4l8.3,-2.9M1115.9,257.6l4.2,-1.4M1113.2,301.9L1116.4,282.0M1116.4,282.0l8.3,-2.9M1115.9,285.1l4.2,-1.4M1113.2,329.4L1116.5,309.5M1116.5,309.5l8.3,-2.8M1116.0,312.6l8.3,-2.8M1113.2,356.9L1116.4,337.0M1116.4,337.0l8.3,-2.8M1115.9,340.1l8.3,-2.8M1115.4,343.2l4.2,-1.4M1113.2,384.4L1116.4,364.5M1116.4,364.5l8.3,-2.9M1115.9,367.6l8.3,-2.9M1115.4,370.7l4.2,-1.4M1113.2,411.9L1116.4,392.0M1116.4,392.0l8.3,-2.9M1115.9,395.1l8.3,-2.9M1115.4,398.2l4.2,-1.4M1113.2,439.4L1116.6,419.5M1116.6,419.5l8.3,-2.8M1116.0,422.6l8.3,-2.8M1115.5,425.7l4.2,-1.4M1113.2,466.9L1116.7,447.0M1116.7,447.0l8.4,-2.7M1116.2,450.1l8.4,-2.7M1115.6,453.2l4.2,-1.4M1113.2,494.4L1116.6,474.5M1116.6,474.5l8.4,-2.8M1116.1,477.6l8.4,-2.8M1115.5,480.7l8.4,-2.8M1113.2,521.9L1116.7,502.0M1116.7,502.0l8.4,-2.7M1116.1,505.1l8.4,-2.7M1115.6,508.2l8.4,-2.7M1113.2,549.4L1117.2,529.6M1117.2,529.6l8.4,-2.5M1116.5,532.7l8.4,-2.5M1115.9,535.8l8.4,-2.5M1113.2,576.9L1117.7,557.2M1117.7,557.2l8.5,-2.3M1117.0,560.3l8.5,-2.3M1116.3,563.4l8.5,-2.3M1113.2,604.4L1118.0,584.8M1118.0,584.8l8.5,-2.2M1117.2,587.8l8.5,-2.2M1116.5,590.9l8.5,-2.2M1115.8,594.0l4.3,-1.1M1113.2,631.9L1118.2,612.3M1118.2,612.3l8.5,-2.1M1117.4,615.4l8.5,-2.1M1116.6,618.4l8.5,-2.1M1115.8,621.5l4.3,-1.0M1113.2,659.4L1118.1,639.8M1118.1,639.8l8.5,-2.1M1117.3,642.9l8.5,-2.1M1116.5,645.9l8.5,-2.1M1115.8,649.0l4.3,-1.1M1113.2,686.9L1117.7,667.2M1117.7,667.2l8.5,-2.3M1117.0,670.3l8.5,-2.3M1116.3,673.3l8.5,-2.3M1115.6,676.4l4.2,-1.2M1113.2,714.4L1117.3,694.6M1117.3,694.6l8.4,-2.5M1116.7,697.7l8.4,-2.5M1116.0,700.8l8.4,-2.5M1115.4,703.9l4.2,-1.2M1113.2,741.9L1117.1,722.1M1117.1,722.1l8.4,-2.6M1116.5,725.2l8.4,-2.6M1115.9,728.3l8.4,-2.6M1115.3,731.4l8.4,-2.6M1113.2,769.4L1117.1,749.6M1117.1,749.6l8.4,-2.6M1116.5,752.7l8.4,-2.6M1115.9,755.8l8.4,-2.6M1115.3,758.8l8.4,-2.6M1113.2,796.9L1117.1,777.1M1117.1,777.1l8.4,-2.6M1116.5,780.2l8.4,-2.6M1115.9,783.3l8.4,-2.6M1115.3,786.3l8.4,-2.6M1113.2,824.4L1116.8,804.5M1116.8,804.5l8.4,-2.7M1116.2,807.6l8.4,-2.7M1115.7,810.7l8.4,-2.7M1115.1,813.8l8.4,-2.7M1113.2,851.9L1116.7,832.0M1116.7,832.0l8.4,-2.7M1116.2,835.1l8.4,-2.7M1115.6,838.2l8.4,-2.7M1115.1,841.3l8.4,-2.7M1113.2,879.4L1116.8,859.5M1116.8,859.5l8.4,-2.7M1116.2,862.6l8.4,-2.7M1115.6,865.7l8.4,-2.7M1115.1,868.8l8.4,-2.7M1113.2,906.9L1116.9,887.0M1116.9,887.0l8.4,-2.6M1116.3,890.1l8.4,-2.6M1115.7,893.2l8.4,-2.6M1115.2,896.3l8.4,-2.6M1141.0,26.9L1145.9,7.3M1145.9,7.3l8.5,-2.1M1145.2,10.4l8.5,-2.1M1144.4,13.4l4.3,-1.1M1141.0,54.4L1145.9,34.8M1145.9,34.8l8.5,-2.1M1145.1,37.9l8.5,-2.1M1144.4,40.9l4.3,-1.1M1141.0,81.9L1145.9,62.3M1145.9,62.3l8.5,-2.1M1145.1,65.3l8.5,-2.1M1144.4,68.4l4.3,-1.1M1141.0,109.4L1145.7,89.8M1145.7,89.8l8.5,-2.2M1145.0,92.8l8.5,-2.2M1144.3,95.9l4.3,-1.1M1141.0,136.9L1145.6,117.2M1145.6,117.2l8.5,-2.3M1144.9,120.3l8.5,-2.3M1141.0,164.4L1145.6,144.7M1145.6,144.7l8.5,-2.3M1144.9,147.8l8.5,-2.3M1141.0,191.9L1145.4,172.2M1145.4,172.2l8.5,-2.3M1144.7,175.3l8.5,-2.3M1141.0,219.4L1144.9,199.6M1144.9,199.6l8.4,-2.5M1144.3,202.7l8.4,-2.5M1141.0,246.9L1144.4,227.0M1144.4,227.0l8.4,-2.8M1143.9,230.1l8.4,-2.8M1141.0,274.4L1144.3,254.5M1144.3,254.5l8.3,-2.8M1143.8,257.6l8.3,-2.8M1141.0,301.9L1144.3,282.0M1144.3,282.0l8.3,-2.8M1143.8,285.1l8.3,-2.8M1141.0,329.4L1144.4,309.5M1144.4,309.5l8.3,-2.8M1143.8,312.6l8.3,-2.8M1141.0,356.9L1144.3,337.0M1144.3,337.0l8.3,-2.8M1143.8,340.1l8.3,-2.8M1143.3,343.2l4.2,-1.4M1141.0,384.4L1144.3,364.5M1144.3,364.5l8.3,-2.8M1143.8,367.6l8.3,-2.8M1143.3,370.7l4.2,-1.4M1141.0,411.9L1144.3,392.0M1144.3,392.0l8.3,-2.8M1143.8,395.1l8.3,-2.8M1143.3,398.2l4.2,-1.4M1141.0,439.4L1144.4,419.5M1144.4,419.5l8.3,-2.8M1143.8,422.6l8.3,-2.8M1143.3,425.7l4.2,-1.4M1141.0,466.9L1144.3,447.0M1144.3,447.0l8.3,-2.8M1143.8,450.1l8.3,-2.8M1143.3,453.2l8.3,-2.8M1141.0,494.4L1144.2,474.5M1144.2,474.5l8.3,-2.9M1143.7,477.6l8.3,-2.9M1143.2,480.7l8.3,-2.9M1141.0,521.9L1144.2,502.0M1144.2,502.0l8.3,-2.8M1143.7,505.1l8.3,-2.8M1143.2,508.2l8.3,-2.8M1141.0,549.4L1144.4,529.5M1144.4,529.5l8.4,-2.8M1143.9,532.6l8.4,-2.8M1143.4,535.7l8.4,-2.8M1141.0,576.9L1144.6,557.0M1144.6,557.0l8.4,-2.7M1144.1,560.1l8.4,-2.7M1143.5,563.2l8.4,-2.7M1142.9,566.3l4.2,-1.3M1141.0,604.4L1144.6,584.5M1144.6,584.5l8.4,-2.7M1144.1,587.6l8.4,-2.7M1143.5,590.7l8.4,-2.7M1142.9,593.8l4.2,-1.3M1141.0,631.9L1144.8,612.1M1144.8,612.1l8.4,-2.6M1144.3,615.2l8.4,-2.6M1143.7,618.3l8.4,-2.6M1143.1,621.3l4.2,-1.3M1141.0,659.4L1145.2,639.6M1145.2,639.6l8.5,-2.4M1144.5,642.7l8.5,-2.4M1143.9,645.8l8.5,-2.4M1143.2,648.9l4.2,-1.2M1141.0,686.9L1145.3,667.2M1145.3,667.2l8.5,-2.4M1144.6,670.2l8.5,-2.4M1144.0,673.3l8.5,-2.4M1143.3,676.4l4.2,-1.2M1141.0,714.4L1145.1,694.6M1145.1,694.6l8.4,-2.5M1144.5,697.7l8.4,-2.5M1143.8,700.8l8.4,-2.5M1143.2,703.9l4.2,-1.2M1141.0,741.9L1145.0,722.1M1145.0,722.1l8.4,-2.5M1144.4,725.2l8.4,-2.5M1143.7,728.3l8.4,-2.5M1143.1,731.4l8.4,-2.5M1141.0,769.4L1144.9,749.6M1144.9,749.6l8.4,-2.5M1144.3,752.7l8.4,-2.5M1143.7,755.8l8.4,-2.5M1143.1,758.9l8.4,-2.5M1141.0,796.9L1144.9,777.1M1144.9,777.1l8.4,-2.6M1144.3,780.2l8.4,-2.6M1143.7,783.3l8.4,-2.6M1143.1,786.3l8.4,-2.6M1141.0,824.4L1144.7,804.5M1144.7,804.5l8.4,-2.7M1144.1,807.6l8.4,-2.7M1143.5,810.7l8.4,-2.7M1143.0,813.8l8.4,-2.7M1141.0,851.9L1144.6,832.0M1144.6,832.0l8.4,-2.7M1144.0,835.1l8.4,-2.7M1143.5,838.2l8.4,-2.7M1142.9,841.3l8.4,-2.7M1141.0,879.4L1144.6,859.5M1144.6,859.5l8.4,-2.7M1144.0,862.6l8.4,-2.7M1143.5,865.7l8.4,-2.7M1142.9,868.8l8.4,-2.7M1141.0,906.9L1144.6,887.0M1144.6,887.0l8.4,-2.7M1144.1,890.1l8.4,-2.7M1143.5,893.2l8.4,-2.7M1142.9,896.3l8.4,-2.7M1168.9,26.9L1173.7,7.3M1173.7,7.3l8.5,-2.1M1173.0,10.4l8.5,-2.1M1172.2,13.4l4.3,-1.1M1168.9,54.4L1173.7,34.8M1173.7,34.8l8.5,-2.1M1173.0,37.9l8.5,-2.1M1172.2,40.9l4.3,-1.1M1168.9,81.9L1173.7,62.3M1173.7,62.3l8.5,-2.1M1173.0,65.4l8.5,-2.1M1172.2,68.4l4.3,-1.1M1168.9,109.4L1173.6,89.8M1173.6,89.8l8.5,-2.2M1172.9,92.8l8.5,-2.2M1172.1,95.9l4.3,-1.1M1168.9,136.9L1173.5,117.2M1173.5,117.2l8.5,-2.2M1172.8,120.3l8.5,-2.2M1172.0,123.4l4.3,-1.1M1168.9,164.4L1173.3,144.7M1173.3,144.7l8.5,-2.3M1172.6,147.8l8.5,-2.3M1171.9,150.8l4.2,-1.2M1168.9,191.9L1173.1,172.2M1173.1,172.2l8.5,-2.4M1172.5,175.2l8.5,-2.4M1171.8,178.3l4.2,-1.2M1168.9,219.4L1172.8,199.6M1172.8,199.6l8.4,-2.5M1172.2,202.7l8.4,-2.5M1171.6,205.8l4.2,-1.3M1168.9,246.9L1172.5,227.0M1172.5,227.0l8.4,-2.7M1171.9,230.1l8.4,-2.7M1168.9,274.4L1172.4,254.5M1172.4,254.5l8.4,-2.7M1171.8,257.6l8.4,-2.7M1168.9,301.9L1172.3,282.0M1172.3,282.0l8.4,-2.7M1171.8,285.1l8.4,-2.7M1168.9,329.4L1172.3,309.5M1172.3,309.5l8.4,-2.7M1171.8,312.6l8.4,-2.7M1168.9,356.9L1172.3,337.0M1172.3,337.0l8.4,-2.8M1171.7,340.1l8.4,-2.8M1171.2,343.2l4.2,-1.4M1168.9,384.4L1172.2,364.5M1172.2,364.5l8.3,-2.8M1171.7,367.6l8.3,-2.8M1171.1,370.7l4.2,-1.4M1168.9,411.9L1172.1,392.0M1172.1,392.0l8.3,-2.8M1171.6,395.1l8.3,-2.8M1171.1,398.2l4.2,-1.4M1168.9,439.4L1172.1,419.5M1172.1,419.5l8.3,-2.8M1171.6,422.6l8.3,-2.8M1171.1,425.7l8.3,-2.8M1168.9,466.9L1172.1,447.0M1172.1,447.0l8.3,-2.8M1171.6,450.1l8.3,-2.8M1171.1,453.2l8.3,-2.8M1168.9,494.4L1172.0,474.5M1172.0,474.5l8.3,-2.9M1171.5,477.6l8.3,-2.9M1171.0,480.7l8.3,-2.9M1168.9,521.9L1172.1,502.0M1172.1,502.0l8.3,-2.9M1171.6,505.1l8.3,-2.9M1171.1,508.2l8.3,-2.9M1168.9,549.4L1172.2,529.5M1172.2,529.5l8.3,-2.8M1171.6,532.6l8.3,-2.8M1171.1,535.7l8.3,-2.8M1168.9,576.9L1172.1,557.0M1172.1,557.0l8.3,-2.8M1171.6,560.1l8.3,-2.8M1171.1,563.2l8.3,-2.8M1170.6,566.3l4.2,-1.4M1168.9,604.4L1172.1,584.5M1172.1,584.5l8.3,-2.8M1171.6,587.6l8.3,-2.8M1171.1,590.7l8.3,-2.8M1170.6,593.8l4.2,-1.4M1168.9,631.9L1172.2,612.0M1172.2,612.0l8.3,-2.8M1171.6,615.1l8.3,-2.8M1171.1,618.2l8.3,-2.8M1170.6,621.3l4.2,-1.4M1168.9,659.4L1172.4,639.5M1172.4,639.5l8.4,-2.7M1171.9,642.6l8.4,-2.7M1171.3,645.7l8.4,-2.7M1170.8,648.8l4.2,-1.3M1168.9,686.9L1172.6,667.1M1172.6,667.1l8.4,-2.6M1172.0,670.1l8.4,-2.6M1171.5,673.2l8.4,-2.6M1170.9,676.3l4.2,-1.3M1168.9,714.4L1172.7,694.6M1172.7,694.6l8.4,-2.6M1172.1,697.7l8.4,-2.6M1171.5,700.8l8.4,-2.6M1170.9,703.8l4.2,-1.3M1168.9,741.9L1172.8,722.1M1172.8,722.1l8.4,-2.6M1172.2,725.2l8.4,-2.6M1171.5,728.3l8.4,-2.6M1170.9,731.4l4.2,-1.3M1168.9,769.4L1172.8,749.6M1172.8,749.6l8.4,-2.6M1172.1,752.7l8.4,-2.6M1171.5,755.8l8.4,-2.6M1170.9,758.9l8.4,-2.6M1168.9,796.9L1172.7,777.1M1172.7,777.1l8.4,-2.6M1172.1,780.2l8.4,-2.6M1171.5,783.2l8.4,-2.6M1170.9,786.3l8.4,-2.6M1168.9,824.4L1172.5,804.5M1172.5,804.5l8.4,-2.7M1171.9,807.6l8.4,-2.7M1171.4,810.7l8.4,-2.7M1170.8,813.8l8.4,-2.7M1168.9,851.9L1172.4,832.0M1172.4,832.0l8.4,-2.7M1171.8,835.1l8.4,-2.7M1171.3,838.2l8.4,-2.7M1170.7,841.3l8.4,-2.7M1168.9,879.4L1172.4,859.5M1172.4,859.5l8.4,-2.7M1171.8,862.6l8.4,-2.7M1171.3,865.7l8.4,-2.7M1170.7,868.8l8.4,-2.7M1168.9,906.9L1172.4,887.0M1172.4,887.0l8.4,-2.7M1171.8,890.1l8.4,-2.7M1171.3,893.2l8.4,-2.7M1170.7,896.3l8.4,-2.7M1196.7,26.9L1201.6,7.3M1201.6,7.3l8.5,-2.1M1200.8,10.4l8.5,-2.1M1200.1,13.4l4.3,-1.1M1196.7,54.4L1201.6,34.8M1201.6,34.8l8.5,-2.1M1200.8,37.9l8.5,-2.1M1200.1,40.9l4.3,-1.1M1196.7,81.9L1201.6,62.3M1201.6,62.3l8.5,-2.1M1200.8,65.4l8.5,-2.1M1200.0,68.4l4.3,-1.1M1196.7,109.4L1201.5,89.8M1201.5,89.8l8.5,-2.2M1200.7,92.8l8.5,-2.2M1200.0,95.9l4.3,-1.1M1196.7,136.9L1201.3,117.2M1201.3,117.2l8.5,-2.3M1200.6,120.3l8.5,-2.3M1199.8,123.4l4.3,-1.1M1196.7,164.4L1201.2,144.7M1201.2,144.7l8.5,-2.3M1200.5,147.8l8.5,-2.3M1199.8,150.8l4.2,-1.2M1196.7,191.9L1200.9,172.1M1200.9,172.1l8.5,-2.4M1200.2,175.2l8.5,-2.4M1199.6,178.3l4.2,-1.2M1196.7,219.4L1200.5,199.6M1200.5,199.6l8.4,-2.6M1199.9,202.7l8.4,-2.6M1199.3,205.7l4.2,-1.3M1196.7,246.9L1200.3,227.0M1200.3,227.0l8.4,-2.7M1199.7,230.1l8.4,-2.7M1199.2,233.2l4.2,-1.3M1196.7,274.4L1200.3,254.5M1200.3,254.5l8.4,-2.7M1199.7,257.6l8.4,-2.7M1199.1,260.7l4.2,-1.3M1196.7,301.9L1200.3,282.0M1200.3,282.0l8.4,-2.7M1199.7,285.1l8.4,-2.7M1199.1,288.2l4.2,-1.3M1196.7,329.4L1200.2,309.5M1200.2,309.5l8.4,-2.7M1199.7,312.6l8.4,-2.7M1199.1,315.7l4.2,-1.4M1196.7,356.9L1200.1,337.0M1200.1,337.0l8.4,-2.8M1199.6,340.1l8.4,-2.8M1199.0,343.2l4.2,-1.4M1196.7,384.4L1199.9,364.5M1199.9,364.5l8.3,-2.8M1199.4,367.6l8.3,-2.8M1198.9,370.7l8.3,-2.8M1196.7,411.9L1199.8,391.9M1199.8,391.9l8.3,-2.9M1199.3,395.0l8.3,-2.9M1198.8,398.2l8.3,-2.9M1196.7,439.4L1199.7,419.4M1199.7,419.4l8.3,-2.9M1199.2,422.5l8.3,-2.9M1198.8,425.7l8.3,-2.9M1196.7,466.9L1199.7,446.9M1199.7,446.9l8.3,-2.9M1199.3,450.0l8.3,-2.9M1198.8,453.2l8.3,-2.9M1196.7,494.4L1199.9,474.4M1199.9,474.4l8.3,-2.9M1199.4,477.6l8.3,-2.9M1198.9,480.7l8.3,-2.9M1196.7,521.9L1199.9,502.0M1199.9,502.0l8.3,-2.8M1199.4,505.1l8.3,-2.8M1198.9,508.2l8.3,-2.8M1196.7,549.4L1199.9,529.5M1199.9,529.5l8.3,-2.8M1199.4,532.6l8.3,-2.8M1198.9,535.7l8.3,-2.8M1198.4,538.8l4.2,-1.4M1196.7,576.9L1199.9,557.0M1199.9,557.0l8.3,-2.9M1199.4,560.1l8.3,-2.9M1198.9,563.2l8.3,-2.9M1198.4,566.3l4.2,-1.4M1196.7,604.4L1199.9,584.4M1199.9,584.4l8.3,-2.9M1199.4,587.6l8.3,-2.9M1198.9,590.7l8.3,-2.9M1198.4,593.8l4.2,-1.4M1196.7,631.9L1199.9,612.0M1199.9,612.0l8.3,-2.9M1199.4,615.1l8.3,-2.9M1198.9,618.2l8.3,-2.9M1198.4,621.3l4.2,-1.4M1196.7,659.4L1200.0,639.5M1200.0,639.5l8.3,-2.8M1199.5,642.6l8.3,-2.8M1199.0,645.7l8.3,-2.8M1198.5,648.8l4.2,-1.4M1196.7,686.9L1200.0,667.0M1200.0,667.0l8.3,-2.8M1199.5,670.1l8.3,-2.8M1199.0,673.2l8.3,-2.8M1198.5,676.3l4.2,-1.4M1196.7,714.4L1200.1,694.5M1200.1,694.5l8.3,-2.8M1199.5,697.6l8.3,-2.8M1199.0,700.7l8.3,-2.8M1198.5,703.8l8.3,-2.8M1196.7,741.9L1200.2,722.0M1200.2,722.0l8.4,-2.7M1199.7,725.1l8.4,-2.7M1199.1,728.2l8.4,-2.7M1198.6,731.3l8.4,-2.7M1196.7,769.4L1200.4,749.5M1200.4,749.5l8.4,-2.6M1199.8,752.6l8.4,-2.6M1199.2,755.7l8.4,-2.6M1198.7,758.8l8.4,-2.6M1196.7,796.9L1200.4,777.0M1200.4,777.0l8.4,-2.7M1199.8,780.1l8.4,-2.7M1199.2,783.2l8.4,-2.7M1198.6,786.3l8.4,-2.7M1196.7,824.4L1200.3,804.5M1200.3,804.5l8.4,-2.7M1199.7,807.6l8.4,-2.7M1199.1,810.7l8.4,-2.7M1198.6,813.8l8.4,-2.7M1196.7,851.9L1200.2,832.0M1200.2,832.0l8.4,-2.7M1199.7,835.1l8.4,-2.7M1199.1,838.2l8.4,-2.7M1198.6,841.3l8.4,-2.7M1196.7,879.4L1200.2,859.5M1200.2,859.5l8.4,-2.7M1199.7,862.6l8.4,-2.7M1199.1,865.7l8.4,-2.7M1198.6,868.8l8.4,-2.7M1196.7,906.9L1200.2,887.0M1200.2,887.0l8.4,-2.7M1199.7,890.1l8.4,-2.7M1199.1,893.2l8.4,-2.7M1198.6,896.3l8.4,-2.7M1224.5,26.9L1229.4,7.3M1229.4,7.3l8.5,-2.1M1228.6,10.4l8.5,-2.1M1227.9,13.4l4.3,-1.1M1224.5,54.4L1229.4,34.8M1229.4,34.8l8.5,-2.1M1228.6,37.9l8.5,-2.1M1227.9,40.9l4.3,-1.1M1224.5,81.9L1229.4,62.3M1229.4,62.3l8.5,-2.1M1228.6,65.4l8.5,-2.1M1227.9,68.4l4.3,-1.1M1224.5,109.4L1229.2,89.7M1229.2,89.7l8.5,-2.2M1228.5,92.8l8.5,-2.2M1227.7,95.9l4.3,-1.1M1224.5,136.9L1229.1,117.2M1229.1,117.2l8.5,-2.3M1228.4,120.3l8.5,-2.3M1227.6,123.4l4.3,-1.1M1224.5,164.4L1229.0,144.7M1229.0,144.7l8.5,-2.3M1228.3,147.8l8.5,-2.3M1227.6,150.9l4.2,-1.1M1224.5,191.9L1228.8,172.2M1228.8,172.2l8.5,-2.4M1228.1,175.2l8.5,-2.4M1227.4,178.3l4.2,-1.2M1224.5,219.4L1228.1,199.5M1228.1,199.5l8.4,-2.7M1227.6,202.6l8.4,-2.7M1227.0,205.7l8.4,-2.7M1224.5,246.9L1228.0,227.0M1228.0,227.0l8.4,-2.7M1227.5,230.1l8.4,-2.7M1226.9,233.2l8.4,-2.7M1224.5,274.4L1228.0,254.5M1228.0,254.5l8.4,-2.7M1227.5,257.6l8.4,-2.7M1226.9,260.7l8.4,-2.7M1224.5,301.9L1228.1,282.0M1228.1,282.0l8.4,-2.7M1227.5,285.1l8.4,-2.7M1227.0,288.2l4.2,-1.4M1224.5,329.4L1228.0,309.5M1228.0,309.5l8.4,-2.7M1227.5,312.6l8.4,-2.7M1226.9,315.7l4.2,-1.4M1224.5,356.9L1227.9,337.0M1227.9,337.0l8.3,-2.8M1227.3,340.1l8.3,-2.8M1226.8,343.2l8.3,-2.8M1224.5,384.4L1227.6,364.4M1227.6,364.4l8.3,-2.9M1227.1,367.5l8.3,-2.9M1226.6,370.7l8.3,-2.9M1224.5,411.9L1227.4,391.9M1227.4,391.9l8.3,-3.0M1226.9,395.0l8.3,-3.0M1226.5,398.1l8.3,-3.0M1224.5,439.4L1227.3,419.4M1227.3,419.4l8.3,-3.0M1226.9,422.5l8.3,-3.0M1226.5,425.6l8.3,-3.0M1224.5,466.9L1227.4,446.9M1227.4,446.9l8.3,-3.0M1226.9,450.0l8.3,-3.0M1226.5,453.1l8.3,-3.0M1224.5,494.4L1227.5,474.4M1227.5,474.4l8.3,-2.9M1227.0,477.5l8.3,-2.9M1226.6,480.7l8.3,-2.9M1224.5,521.9L1227.7,502.0M1227.7,502.0l8.3,-2.9M1227.2,505.1l8.3,-2.9M1226.7,508.2l8.3,-2.9M1224.5,549.4L1227.8,529.5M1227.8,529.5l8.3,-2.8M1227.2,532.6l8.3,-2.8M1226.7,535.7l8.3,-2.8M1226.2,538.8l4.2,-1.4M1224.5,576.9L1227.7,557.0M1227.7,557.0l8.3,-2.9M1227.2,560.1l8.3,-2.9M1226.7,563.2l8.3,-2.9M1226.2,566.3l4.2,-1.4M1224.5,604.4L1227.7,584.5M1227.7,584.5l8.3,-2.9M1227.2,587.6l8.3,-2.9M1226.7,590.7l8.3,-2.9M1226.2,593.8l4.2,-1.4M1224.5,631.9L1227.7,612.0M1227.7,612.0l8.3,-2.8M1227.2,615.1l8.3,-2.8M1226.7,618.2l8.3,-2.8M1226.2,621.3l4.2,-1.4M1224.5,659.4L1227.7,639.5M1227.7,639.5l8.3,-2.8M1227.2,642.6l8.3,-2.8M1226.7,645.7l8.3,-2.8M1226.2,648.8l4.2,-1.4M1224.5,686.9L1227.7,667.0M1227.7,667.0l8.3,-2.9M1227.2,670.1l8.3,-2.9M1226.7,673.2l8.3,-2.9M1226.2,676.3l8.3,-2.9M1224.5,714.4L1227.7,694.5M1227.7,694.5l8.3,-2.9M1227.2,697.6l8.3,-2.9M1226.7,700.7l8.3,-2.9M1226.2,703.8l8.3,-2.9M1224.5,741.9L1227.8,722.0M1227.8,722.0l8.3,-2.8M1227.3,725.1l8.3,-2.8M1226.8,728.2l8.3,-2.8M1226.3,731.3l8.3,-2.8M1224.5,769.4L1228.0,749.5M1228.0,749.5l8.4,-2.7M1227.5,752.6l8.4,-2.7M1226.9,755.7l8.4,-2.7M1226.4,758.8l8.4,-2.7M1224.5,796.9L1228.1,777.0M1228.1,777.0l8.4,-2.7M1227.5,780.1l8.4,-2.7M1227.0,783.2l8.4,-2.7M1226.4,786.3l8.4,-2.7M1224.5,824.4L1228.0,804.5M1228.0,804.5l8.4,-2.7M1227.5,807.6l8.4,-2.7M1226.9,810.7l8.4,-2.7M1226.4,813.8l8.4,-2.7M1224.5,851.9L1228.0,832.0M1228.0,832.0l8.4,-2.7M1227.5,835.1l8.4,-2.7M1226.9,838.2l8.4,-2.7M1226.4,841.3l8.4,-2.7M1224.5,879.4L1228.0,859.5M1228.0,859.5l8.4,-2.7M1227.5,862.6l8.4,-2.7M1226.9,865.7l8.4,-2.7M1226.4,868.8l8.4,-2.7M1224.5,906.9L1228.1,887.0M1228.1,887.0l8.4,-2.7M1227.5,890.1l8.4,-2.7M1227.0,893.2l8.4,-2.7M1226.4,896.3l8.4,-2.7M1252.3,26.9L1257.2,7.3M1257.2,7.3l8.5,-2.1M1256.4,10.4l8.5,-2.1M1255.7,13.4l4.3,-1.1M1252.3,54.4L1257.2,34.8M1257.2,34.8l8.5,-2.1M1256.4,37.8l8.5,-2.1M1255.7,40.9l4.3,-1.1M1252.3,81.9L1257.1,62.3M1257.1,62.3l8.5,-2.2M1256.4,65.3l8.5,-2.2M1255.6,68.4l4.3,-1.1M1252.3,109.4L1256.9,89.7M1256.9,89.7l8.5,-2.3M1256.2,92.8l8.5,-2.3M1255.5,95.9l4.3,-1.1M1252.3,136.9L1256.9,117.2M1256.9,117.2l8.5,-2.3M1256.2,120.3l8.5,-2.3M1255.5,123.4l4.3,-1.1M1252.3,164.4L1256.9,144.7M1256.9,144.7l8.5,-2.3M1256.2,147.8l8.5,-2.3M1255.5,150.9l4.2,-1.1M1252.3,191.9L1256.6,172.2M1256.6,172.2l8.5,-2.4M1256.0,175.2l8.5,-2.4M1255.3,178.3l4.2,-1.2M1252.3,219.4L1255.9,199.5M1255.9,199.5l8.4,-2.7M1255.4,202.6l8.4,-2.7M1254.8,205.7l8.4,-2.7M1252.3,246.9L1255.9,227.0M1255.9,227.0l8.4,-2.7M1255.3,230.1l8.4,-2.7M1254.8,233.2l8.4,-2.7M1252.3,274.4L1255.9,254.5M1255.9,254.5l8.4,-2.7M1255.3,257.6l8.4,-2.7M1254.8,260.7l8.4,-2.7M1252.3,301.9L1255.9,282.0M1255.9,282.0l8.4,-2.7M1255.3,285.1l8.4,-2.7M1254.8,288.2l8.4,-2.7M1252.3,329.4L1255.9,309.5M1255.9,309.5l8.4,-2.7M1255.3,312.6l8.4,-2.7M1254.8,315.7l8.4,-2.7M1252.3,356.9L1255.6,337.0M1255.6,337.0l8.3,-2.8M1255.1,340.1l8.3,-2.8M1254.6,343.2l8.3,-2.8M1252.3,384.4L1255.3,364.4M1255.3,364.4l8.3,-2.9M1254.9,367.5l8.3,-2.9M1254.4,370.7l8.3,-2.9M1252.3,411.9L1255.2,391.9M1255.2,391.9l8.3,-3.0M1254.7,395.0l8.3,-3.0M1254.3,398.1l8.3,-3.0M1252.3,439.4L1255.2,419.4M1255.2,419.4l8.3,-3.0M1254.7,422.5l8.3,-3.0M1254.3,425.6l8.3,-3.0M1252.3,466.9L1255.2,446.9M1255.2,446.9l8.3,-3.0M1254.7,450.0l8.3,-3.0M1254.3,453.1l8.3,-3.0M1252.3,494.4L1255.2,474.4M1255.2,474.4l8.3,-3.0M1254.8,477.5l8.3,-3.0M1254.3,480.6l8.3,-3.0M1252.3,521.9L1255.4,501.9M1255.4,501.9l8.3,-2.9M1255.0,505.1l8.3,-2.9M1254.5,508.2l8.3,-2.9M1252.3,549.4L1255.6,529.5M1255.6,529.5l8.3,-2.8M1255.1,532.6l8.3,-2.8M1254.6,535.7l8.3,-2.8M1254.1,538.8l4.2,-1.4M1252.3,576.9L1255.6,557.0M1255.6,557.0l8.3,-2.8M1255.1,560.1l8.3,-2.8M1254.6,563.2l8.3,-2.8M1254.1,566.3l4.2,-1.4M1252.3,604.4L1255.6,584.5M1255.6,584.5l8.3,-2.8M1255.1,587.6l8.3,-2.8M1254.6,590.7l8.3,-2.8M1254.1,593.8l4.2,-1.4M1252.3,631.9L1255.6,612.0M1255.6,612.0l8.3,-2.8M1255.1,615.1l8.3,-2.8M1254.6,618.2l8.3,-2.8M1254.1,621.3l4.2,-1.4M1252.3,659.4L1255.5,639.5M1255.5,639.5l8.3,-2.9M1255.0,642.6l8.3,-2.9M1254.5,645.7l8.3,-2.9M1254.0,648.8l8.3,-2.9M1252.3,686.9L1255.5,666.9M1255.5,666.9l8.3,-2.9M1255.0,670.1l8.3,-2.9M1254.5,673.2l8.3,-2.9M1254.0,676.3l8.3,-2.9M1252.3,714.4L1255.5,694.4M1255.5,694.4l8.3,-2.9M1255.0,697.6l8.3,-2.9M1254.5,700.7l8.3,-2.9M1254.0,703.8l8.3,-2.9M1252.3,741.9L1255.6,722.0M1255.6,722.0l8.3,-2.8M1255.1,725.1l8.3,-2.8M1254.6,728.2l8.3,-2.8M1254.1,731.3l8.3,-2.8M1252.3,769.4L1255.8,749.5M1255.8,749.5l8.4,-2.8M1255.2,752.6l8.4,-2.8M1254.7,755.7l8.4,-2.8M1254.2,758.8l8.4,-2.8M1252.3,796.9L1255.9,777.0M1255.9,777.0l8.4,-2.7M1255.3,780.1l8.4,-2.7M1254.8,783.2l8.4,-2.7M1254.2,786.3l8.4,-2.7M1252.3,824.4L1255.9,804.5M1255.9,804.5l8.4,-2.7M1255.3,807.6l8.4,-2.7M1254.8,810.7l8.4,-2.7M1254.2,813.8l8.4,-2.7M1252.3,851.9L1255.9,832.0M1255.9,832.0l8.4,-2.7M1255.3,835.1l8.4,-2.7M1254.8,838.2l8.4,-2.7M1254.2,841.3l8.4,-2.7M1252.3,879.4L1255.9,859.5M1255.9,859.5l8.4,-2.7M1255.3,862.6l8.4,-2.7M1254.8,865.7l8.4,-2.7M1254.2,868.8l8.4,-2.7M1252.3,906.9L1255.9,887.0M1255.9,887.0l8.4,-2.7M1255.3,890.1l8.4,-2.7M1254.8,893.2l8.4,-2.7M1254.2,896.3l8.4,-2.7" fill="none" stroke="#333" stroke-width="0.8"/>
<path d="M974.8,639.2l6.5,1.2L974.6,643.7ZM1002.9,639.2l6.4,1.3L1002.7,643.7Z" fill="#111"/>
<g font-family="Liberation Sans, sans-serif" font-weight="bold" font-size="10" fill="#fff" text-anchor="middle"><text x="851.5" y="544.9">1.0</text><text x="895.6" y="560.9">0.7</text><text x="933" y="578.7">0.7</text><text x="988.4" y="593.7">1.0</text><text x="1013.8" y="574.9">0.6</text><text x="1027.8" y="515.9">0.8</text><text x="832.8" y="496.2">0.4</text><text x="1049.5" y="473.9">0.3</text><text x="1083.8" y="529.6">1.0</text><text x="1135" y="492.6">1.3</text><text x="1114.2" y="457.6">1.0</text><text x="1162.5" y="462.1">0.3</text><text x="1042" y="570.9">0.7</text><text x="1182.5" y="345.9">1.4</text><text x="1176" y="361.8">1.4</text><text x="1166" y="391.8">0.8</text><text x="1203" y="385.3">0.6</text><text x="1188" y="411.4">0.6</text><text x="1151.6" y="417.1">1.6</text><text x="1144" y="433.6">1.7</text><text x="1080.3" y="430.3">0.5</text><text x="871.2" y="263.9">0.3</text><text x="887" y="270.9">0.3</text><text x="961.2" y="224.7">0.6</text><text x="987.5" y="235.4">1.5</text><text x="1055.5" y="247.9">1.1</text><text x="1106.2" y="292.1">2.5</text><text x="876.2" y="348.9">0.5</text><text x="923.8" y="378.9">0.6</text><text x="916.2" y="394.6">0.6</text><text x="703" y="314.6">0.4</text><text x="687.5" y="335.9">0.3</text><text x="666.2" y="358.4">0.3</text><text x="694.5" y="377.9">0.7</text><text x="788.8" y="310.4">0.8</text><text x="763.8" y="357.9">1.0</text><text x="814.5" y="434.6">0.3</text><text x="856.2" y="457.6">0.5</text><text x="898.8" y="459.6">0.5</text><text x="671.2" y="501.6">0.4</text><text x="668.8" y="214.7">0.5</text><text x="657" y="230.9">0.5</text><text x="640.8" y="252.7">0.4</text><text x="700.8" y="267.1">0.4</text><text x="669.5" y="281.4">0.4</text><text x="745" y="217.2">0.4</text><text x="775.5" y="235.4">0.5</text><text x="828" y="198.9">0.4</text><text x="763" y="534.6">0.2</text><text x="340" y="371.4">0.3</text></g>
<g font-family="Liberation Sans, sans-serif" font-size="8" fill="#222" opacity="0.99"><text x="533" y="8" text-anchor="middle">20W</text><text x="1060" y="8" text-anchor="middle">15W</text><text transform="translate(2.3,172) rotate(90)" text-anchor="middle">66N</text><text transform="translate(1277.7,168) rotate(-90)" text-anchor="middle">66N</text><text transform="translate(2.3,706) rotate(90)" text-anchor="middle">64N</text><text transform="translate(1277.7,706) rotate(-90)" text-anchor="middle">64N</text></g>
<rect x="0" y="901" width="1280" height="59" fill="#fff"/>
<rect x="0" y="902" width="1280" height="16" fill="#000"/>
<rect x="1.50" y="903" width="48.15" height="14" fill="#6b4a6e"/>
<rect x="50.65" y="903" width="48.15" height="14" fill="#9a5e9e"/>
<rect x="99.81" y="903" width="48.15" height="14" fill="#cc77d0"/>
<rect x="148.96" y="903" width="48.15" height="14" fill="#ff88ff"/>
<rect x="198.12" y="903" width="48.15" height="14" fill="#dd6fdd"/>
<rect x="247.27" y="903" width="48.15" height="14" fill="#bf59c2"/>
<rect x="296.42" y="903" width="48.15" height="14" fill="#8e2a90"/>
<rect x="345.58" y="903" width="48.15" height="14" fill="#5a005a"/>
<rect x="394.73" y="903" width="48.15" height="14" fill="#6c2d7e"/>
<rect x="443.88" y="903" width="48.15" height="14" fill="#8459a8"/>
<rect x="493.04" y="903" width="48.15" height="14" fill="#9b85d3"/>
<rect x="542.19" y="903" width="48.15" height="14" fill="#b4b4ff"/>
<rect x="591.35" y="903" width="48.15" height="14" fill="#9aa2e0"/>
<rect x="640.50" y="903" width="48.15" height="14" fill="#8a98d8"/>
<rect x="689.65" y="903" width="48.15" height="14" fill="#5f7dab"/>
<rect x="738.81" y="903" width="48.15" height="14" fill="#365f7d"/>
<rect x="787.96" y="903" width="48.15" height="14" fill="#064550"/>
<rect x="837.12" y="903" width="48.15" height="14" fill="#194f59"/>
<rect x="886.27" y="903" width="48.15" height="14" fill="#265861"/>
<rect x="935.42" y="903" width="48.15" height="14" fill="#34636b"/>
<rect x="984.58" y="903" width="48.15" height="14" fill="#467178"/>
<rect x="1033.73" y="903" width="48.15" height="14" fill="#5b8288"/>
<rect x="1082.88" y="903" width="48.15" height="14" fill="#72959a"/>
<rect x="1132.04" y="903" width="48.15" height="14" fill="#8aa5aa"/>
<rect x="1181.19" y="903" width="48.15" height="14" fill="#c4d2d4"/>
<rect x="1230.35" y="903" width="48.15" height="14" fill="#ffffff"/>
<g font-family="DejaVu Sans Condensed, DejaVu Sans, Liberation Sans, sans-serif" font-size="10" fill="#111" opacity="0.99"><text x="1.8" y="928.8">0.2</text><text x="51.0" y="928.8">0.3</text><text x="100.1" y="928.8">0.4</text><text x="149.3" y="928.8">0.5</text><text x="198.4" y="928.8">0.8</text><text x="247.6" y="928.8">1</text><text x="296.7" y="928.8">1.5</text><text x="345.9" y="928.8">2</text><text x="395.0" y="928.8">2.5</text><text x="444.2" y="928.8">3</text><text x="493.3" y="928.8">3.5</text><text x="542.5" y="928.8">4</text><text x="591.6" y="928.8">4.5</text><text x="640.8" y="928.8">5</text><text x="690.0" y="928.8">6</text><text x="739.1" y="928.8">7</text><text x="788.3" y="928.8">8</text><text x="837.4" y="928.8">9</text><text x="886.6" y="928.8">10</text><text x="935.7" y="928.8">12</text><text x="984.9" y="928.8">14</text><text x="1034.0" y="928.8">16</text><text x="1083.2" y="928.8">18</text><text x="1132.3" y="928.8">20</text><text x="1181.5" y="928.8">25</text><text x="1230.6" y="928.8">30</text></g>
<rect x="0" y="931.7" width="1280" height="13.6" fill="#000"/>
<rect x="1.50" y="932.7" width="50.12" height="11.6" fill="#ccffcc"/>
<rect x="52.62" y="932.7" width="50.12" height="11.6" fill="#a3d9a0"/>
<rect x="103.74" y="932.7" width="50.12" height="11.6" fill="#74b274"/>
<rect x="154.86" y="932.7" width="50.12" height="11.6" fill="#2f7a2f"/>
<rect x="205.98" y="932.7" width="50.12" height="11.6" fill="#004d00"/>
<rect x="257.10" y="932.7" width="50.12" height="11.6" fill="#1f5f2a"/>
<rect x="308.22" y="932.7" width="50.12" height="11.6" fill="#306a40"/>
<rect x="359.34" y="932.7" width="50.12" height="11.6" fill="#4a7d62"/>
<rect x="410.46" y="932.7" width="50.12" height="11.6" fill="#5f8c7e"/>
<rect x="461.58" y="932.7" width="50.12" height="11.6" fill="#789aa0"/>
<rect x="512.70" y="932.7" width="50.12" height="11.6" fill="#8ea3c4"/>
<rect x="563.82" y="932.7" width="50.12" height="11.6" fill="#a4ade2"/>
<rect x="614.94" y="932.7" width="50.12" height="11.6" fill="#bbbbff"/>
<rect x="666.06" y="932.7" width="50.12" height="11.6" fill="#9999ee"/>
<rect x="717.18" y="932.7" width="50.12" height="11.6" fill="#7777dd"/>
<rect x="768.30" y="932.7" width="50.12" height="11.6" fill="#5050cc"/>
<rect x="819.42" y="932.7" width="50.12" height="11.6" fill="#2e2ec0"/>
<rect x="870.54" y="932.7" width="50.12" height="11.6" fill="#0000b0"/>
<rect x="921.66" y="932.7" width="50.12" height="11.6" fill="#6644cc"/>
<rect x="972.78" y="932.7" width="50.12" height="11.6" fill="#c088e8"/>
<rect x="1023.90" y="932.7" width="50.12" height="11.6" fill="#f8a8ee"/>
<rect x="1075.02" y="932.7" width="50.12" height="11.6" fill="#f890c8"/>
<rect x="1126.14" y="932.7" width="50.12" height="11.6" fill="#f870a0"/>
<rect x="1177.26" y="932.7" width="50.12" height="11.6" fill="#f83858"/>
<rect x="1228.38" y="932.7" width="50.12" height="11.6" fill="#ff0000"/>
<g font-family="DejaVu Sans Condensed, DejaVu Sans, Liberation Sans, sans-serif" font-size="10" fill="#111" opacity="0.99"><text x="1.8" y="955.7">0.1</text><text x="52.9" y="955.7">0.3</text><text x="104.0" y="955.7">0.5</text><text x="155.2" y="955.7">0.8</text><text x="206.3" y="955.7">1</text><text x="257.4" y="955.7">1.5</text><text x="308.5" y="955.7">2</text><text x="359.6" y="955.7">2.5</text><text x="410.8" y="955.7">3</text><text x="461.9" y="955.7">3.5</text><text x="513.0" y="955.7">4</text><text x="564.1" y="955.7">4.5</text><text x="615.2" y="955.7">5</text><text x="666.4" y="955.7">6</text><text x="717.5" y="955.7">7</text><text x="768.6" y="955.7">8</text><text x="819.7" y="955.7">9</text><text x="870.8" y="955.7">10</text><text x="922.0" y="955.7">12</text><text x="973.1" y="955.7">14</text><text x="1024.2" y="955.7">16</text><text x="1075.3" y="955.7">18</text><text x="1126.4" y="955.7">20</text><text x="1177.6" y="955.7">25</text><text x="1228.7" y="955.7">30</text></g>
<rect x="0" y="0" width="1" height="960" fill="#000"/><rect x="0" y="958.4" width="1280" height="1.6" fill="#000"/><rect x="1279" y="0" width="1" height="960" fill="#000"/><rect x="0" y="0" width="1280" height="1" fill="#000"/></svg>
<div id="lg"><div class="l1"><b>UWC/IG</b>: Vindur (10m),</div><div>rigning/skúrir (grænt/blátt/rautt - mm/1klst) og</div><div>slydda/snjókoma (grátt/bleikt/grænt - mm/1klst)</div><div>IT: Mán. 20. 10. 2025 18Z</div><div><b>VT: Mið. 22.10.2025 23Z</b> (+53 h)</div></div>
</body></html>
